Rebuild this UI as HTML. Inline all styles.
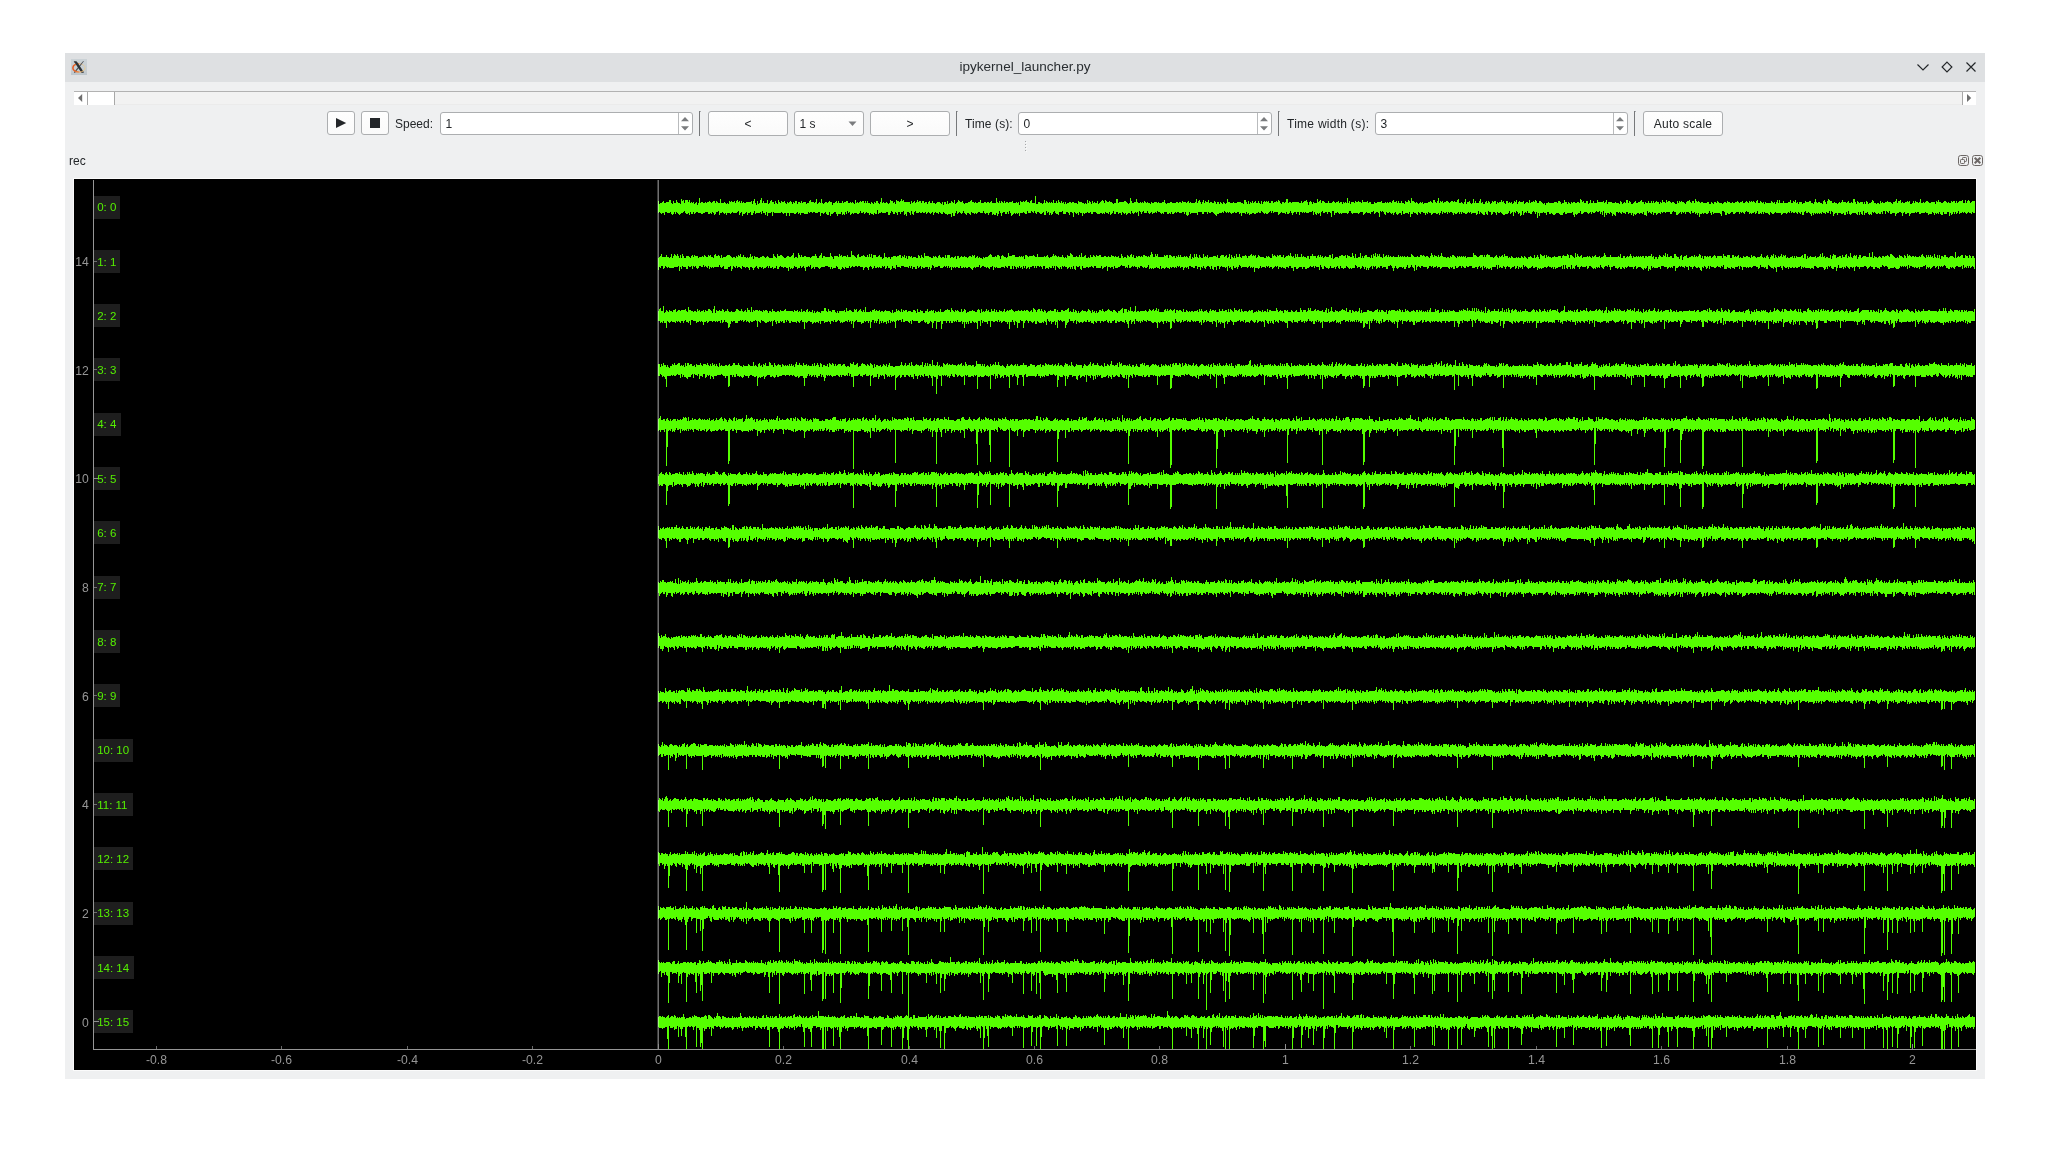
<!DOCTYPE html>
<html lang="en"><head><meta charset="utf-8"><title>ipykernel_launcher.py</title>
<style>
*{box-sizing:border-box;margin:0;padding:0}
html,body{width:2050px;height:1156px;overflow:hidden;background:#fff}
body{position:relative;font-family:"Liberation Sans",sans-serif;font-size:12px;color:#232629}
#root{position:absolute;left:0;top:0;width:2050px;height:1156px;will-change:transform}
.abs{position:absolute}
.win{position:absolute;left:65px;top:53px;width:1920px;height:1026px;background:#eff0f1}
.tbar{position:absolute;left:0;top:0;width:1920px;height:29px;background:#dee0e2}
.title{position:absolute;left:0;top:0;width:1920px;height:28px;line-height:28px;text-align:center;font-size:13.55px;color:#2a2e32;white-space:nowrap}
.sb{position:absolute;left:74px;top:91px;width:1902px;height:14px;background:#f2f2f2;border-top:1px solid #b2b2b2}
.sb .l,.sb .r,.sb .h{position:absolute;top:0;height:13px;background:#fff}
.btn{position:absolute;top:111px;height:25px;border:1px solid #acaeb0;border-radius:3px;background:linear-gradient(#fefefe,#fafafa);text-align:center;line-height:25px;white-space:nowrap}
.spin{position:absolute;top:112px;height:23px;border:1px solid #acaeb0;border-radius:3px;background:#fff;line-height:23px;padding-left:4.5px;white-space:nowrap;overflow:hidden}
.spin i{position:absolute;right:13px;top:0;width:1px;height:21px;background:#b9bbbd}
.lbl{position:absolute;top:112px;height:25px;line-height:25px;white-space:nowrap}
.sep{position:absolute;top:111px;width:1px;height:25px;background:#76787a}
.sep:after{content:"";position:absolute;left:1px;top:0;width:1px;height:1px;background:#a9abad}
svg{position:absolute;display:block;overflow:visible}
.plotwrap{position:absolute;left:73px;top:178px;width:1904px;height:893px;background:#fbfbfb}
.plot{left:1px;top:1px}
</style></head><body><div id="root">
<div class="win"><div class="tbar"></div><div class="title">ipykernel_launcher.py</div></div>
<svg class="abs" style="left:71px;top:59px" width="16" height="16" viewBox="0 0 16 16"><defs><linearGradient id="ibg" x1="0" y1="0" x2="0" y2="1"><stop offset="0" stop-color="#cbd2d6"/><stop offset="0.75" stop-color="#c6cdd2"/><stop offset="1" stop-color="#bcc5cb"/></linearGradient><linearGradient id="iel" gradientUnits="userSpaceOnUse" x1="1.5" y1="0" x2="14.5" y2="0"><stop offset="0" stop-color="#e8521a"/><stop offset="0.45" stop-color="#ea8c48"/><stop offset="0.8" stop-color="#eec580"/><stop offset="1" stop-color="#efcf8c"/></linearGradient></defs><rect width="16" height="16" fill="url(#ibg)"/><g fill="none" stroke="url(#iel)"><path d="M1.9 8.9 A6.2 4.2 0 0 1 8 4.7" stroke-width="1.5"/><path d="M8 4.7 A6.2 4.2 0 0 1 14.1 8.9" stroke-width="0.8" stroke-opacity="0.8"/></g><path d="M12.9 2.3 L12.2 2.1 L3 13.1 L3 13.8 L4.2 13.8 Z" fill="#4b4f53"/><path d="M2.9 2.2 L5.3 2.2 Q5.9 2.6 6.5 3.6 L12.7 13 L12.7 13.7 L10.4 13.7 L4.1 4.2 Q3.5 3.2 2.9 2.9 Z" fill="#2d3135"/><g fill="none" stroke="url(#iel)"><path d="M1.9 8.9 A6.2 4.2 0 0 0 8 13.1" stroke-width="1.5"/><path d="M8 13.1 A6.2 4.2 0 0 0 14.1 8.9" stroke-width="1.0"/></g></svg>
<svg class="abs" style="left:1910px;top:56px" width="72" height="22" viewBox="1910 56 72 22" fill="none" stroke="#232629" stroke-width="1.15"><path d="M1917.5 64.5 L1923 70 L1928.5 64.5"/><path d="M1947 62.1 L1951.9 67 L1947 71.9 L1942.1 67 Z"/><path d="M1966.5 62.5 L1975.5 71.5 M1975.5 62.5 L1966.5 71.5"/></svg>
<div class="sb"><div class="l" style="left:0;width:13px"></div><div class="abs" style="left:13px;top:0;width:1px;height:13px;background:#a8a8a8"></div><div class="h" style="left:14px;width:26px"></div><div class="abs" style="left:40px;top:0;width:1px;height:13px;background:#a8a8a8"></div><div class="abs" style="left:1888px;top:0;width:1px;height:13px;background:#a8a8a8"></div><div class="r" style="left:1889px;width:13px"></div><div class="abs" style="left:41px;top:12px;width:1847px;height:1px;background:#ebebeb"></div></div>
<svg class="abs" style="left:74px;top:92px" width="1902" height="13" viewBox="74 92 1902 13"><path d="M78 98 L82.2 94 L82.2 102 Z" fill="#6f6f6f"/><path d="M1971.2 98 L1967 94 L1967 102 Z" fill="#6f6f6f"/></svg>
<div class="btn" style="left:327px;width:28px;height:24px"></div>
<div class="btn" style="left:361px;width:28px;height:24px"></div>
<svg class="abs" style="left:327px;top:111px" width="62" height="25" viewBox="327 111 62 25"><path d="M336 118 L346.2 123 L336 128 Z" fill="#232629"/><rect x="370" y="118" width="10" height="10" fill="#232629"/></svg>
<div class="lbl" style="left:395px">Speed:</div>
<div class="spin" style="left:440px;width:253px">1<i></i></div><svg class="abs" style="left:680px;top:116px" width="10" height="16" viewBox="0 0 10 16"><path d="M1 5.2 L5 1 L9 5.2 Z M1 10.2 L5 14.4 L9 10.2 Z" fill="#7a7c7e"/></svg>
<div class="sep" style="left:699px"></div>
<div class="btn" style="left:708px;width:80px">&lt;</div>
<div class="btn" style="left:794px;width:70px;text-align:left;padding-left:4.5px">1 s</div>
<svg class="abs" style="left:848px;top:121px" width="10" height="6" viewBox="0 0 10 6"><path d="M0.5 0.6 L8.5 0.6 L4.5 5 Z" fill="#7a7c7e"/></svg>
<div class="btn" style="left:870px;width:80px">&gt;</div>
<div class="sep" style="left:956px"></div>
<div class="lbl" style="left:965px;letter-spacing:0.1px">Time (s):</div>
<div class="spin" style="left:1018px;width:254px">0<i></i></div><svg class="abs" style="left:1259px;top:116px" width="10" height="16" viewBox="0 0 10 16"><path d="M1 5.2 L5 1 L9 5.2 Z M1 10.2 L5 14.4 L9 10.2 Z" fill="#7a7c7e"/></svg>
<div class="sep" style="left:1278px"></div>
<div class="lbl" style="left:1287px;letter-spacing:0.27px">Time width (s):</div>
<div class="spin" style="left:1375px;width:253px">3<i></i></div><svg class="abs" style="left:1615px;top:116px" width="10" height="16" viewBox="0 0 10 16"><path d="M1 5.2 L5 1 L9 5.2 Z M1 10.2 L5 14.4 L9 10.2 Z" fill="#7a7c7e"/></svg>
<div class="sep" style="left:1634px"></div>
<div class="btn" style="left:1643px;width:80px;letter-spacing:0.25px">Auto scale</div>
<div class="abs" style="left:1026px;top:142px;width:1px;height:10px;background:repeating-linear-gradient(#f9fafa 0 1px,transparent 1px 3px)"></div>
<div class="abs" style="left:1025px;top:141px;width:1px;height:10px;background:repeating-linear-gradient(#a4a6a8 0 1px,transparent 1px 3px)"></div>
<div class="abs" style="left:69px;top:153px;height:16px;line-height:16px">rec</div>
<svg class="abs" style="left:1958px;top:155px" width="26" height="11" viewBox="0 0 26 11" fill="none" stroke="#6d6866"><rect x="0.5" y="0.5" width="10" height="10" rx="2.2"/><rect x="4.5" y="2.5" width="4" height="4" rx="0.8" /><rect x="2.5" y="4.5" width="4" height="4" rx="0.8" fill="#eff0f1"/><rect x="14.5" y="0.5" width="10" height="10" rx="2.2"/><path d="M16.7 2.7 L22.3 8.3 M22.3 2.7 L16.7 8.3" stroke-width="2"/></svg>
<div class="plotwrap">
<svg class="plot" width="1902" height="891" viewBox="0 0 1902 891">
<rect width="1902" height="891" fill="#000"/>
<g fill="#55ff00" shape-rendering="crispEdges">
<path d="M584 22h1v3h1v-1h2v-1h1v-1h1v2h2v-1h3v-2h2v3h1v1h1v-3h1v2h2v-3h1v2h1v1h2v1h1v-5h1v2h1v-1h1v3h1v-3h3v2h1v-2h1v3h1v-1h1v1h1v-1h1v2h1v-1h1v-1h1v3h1v-2h1v-5h1v5h1v-1h2v1h2v-1h1v1h1v-1h2v-1h1v1h1v1h1v-1h1v-1h2v2h1v-2h1v1h1v1h2v-4h1v4h3v-1h1v1h1v1h1v-1h1v1h1v-3h1v1h1v-1h1v1h2v-1h1v2h1v-2h1v-1h1v2h1v-1h1v2h1v-2h1v2h1v-1h1v1h2v-1h5v-1h1v3h1v-3h1v-2h1v4h1v2h1v-4h1v3h1v-1h1v-3h1v-2h1v5h1v-2h1v2h3v-3h1v4h1v-1h1v-2h1v-1h1v2h2v2h1v-3h1v2h1v1h1v-4h1v2h1v1h1v-2h1v1h2v-1h1v2h1v1h1v-2h1v1h1v-1h1v-1h1v1h1v2h1v-2h1v1h1v-2h2v3h1v-2h2v1h1v-2h1v2h1v-1h3v2h1v-1h2v-2h1v-1h1v2h3v1h1v-1h1v-3h1v5h1v-1h1v-1h1v1h1v-4h1v4h1v1h1v-1h1v-1h2v1h1v-1h1v-1h1v1h2v3h1v-2h2v-1h1v-1h1v2h1v-2h1v2h3v-2h1v2h1v-1h2v-1h2v2h2v-1h1v1h1v-1h1v1h1v1h1v-4h1v3h1v-1h1v1h1v-1h1v-1h1v1h1v-1h2v2h1v-2h1v2h1v-2h1v2h2v1h1v-2h1v1h1v1h1v-2h1v1h1v-2h2v2h1v1h1v-2h1v-4h1v5h1v-1h1v1h2v-1h1v1h1v1h1v-1h1v-3h1v1h2v2h1v-1h1v2h1v-4h1v1h2v1h1v-1h1v-2h1v2h1v-1h1v2h6v2h1v-3h1v2h1v-1h1v-1h1v2h1v-1h1v-2h1v2h1v-1h2v2h1v-2h2v2h1v-1h2v2h1v-2h1v-1h1v2h2v-2h1v2h2v1h1v-1h1v-1h3v1h1v1h1v-2h1v3h1v-3h2v2h1v-3h1v3h1v-1h2v-2h1v1h1v1h1v-3h1v4h1v-1h1v-1h1v-2h1v1h1v1h2v-1h1v2h1v1h1v-1h3v-1h2v-1h1v-1h1v2h2v1h1v-1h1v1h2v-1h2v-2h1v3h3v-1h2v1h1v-1h2v1h1v-1h1v-1h1v2h4v-5h1v4h1v1h1v-2h1v2h1v-2h1v1h1v1h1v-2h1v2h1v-1h2v1h1v-1h3v-1h1v2h3v-1h1v1h1v-1h1v3h1v-4h1v1h2v-1h1v1h1v-1h1v-1h1v2h2v1h1v-2h1v-1h1v3h3v-7h1v8h2v-2h2v1h2v1h1v-1h1v-3h1v3h1v-2h1v1h1v1h1v-1h1v1h1v-1h1v1h1v-3h1v3h2v-2h1v2h1v-3h1v2h1v1h1v-2h1v2h1v-1h1v2h1v-2h1v2h1v-1h2v-1h2v1h1v-1h2v1h3v1h1v-3h1v1h3v1h2v1h1v-1h1v1h1v-4h1v3h1v-2h1v1h1v2h1v-3h1v2h1v-1h1v1h2v-2h1v3h1v-1h1v-1h1v-1h1v-1h1v1h1v2h1v-3h1v1h1v1h2v-1h1v1h2v1h1v1h1v-1h2v-4h2v4h1v-1h5v-1h2v1h1v1h1v1h1v-1h1v-5h1v3h1v2h2v-1h2v-3h1v3h1v1h2v-1h1v1h1v-1h1v1h1v-2h1v1h1v1h1v-1h1v1h2v1h1v-2h1v1h2v-1h3v1h1v-1h1v1h3v-1h2v-2h1v3h1v1h1v-1h3v-1h2v1h4v-1h2v1h1v-1h2v1h1v-2h1v1h3v1h1v-1h1v-1h1v2h1v-1h1v1h4v-1h1v-3h1v4h1v-2h1v-1h1v2h1v2h1v-2h1v-2h1v3h1v-2h1v1h2v-2h1v3h1v-1h2v1h2v-2h1v1h1v2h1v-2h2v2h1v-2h1v1h1v1h1v-2h1v1h1v1h1v-1h1v-4h1v3h2v1h3v-1h1v1h3v-1h4v1h2v1h1v-4h2v2h1v2h1v-3h1v3h1v-2h1v1h1v-2h1v2h1v-1h1v-1h1v2h2v-2h1v2h1v1h1v-3h1v3h1v-2h1v-1h1v1h1v-1h1v1h1v-1h1v2h2v-2h2v2h1v-1h2v-1h1v1h1v-2h1v1h1v2h1v1h1v-2h2v1h1v-1h1v-3h2v4h1v-1h2v1h1v-1h7v1h2v-2h1v2h1v-1h1v-1h2v-1h1v2h1v3h1v-3h1v-1h1v1h1v2h1v-2h1v1h3v-4h1v3h1v-1h1v-1h1v3h1v-2h2v1h1v1h3v-2h1v2h3v-1h1v-1h1v1h1v1h1v-1h2v-1h1v2h1v-1h2v2h1v-2h1v1h1v-1h1v1h1v-5h1v5h1v-2h1v3h1v-2h3v1h1v-2h1v1h2v-1h1v1h2v1h1v-3h1v2h4v-1h1v2h1v-1h2v2h3v-2h1v1h2v-1h4v-1h1v2h3v-1h1v1h1v-1h1v1h1v-1h2v1h1v-2h1v-1h1v2h2v-1h1v2h1v-2h1v2h2v-2h1v2h2v1h1v-3h1v1h2v-2h1v1h1v2h1v-5h1v3h2v1h1v1h1v-1h1v1h1v1h1v-1h1v-1h1v1h1v-1h1v2h1v-1h4v-1h2v-1h1v1h1v1h1v-3h2v2h1v1h1v-2h1v-3h1v5h1v-2h1v1h1v-1h1v2h1v-1h2v-1h2v1h1v1h1v-1h1v-1h2v1h1v-1h1v1h2v-2h1v-1h1v4h2v-1h1v1h1v1h1v-2h1v-3h1v5h1v-2h2v-1h1v2h1v1h1v-1h1v-4h1v4h1v-2h1v2h3v-2h1v-2h1v4h1v-1h1v2h2v-2h1v-1h1v2h1v-2h1v1h1v2h1v-1h1v-2h1v1h1v-1h2v3h1v-2h1v1h1v-1h2v-2h1v2h1v-1h1v2h1v1h1v-3h2v2h1v-1h1v1h1v-1h1v2h1v-1h1v-2h1v1h1v-2h1v4h1v-2h1v-1h1v1h3v-1h1v3h1v-1h1v-1h2v1h1v-3h1v3h1v-1h2v-1h1v1h1v-2h1v1h1v2h2v-2h2v1h1v1h1v1h1v-1h1v2h1v-2h2v-1h1v1h5v-1h3v1h1v-2h2v1h1v2h1v-1h2v-3h1v2h2v2h1v-2h1v1h1v1h1v-2h1v1h1v-1h2v1h2v-1h2v1h1v-4h1v1h1v2h1v-1h1v2h2v-2h2v3h1v-1h1v-3h1v3h2v-2h1v2h3v-3h1v2h5v-1h1v2h1v-1h1v-2h1v4h1v-2h4v1h3v-1h1v1h3v1h1v-3h1v1h1v2h1v-1h1v-1h1v1h1v-3h2v3h1v-2h1v1h1v2h2v-1h1v-1h1v-1h1v2h2v-1h2v-1h1v-1h1v2h2v2h1v-2h1v1h2v-2h1v2h2v-2h1v2h1v-2h1v2h1v-1h1v-1h1v1h2v2h1v-2h1v1h1v-3h1v2h2v1h1v-3h1v2h1v-1h2v1h1v1h1v-1h2v1h1v1h2v-3h1v2h1v-2h1v1h1v-1h1v1h2v1h1v1h1v-2h1v-1h2v-1h1v2h1v1h1v-2h2v2h1v-4h1v2h1v1h1v-1h1v1h1v1h1v-1h2v1h4v-1h2v2h2v-2h1v1h1v1h1v-2h2v1h1v-2h1v1h1v1h3v1h1v-1h1v-1h2v1h1v-2h1v1h2v1h2v-1h1v1h2v-1h2v-1h1v1h1v1h1v-1h2v-1h1v2h2v-1h1v-1h1v1h1v1h1v-2h1v1h1v-1h1v1h1v-1h1v1h1v1h1v-2h1v-1h1v3h2v-2h1v1h1v1h1v-1h1v2h1v-2h1v1h5v-2h1v1h1v1h1v-1h1v2h1v-2h1v-2h1v3h1v-3h1v3h3v-2h1v2h4v-1h2v-2h1v3h2v-2h1v1h1v-2h1v3h1v-1h1v2h1v-2h3v2h1v-1h2v-2h1v1h3v-1h2v2h2v1h1v-2h1v-3h1v3h1v1h1v-1h2v1h2v1h1v-3h1v-1h1v2h1v2h1v-3h1v-2h1v1h1v1h2v2h2v-1h1v1h2v1h1v-1h1v-1h1v1h1v-1h1v-2h1v2h3v1h1v-1h1v-1h1v2h2v-1h1v1h1v-4h2v3h1v2h1v-3h1v1h1v1h1v-1h3v2h1v-2h1v2h1v-3h1v1h1v2h1v-1h2v-1h1v-2h1v1h1v2h2v1h1v-1h2v1h1v-3h1v2h1v-1h1v1h2v-1h2v-1h1v1h3v1h1v1h1v-2h2v-1h1v-2h1v4h1v-2h2v-1h1v3h1v-1h1v1h2v-1h2v-1h1v1h1v-1h1v3h2v-1h1v-2h1v2h1v-2h1v1h2v1h1v-1h1v-3h1v4h2v-1h1v1h1v-1h1v-1h2v1h1v1h2v-1h4v2h1v-3h1v1h1v-2h1v2h2v1h2v-1h1v-1h2v1h1v1h1v-1h1v1h2v-2h1v1h1v-1h2v2h1v-2h1v2h1v-1h1v-1h3v-1h1v3h2v-3h1v3h1v-2h1v-1h1v1h1v2h1v-1h1v-1h3V34h-2v-1h-1v2h-1v-1h-2v-1h-1v1h-1v1h-1v-1h-1v-1h-1v1h-1v-1h-1v1h-2v1h-1v-3h-1v2h-1v1h-1v-2h-1v2h-1v-2h-1v2h-1v1h-1v-2h-1v3h-1v-4h-2v2h-3v-2h-1v3h-2v-1h-1v-2h-1v2h-1v-1h-1v1h-1v-1h-1v2h-1v-2h-1v-1h-1v2h-3v1h-1v-2h-2v-1h-1v1h-4v1h-2v-2h-2v1h-1v-1h-1v1h-4v1h-1v2h-1v-3h-2v1h-2v-2h-1v1h-1v3h-1v-3h-1v-1h-2v1h-2v1h-1v2h-1v-3h-3v1h-2v-3h-1v2h-1v-1h-1v-1h-1v3h-1v-3h-2v3h-1v-2h-1v2h-2v-1h-1v1h-2v-1h-1v-1h-1v1h-1v-1h-1v3h-1v-1h-1v1h-1v-1h-1v-2h-1v1h-2v2h-1v-4h-1v4h-1v-1h-1v-2h-1v3h-1v-3h-1v3h-1v-1h-1v-1h-4v1h-1v1h-1v-1h-1v-3h-1v3h-1v-2h-1v3h-2v-2h-1v1h-2v-1h-3v2h-1v-2h-2v1h-1v2h-1v-4h-1v-1h-1v3h-1v-3h-1v2h-2v-1h-1v2h-1v-1h-2v-1h-1v2h-1v-1h-1v1h-1v-1h-1v1h-1v-1h-1v1h-1v-1h-1v2h-1v-2h-1v3h-1v-2h-1v-1h-1v-1h-1v1h-2v-2h-1v1h-1v3h-2v-3h-1v2h-1v-1h-1v-1h-1v2h-1v-1h-1v-1h-1v1h-2v-1h-1v1h-1v-2h-1v2h-1v-1h-1v1h-1v1h-1v-1h-3v1h-1v1h-1v-2h-5v-1h-1v1h-1v1h-2v-1h-1v-1h-1v3h-1v-1h-1v-1h-3v-1h-1v2h-1v-2h-1v2h-1v-1h-1v1h-2v-3h-1v2h-1v1h-1v-2h-1v1h-2v1h-1v-1h-1v1h-1v-2h-2v-1h-1v1h-1v2h-1v-1h-1v-1h-1v1h-1v-1h-1v2h-1v-2h-3v1h-1v1h-2v-2h-2v1h-1v1h-2v-1h-1v2h-2v-3h-1v-1h-2v5h-1v-2h-1v-1h-6v1h-1v-2h-1v3h-1v-2h-1v-2h-1v2h-1v1h-2v-1h-2v1h-1v-1h-1v1h-2v3h-1v-4h-1v2h-1v-2h-1v1h-1v-2h-1v1h-2v-2h-1v3h-1v-1h-1v-1h-3v2h-1v-2h-1v1h-1v-1h-1v2h-1v-2h-1v1h-1v1h-1v1h-2v-3h-2v-1h-1v1h-1v2h-2v-2h-4v1h-1v-1h-2v1h-1v-1h-1v2h-1v-1h-2v1h-1v1h-1v-2h-2v2h-1v-3h-1v2h-1v-1h-1v-1h-1v1h-1v-2h-1v5h-1v-1h-2v-3h-1v2h-1v-1h-2v1h-1v-1h-2v1h-1v1h-1v-1h-1v2h-1v-3h-1v2h-1v-2h-2v1h-1v-2h-2v2h-1v-1h-2v-1h-1v2h-1v-1h-1v-1h-1v1h-1v-1h-2v4h-1v-1h-1v-1h-1v2h-1v-3h-1v-1h-1v2h-1v-1h-2v2h-1v-2h-1v4h-1v-6h-1v4h-1v-3h-1v2h-1v-3h-1v1h-2v-1h-1v1h-1v1h-2v-1h-1v2h-1v-2h-1v1h-1v1h-1v-1h-1v-1h-3v1h-1v1h-2v-3h-1v2h-2v1h-1v1h-1v-1h-1v3h-1v-2h-1v-3h-1v1h-5v1h-2v-2h-1v1h-1v2h-3v-1h-1v-1h-3v1h-1v1h-2v-1h-1v-1h-1v1h-2v-2h-2v3h-1v-2h-2v-1h-1v1h-3v3h-1v-3h-1v5h-1v-6h-1v2h-1v-2h-1v-1h-1v1h-1v2h-2v-1h-2v-2h-1v2h-1v-1h-1v1h-1v2h-1v-4h-1v4h-1v1h-1v-3h-1v1h-1v-2h-1v-1h-1v2h-1v-1h-1v4h-1v-4h-1v1h-1v1h-1v-3h-1v2h-1v1h-3v1h-2v-1h-1v-1h-1v-1h-1v1h-2v-1h-1v3h-1v-2h-1v-1h-2v2h-1v1h-1v-3h-2v-1h-1v4h-1v-1h-1v-2h-1v3h-2v-1h-1v-1h-1v-1h-1v2h-1v-3h-1v3h-1v1h-1v-2h-4v1h-1v-2h-1v1h-1v-1h-1v1h-1v1h-2v-1h-2v-1h-1v2h-1v-2h-1v2h-1v-2h-1v1h-1v1h-2v-1h-1v2h-1v-2h-1v-1h-2v1h-1v-1h-1v2h-1v-2h-1v1h-2v-1h-1v2h-1v-3h-1v2h-1v2h-1v-2h-1v1h-2v-1h-3v1h-1v1h-1v-2h-2v-1h-1v2h-1v-1h-1v2h-1v-2h-2v-1h-2v2h-1v-1h-1v-1h-1v3h-1v-1h-1v-1h-2v-1h-1v2h-2v3h-1v-5h-1v2h-1v-1h-3v1h-2v-3h-1v4h-1v-2h-2v1h-1v1h-1v-1h-1v-2h-1v1h-1v2h-1v-2h-1v1h-1v-1h-1v-1h-1v1h-2v-1h-1v3h-1v-1h-1v-2h-1v-1h-1v1h-1v-1h-1v6h-1v-4h-1v-1h-2v1h-1v1h-1v-3h-1v1h-2v2h-1v-1h-3v-1h-1v1h-1v1h-1v1h-1v-3h-3v1h-1v1h-1v-1h-5v1h-1v-1h-1v-2h-2v2h-1v1h-1v-1h-5v1h-1v-1h-1v1h-1v-1h-1v-1h-1v1h-2v2h-1v-4h-2v6h-1v-4h-1v-1h-2v2h-1v-2h-2v1h-2v-2h-1v1h-1v4h-1v-3h-1v1h-1v-1h-1v2h-1v-1h-1v-2h-1v3h-1v-4h-1v1h-3v1h-3v-1h-1v1h-1v-1h-1v1h-1v-1h-2v3h-1v-3h-2v2h-1v-2h-2v1h-1v2h-1v-2h-1v-2h-1v2h-1v1h-2v-2h-1v2h-1v-1h-3v-1h-1v1h-1v1h-1v1h-1v-3h-4v1h-1v-2h-1v2h-1v-2h-1v1h-1v1h-1v1h-2v-1h-1v1h-1v-1h-1v-1h-1v-1h-1v2h-2v-1h-1v1h-2v1h-2v-1h-2v1h-2v1h-1v-2h-1v1h-1v-2h-1v2h-1v-1h-3v3h-1v-3h-1v1h-1v-2h-2v1h-2v-1h-1v1h-2v1h-1v-1h-1v-1h-1v1h-1v-1h-1v1h-1v-1h-1v-1h-1v2h-1v-1h-1v1h-3v1h-2v2h-1v-1h-1v-1h-1v-1h-1v-1h-2v1h-2v-1h-1v2h-1v-2h-3v2h-2v-2h-4v3h-1v-2h-6v1h-1v-2h-1v3h-1v1h-1v-1h-1v-3h-1v2h-1v-2h-2v1h-3v-1h-2v1h-1v-1h-1v1h-1v1h-2v-2h-1v2h-1v-1h-1v1h-2v-2h-3v2h-1v-1h-1v1h-1v-1h-1v-1h-2v-1h-1v2h-1v-1h-1v1h-2v1h-1v-2h-1v1h-1v1h-1v-1h-1v-2h-1v2h-3v-2h-1v1h-1v2h-1v-2h-1v-1h-1v5h-1v-4h-1v1h-1v-1h-1v1h-1v1h-1v-1h-1v-2h-1v3h-1v-1h-2v1h-1v1h-1v-2h-1v1h-1v-1h-1v-1h-1v3h-1v-2h-2v1h-1v-2h-2v2h-2v-3h-1v2h-1v1h-1v1h-1v-3h-1v2h-1v-1h-2v-1h-1v2h-1v-1h-1v1h-1v-1h-2v1h-3v-1h-1v-1h-3v2h-2v-2h-1v1h-2v-1h-1v1h-2v1h-1v-1h-1v3h-1v-3h-2v-1h-1v3h-1v-2h-1v1h-1v-1h-1v-1h-1v5h-1v-4h-1v-1h-2v3h-1v-2h-1v-1h-2v2h-3v-3h-1v1h-3v3h-1v-1h-2v-1h-1v-2h-1v1h-1v2h-1v1h-1v-2h-1v2h-1v-3h-1v1h-1v-2h-1v4h-2v-3h-1v1h-1v1h-2v-1h-1v-1h-2v2h-1v-1h-1v-2h-1v2h-1v-1h-1v-1h-1v2h-3v-2h-1v3h-2v-1h-1v-1h-1v1h-3v3h-1v-3h-1v1h-1v-1h-1v1h-1v-1h-1v1h-1v1h-1v1h-1v-3h-1v-2h-1v3h-1v-2h-1v2h-2v-2h-2v1h-1v3h-1v-3h-1v-2h-1v3h-1v2h-1v-3h-1v2h-2v-1h-1v1h-1v-3h-2v1h-1v2h-1v-2h-2v1h-1v-1h-1v-2h-1v2h-3v-1h-2v1h-1v1h-1v-1h-1v1h-1v-1h-2v-1h-1v3h-1v-1h-1v-1h-2v2h-1v-1h-1v-1h-1v-2h-1v2h-1v1h-1v-1h-1v-1h-1v1h-1v1h-1v-3h-1v2h-1v3h-2v-3h-1v4h-1v-3h-3v1h-1v-1h-2v-1h-1v-1h-1v2h-2v-1h-1v-1h-1v2h-1v-1h-2v-1h-1v1h-1v2h-1v-3h-1v1h-1v1h-1v-1h-1v-1h-1v1h-1v1h-1v-2h-1v1h-2v-1h-1v1h-2v-1h-1v1h-3v-2h-1v1h-1v3h-1v-1h-1v-3h-1v4h-1v-2h-1v-1h-2v4h-1v-2h-1v1h-1v-4h-1v1h-2v2h-1v-2h-2v3h-1v-2h-1v-1h-1v2h-2v-2h-1v-1h-1v2h-1v2h-2v-3h-2v1h-4v-1h-1v1h-2v1h-1v-4h-1v4h-2v-1h-1v2h-1v-1h-2v-1h-1v2h-1v-2h-2v-1h-1v1h-1v1h-1v-2h-1v1h-2v-2h-1v2h-1v1h-2v-1h-3v1h-1v-1h-1v1h-1v1h-1v-3h-1v1h-1v-2h-1v3h-1v-2h-1v3h-1v-1h-1v1h-1v-3h-1v2h-3v2h-1v-2h-1v-2h-2v1h-1v1h-2v2h-1v-4h-1v3h-2v-1h-1v-2h-1v1h-1v1h-1v-1h-2v3h-1v-4h-2v1h-3v-1h-2v1h-1v-1h-2v1h-1v-1h-1v2h-4v-1h-3v2h-1v-2h-1v1h-1v-2h-1v1h-1v1h-2v-1h-4v3h-1v-3h-2v3h-1v-3h-2v1h-1v-1h-1v-1h-1v1h-7v-1h-1v4h-1v-4h-1v1h-3v3h-1v-4h-1v3h-1v-2h-2v-2h-1v3h-1v-2h-1v1h-4v1h-1v-3h-1v2h-1v2h-2v-3h-1v1h-2v2h-1v-3h-1v1h-1v1h-2v2h-1v-4h-1v1h-1v2h-1v-4h-1v1h-1v1h-4v-1h-1v1h-1v1h-1v-1h-3v2h-1v-2h-1v1h-1v-1h-1v-1h-1v1h-2v2h-1v-4h-1v1h-2v2h-1v1h-1v-2h-1v-1h-1v2h-1v-1h-1v1h-2v-2h-3v1h-2v1h-2v-1h-3v-1h-2v1h-1v1h-1v-2h-1v2h-2v-2h-1v3h-1v-2h-1v1h-2v-1h-1v-2h-1v1h-1v1h-2v1h-1v1h-1v-1h-1v-1h-1v-1h-1v2h-1v-2h-1v2h-1v1h-1v-1h-1v-2h-1v1h-3v-1h-2v3h-1v-2h-2v1h-1v-1h-1v-1h-1v1h-1z"/>
<path d="M584 79h1v-1h1v-1h1v-2h1v3h4v-2h1v2h2v1h1v-1h1v-3h1v4h1v-2h1v-2h1v1h1v1h1v-2h1v2h1v2h1v-3h1v3h1v-4h1v2h1v2h2v-2h3v1h1v1h1v-2h1v-1h1v2h1v-2h1v1h3v2h1v-1h3v-1h1v1h1v-2h1v1h1v1h2v-2h1v1h1v-1h1v2h2v1h1v-3h1v-1h1v2h2v-1h1v1h1v2h1v-3h1v3h1v-1h3v-1h1v-1h3v1h1v1h1v1h1v-1h2v1h1v-2h1v1h1v-2h1v1h1v-2h1v3h2v-2h1v2h2v1h1v-1h1v1h1v-1h1v-3h1v3h1v-1h1v3h1v-3h1v1h3v1h2v-1h2v-1h2v1h1v1h1v-1h1v-1h1v1h1v1h4v-4h1v2h1v1h1v1h1v-4h1v2h2v-1h2v1h1v1h1v1h2v-1h1v-1h2v1h2v-1h1v-1h1v-2h1v5h1v-1h2v1h1v-5h1v2h1v2h1v-2h1v2h2v-1h2v1h4v1h1v-1h1v-1h3v-2h1v2h1v2h2v-2h1v-1h1v-2h1v5h1v-2h2v1h5v-4h1v3h1v1h1v2h1v-3h4v1h1v-3h1v2h1v-1h1v2h1v-1h3v1h1v-2h1v2h3v-6h1v4h2v1h1v1h1v1h1v-3h1v-1h1v3h2v-1h2v-1h1v1h1v1h2v-2h1v2h1v-3h1v3h1v-3h1v4h1v-3h3v2h2v-1h1v-1h1v2h2v2h1v-1h1v-5h1v4h2v1h1v-1h2v2h1v-2h2v-1h3v1h1v-1h2v-1h2v3h1v-2h1v1h1v-2h1v3h1v-2h1v3h1v-3h2v1h1v-1h1v2h1v-1h3v1h2v-3h1v1h1v2h1v-3h1v2h1v1h1v-5h1v3h4v1h2v1h2v-2h1v1h1v-1h1v1h1v1h1v-2h1v-1h1v2h1v1h1v-1h2v1h1v-3h1v3h1v-3h3v3h1v-1h2v1h1v-1h1v-1h1v3h1v-3h2v2h1v-1h1v-1h1v1h2v-1h1v1h2v1h1v-1h1v-1h2v1h1v-2h1v1h1v-1h1v3h1v-1h1v-1h1v2h1v-1h1v1h2v1h1v-2h1v1h1v-1h3v-1h1v-1h1v-1h1v1h1v2h3v-1h1v1h1v-2h2v1h1v3h1v-3h1v-1h1v1h1v1h2v1h1v-1h1v-4h1v3h3v-1h3v2h4v-1h1v1h1v-1h1v1h1v-1h1v3h1v-4h2v1h1v1h1v-1h4v-1h1v1h1v1h2v-3h1v3h6v-1h1v1h1v-1h1v-1h1v2h1v1h1v-1h2v-1h1v-2h1v2h1v-1h1v1h1v1h1v-1h1v1h3v-2h1v2h1v1h1v-1h1v1h1v-3h1v1h2v-3h1v1h1v1h1v2h3v-1h1v1h2v-2h1v2h1v-4h1v4h2v-1h1v-1h1v3h2v-1h1v1h1v-3h1v2h2v-2h1v1h1v1h1v-2h1v1h2v-1h2v2h3v-1h2v1h2v-1h1v1h2v-2h1v1h2v1h1v-1h1v1h2v-1h1v2h2v-4h1v2h1v2h1v-1h2v1h1v-3h1v1h1v1h1v-2h1v-1h1v3h1v-2h1v3h2v-2h1v1h1v-1h2v1h1v-1h1v1h1v-2h2v1h2v1h1v-1h1v1h1v-2h1v-3h1v2h1v3h2v-3h1v2h1v-2h1v3h6v-2h1v1h1v-1h2v3h1v-3h2v1h1v1h1v-1h2v2h1v-2h1v1h1v-2h1v2h1v-2h1v2h3v-1h1v1h1v-1h1v1h1v1h1v-2h1v-2h1v5h1v-2h1v1h1v-4h1v3h1v-3h1v3h1v1h1v-3h1v2h1v1h2v-4h1v3h1v-1h1v1h1v-2h1v3h1v-1h4v-1h3v1h1v-2h1v3h2v-2h1v-1h3v2h1v-1h1v-1h1v3h1v-1h1v-3h1v5h1v-4h1v2h1v1h1v-2h1v2h1v-4h1v3h2v-3h1v3h1v1h1v-2h3v-1h1v1h1v2h1v-2h2v-1h1v-1h1v2h1v-1h1v1h1v-1h1v3h1v-1h1v-2h1v1h1v1h4v1h2v-2h1v1h1v-1h1v1h1v1h2v-4h1v2h1v-1h1v1h1v1h1v-2h1v1h1v-1h2v2h2v-2h1v3h1v-1h1v-1h2v-1h1v1h1v-3h1v3h1v1h1v-1h1v2h1v-4h1v3h1v-3h1v3h3v-3h1v3h1v-1h1v1h2v1h1v-2h2v3h1v-3h2v-2h1v2h3v2h1v-2h1v-1h1v2h1v-2h1v2h1v-1h1v2h1v-1h1v-1h1v1h3v-2h2v3h1v-4h1v5h1v-1h1v-1h3v1h1v-2h2v-1h2v1h2v-1h1v3h1v-3h1v1h2v1h2v-4h1v3h1v2h1v-4h1v4h2v-1h2v-4h1v5h1v-2h1v2h1v-2h1v-1h2v2h3v1h1v-3h1v3h1v-4h1v2h1v-3h1v4h1v-3h1v2h1v-2h1v3h2v1h1v-4h1v3h1v-1h1v-1h1v2h1v-2h1v2h1v-1h1v1h2v-1h1v1h4v-2h1v2h1v-1h1v1h1v-1h1v1h1v-1h1v1h2v-1h1v1h3v-3h1v1h1v1h1v1h3v-1h1v1h2v-2h2v1h1v-1h1v1h1v1h1v-1h2v1h1v1h1v-2h1v-3h1v2h1v2h1v-2h1v1h2v1h1v-2h1v2h1v-1h1v-3h1v3h1v1h3v1h1v-1h2v1h1v-2h1v1h1v-2h2v1h1v1h1v1h1v-2h1v1h1v-1h1v1h1v-1h1v1h1v-1h1v1h1v-1h1v2h1v-1h6v-4h1v2h2v1h1v1h2v-1h1v-1h3v2h1v-2h1v2h1v-2h1v-1h1v1h2v2h3v1h1v-1h1v-1h1v-1h1v2h1v1h1v-2h1v1h1v-1h1v-1h1v2h1v-3h1v2h3v2h1v-1h1v1h1v-2h1v1h1v1h3v-1h1v1h1v-1h1v1h2v-2h1v1h1v1h1v-2h1v1h1v1h1v1h1v-2h2v-1h1v1h1v1h2v-3h1v3h1v-1h1v-2h1v2h1v2h1v-5h1v1h1v1h2v-1h1v3h1v-3h1v2h1v-1h1v1h2v1h1v-1h2v-1h1v1h3v-1h3v2h1v-2h1v-1h1v1h3v-2h1v1h1v3h1v-3h2v1h1v1h1v1h1v-5h1v4h1v-3h1v2h1v1h1v-1h1v-1h1v3h1v-1h4v-1h1v1h1v-1h1v1h1v1h1v-2h1v1h1v-1h1v-1h1v2h3v-1h1v2h1v-1h2v-1h1v-3h1v2h1v2h4v-2h1v2h7v-1h1v1h1v-3h1v4h2v-2h2v2h1v-1h1v-1h1v1h1v-1h1v-2h1v2h1v2h1v-2h1v1h2v-1h1v1h1v-1h1v1h1v-1h1v1h1v-1h2v2h1v-2h2v1h1v-1h3v-2h1v3h1v-1h1v3h1v-2h2v2h1v-2h1v-2h1v1h1v1h2v-2h1v1h1v-3h1v4h1v-3h1v3h2v-1h2v2h2v-4h2v2h1v1h2v2h1v-3h1v-1h1v5h1v-3h1v-1h2v-1h1v3h2v-1h2v-1h2v1h1v-2h1v2h1v-1h1v1h1v-1h1v-2h1v1h1v3h1v-2h1v3h1v-3h2v1h1v-1h1v1h1v-1h2v2h1v-1h1v-1h1v-1h1v1h1v2h1v-2h5v2h1v-4h1v2h2v1h1v-2h3v3h2v-3h2v2h1v-1h1v1h1v-1h1v-1h1v3h1v-1h1v1h2v-2h1v1h2v-1h2v1h2v1h1v-3h1v2h1v-1h2v1h1v1h1v-1h3v-1h1v-2h1v3h1v1h1v-1h1v1h1v-2h1v-1h1v2h1v2h1v-2h1v-2h1v1h1v-2h1v4h1v-3h1v2h1v1h1v-2h1v1h1v-1h1v-2h1v3h1v-2h1v1h1v-1h1v3h1v-1h1v1h2v-1h2v-1h1v2h1v-2h1v2h1v-2h1v1h4v-1h1v-1h1v3h1v-4h2v5h1v-3h1v2h1v-1h1v-1h1v1h4v-1h1v2h1v-1h2v-1h1v-2h1v3h1v-4h1v4h1v-1h1v2h1v-1h2v1h2v-3h1v4h1v-3h1v-2h1v1h2v3h1v-1h2v-1h2v2h1v-3h1v2h2v-2h1v-1h1v4h1v-2h1v1h1v-4h1v4h1v1h1v-2h1v-1h1v1h1v-1h1v4h1v-2h1v-2h2v3h1v-1h1v-1h3v1h3v-4h1v4h2v-5h1v6h1v-2h1v1h2v1h1v-1h1v-1h1v1h1v1h1v-2h2v1h1v-1h2v-1h1v1h1v1h1v-3h2v1h1v1h1v1h1v1h2v-1h1v1h1v-3h1v1h2v1h1v1h1v-3h1v1h1v2h1v-4h1v2h1v-1h1v1h1v1h1v-1h2v1h1v-1h1v1h3v-1h1v1h1v-2h1v-1h1v2h1v1h1v1h1v-3h1v2h1v-2h1v2h1v-2h1v2h1v-1h1v2h1v-4h1v3h1v1h1v-3h1v3h1v-3h1v4h1v-3h2v1h1v-2h2v2h2v1h1v-1h1v-1h3v1h1v1h1v-6h1v6h1v-1h1v-1h1v1h1v-1h1v-1h2v3h2v-3h1v1h2v2h1v-3h1v1h1v2h1v-2h2v2h1V90h-1v-2h-1v-1h-1v1h-1v1h-1v-2h-1v2h-1v-2h-1v2h-1v-1h-1v1h-1v-3h-1v4h-1v-3h-1v1h-3v-1h-2v1h-1v2h-1v-1h-1v-1h-1v1h-1v-1h-1v2h-2v-1h-2v-2h-1v-1h-1v1h-1v1h-1v-1h-1v1h-1v-1h-1v3h-1v-3h-1v1h-1v1h-1v-2h-2v1h-1v1h-1v1h-1v-2h-1v1h-1v-1h-1v2h-1v-4h-1v1h-2v1h-3v2h-1v-2h-1v1h-2v-1h-1v1h-1v-1h-2v-1h-2v2h-1v-3h-1v4h-1v-3h-1v1h-1v-1h-1v1h-1v-1h-1v1h-1v-1h-1v2h-1v1h-3v-1h-1v-1h-1v1h-4v1h-2v-2h-1v-1h-2v1h-1v-1h-1v-1h-1v2h-2v2h-1v-1h-2v-1h-2v2h-2v-2h-2v-1h-1v1h-1v1h-1v1h-1v-2h-1v-1h-2v1h-4v2h-1v-2h-2v-1h-1v1h-1v4h-1v-4h-1v1h-1v-1h-2v2h-1v-1h-1v-1h-1v-1h-1v2h-1v-1h-1v2h-1v-2h-1v1h-3v-3h-1v3h-1v3h-1v-4h-2v2h-2v-1h-1v-2h-1v1h-1v-1h-1v3h-1v-2h-1v2h-1v1h-1v-2h-1v-1h-4v1h-2v-1h-1v-1h-2v3h-1v-1h-2v1h-1v-1h-5v-1h-1v1h-1v-1h-1v2h-1v-3h-1v1h-2v1h-2v-1h-1v1h-2v-1h-1v1h-2v-1h-1v2h-1v-2h-1v1h-2v-1h-1v-1h-1v4h-1v-2h-1v-2h-1v1h-3v5h-1v-4h-1v-1h-1v2h-1v-1h-2v-1h-1v-1h-1v-1h-1v4h-2v-2h-1v1h-1v-1h-3v-2h-1v3h-1v1h-1v-2h-2v-1h-3v1h-1v1h-1v-1h-2v1h-1v-1h-1v1h-1v-1h-3v3h-1v-3h-1v-1h-1v3h-1v-3h-1v1h-3v2h-1v-1h-2v-1h-1v2h-1v-1h-2v-1h-1v2h-3v-4h-1v2h-1v-1h-1v2h-1v-1h-2v-1h-1v1h-1v1h-2v-1h-3v-1h-1v3h-1v-3h-1v2h-1v1h-1v-2h-1v-1h-1v2h-1v-1h-1v4h-1v-1h-1v-2h-1v-1h-1v1h-2v-1h-1v-1h-1v1h-1v2h-1v-2h-2v-1h-1v4h-1v-3h-2v-1h-1v2h-1v-1h-2v-1h-1v1h-1v-1h-1v1h-1v1h-2v3h-1v-5h-2v2h-1v-1h-1v1h-1v-1h-1v1h-1v1h-1v-2h-3v-1h-3v3h-1v-2h-2v1h-4v-1h-1v1h-1v-2h-1v4h-1v-1h-1v2h-1v-5h-1v2h-1v1h-1v-1h-1v2h-1v-1h-1v-1h-1v-1h-3v1h-1v1h-1v-3h-1v1h-1v2h-1v-2h-4v-1h-1v1h-1v1h-1v-1h-1v2h-1v-1h-1v-1h-1v2h-2v-2h-1v1h-1v1h-1v-1h-2v-2h-2v1h-2v3h-1v-3h-1v-2h-1v2h-1v-1h-2v1h-1v2h-1v-1h-1v-1h-1v-2h-1v3h-1v-1h-1v1h-1v-1h-1v2h-1v-1h-1v1h-1v-1h-1v-1h-1v-1h-2v2h-1v1h-1v-3h-1v1h-4v-1h-1v1h-1v2h-1v-2h-2v-2h-1v1h-1v3h-1v-1h-1v1h-1v-4h-1v4h-1v-2h-2v2h-1v-1h-1v-3h-1v4h-1v-4h-1v4h-1v-3h-1v1h-3v1h-2v1h-1v-2h-1v2h-1v-2h-1v1h-1v-1h-2v-1h-1v1h-1v1h-1v-1h-2v1h-2v1h-1v-1h-1v1h-1v-1h-1v2h-1v-3h-2v1h-2v-2h-1v1h-1v1h-2v1h-1v-1h-1v-1h-1v-1h-1v1h-1v-2h-1v4h-1v-2h-1v1h-1v-1h-1v2h-1v-3h-1v2h-1v1h-1v-3h-1v1h-2v1h-1v1h-1v-2h-2v-1h-1v1h-1v2h-1v-2h-1v-1h-1v2h-2v-1h-1v1h-1v-3h-1v4h-1v-4h-1v2h-4v3h-1v-2h-1v1h-2v-1h-1v1h-1v-2h-1v1h-1v-2h-1v4h-1v-3h-1v1h-1v-2h-1v1h-1v2h-1v-2h-2v1h-3v-2h-3v1h-2v-1h-1v2h-2v-1h-1v-1h-1v2h-1v-2h-2v1h-1v1h-2v-2h-1v3h-2v-2h-1v1h-1v-1h-1v2h-1v-1h-1v-1h-6v1h-1v1h-1v-2h-2v1h-1v-2h-1v1h-2v1h-1v-2h-1v1h-1v-1h-2v2h-1v1h-1v-2h-4v-1h-2v2h-1v-1h-1v-1h-1v1h-1v3h-1v-5h-1v6h-1v-3h-1v-1h-1v-2h-1v2h-1v1h-2v-3h-1v2h-1v2h-2v-2h-1v1h-1v-1h-3v1h-1v1h-1v-1h-1v-2h-1v2h-1v3h-1v-3h-1v-2h-1v-1h-1v1h-2v3h-2v-2h-3v1h-1v-2h-2v2h-1v-1h-1v1h-1v1h-1v-3h-1v1h-1v-1h-1v3h-1v-3h-1v1h-1v1h-1v2h-1v-2h-1v2h-1v-3h-1v2h-1v-2h-1v-1h-1v2h-1v1h-1v-2h-2v1h-1v-2h-1v-1h-1v3h-3v1h-1v-1h-1v1h-1v-1h-1v-1h-1v-1h-1v2h-2v1h-1v-1h-2v-2h-1v3h-1v-1h-1v-2h-1v1h-1v2h-1v-2h-1v1h-3v-2h-1v2h-1v1h-1v-1h-2v-1h-1v-1h-1v3h-2v-2h-1v-2h-1v5h-1v-3h-3v-1h-1v2h-1v-2h-1v1h-2v-1h-1v1h-1v1h-2v1h-2v-2h-2v2h-1v-2h-3v1h-1v1h-2v-2h-2v4h-1v-3h-2v-2h-2v2h-1v-1h-2v2h-1v-1h-2v-1h-1v1h-1v-1h-2v2h-1v-3h-1v1h-1v-1h-1v1h-1v1h-1v1h-1v-2h-2v1h-1v-2h-1v1h-1v-1h-1v2h-1v-1h-3v1h-1v-2h-1v2h-1v1h-1v-1h-3v4h-1v-5h-1v1h-1v-1h-1v1h-1v-2h-1v1h-1v1h-1v-1h-5v1h-1v-2h-1v-1h-1v2h-1v2h-1v-2h-1v1h-2v-2h-1v4h-1v-1h-1v-2h-1v1h-1v-2h-1v5h-1v-4h-1v1h-1v-1h-3v-1h-1v1h-1v2h-1v-3h-2v4h-1v-3h-2v3h-1v-1h-1v-3h-1v3h-1v-2h-1v-1h-2v1h-1v2h-1v-1h-1v-2h-1v2h-1v-1h-1v3h-1v-3h-2v2h-1v-3h-2v2h-2v-1h-2v-1h-2v3h-1v-2h-1v1h-1v-1h-1v1h-1v2h-1v-3h-2v1h-1v-2h-1v1h-1v-1h-1v2h-1v-1h-1v1h-1v-1h-2v1h-1v-1h-1v2h-1v-1h-2v-1h-1v1h-1v1h-1v-1h-2v1h-1v-3h-1v3h-1v-1h-2v-1h-1v1h-2v1h-1v-1h-1v1h-1v-1h-1v1h-1v-4h-1v2h-1v1h-2v-1h-1v1h-1v-1h-1v-1h-2v2h-1v-1h-1v2h-1v-2h-2v-1h-1v1h-1v-1h-1v1h-1v1h-2v-3h-1v3h-1v-1h-1v1h-1v-2h-3v-1h-1v1h-1v1h-2v1h-3v-2h-1v3h-1v-2h-2v1h-1v-1h-2v4h-1v-5h-1v1h-2v1h-1v1h-1v-3h-1v2h-5v-2h-2v2h-1v-1h-1v-1h-1v1h-2v1h-1v-1h-2v1h-3v-2h-1v4h-1v-1h-1v-3h-1v1h-2v-1h-1v4h-1v-1h-1v-3h-1v3h-1v-2h-1v2h-1v-2h-1v1h-1v1h-1v-2h-2v-1h-1v1h-1v-1h-1v3h-1v-2h-1v2h-1v-1h-1v-1h-1v-1h-1v4h-1v-4h-1v2h-1v-2h-1v2h-2v-1h-1v2h-1v-1h-2v1h-1v-3h-2v3h-1v-2h-1v-1h-1v1h-1v-1h-2v2h-1v-2h-1v2h-1v-2h-2v1h-2v2h-1v-2h-1v1h-1v1h-1v-3h-1v2h-1v-2h-1v3h-1v-2h-1v1h-1v-2h-1v2h-1v-1h-1v2h-1v-2h-1v-1h-1v3h-1v-3h-1v3h-2v-3h-2v2h-1v-1h-1v-1h-1v2h-1v-1h-3v1h-4v-1h-1v1h-1v-1h-1v3h-1v-4h-1v1h-2v2h-1v-1h-1v-1h-1v1h-1v-1h-2v-1h-2v1h-1v1h-1v-3h-1v2h-3v1h-1v-1h-1v1h-1v2h-1v-1h-1v-1h-1v-1h-2v1h-2v-1h-1v1h-1v-1h-1v1h-2v-2h-1v2h-2v-1h-2v1h-1v-1h-1v1h-1v-1h-1v3h-1v-3h-1v1h-1v-2h-1v2h-1v-2h-1v1h-1v-1h-1v1h-1v1h-3v-2h-2v1h-3v1h-1v-2h-1v-1h-1v3h-1v2h-1v-3h-1v2h-1v-2h-3v1h-2v-1h-1v2h-1v-3h-1v1h-1v1h-1v-2h-1v3h-2v-2h-2v2h-1v-3h-1v2h-1v-2h-1v2h-1v-1h-4v-1h-3v2h-1v-1h-3v-2h-1v4h-1v-1h-2v-2h-1v3h-1v1h-1v-2h-2v-2h-1v2h-1v1h-1v-3h-1v1h-1v-1h-1v2h-2v-1h-1v1h-1v-1h-1v1h-2v-2h-1v2h-1v1h-1v-2h-1v-1h-1v1h-1v3h-1v-2h-1v-1h-2v1h-1v2h-1v-3h-3v-1h-2v1h-1v-1h-2v1h-2v-1h-1v1h-1v1h-1v-2h-1v2h-3v-1h-1v2h-1v-1h-1v-1h-1v2h-1v1h-1v-1h-2v-2h-1v-1h-1v2h-3v1h-1v-2h-1v2h-1v-2h-2v-1h-3v1h-4v1h-1v1h-1v-1h-1v-1h-3v2h-1v-2h-1v1h-1v1h-1v-4h-1v2h-1v-1h-1v1h-2v4h-1v-3h-1v-2h-1v1h-1v1h-1v-2h-1v2h-2v1h-1v-2h-2v-1h-1v2h-1v1h-1v-1h-1v1h-1v-2h-1v4h-1v-3h-2v-1h-2v1h-1v-1h-2v-1h-1v1h-1v2h-2v-3h-1v2h-2v1h-1v-2h-1v1h-2v-2h-1v2h-1v-2h-1v1h-1v1h-2v1h-1v-2h-1v1h-1v-1h-2v2h-1v-1h-1v-2h-1v1h-1v1h-1v2h-1v-2h-1v-1h-2v3h-1v-2h-1v-1h-2v1h-1v-1h-2v-1h-1v3h-1v-1h-1v-1h-2v1h-1v-2h-1v2h-1v-1h-1v-1h-1v3h-1v2h-1v-5h-1v1h-2v2h-4v-3h-1v1h-1v1h-1v-1h-1v-2h-1v2h-5v1h-1v-1h-1v1h-1v-1h-1v2h-1v-3h-1v2h-1v-1h-1v-1h-1v1h-1v-2h-1v2h-2v-1h-2v2h-1v1h-1v-1h-1v-2h-1v1h-1v-1h-1v3h-1v-3h-1v1h-2v-1h-1v3h-2v-2h-3v-1h-1v3h-1v-2h-1v4h-1v-5h-1v1h-4v1h-5v-1h-1v1h-1v-1h-1v-1h-1v2h-1v1h-1v-3h-2v2h-1v-1h-1v3h-1z"/>
<path d="M584 132h1v-2h1v-1h1v3h2v-5h1v7h1v-1h1v-2h1v1h1v1h1v-2h1v1h2v1h1v-2h2v-1h1v3h1v-1h1v-1h2v1h1v-1h4v-1h1v2h1v1h1v-5h1v3h2v1h2v1h1v-1h2v1h1v-3h1v2h1v-1h1v2h1v-1h2v-1h1v2h1v-2h1v1h2v-2h2v1h1v1h1v2h1v-4h1v-3h1v7h1v-3h1v1h2v-1h1v1h2v-2h1v1h1v2h1v-1h2v-2h1v2h1v1h2v-1h1v1h3v-1h1v-2h2v1h1v1h2v-2h1v2h1v1h1v-1h1v-1h1v2h1v-4h1v2h2v2h1v-5h1v5h1v-2h1v1h1v-1h3v1h1v-1h1v1h2v1h1v-2h1v1h1v-1h2v1h1v2h1v-2h2v1h1v-3h1v2h2v1h2v-1h2v1h1v-2h1v1h3v-1h1v-1h1v2h7v1h1v-2h1v1h2v-1h1v2h1v-1h1v1h1v-3h1v3h1v-1h2v1h1v-2h1v-1h1v3h1v-1h1v1h2v-2h1v3h1v-2h1v2h1v-1h1v-1h1v1h2v1h1v-2h3v-3h2v3h1v1h1v-3h1v2h2v1h1v-2h3v2h1v1h1v-2h1v2h1v-2h5v-1h1v2h1v-4h1v3h2v-1h2v1h1v1h2v-3h1v1h1v-1h1v3h1v-1h1v-1h1v-1h1v2h1v1h1v-2h1v2h1v-5h1v5h4v-1h1v1h1v-2h2v-1h1v2h1v-1h1v1h2v-1h1v2h1v-1h2v1h1v-1h1v-1h1v1h4v1h1v1h1v-3h1v3h1v-1h2v-3h1v2h1v-1h1v1h1v1h1v-3h1v3h1v-2h1v1h1v-1h2v2h1v-1h3v1h2v-2h2v1h1v2h1v-4h1v3h2v-2h1v1h2v2h2v-2h2v-2h1v3h1v-1h2v-1h1v1h1v-1h1v3h1v-2h1v1h2v-1h1v1h1v-3h1v3h3v-1h1v-1h2v-1h1v1h2v2h1v-4h1v2h1v1h1v1h1v-2h1v1h1v-1h1v1h1v1h2v-3h1v3h1v-1h1v-2h1v1h1v3h1v-1h2v-1h3v-1h1v1h2v1h2v-2h1v-1h1v1h1v3h1v-4h1v3h1v-1h1v1h1v-1h1v-2h1v2h1v-1h1v2h2v-3h1v2h2v-2h1v3h1v-2h1v2h2v-2h1v1h2v1h1v-1h1v-2h1v3h1v-1h1v-1h1v1h1v-1h2v-1h1v1h1v1h1v1h1v-1h3v-1h1v1h2v-1h1v1h2v-1h1v1h1v-1h2v1h1v1h1v-1h1v-1h1v2h1v-4h1v1h1v1h1v2h1v-2h1v-1h2v2h1v-2h1v2h1v1h1v-2h1v1h1v2h1v-1h1v-1h2v-1h1v1h3v-2h2v3h1v-2h1v2h3v-2h2v1h2v-1h2v-1h1v-1h1v4h1v-1h1v1h2v-3h1v3h1v-2h1v1h1v2h1v-2h1v2h1v-1h1v-1h1v-1h1v1h3v1h1v-1h1v-2h1v1h1v1h1v2h1v-3h1v2h1v-1h1v2h1v-2h1v2h1v-1h1v-2h2v1h1v-2h1v2h1v1h1v-1h2v-1h1v-1h1v1h1v1h2v1h1v-2h2v1h1v1h1v1h1v-2h2v-1h1v-1h1v-1h1v5h1v-4h3v3h1v-2h1v1h1v-4h1v4h2v1h1v-1h1v-5h1v6h1v-1h2v1h1v-1h5v-1h1v1h1v1h1v-1h1v-2h1v1h1v1h1v-1h1v-1h1v2h1v-1h1v-2h1v3h1v-2h1v3h5v-2h1v-1h1v2h1v-2h1v2h1v-1h1v-1h1v1h1v1h1v-1h1v-1h1v4h1v-3h2v1h1v-1h2v1h1v1h1v-3h1v3h2v-2h1v1h1v1h1v-1h1v1h1v-1h2v1h1v-1h3v-1h1v2h1v-3h1v2h1v-2h1v2h1v1h1v-1h2v-1h1v2h1v1h1v-2h1v-2h1v2h1v-1h2v1h1v-1h1v2h3v-3h1v2h2v-2h1v2h2v-1h2v2h1v-3h1v3h1v-3h1v1h1v1h1v1h1v-4h1v2h2v1h1v-1h1v-1h1v3h1v-3h1v2h1v1h1v-1h3v1h1v-1h1v-1h1v1h1v-1h2v3h1v-1h2v-1h1v1h1v-2h1v1h2v1h1v-2h1v2h1v-1h2v1h1v-3h1v3h1v-2h2v1h5v-3h1v2h1v2h1v-1h1v-1h1v1h2v2h1v-3h2v1h1v-1h1v2h3v-2h1v1h1v1h2v-1h1v-1h1v2h3v-4h1v2h1v2h1v-2h3v2h1v-1h1v-3h1v2h1v-2h1v3h3v-1h1v-1h1v2h1v-1h2v1h3v-1h1v2h2v-2h1v-2h1v5h1v-4h1v3h1v-1h1v-4h1v4h1v1h2v-2h1v1h2v1h1v-1h2v-1h1v-1h1v1h2v1h1v-3h1v4h2v-2h2v3h1v-3h1v1h1v1h1v-1h2v1h1v-1h1v-3h1v5h1v-3h1v3h1v-1h4v-2h2v1h3v1h2v-1h1v-1h2v-1h1v3h1v-2h1v2h1v-2h2v1h1v1h2v-2h1v4h1v-3h1v-1h1v1h1v-1h4v1h2v-1h1v1h1v-2h1v1h1v2h1v-2h1v2h2v-3h1v2h1v-1h1v1h1v1h2v-1h2v-1h1v1h1v1h1v-2h2v2h1v-2h1v1h1v-1h1v2h1v-1h1v1h1v-1h1v1h1v-2h1v2h1v-2h1v-2h1v4h4v-3h1v2h1v-1h2v3h1v-1h2v-3h1v3h1v-2h1v2h2v-2h1v2h1v-2h1v1h3v-1h1v1h1v1h4v-2h1v1h1v-1h1v1h1v-2h1v1h2v1h1v-3h1v3h1v-1h1v1h2v-3h1v3h1v-3h1v4h1v-4h1v3h1v-2h1v2h1v1h1v-2h1v2h1v-1h1v2h1v-6h1v6h1v-2h1v-2h1v1h1v2h1v-1h3v-2h1v2h3v-2h1v3h1v-1h2v-3h1v4h1v-2h1v2h1v-3h1v3h1v-4h1v2h1v3h1v-3h1v-1h1v2h1v-1h1v-1h1v1h1v2h1v-1h1v1h1v-2h1v2h1v-1h3v-2h1v2h2v1h3v-1h1v-1h1v-1h1v1h1v2h1v-2h1v1h1v1h1v-3h1v1h1v2h1v-1h2v-2h1v2h1v1h1v-2h1v2h1v-2h1v-1h1v2h1v-1h4v1h1v-2h1v3h1v1h1v-1h1v-1h2v-1h1v-4h1v6h3v-2h1v1h1v-1h1v1h2v1h1v-2h1v2h1v-2h1v-1h1v3h2v-2h1v1h2v-1h2v1h1v-3h1v3h1v1h1v-1h1v-1h1v1h4v-1h1v-1h1v2h1v-1h1v-1h1v1h1v1h1v-1h1v3h1v-2h1v-1h1v-3h1v6h1v-3h1v1h1v1h1v-2h1v1h2v-3h1v2h1v1h1v-2h1v2h1v-2h1v1h1v1h3v-1h1v2h1v-1h1v-2h1v1h2v-1h1v2h1v-1h1v1h1v-3h1v4h1v-1h2v-2h1v3h1v-1h1v1h1v1h1v-4h1v3h1v-1h1v-1h1v2h1v-2h1v-1h1v2h3v-1h1v-2h1v3h1v1h1v-1h1v-2h1v3h1v-1h1v-1h1v2h1v-1h2v-1h4v2h1v-3h1v1h1v2h1v-1h2v1h1v-2h1v2h2v-1h3v1h1v-1h6v-1h1v1h4v-1h1v2h1v-1h1v-1h2v2h2v-1h2v-1h3v1h1v-2h1v3h1v-4h1v2h2v2h1v-1h2v1h1v-2h1v-1h1v2h2v1h1v-4h1v2h1v2h1v-1h1v-1h1v1h1v1h1v-3h1v1h1v3h1v-1h1v-1h1v-1h2v2h4v-1h1v1h3v-1h1v2h1v-2h1v-1h2v-1h1v2h1v3h1v-3h1v1h2v-2h1v2h1v-3h1v2h3v1h1v-2h1v1h1v-1h1v1h1v-1h1v2h2v1h1v-1h1v-2h1v2h2v-1h1v-3h1v3h1v-1h1v-1h1v1h1v1h1v1h1v-1h1v-2h1v3h1v-3h2v1h1v1h3v-2h1v1h1v1h2v-1h1v-1h1v2h1v1h1v-3h1v3h1v-3h1v3h1v1h1v-2h3v1h1v-3h1v-1h1v2h2v1h1v1h1v-2h1v2h1v-2h2v1h1v-2h1v3h1v-2h1v-1h1v2h1v-2h1v2h1v-1h1v1h1v-1h2v2h1v-1h1v-1h1v-1h1v3h2v-1h3v-1h1v2h1v-1h1v-1h2v1h1v1h1v-1h1v-2h1v2h1v2h1v-2h1v-1h1v2h3v-1h3v-2h1v-1h1v5h1v-1h1v-1h1v-1h7v2h1v-2h2v2h1v-2h1v1h1v1h1v-1h1v1h1v-3h1v4h1v-3h2v2h1v-1h1v-1h1v-2h1v2h1v1h2v1h2v-1h1v-1h2v1h1v1h1v-3h1v1h1v3h1v-2h1v-1h1v1h1v1h1v-2h2v-1h1v1h1v-1h1v1h1v1h1v1h1v-1h2v1h1v1h1v-4h1v2h1v1h1v-2h1v1h1v1h1v-1h2v-2h1v2h4v-1h2v1h7v1h1v-1h1v-2h1v2h3v-3h1v3h1v-3h1v3h1v2h1v-2h2v-2h1v1h1v1h1v1h1v-2h4v1h1v-1h1v2h1v-2h2v2h1v-2h1v1h1v-1h1v2h1v-1h5v1h1v-3h1V142h-4v2h-2v-1h-1v2h-1v-3h-1v2h-1v-3h-1v2h-1v-1h-2v1h-1v-1h-1v1h-2v1h-1v-3h-1v2h-2v-1h-2v2h-1v-2h-1v2h-1v-1h-2v1h-1v-1h-1v3h-1v-2h-3v-1h-2v-1h-1v1h-2v1h-2v-1h-1v1h-1v-1h-1v-2h-1v2h-1v1h-1v-1h-1v2h-1v-1h-1v-2h-1v2h-1v-3h-1v1h-1v1h-1v2h-1v-2h-1v-2h-1v7h-1v-6h-2v1h-1v-1h-1v1h-3v-1h-1v1h-5v1h-1v-1h-2v-3h-1v2h-1v2h-1v-2h-1v6h-1v1h-1v-5h-1v1h-1v-4h-1v5h-1v-2h-1v-2h-2v3h-2v-3h-1v1h-1v1h-1v-1h-3v-1h-3v2h-1v-2h-1v1h-1v1h-1v-1h-1v-2h-1v1h-1v-1h-3v5h-1v-3h-1v2h-1v-4h-1v1h-1v1h-2v3h-1v-3h-1v-1h-1v1h-1v-1h-8v1h-1v-2h-1v2h-1v-1h-2v7h-1v-7h-1v-1h-1v2h-1v-2h-1v2h-1v-1h-4v1h-1v-1h-2v-1h-1v3h-3v-2h-4v-1h-1v1h-1v7h-1v1h-1v-6h-1v-3h-1v2h-1v3h-1v-3h-1v-1h-1v1h-2v-1h-1v4h-1v-2h-1v-1h-1v-1h-4v4h-1v-4h-1v1h-1v-1h-1v3h-1v-2h-1v3h-1v-5h-1v2h-1v2h-1v-1h-1v-2h-1v1h-3v1h-1v4h-1v-8h-1v3h-1v-1h-2v2h-1v-2h-1v2h-2v-1h-1v2h-1v-4h-1v2h-1v-1h-2v8h-1v-8h-2v2h-2v-2h-1v2h-1v-2h-2v1h-2v-2h-1v1h-1v4h-1v-4h-1v1h-1v-2h-1v1h-1v1h-1v-1h-3v-1h-1v2h-2v-1h-1v6h-1v-6h-3v-1h-1v3h-1v-2h-1v1h-2v1h-1v-2h-3v1h-1v-1h-3v3h-1v-3h-1v4h-1v-7h-1v5h-2v-3h-1v1h-1v3h-1v-3h-1v1h-1v1h-2v-2h-1v1h-1v-1h-2v-1h-1v3h-1v-1h-2v-1h-1v6h-2v-5h-1v-2h-1v1h-1v-1h-1v1h-1v1h-1v-1h-4v2h-1v-3h-1v2h-4v-1h-1v-1h-2v2h-1v2h-1v3h-1v-6h-1v-1h-1v2h-2v-1h-2v1h-3v-1h-1v1h-1v1h-1v-3h-1v2h-1v-1h-1v8h-1v-9h-2v2h-2v-2h-1v1h-2v2h-1v-1h-1v1h-1v-2h-1v3h-1v-1h-2v-1h-1v-1h-1v1h-3v6h-1v-8h-1v3h-1v1h-1v-4h-1v3h-1v-2h-2v-1h-1v3h-2v-1h-2v7h-1v-7h-2v1h-1v1h-1v-3h-1v-1h-1v1h-1v3h-1v-3h-1v1h-1v-2h-1v1h-1v1h-3v1h-1v-1h-1v-1h-1v-1h-1v1h-3v2h-1v-1h-1v1h-1v-2h-3v1h-2v1h-1v-1h-3v-1h-2v6h-1v-7h-1v3h-1v-2h-2v3h-1v-4h-1v2h-1v-1h-2v2h-1v-1h-1v-1h-2v2h-1v-1h-1v-1h-1v2h-1v-2h-1v4h-1v-3h-3v-2h-1v2h-1v-1h-2v-1h-1v2h-1v-1h-3v3h-1v-2h-1v1h-1v-3h-1v2h-1v-2h-3v3h-1v-1h-1v1h-1v-1h-3v1h-1v-2h-1v1h-2v-1h-1v1h-2v1h-2v-2h-1v2h-2v5h-1v-7h-2v1h-1v1h-1v-2h-2v2h-1v-2h-1v2h-1v-2h-1v1h-2v2h-1v-3h-3v1h-1v1h-1v-1h-1v-1h-1v2h-1v-1h-1v-1h-1v3h-1v-1h-1v-1h-2v-1h-4v3h-1v4h-1v-7h-2v5h-1v-6h-1v2h-1v1h-2v-1h-2v-1h-1v3h-2v-3h-1v2h-1v-1h-1v1h-3v-1h-1v-1h-1v1h-1v-1h-1v2h-1v-2h-2v-2h-1v1h-1v3h-1v-2h-1v-1h-1v7h-1v-6h-1v-2h-1v2h-2v1h-1v-1h-3v-1h-1v3h-1v-2h-2v3h-1v3h-1v-4h-1v-2h-2v6h-1v-6h-4v1h-2v-1h-2v2h-1v-2h-3v2h-1v-1h-1v-1h-1v1h-2v-1h-2v1h-1v-1h-1v1h-1v-1h-1v2h-1v-1h-1v-1h-2v1h-2v-2h-1v2h-1v1h-1v-3h-1v1h-1v1h-3v1h-1v-2h-1v4h-2v-3h-1v-1h-1v1h-2v-2h-1v1h-1v1h-1v-1h-3v3h-1v-4h-1v1h-1v-1h-1v2h-1v6h-1v-6h-1v-1h-1v3h-1v-2h-1v1h-1v-1h-1v-1h-1v-1h-1v2h-1v-2h-2v1h-1v1h-2v-3h-1v4h-1v-2h-1v3h-1v-1h-1v-2h-1v2h-1v-3h-1v1h-1v-2h-1v2h-1v2h-1v-2h-1v8h-1v-8h-1v3h-2v-1h-1v4h-1v1h-1v-7h-1v2h-2v-2h-1v1h-1v-2h-1v2h-1v-2h-1v2h-1v-1h-1v1h-1v-1h-1v1h-1v-2h-1v2h-1v-1h-2v1h-1v-2h-2v1h-2v3h-1v-2h-1v1h-1v-1h-1v1h-1v-3h-1v1h-1v1h-1v-1h-1v1h-2v1h-1v-2h-1v1h-4v-1h-1v7h-1v-6h-1v1h-1v-2h-1v1h-1v-2h-1v2h-1v-1h-1v3h-2v-3h-1v1h-1v-1h-2v-2h-1v2h-1v1h-1v-1h-1v2h-1v-2h-1v1h-2v-2h-1v1h-2v2h-1v-1h-3v-2h-1v3h-1v-1h-1v-1h-3v7h-1v-5h-2v-1h-1v-1h-1v1h-1v-1h-2v-1h-1v3h-1v-1h-1v-1h-1v1h-1v-2h-1v4h-1v-1h-1v-2h-1v2h-1v-2h-1v3h-1v-1h-1v-2h-1v-1h-1v7h-1v-5h-1v-1h-1v1h-1v-1h-2v1h-1v1h-1v-3h-1v2h-1v1h-1v-1h-1v-1h-1v-1h-1v1h-1v2h-1v-1h-3v1h-1v-3h-1v2h-1v-1h-2v1h-1v-2h-1v1h-2v1h-3v3h-1v-3h-1v-1h-1v-1h-1v2h-2v2h-1v-3h-1v1h-1v6h-1v-5h-2v-1h-1v2h-1v-2h-1v1h-1v-3h-1v7h-1v-5h-1v-1h-2v3h-1v-2h-3v-1h-2v1h-1v-2h-1v2h-1v1h-1v-3h-1v5h-1v-3h-1v1h-1v-2h-3v1h-1v-1h-1v1h-1v-1h-1v-1h-1v2h-2v-1h-1v1h-1v-2h-1v1h-2v1h-1v-2h-1v2h-1v1h-1v-2h-1v1h-2v-1h-1v-2h-1v4h-1v-1h-1v-1h-1v7h-1v1h-1v-7h-2v-1h-1v2h-1v-2h-2v3h-1v-2h-1v-1h-1v1h-1v1h-1v-1h-1v6h-1v-5h-1v-1h-2v1h-2v-1h-1v-1h-3v-1h-1v2h-1v-1h-2v-1h-1v2h-1v-1h-1v2h-1v-2h-1v1h-1v-1h-2v-2h-1v5h-1v-3h-1v1h-1v2h-1v-4h-1v1h-1v7h-1v-4h-1v-2h-1v-2h-1v3h-1v-1h-2v-1h-2v1h-2v-1h-1v2h-2v-3h-1v1h-2v2h-2v-2h-1v2h-1v-1h-1v-2h-1v1h-2v1h-1v-1h-2v2h-1v-2h-3v2h-1v-1h-1v-1h-1v3h-1v-1h-2v-2h-1v1h-2v-2h-1v2h-2v-1h-1v1h-1v1h-1v-1h-2v1h-1v-1h-1v-1h-1v3h-1v-4h-1v1h-1v2h-1v-2h-3v-2h-1v3h-1v1h-1v2h-1v3h-1v-7h-2v1h-1v-1h-1v-1h-1v1h-1v-1h-1v8h-1v-6h-1v3h-1v-4h-1v1h-2v2h-1v-3h-1v1h-1v-1h-1v-2h-1v6h-1v-3h-1v-1h-1v2h-1v-1h-1v1h-3v-1h-1v-1h-1v3h-2v-3h-1v1h-1v1h-1v-1h-1v-1h-2v2h-1v-2h-1v-1h-1v1h-1v2h-1v5h-1v-7h-2v-1h-1v3h-2v5h-1v-6h-1v-1h-1v4h-1v-3h-1v-2h-1v2h-2v7h-1v-7h-1v2h-1v-2h-2v-1h-2v1h-1v1h-1v-2h-1v1h-1v-2h-1v2h-1v-1h-2v1h-2v-1h-2v6h-1v-6h-2v3h-1v-2h-3v-1h-1v2h-1v-3h-1v6h-1v-5h-2v8h-1v-6h-1v-1h-1v1h-1v-1h-1v-1h-1v2h-2v-2h-1v3h-1v-2h-1v2h-1v-2h-1v6h-1v-6h-1v2h-1v-3h-1v1h-3v-2h-1v2h-1v-1h-1v1h-1v-1h-1v2h-2v-2h-1v2h-1v-2h-2v2h-1v-2h-3v3h-1v5h-1v-8h-1v1h-3v7h-1v-8h-2v2h-1v5h-1v-6h-1v-1h-1v2h-1v1h-2v-2h-1v1h-1v-1h-1v-2h-1v1h-2v1h-1v1h-2v-2h-5v-1h-1v4h-1v-3h-1v2h-1v-1h-1v-1h-3v1h-2v-3h-1v3h-1v-2h-2v1h-1v-1h-1v1h-1v7h-1v-6h-1v-1h-1v1h-1v-1h-1v2h-1v-3h-1v3h-1v-2h-1v3h-1v-2h-2v1h-1v-2h-1v2h-1v-2h-1v3h-1v-5h-1v2h-1v2h-1v-2h-1v2h-1v-3h-2v2h-1v6h-1v-7h-1v2h-1v-2h-2v1h-1v-1h-1v2h-2v1h-1v-2h-4v-2h-1v1h-1v1h-1v6h-1v-7h-1v3h-1v-3h-1v1h-1v-2h-1v2h-1v-1h-2v1h-2v1h-1v-1h-1v1h-1v-2h-1v-1h-1v1h-1v1h-2v-2h-1v2h-1v-1h-2v3h-1v-2h-1v-1h-1v1h-3v1h-1v-2h-3v3h-1v-3h-1v2h-1v-1h-2v1h-1v-1h-1v1h-1v1h-1v-2h-2v-1h-2v1h-1v1h-1v-1h-1v7h-1v-7h-2v-2h-1v1h-1v2h-1v-1h-1v-1h-1v2h-1v-1h-4v-1h-1v2h-2v-2h-1v-1h-1v2h-1v-2h-1v3h-2v-2h-1v1h-1v-1h-1v2h-2v-2h-1v3h-1v-2h-1v-2h-1v1h-1v5h-1v-5h-1v1h-1v-1h-1v1h-2v1h-2v-1h-1v-1h-2v-1h-1v3h-1v-1h-1v-1h-1v6h-1v-6h-1v-1h-1v1h-2v1h-2v-1h-1v2h-1v-1h-1v-1h-1v1h-1v-2h-1v1h-1v1h-1v-2h-1v1h-1v-1h-1v1h-2v2h-3v-2h-2v1h-1v-1h-1v3h-1v3h-1v1h-1v-5h-1v-1h-2v-2h-1v2h-1v1h-1v-3h-1v3h-1v-2h-2v1h-1v-1h-1v1h-1v-1h-2v1h-1v-1h-3v1h-1v1h-1v-2h-1v1h-2v3h-1v-3h-1v-1h-1v1h-1v-1h-1v1h-2v1h-1v-2h-3v-1h-2v5h-1v-4h-1v2h-1v-1h-2v-2h-1v1h-1v2h-1v-2h-2v2h-1v-1h-1v-1h-1v1h-1v-1h-1v2h-1v-1h-3v-1h-1v1h-1v1h-1v-1h-1v-1h-1v7h-1v-5h-2v-2h-1v2h-1v-1h-1v1h-1v-2h-2z"/>
<path d="M584 185h2v3h1v-3h1v2h1v-3h1v2h2v2h1v-2h1v2h1v1h1v-2h2v-2h1v1h1v-2h1v2h2v-1h1v-1h2v3h1v-1h1v1h1v-1h1v2h1v-4h1v3h1v-3h2v2h1v-1h2v2h2v-1h1v2h1v-3h1v1h3v-2h1v2h1v1h1v-2h3v1h1v-2h1v2h1v1h1v-2h1v2h1v-3h1v2h1v-1h1v2h1v-2h1v2h1v1h1v-4h1v3h1v-1h1v1h3v-1h2v1h1v-1h1v-1h1v2h2v-1h1v-2h2v2h3v-2h1v2h1v1h2v1h1v-2h1v1h4v-2h1v1h1v1h3v-4h1v4h1v-1h1v1h1v1h1v-3h1v-1h1v3h1v-1h1v2h1v-3h1v1h1v-2h1v3h3v-4h1v1h1v2h2v2h1v-4h1v2h1v1h1v-1h1v-1h1v1h2v2h1v-3h1v1h1v1h1v-1h1v1h1v-1h1v1h1v-2h1v2h1v-2h1v2h1v-1h1v2h1v-3h1v-2h1v3h2v-2h1v2h2v1h1v-3h1v2h2v-1h1v2h1v-1h1v1h3v-2h1v2h1v-3h1v3h1v-1h1v-2h1v2h1v2h1v-4h1v1h1v3h1v-2h2v1h2v-2h1v3h1v-4h1v1h1v1h1v-2h1v1h1v2h1v-2h1v2h1v-1h1v-1h3v2h1v-1h1v-1h2v2h1v1h1v-1h2v1h1v-4h1v1h2v-2h1v3h2v-1h1v-1h1v4h1v-1h2v-2h1v-1h1v1h2v1h1v1h1v-2h1v1h1v1h1v-3h1v1h1v1h1v3h1v-4h1v3h1v-2h2v1h2v-1h1v2h1v-1h1v-2h1v1h1v1h1v-2h1v3h1v-2h1v-2h1v3h3v1h2v-1h5v-1h1v-3h1v3h1v1h1v-1h1v-2h1v3h1v-1h2v-2h1v3h1v-4h1v3h1v1h2v-1h1v-1h1v1h2v1h1v-1h2v-3h1v5h1v-2h1v-2h1v3h1v-3h1v3h1v-2h2v2h1v-6h1v5h2v1h1v-1h1v-3h1v4h1v-1h1v2h1v-1h1v1h1v-4h1v1h1v1h1v-1h1v-1h1v2h1v-1h1v1h2v-1h1v1h3v1h1v-1h1v-1h1v1h1v-1h1v-1h1v3h1v-1h1v1h1v-4h1v2h1v2h1v-1h3v1h1v-1h2v2h1v-1h1v-5h1v3h4v2h1v-2h1v2h1v-2h1v3h1v-1h1v-1h1v1h1v1h1v-3h1v2h1v-1h1v-1h1v1h1v-3h1v3h2v-3h1v3h1v1h2v-1h1v1h1v1h1v1h1v-2h1v-2h1v2h2v-1h1v-1h1v1h1v1h1v-1h1v-1h1v2h1v-2h1v2h2v-1h3v-2h1v2h3v2h1v-1h2v-2h2v1h3v2h1v-1h1v-1h3v-1h1v3h1v-2h2v1h1v-3h1v1h1v1h1v-1h1v1h3v-1h1v2h1v-1h1v-1h1v2h1v-1h1v-2h1v3h1v-1h2v1h1v1h1v-2h1v-2h1v1h2v2h1v-1h1v1h1v-4h1v3h1v1h1v1h1v-1h1v-2h1v1h5v3h1v-2h1v-2h1v1h1v1h2v-1h1v-1h1v-2h1v4h1v-2h1v-1h1v2h3v-2h1v2h1v1h2v-1h1v1h1v1h1v-4h1v3h2v-2h1v1h1v1h1v-2h1v-3h1v4h2v1h1v-1h2v-2h1v4h1v-5h1v2h1v-1h1v3h1v-1h3v1h1v-1h1v1h1v-2h1v2h1v1h1v-2h2v2h1v-1h1v-2h1v2h1v1h2v-3h2v-1h1v2h1v-2h1v3h1v-1h3v2h1v-1h1v-1h1v-1h2v1h1v-1h1v1h1v1h1v-1h1v2h2v-3h1v2h1v-1h1v1h1v-2h1v1h1v1h1v-1h1v1h1v-2h1v3h1v-3h1v-1h1v2h1v-2h2v2h2v-2h1v1h1v3h1v-4h1v3h1v-1h1v-2h1v1h1v2h1v-2h1v1h2v1h1v-1h1v-2h1v3h1v-1h1v-1h1v2h1v1h1v-1h1v-1h1v-1h2v1h1v1h2v-1h1v1h1v-2h1v3h1v-2h1v-1h1v3h1v-4h1v2h2v1h1v-2h1v2h1v-3h1v2h1v1h2v-1h1v1h1v-1h1v-2h1v2h1v1h1v-2h1v2h1v-3h1v3h2v2h1v-3h1v1h1v-2h3v2h1v-1h1v1h1v-1h1v1h1v-1h3v-1h1v-3h1v-1h1v6h1v-1h1v2h1v-3h1v1h1v1h1v-2h1v3h1v-1h1v-3h1v2h2v2h1v-2h4v-1h1v1h1v-1h1v2h1v-1h1v1h1v-2h1v1h1v1h2v-1h1v1h1v-3h1v3h1v-2h1v2h1v-2h1v2h1v-3h2v2h1v1h1v1h1v-4h1v3h2v-1h1v1h2v-1h1v1h1v-2h1v1h2v1h1v-1h1v1h2v-1h2v-2h1v3h2v-3h1v2h3v1h2v-1h1v-1h1v1h1v1h1v-1h1v-3h1v2h1v1h2v1h1v-1h1v1h1v-2h1v2h1v-2h1v-2h1v5h1v-1h1v-2h1v-2h1v4h1v-2h1v-1h1v2h1v-1h1v2h1v-1h1v-1h1v-1h1v3h1v-1h1v-1h1v1h2v1h5v-2h2v2h2v-1h1v-2h1v3h2v-2h1v3h1v-1h1v-2h1v2h1v-1h2v1h1v-3h1v2h1v1h2v-1h1v-1h1v2h1v-2h2v1h1v1h1v-2h1v1h1v-1h3v2h3v-3h1v1h2v1h1v1h1v-2h1v-2h1v4h4v-3h1v2h2v-2h1v1h1v1h1v-1h1v2h1v1h1v-4h1v2h1v-1h1v1h3v-1h1v4h1v-2h1v-1h1v1h1v-2h1v2h1v-2h1v2h3v-1h3v-2h1v2h1v2h1v-3h2v-2h1v3h1v-1h1v-1h1v3h1v-5h1v5h1v-1h1v-1h1v3h1v-3h1v-1h1v3h1v-1h1v-1h1v1h1v2h1v-2h2v-5h1v6h3v-3h1v3h2v-4h1v2h1v2h2v-2h1v1h1v3h1v-4h1v1h3v1h3v-1h1v1h1v-1h2v2h1v-1h1v1h1v-2h1v-2h1v1h1v-1h1v3h1v-2h1v1h1v1h5v1h1v-2h1v2h1v-1h1v-3h1v1h1v-1h1v3h1v-3h1v3h1v-1h1v-1h2v2h1v1h1v-1h1v1h1v-1h1v-1h1v1h5v-1h1v1h2v-2h1v2h1v-1h1v1h2v-2h1v2h4v1h1v-3h1v1h3v-3h1v2h1v2h1v-2h2v1h2v1h2v-1h1v-1h1v2h2v-3h1v1h1v2h2v-1h1v-1h1v2h1v-1h2v-2h2v3h1v-1h4v-3h2v3h2v-3h1v4h1v1h2v-3h1v1h1v-1h2v2h1v-2h2v-2h1v4h2v-1h3v-1h1v3h1v-1h2v-2h1v-2h1v2h2v-1h1v2h2v3h1v-2h1v1h1v-2h1v2h1v-3h1v2h1v-1h1v-1h1v2h2v-3h1v4h1v-1h2v-1h1v1h1v-2h1v-1h1v2h1v-1h1v2h2v-2h3v-2h1v3h1v-1h1v3h1v-3h1v1h2v2h1v-2h1v1h2v-2h1v2h1v1h1v-2h1v2h1v-3h1v1h3v-1h2v2h1v-3h1v1h1v2h3v-1h1v1h2v-1h1v-2h1v2h1v1h1v-2h1v2h2v-3h1v1h2v2h1v-1h1v-1h3v2h3v-3h1v2h1v-4h1v5h1v-1h1v-1h2v2h1v1h1v-1h3v-2h1v2h2v-2h1v1h4v1h1v-2h1v1h1v-1h1v1h1v3h1v-2h1v-2h1v2h1v-2h1v1h1v-1h2v2h1v-1h1v-1h1v2h3v-1h2v1h3v-3h1v2h1v-2h1v1h1v1h1v-1h1v1h2v1h1v-2h1v-1h1v4h1v-4h1v2h1v1h1v-1h2v1h1v-2h1v3h1v-2h1v1h1v-1h2v-1h1v2h2v-1h2v1h1v-2h1v2h1v-5h1v3h1v2h2v-1h3v2h1v-2h1v1h1v-2h1v1h3v1h1v-1h3v-1h1v1h1v-1h1v-1h1v2h2v1h1v-1h1v-1h1v2h1v-1h1v-1h1v3h1v-3h1v1h1v-1h1v2h1v-2h1v2h1v-1h2v1h1v-4h1v3h1v-1h2v1h1v-1h1v3h1v-4h1v2h4v-2h1v2h1v-2h1v2h1v-1h1v1h1v-1h1v1h3v1h2v-1h4v1h1v-2h1v1h1v1h1v-2h1v1h1v-2h1v2h2v1h1v-1h2v1h1v-2h1v1h2v1h1v-1h1v2h1v-2h2v1h1v-2h1v-1h1v2h1v-1h1v-2h1v3h2v1h2v-1h1v1h2v-1h1v1h1v-2h1v2h2v-2h2v2h2v1h1v-3h1v-1h1v3h1v-2h1v2h1v-1h1v1h1v-1h1v1h3v-1h3v2h1v-4h1v3h2v-1h1v1h3v-2h1v1h1v-1h3v2h1v-2h1v-1h3v3h2v-1h1v1h4v-2h2v2h1v1h2v-3h1v-1h1v2h1v1h1v-3h1v5h1v-3h1v-1h1v2h1v1h1v-3h1v2h1v-1h1v-2h1v2h1v1h2v-1h1v1h2v-1h3v1h1v-3h1v1h3v-1h1v-1h1v2h2v1h1v-1h1v1h1v1h1v-3h1v2h5v1h1v-3h1v3h1v-1h3v1h1v-1h2v-2h1v2h3v-2h1v3h1v-2h1v1h1v-2h1v4h1v-3h1v1h4v-2h1v3h2v-1h1V196h-2v2h-3v-1h-1v1h-1v-1h-1v1h-1v-2h-2v1h-1v-1h-1v5h-1v-5h-1v3h-1v-3h-1v4h-1v-2h-1v1h-1v-3h-1v1h-1v1h-1v-3h-1v2h-1v2h-1v-3h-1v1h-1v1h-1v1h-1v-3h-1v2h-1v-1h-1v-1h-1v-1h-1v-1h-1v3h-1v1h-1v-1h-1v-2h-1v1h-2v2h-2v-1h-1v-1h-1v1h-2v-1h-1v2h-5v-2h-1v1h-4v11h-1v-11h-1v-1h-1v1h-1v-1h-1v1h-1v1h-1v-2h-3v1h-1v3h-1v-1h-1v-3h-1v1h-1v-1h-1v1h-2v1h-1v-2h-2v11h-1v1h-1v-12h-1v-1h-1v3h-1v-3h-1v2h-1v1h-1v-1h-2v3h-1v-4h-1v2h-1v1h-1v-2h-1v-1h-2v1h-1v2h-2v-1h-1v-3h-1v1h-1v1h-2v1h-1v-2h-1v1h-1v-2h-1v4h-1v-3h-1v2h-1v-2h-1v-1h-1v1h-1v1h-1v-1h-1v1h-1v-1h-2v1h-1v-1h-1v1h-1v-1h-2v3h-2v-1h-1v-2h-2v-1h-2v2h-1v2h-1v9h-1v-11h-2v-1h-1v2h-1v-1h-1v1h-1v-2h-1v1h-1v2h-1v-2h-1v1h-4v-2h-1v2h-1v-1h-1v1h-1v-2h-2v2h-1v-3h-1v14h-1v1h-1v-14h-1v-1h-1v1h-1v2h-1v1h-1v-2h-1v1h-2v-2h-1v2h-1v-1h-1v-2h-1v1h-2v2h-1v-1h-1v2h-1v-1h-1v-2h-1v2h-1v-1h-1v-1h-2v2h-1v-2h-1v4h-1v-1h-1v-1h-1v1h-2v-1h-1v-2h-1v9h-1v-8h-2v1h-2v1h-1v-2h-1v1h-1v-1h-1v-2h-1v1h-1v2h-1v-2h-1v2h-1v-2h-1v11h-1v-9h-1v-2h-1v1h-1v1h-1v1h-1v-1h-1v-2h-1v1h-1v-1h-1v1h-2v3h-1v-2h-1v-1h-1v1h-4v1h-1v-3h-1v2h-1v-1h-2v-1h-1v1h-1v12h-1v-13h-1v6h-1v-7h-1v1h-1v1h-1v-1h-1v1h-1v-1h-1v-1h-2v1h-1v1h-1v-1h-1v2h-1v-1h-2v-2h-1v1h-1v1h-1v-1h-2v2h-1v-1h-1v-1h-1v1h-3v-2h-1v3h-1v-1h-1v2h-1v-2h-1v2h-1v-3h-1v2h-1v-1h-2v1h-1v9h-1v1h-1v-9h-1v-4h-1v3h-1v-1h-1v1h-1v-1h-1v-2h-1v1h-1v2h-1v-2h-1v1h-1v2h-1v-3h-2v1h-1v4h-1v-3h-1v-1h-1v-1h-1v1h-2v12h-1v-11h-1v-2h-1v2h-1v-1h-3v1h-3v-3h-1v2h-2v2h-2v1h-1v9h-1v-10h-1v-3h-1v1h-1v2h-1v-2h-1v-1h-1v1h-2v2h-1v-2h-4v-2h-1v1h-1v1h-2v-1h-2v12h-1v-10h-2v-1h-1v-1h-1v2h-1v-2h-1v2h-1v-2h-3v3h-1v-2h-1v9h-1v-9h-1v2h-1v-1h-1v-1h-1v3h-1v-5h-1v3h-2v-1h-1v-1h-2v2h-1v-2h-1v2h-1v-3h-1v3h-2v-2h-2v2h-1v-1h-1v1h-2v-1h-1v1h-1v-3h-1v1h-1v2h-1v-1h-1v2h-1v-1h-2v-1h-4v14h-1v-13h-1v-1h-1v-1h-1v2h-1v-3h-1v2h-1v1h-1v-1h-1v2h-2v1h-1v-2h-1v-3h-1v4h-1v-3h-3v1h-1v-1h-1v3h-1v-1h-2v-3h-1v3h-1v-2h-1v1h-1v1h-1v-3h-1v1h-1v1h-1v-1h-1v1h-1v1h-1v-2h-1v3h-1v-3h-2v2h-1v-2h-1v3h-1v-2h-1v-2h-1v2h-1v-1h-1v1h-1v-1h-1v2h-1v-2h-1v-1h-1v1h-2v2h-2v-1h-1v-1h-3v10h-1v-8h-2v2h-1v-3h-1v1h-1v-1h-1v3h-1v-4h-1v1h-1v1h-1v-2h-1v1h-2v2h-1v-2h-1v2h-1v-2h-1v1h-1v-3h-1v3h-1v-2h-1v2h-1v-2h-1v-1h-1v3h-1v-2h-2v1h-1v-1h-2v2h-1v-2h-1v13h-1v-13h-2v1h-1v1h-2v1h-1v-3h-1v1h-2v-2h-2v2h-1v1h-2v-2h-2v-2h-1v3h-1v-1h-1v1h-1v-1h-1v2h-1v1h-1v-1h-1v-1h-1v1h-2v-1h-1v-2h-1v2h-1v10h-1v-8h-1v-3h-2v4h-1v-2h-1v-2h-1v2h-1v-2h-1v1h-1v1h-2v-1h-1v-1h-1v11h-1v-11h-2v-1h-1v16h-1v-14h-1v1h-1v-2h-3v1h-3v1h-1v-2h-2v1h-3v-2h-1v2h-1v-1h-1v1h-2v-2h-1v2h-1v3h-1v-4h-1v3h-1v-2h-2v-1h-1v-1h-2v4h-1v-2h-1v1h-1v-1h-1v-1h-1v2h-1v-1h-1v-1h-1v1h-1v1h-1v1h-1v-2h-1v1h-2v-3h-1v1h-2v-1h-1v3h-1v1h-1v-3h-3v1h-2v1h-2v9h-1v-9h-1v-2h-1v2h-1v-1h-2v-1h-1v1h-1v-1h-1v4h-1v-3h-1v-1h-1v1h-1v1h-3v-2h-1v2h-1v-2h-2v2h-1v-1h-1v2h-2v-2h-1v2h-1v-2h-1v2h-1v9h-1v-11h-1v-1h-1v1h-2v10h-1v2h-1v-9h-1v-3h-1v2h-1v-2h-2v-1h-2v1h-1v-1h-1v2h-1v-1h-1v3h-1v-2h-1v-2h-1v1h-2v1h-1v2h-1v-3h-3v-2h-2v1h-1v1h-2v2h-1v-3h-1v1h-1v2h-1v-1h-2v-1h-2v-1h-1v3h-1v-2h-1v3h-1v-2h-1v-2h-1v14h-1v-14h-1v4h-1v-4h-2v-1h-1v2h-2v3h-1v-3h-1v-1h-1v3h-1v-3h-2v4h-1v-3h-1v-1h-1v1h-1v-2h-1v1h-2v1h-1v-1h-1v1h-5v1h-1v-1h-1v-2h-1v3h-1v-2h-2v1h-1v13h-1v-11h-1v-3h-1v2h-2v-2h-1v3h-2v-2h-1v-2h-1v5h-1v-2h-1v-2h-2v1h-1v-1h-1v2h-3v-1h-1v1h-1v-2h-1v1h-1v9h-1v-10h-1v-1h-1v2h-1v-1h-1v-1h-1v1h-1v1h-2v1h-2v-1h-1v-1h-1v1h-1v1h-1v-1h-3v1h-1v-2h-1v2h-1v-1h-1v1h-1v-3h-1v1h-1v-1h-1v2h-1v-1h-1v2h-1v-1h-1v1h-2v-1h-3v-1h-1v1h-1v-1h-1v2h-2v7h-1v-6h-1v-3h-1v-1h-1v2h-1v-1h-1v1h-1v-1h-1v13h-1v-14h-1v3h-1v-1h-1v-1h-1v-1h-1v5h-1v-5h-1v2h-2v-1h-1v-1h-1v1h-1v-1h-1v2h-1v-1h-1v1h-2v3h-1v-4h-1v3h-1v-1h-1v-1h-2v1h-1v-1h-2v-1h-1v-1h-1v1h-2v-1h-1v2h-1v-1h-3v2h-1v-1h-1v1h-1v-1h-3v-1h-2v3h-1v10h-1v1h-1v-14h-4v1h-2v-1h-1v1h-1v-1h-1v1h-1v1h-1v-1h-1v9h-1v-9h-2v-1h-1v1h-1v-1h-3v2h-2v-2h-1v1h-1v1h-2v-2h-1v2h-1v-1h-4v-1h-2v2h-1v-2h-1v-1h-1v4h-1v-2h-1v-1h-1v2h-1v11h-1v-13h-1v4h-1v-4h-1v3h-2v-1h-1v-2h-1v-1h-1v3h-2v-1h-1v-1h-1v1h-1v1h-2v-2h-1v4h-1v-2h-1v-1h-1v2h-1v-3h-1v1h-1v1h-3v1h-2v-3h-1v1h-1v-1h-1v2h-1v-2h-1v4h-1v-3h-1v4h-1v-4h-1v-1h-1v3h-1v-2h-2v-1h-1v7h-1v-7h-1v2h-1v-1h-2v1h-1v1h-1v-3h-1v1h-1v4h-1v-1h-1v-3h-3v1h-1v-2h-3v2h-1v2h-1v-3h-1v10h-1v-10h-1v-1h-1v2h-3v-1h-1v4h-1v7h-1v-12h-1v1h-1v-1h-1v-1h-1v1h-3v-1h-1v2h-3v-1h-1v2h-1v-1h-1v1h-1v-1h-1v2h-1v-2h-2v-2h-1v2h-1v1h-1v-1h-7v1h-2v-3h-1v1h-1v11h-1v-9h-1v-2h-3v3h-1v7h-1v-8h-1v-1h-1v-2h-1v2h-1v1h-1v-2h-2v13h-1v-11h-1v-1h-1v1h-1v-2h-2v3h-1v-2h-1v1h-1v1h-1v-3h-1v-1h-1v4h-1v-2h-1v3h-1v-5h-1v2h-1v-1h-2v14h-1v-13h-1v1h-1v-1h-2v-1h-1v1h-1v1h-3v-1h-1v1h-2v12h-1v-14h-1v1h-1v-1h-1v2h-1v-1h-2v1h-3v-2h-1v1h-1v-1h-1v10h-1v-9h-1v1h-2v-1h-1v-1h-1v1h-1v1h-1v-2h-1v-1h-1v3h-2v-1h-1v-2h-1v2h-1v2h-1v-2h-1v1h-1v-2h-1v1h-1v-1h-1v1h-1v-1h-1v11h-1v-10h-2v-1h-1v4h-1v15h-1v-17h-2v-1h-1v10h-1v-8h-1v-2h-1v-1h-1v3h-1v-2h-3v-2h-1v3h-1v-1h-1v-1h-1v2h-1v-2h-1v1h-1v3h-1v-3h-2v-2h-1v5h-1v-2h-2v-2h-1v2h-1v-1h-1v-1h-2v2h-2v-2h-2v2h-1v1h-1v-3h-1v1h-1v1h-1v1h-1v12h-1v-15h-1v1h-2v1h-1v-2h-1v2h-1v-1h-1v1h-1v-2h-1v-1h-1v5h-1v-3h-1v-1h-1v1h-1v-1h-1v2h-1v2h-1v-5h-1v3h-3v1h-1v-3h-1v1h-1v10h-1v-11h-1v1h-3v-2h-1v1h-2v2h-1v-1h-2v-2h-1v1h-1v1h-4v11h-1v-10h-2v-3h-1v2h-1v-3h-1v3h-1v-1h-1v1h-2v-1h-2v2h-1v-2h-1v2h-1v-1h-1v-1h-2v1h-3v1h-1v-1h-1v-1h-1v1h-1v-1h-1v1h-1v-1h-1v3h-1v3h-1v-4h-1v-2h-1v2h-1v-3h-1v2h-2v2h-1v-1h-1v-2h-1v2h-1v-2h-1v1h-1v1h-1v-2h-1v1h-1v-2h-1v2h-1v2h-2v8h-1v-8h-1v-2h-3v1h-1v1h-1v-2h-1v1h-2v-1h-1v-1h-1v1h-1v-1h-2v1h-1v-1h-3v1h-1v-1h-3v1h-3v1h-2v-2h-1v2h-1v1h-1v-1h-1v-1h-1v1h-2v-2h-3v1h-1v1h-1v2h-1v-3h-1v1h-2v1h-1v-1h-1v1h-1v8h-1v-10h-1v1h-2v-1h-2v-1h-2v1h-1v2h-1v-2h-3v-1h-1v2h-1v1h-1v-1h-1v-1h-1v1h-1v-1h-2v-2h-1v3h-2v-2h-1v2h-1v-2h-2v11h-1v1h-1v-11h-2v2h-1v-2h-2v-1h-1v-1h-1v1h-4v1h-3v3h-1v-2h-1v-1h-1v3h-1v-4h-1v1h-1v-1h-1v2h-1v1h-1v-4h-2v3h-1v-1h-2v3h-1v-5h-1v2h-1v-1h-2v-1h-1v4h-1v-4h-1v1h-1v2h-3v2h-1v-1h-1v-1h-2v-2h-1v2h-1v-3h-1v4h-1v-3h-2v-1h-1v1h-1v1h-2v-1h-1v1h-1v-1h-1v1h-4v11h-1v-8h-1v-2h-1v-1h-1v1h-1v-2h-1v-1h-1v2h-2z"/>
<path d="M584 240h1v-1h1v-2h1v4h2v-1h2v2h1v-2h1v-1h1v2h1v1h1v-2h1v2h1v-1h1v-1h3v2h1v-2h1v1h2v-1h1v1h1v-1h1v-2h1v1h1v-1h1v1h1v3h1v-4h1v4h1v-1h2v-2h1v2h1v-1h2v1h2v-1h1v-1h1v1h1v1h1v-1h1v1h1v-1h1v1h2v-1h1v1h1v-2h1v3h1v-1h2v-1h1v2h1v-1h1v-2h1v2h2v-1h1v-1h1v-1h1v2h1v2h1v-3h1v1h1v1h1v2h1v-2h1v-2h1v1h1v1h1v1h1v-3h1v-1h1v4h1v-3h1v2h1v-1h4v-1h1v4h1v-1h1v-2h1v-4h1v4h1v-1h1v1h1v-1h1v-1h1v1h1v2h1v-1h1v3h1v-3h2v2h1v-1h1v-1h1v2h1v-1h2v-2h1v2h1v-1h1v1h1v2h1v-3h1v1h1v-1h1v1h1v-1h1v1h2v-2h1v-2h1v5h1v-3h1v2h2v-1h1v1h3v-1h1v-1h1v1h1v1h1v-2h2v3h1v-3h1v1h1v-2h1v4h1v-3h1v1h1v1h1v1h1v-4h1v1h1v1h2v-1h1v3h1v-2h1v2h1v-1h1v-1h1v1h1v2h1v-4h1v1h1v-1h1v1h3v2h3v-1h1v1h2v-2h3v1h2v-1h1v1h1v-2h1v-1h3v3h3v1h1v-2h1v2h1v-2h3v-1h1v4h1v-1h1v-1h1v-2h1v3h1v-1h2v-2h1v2h1v-1h1v1h1v-2h1v1h3v2h1v-3h1v-1h1v3h1v-1h1v-1h1v2h1v1h1v-2h1v1h2v-2h2v2h1v-5h1v6h1v-1h1v-1h1v-1h1v2h1v2h1v-1h1v-1h1v-1h2v2h1v-2h1v1h1v1h1v-1h1v1h1v-4h1v3h1v-2h1v1h2v1h1v-1h3v1h1v-1h1v1h1v-2h2v1h1v-2h1v1h1v3h1v-3h2v2h1v-3h1v3h1v1h1v-1h6v1h1v-4h1v2h2v-1h1v2h2v-1h1v-1h1v3h2v-1h1v-2h1v3h1v-2h1v-1h2v2h1v-1h3v1h1v-3h1v2h2v1h1v-3h1v3h5v1h2v-1h1v-1h3v2h1v-3h1v-1h2v2h1v1h3v-1h1v-2h1v2h1v1h1v1h1v-2h2v1h2v-1h1v-1h1v-1h1v4h1v-2h1v1h1v-1h1v1h1v-3h1v1h1v1h1v-1h1v2h1v-1h2v1h1v1h1v-3h1v3h1v-1h1v1h1v-3h1v1h2v1h1v-2h1v1h2v-2h1v2h1v1h2v1h1v-2h1v1h1v-1h2v2h1v-2h3v2h1v-1h3v-1h1v1h1v-1h3v1h1v-1h2v1h3v-1h1v2h1v-2h1v-3h2v4h2v-3h1v3h1v1h1v-3h1v2h1v-1h1v-2h1v1h1v2h2v1h3v-1h1v-1h1v-1h1v2h1v-1h1v2h1v-1h2v-1h1v1h2v1h1v-1h2v-2h2v3h2v-2h1v2h1v-1h4v1h1v-2h1v-2h1v3h2v-3h1v2h1v-1h2v-1h1v4h1v-1h1v1h2v-1h1v1h1v-1h1v-2h1v-1h1v3h2v-1h1v-1h1v2h2v-2h1v2h1v2h1v-3h2v2h1v-1h2v1h2v-3h1v2h1v-1h1v1h2v-3h1v3h1v-2h1v3h1v1h1v-7h1v5h1v-2h1v3h1v-2h1v-1h1v2h1v-2h1v3h1v-2h1v2h1v-1h3v-1h1v-1h1v1h1v-2h1v-1h1v4h1v1h1v-2h2v-1h1v1h1v1h3v-3h1v4h1v-1h1v-1h1v-1h2v3h1v-2h2v1h1v-2h1v2h1v1h1v-1h2v-1h3v-1h1v-1h1v4h1v-1h1v-2h2v2h2v-2h1v1h5v1h1v-2h1v2h1v-2h1v2h1v1h4v-2h1v1h1v-1h1v1h1v-1h2v-1h1v2h1v-3h1v3h2v-2h1v2h1v2h1v-4h1v1h1v1h1v-1h2v1h3v-2h1v1h1v-1h2v3h1v-3h1v1h1v1h2v-1h1v1h1v1h1v-2h1v-2h1v4h1v-2h2v1h3v-1h1v2h1v-1h1v-1h3v1h1v-1h2v1h2v1h1v-1h3v-1h2v-1h1v1h1v-3h1v3h2v1h2v-2h2v2h1v1h2v-2h2v-2h1v2h1v1h1v-1h2v1h2v-1h1v-1h1v2h1v2h1v-3h2v1h2v1h1v-2h1v-1h1v2h1v-1h4v1h1v-2h1v1h1v2h2v-1h1v-2h1v2h1v1h1v-5h1v3h2v-1h1v3h1v-4h1v4h1v-1h6v-3h1v3h2v-1h1v-1h1v1h1v1h1v1h1v-2h1v1h1v-1h2v-1h1v2h1v-1h1v2h1v-3h1v1h1v1h2v-2h1v3h1v-2h1v-1h1v1h1v2h1v-2h1v-3h1v4h2v-2h1v2h1v1h1v-1h1v-2h1v2h1v-2h1v-1h3v2h1v3h1v-2h1v-2h2v2h1v-2h4v1h1v-1h2v1h1v1h2v-1h1v1h1v-1h1v1h1v-4h1v3h3v2h1v1h1v-2h2v1h2v-4h1v4h3v-2h1v1h3v-1h2v2h1v-2h2v1h3v-2h1v2h2v-1h1v-2h1v2h1v-1h1v1h1v1h3v-2h1v1h1v-1h2v-3h1v4h2v1h2v-1h1v2h2v-4h1v4h2v1h1v-3h1v1h1v-1h1v-1h1v1h1v-2h1v3h1v-2h1v1h1v1h1v-3h1v4h1v-2h1v-1h1v3h1v-1h2v-1h1v-1h1v1h2v1h2v-3h2v3h1v-2h1v2h1v1h1v-1h1v-1h1v1h2v-1h7v1h1v-3h1v2h1v1h2v-1h1v1h2v1h1v-2h1v-1h1v1h1v2h1v-2h1v2h1v-2h1v1h2v-2h2v3h1v-1h2v-1h2v-1h1v1h1v-1h1v-1h1v3h1v-3h1v4h1v-4h1v3h3v-2h2v-1h1v4h1v-1h1v-3h1v4h1v-2h1v-2h1v4h1v-2h1v1h1v-1h1v-2h1v2h2v1h1v-2h1v1h2v2h1v-1h2v-2h1v2h1v1h1v-2h1v1h2v1h1v-3h1v2h2v-1h2v1h1v-1h2v1h1v1h1v-2h1v-1h1v1h3v2h1v-1h1v-3h1v1h1v3h1v-1h3v-1h3v-1h1v1h1v-1h1v2h1v1h1v-3h1v1h2v1h1v-1h1v2h1v-1h1v-2h1v1h1v-2h1v1h1v1h3v-2h2v3h1v-2h2v4h1v-2h1v-1h1v2h1v-4h1v4h1v-1h4v-3h1v1h1v1h3v2h1v1h1v-1h1v-4h1v4h1v-4h1v2h3v-2h1v3h1v-1h1v-1h2v1h2v1h2v-1h2v1h2v1h1v-1h2v2h1v-3h1v-1h1v2h1v-1h1v1h2v-2h1v3h1v-2h1v1h1v-1h1v1h1v-1h1v1h1v-1h1v1h1v1h1v-1h1v1h2v-1h4v-3h1v3h1v-2h1v-1h1v3h1v-1h2v1h2v-2h1v1h1v1h1v-1h3v1h3v-2h1v1h1v-1h1v2h1v-1h1v1h2v-1h1v1h1v1h1v-3h1v1h1v2h1v-1h1v-2h1v2h1v-1h3v2h1v-2h2v-1h3v-2h1v3h1v1h1v-1h2v1h1v-2h1v2h2v1h1v-2h2v-2h1v1h1v1h1v1h2v-1h2v1h1v-1h1v1h1v-2h1v3h1v-3h2v1h1v-1h1v2h1v-2h2v2h1v-1h7v2h1v-2h1v1h1v1h1v-2h1v1h1v-1h1v-3h1v4h2v-1h2v1h1v1h1v-3h1v1h1v2h1v-4h1v2h2v-1h1v-1h1v2h1v2h1v-2h1v2h2v-1h2v1h1v-3h1v3h1v-2h1v-1h1v2h2v-2h1v2h1v-3h1v1h1v1h1v3h1v-4h1v1h1v1h1v-1h1v-1h1v1h1v1h1v-2h1v1h1v-1h1v2h1v1h2v1h1v-3h1v1h1v1h1v-1h2v-1h1v-3h1v3h1v1h1v-1h1v1h2v-4h1v5h1v-1h1v-1h1v-1h1v3h1v-2h1v1h1v-1h3v1h1v1h1v-2h2v2h2v-2h1v1h4v-2h1v2h2v-1h3v1h1v-1h1v-1h1v1h1v1h1v-1h1v1h1v1h1v-7h1v4h1v4h1v-3h1v2h1v-3h2v2h1v-1h2v-1h1v3h1v-2h1v1h2v2h1v-3h1v1h2v-1h1v2h2v-3h1v2h1v1h1v-2h1v1h1v1h2v-2h1v-1h2v3h2v-2h1v1h1v-2h1v2h3v-3h1v4h1v-2h1v-1h1v2h1v-1h2v1h1v-1h1v2h1v-3h1v1h1v1h1v-3h1v1h1v1h2v2h1v-3h1v2h1v-3h2v1h1v3h1v-2h2v1h2v-1h1v1h2v1h1v-2h4v2h1v-1h1v-1h3v1h2v-1h2v1h2v-1h2v1h1v-4h1v6h1v-1h2v-2h1v2h3v-1h1v-1h1v-1h1v-1h1v3h1v-2h1v2h1v1h1v-4h1v3h1v1h1v-1h1v-1h1v2h1v-2h1v-1h1v4h1v-5h1v1h1v1h1v-2h1v3h1v1h1v-1h2v-1h1v-1h1v2h1v-1h1v1h1v-1h1v3h1v-2h1v-3h1v3h1v1h1v-2h1v2h1v-2h1v2h1v-1h3v1h1v-4h1v2h2v1h1V250h-1v1h-3v1h-1v-1h-1v-2h-1v3h-1v-2h-2v2h-1v1h-1v-4h-1v4h-1v-2h-2v1h-3v3h-1v-4h-1v1h-1v-1h-3v-2h-1v2h-2v2h-2v-3h-1v1h-2v1h-2v-1h-2v-1h-1v1h-1v1h-1v-1h-1v1h-1v1h-1v-2h-2v-2h-1v3h-3v-1h-1v2h-1v-2h-1v1h-1v-3h-1v2h-1v1h-1v2h-1v-1h-1v-2h-1v38h-1v-37h-1v2h-1v-3h-1v1h-1v-1h-1v2h-1v-2h-1v2h-3v-3h-1v1h-1v3h-1v-3h-1v1h-1v-2h-4v2h-1v29h-1v3h-1v-34h-1v3h-1v-2h-1v-1h-1v2h-1v-1h-2v2h-1v-2h-1v1h-2v-1h-4v-1h-1v3h-1v-2h-1v3h-1v-3h-1v2h-1v1h-1v-2h-1v-1h-1v3h-1v-4h-1v2h-1v-1h-1v2h-1v-1h-1v-2h-1v3h-1v-2h-1v1h-1v-1h-1v3h-1v-3h-2v1h-1v3h-1v-3h-2v-2h-1v-1h-1v1h-2v-1h-1v4h-1v-2h-1v1h-1v-2h-1v1h-1v6h-1v-8h-1v3h-1v-1h-1v1h-1v-2h-2v3h-1v-4h-1v1h-1v2h-1v-4h-1v3h-1v-1h-2v3h-1v-2h-1v1h-1v-1h-3v1h-1v-3h-1v33h-1v2h-1v-33h-1v1h-1v-2h-1v1h-1v1h-1v-1h-1v2h-1v-3h-1v3h-1v-1h-1v-2h-1v2h-1v-1h-1v2h-1v-2h-1v1h-1v-2h-1v3h-2v-2h-1v1h-1v-1h-1v1h-2v-2h-1v1h-2v-1h-1v1h-1v1h-1v1h-1v-3h-1v7h-1v-5h-1v-1h-1v1h-2v-2h-1v3h-1v-1h-1v-1h-3v1h-1v-2h-1v3h-1v-1h-1v6h-1v-8h-1v2h-1v-2h-1v1h-1v1h-2v-1h-1v-1h-1v2h-1v-2h-2v2h-1v-1h-2v1h-1v-1h-1v1h-1v-1h-1v1h-2v-1h-1v1h-1v-1h-1v-1h-2v38h-1v-36h-1v-2h-1v2h-1v-1h-1v-1h-1v2h-2v-2h-1v2h-3v-1h-1v1h-1v-1h-1v-1h-2v3h-1v-1h-1v1h-2v-2h-1v2h-1v-3h-2v3h-1v-1h-1v-1h-1v2h-1v-1h-1v-1h-1v-1h-1v1h-1v1h-1v-2h-1v2h-1v-1h-1v1h-1v1h-1v34h-1v3h-1v-39h-1v-1h-1v1h-1v-1h-1v1h-2v-1h-1v1h-1v1h-1v-1h-1v2h-1v-3h-1v2h-1v1h-1v-3h-2v2h-1v-2h-1v2h-1v3h-1v6h-1v23h-1v-33h-2v-1h-3v1h-1v1h-1v-3h-2v1h-2v3h-1v-3h-1v1h-1v18h-1v19h-1v-36h-1v1h-1v-3h-1v3h-1v-3h-2v1h-2v2h-1v-1h-1v-1h-1v-2h-1v1h-2v1h-1v-1h-1v2h-1v-2h-1v4h-1v4h-1v-6h-1v-2h-2v1h-1v-1h-1v1h-1v4h-1v-5h-4v1h-1v6h-1v-5h-2v2h-1v-2h-1v1h-1v-1h-1v-1h-2v1h-1v1h-1v-1h-2v-1h-1v-1h-1v1h-2v-1h-1v1h-1v2h-1v-1h-1v-2h-1v3h-1v-3h-1v1h-1v-1h-2v2h-1v-2h-1v1h-1v1h-2v-1h-1v-1h-1v2h-1v-3h-1v16h-1v21h-1v-37h-1v2h-1v1h-1v-1h-1v-1h-1v1h-1v1h-1v-1h-1v3h-1v-3h-3v1h-1v-1h-1v-2h-1v2h-1v-1h-1v1h-1v1h-1v-1h-1v-1h-2v2h-3v-1h-2v1h-1v-1h-2v2h-1v-1h-1v-1h-1v1h-1v1h-1v-1h-1v-1h-1v1h-1v-1h-1v3h-1v-2h-1v-1h-2v1h-1v-1h-1v1h-1v1h-1v-1h-3v-1h-1v2h-1v-1h-1v-1h-1v-1h-1v2h-1v-2h-1v9h-1v-5h-1v-3h-1v-1h-1v1h-4v1h-1v-1h-2v2h-2v-2h-1v1h-1v-1h-1v-1h-1v4h-1v-3h-1v1h-1v-1h-1v2h-1v-1h-1v-1h-3v-1h-1v2h-1v-1h-1v1h-1v-2h-1v2h-1v-1h-1v37h-1v-19h-1v-18h-3v1h-1v-2h-1v2h-1v-2h-1v1h-1v3h-1v-3h-1v-1h-1v1h-1v-2h-1v2h-1v1h-2v-2h-1v1h-1v1h-1v-1h-1v1h-2v-1h-3v2h-1v-2h-1v-1h-1v1h-1v8h-1v-8h-1v1h-1v-2h-2v2h-1v-2h-1v2h-1v-2h-1v1h-1v-1h-1v2h-1v-1h-1v-1h-1v8h-1v-8h-2v17h-1v19h-1v-36h-1v1h-2v3h-1v-3h-2v2h-1v-2h-2v1h-2v-2h-1v5h-1v-4h-2v2h-1v-2h-3v1h-1v-1h-1v1h-1v-1h-1v1h-1v-2h-1v2h-3v-2h-1v1h-2v2h-1v-1h-1v-1h-1v-2h-1v2h-2v-1h-2v1h-1v1h-2v-2h-1v1h-1v-1h-1v1h-1v1h-1v-1h-4v1h-1v-1h-1v1h-2v-2h-1v7h-1v-7h-1v1h-1v1h-1v1h-1v-2h-1v-1h-2v1h-2v-2h-1v3h-2v2h-1v-3h-1v1h-1v-1h-1v1h-1v-2h-1v2h-1v-1h-1v3h-1v-3h-3v-1h-1v2h-1v2h-1v4h-1v-7h-2v1h-1v1h-1v30h-1v3h-1v-31h-1v-5h-1v1h-1v1h-1v-1h-2v1h-1v-1h-2v-1h-1v1h-1v1h-2v-1h-1v1h-1v-1h-1v-1h-1v1h-1v1h-1v-1h-1v-1h-1v1h-1v3h-1v-2h-2v1h-1v-2h-1v1h-3v-2h-2v1h-2v2h-1v-1h-1v3h-1v-5h-1v1h-1v-1h-1v36h-1v-34h-2v4h-1v-5h-1v1h-3v-1h-1v-2h-1v4h-1v-2h-2v-1h-1v1h-1v-2h-1v2h-1v1h-2v-1h-1v-1h-1v2h-1v-1h-1v1h-1v-3h-1v3h-1v3h-1v-5h-1v1h-1v-1h-1v2h-2v-3h-1v1h-1v6h-1v28h-1v-34h-1v2h-1v-1h-1v1h-2v-2h-1v1h-1v2h-1v-3h-1v2h-1v-3h-1v2h-1v1h-1v-1h-1v1h-2v-2h-2v3h-1v-3h-1v1h-1v1h-1v6h-1v-7h-1v2h-1v-2h-1v1h-1v-2h-2v3h-1v2h-1v-3h-4v-2h-1v1h-1v1h-1v-2h-1v4h-1v-3h-1v-2h-1v2h-1v2h-1v-3h-1v1h-1v-1h-1v1h-1v1h-2v-1h-1v1h-1v-1h-1v-1h-2v3h-1v-2h-4v1h-1v-1h-1v7h-1v-6h-1v-1h-1v-1h-2v1h-1v2h-1v17h-1v19h-1v-37h-1v3h-1v-3h-1v-1h-1v-1h-1v1h-2v-1h-1v2h-1v1h-1v-3h-1v2h-2v1h-1v-1h-1v-2h-1v1h-1v-2h-1v2h-2v1h-2v-1h-3v-1h-2v1h-2v-1h-1v3h-1v-2h-2v1h-1v-3h-1v1h-1v1h-1v1h-1v-1h-1v-1h-1v1h-1v1h-1v-1h-2v35h-1v3h-1v-36h-1v-4h-1v3h-1v-2h-1v1h-2v1h-1v1h-1v-2h-1v2h-1v-1h-1v-2h-1v8h-1v-6h-1v1h-1v-2h-1v1h-2v-1h-1v-2h-1v2h-1v-1h-1v3h-1v-2h-1v1h-2v-2h-1v1h-1v2h-1v-2h-3v2h-1v-3h-1v2h-1v-2h-1v3h-1v-3h-2v2h-1v5h-1v28h-1v-34h-1v3h-1v-2h-2v-2h-1v2h-1v-1h-2v2h-1v-2h-1v1h-1v-2h-1v2h-1v-2h-1v2h-2v1h-2v-1h-1v-1h-1v1h-1v-1h-2v1h-1v-1h-2v1h-1v1h-1v-2h-1v-1h-1v1h-2v-1h-1v2h-1v-2h-1v1h-1v1h-1v1h-1v-3h-1v1h-2v-1h-1v1h-3v1h-1v1h-1v-2h-1v-1h-1v2h-1v-1h-4v2h-1v-2h-1v1h-1v-3h-1v4h-2v-2h-2v8h-1v-8h-2v1h-1v-1h-2v2h-1v7h-1v23h-1v-32h-1v1h-3v-1h-1v-1h-1v2h-1v1h-1v-2h-2v1h-1v2h-1v-4h-1v1h-1v1h-1v-1h-1v1h-1v-2h-1v1h-1v1h-1v-1h-1v3h-1v-3h-2v-1h-3v2h-2v-1h-2v1h-1v1h-1v5h-1v-7h-1v1h-1v-2h-2v1h-1v6h-1v-6h-1v1h-1v1h-1v-1h-2v-1h-1v-2h-1v39h-1v-37h-1v-1h-1v1h-1v1h-3v-1h-1v-1h-1v1h-1v-2h-1v-1h-1v5h-1v-2h-1v-1h-1v2h-1v-1h-3v32h-1v-17h-1v-15h-1v1h-1v-2h-1v2h-1v1h-1v-2h-1v-1h-1v4h-1v-2h-1v-2h-1v3h-1v33h-1v-21h-1v-14h-1v-1h-1v2h-2v1h-1v-1h-1v-2h-1v-1h-1v2h-1v-1h-2v9h-1v-7h-1v-1h-2v3h-1v-3h-1v1h-1v-1h-3v2h-1v-2h-1v1h-1v2h-1v-4h-2v2h-2v-2h-1v4h-1v-4h-2v1h-1v7h-1v-5h-1v-2h-1v-2h-1v4h-1v32h-1v-32h-1v-2h-1v1h-1v6h-1v-7h-1v2h-1v-3h-1v2h-1v-3h-1v1h-2v1h-1v1h-1v-1h-1v3h-1v-2h-4v-1h-3v1h-1v3h-1v-5h-1v1h-1v1h-1v-3h-1v3h-1v-1h-3v1h-1v-1h-1v2h-1v-1h-1v-1h-4v33h-1v-33h-1v-1h-1v1h-2v2h-1v-2h-1v-1h-1v2h-1v-3h-1v1h-1v1h-1v-1h-2v1h-1v1h-1v1h-1v-2h-2v2h-1v-4h-1v4h-1v-1h-2v-3h-1v10h-1v-6h-1v-1h-1v2h-1v-2h-1v1h-2v-2h-2v-1h-1v2h-3v1h-1v-1h-3v38h-1v-39h-2v2h-1v-1h-1v1h-1v-2h-1v1h-2v2h-1v-4h-2v1h-1v-1h-2v2h-1v-2h-1v2h-1v-1h-1v2h-3v-2h-2v2h-1v-3h-1v1h-1v1h-1v-3h-1v2h-1v1h-2v-2h-1v2h-1v-2h-1v2h-1v-1h-1v1h-1v-1h-1v1h-1v1h-1v-3h-1v1h-1v-1h-1v2h-2v-1h-1v1h-1v1h-1v6h-1v-7h-1v-1h-2v1h-1v-1h-2v1h-2v1h-1v-3h-1v3h-1v-1h-2v-1h-3v-1h-1v1h-2v-1h-1v5h-1v-4h-1v-1h-3v1h-2v-1h-2v2h-1v2h-1v-4h-1v1h-1v-1h-1v2h-1v-1h-1v-1h-1v1h-2v3h-1v-3h-2v2h-1v1h-1v-2h-2v5h-1v-6h-2v-1h-2v2h-1v-1h-1v1h-1v-1h-1v2h-1v-1h-5v1h-1v-1h-1v-1h-4v3h-1v-3h-1v-1h-1v2h-2v-2h-1v1h-1v31h-1v3h-1v-33h-3v-2h-1v1h-2v1h-1v-1h-1v-1h-1v1h-1v1h-2v-1h-1v1h-3v1h-1v-1h-1v-2h-1v1h-1v1h-1v1h-1v-3h-1v2h-1v-1h-2v1h-2v-2h-1v2h-1v-1h-2v-1h-2v3h-1v-2h-1v-1h-1v1h-1v-1h-1v2h-1v-2h-1v2h-1v-1h-1v1h-1v-1h-1v1h-1v-2h-1v4h-1v-4h-1v1h-2v-2h-1v2h-1v2h-1v-1h-1v1h-1v-3h-1v2h-1v-1h-1v1h-1v16h-1v19h-1v-37h-1v3h-1v-2h-3v2h-1v-2h-1v1h-1z"/>
<path d="M584 297h1v-2h1v-1h1v-1h1v2h2v1h1v-2h1v-1h1v2h1v1h1v-3h1v1h1v2h1v-1h3v-1h3v1h1v-2h1v2h2v1h1v-3h1v3h1v-1h1v1h1v-3h1v2h1v-2h1v2h2v-3h1v2h1v2h2v-2h1v1h1v-1h1v1h1v-1h3v1h2v2h1v-2h1v-2h1v2h1v-1h1v2h2v-1h3v-3h1v1h2v2h1v1h1v-1h1v1h1v-2h1v-1h2v2h1v1h1v1h1v-3h1v2h1v-2h1v1h5v1h1v-1h1v-1h1v-1h1v2h1v1h2v-1h3v-2h1v2h1v1h1v-2h1v2h2v-2h1v1h2v-1h1v-2h1v3h1v1h2v-1h1v1h2v-3h1v2h3v2h1v-1h1v-1h1v-1h1v1h1v-1h1v1h1v-1h2v1h4v-1h1v1h1v-1h1v-2h1v4h1v-3h1v2h1v1h1v-1h3v1h1v-2h3v1h1v-1h1v3h1v-2h1v-1h1v2h2v-1h1v-1h1v1h2v-1h2v1h3v-1h1v2h1v-1h1v-1h2v2h3v-1h4v-2h1v2h1v-2h1v3h1v-2h1v1h2v1h1v-2h2v-1h1v3h1v-1h1v-1h1v1h2v-3h1v1h1v2h2v-1h1v-3h1v3h1v2h2v-3h1v2h1v-1h3v-1h1v3h1v-1h2v-1h1v1h1v1h1v-2h1v1h1v1h1v-5h1v3h1v2h1v-2h1v1h1v2h1v-4h1v2h2v2h1v-1h1v-1h1v-2h1v2h2v-2h1v1h1v3h1v-1h2v-1h1v1h1v-1h4v-1h1v2h1v-2h1v2h1v-3h1v1h1v1h4v2h1v-1h1v-2h2v2h1v-2h2v2h1v-1h2v1h1v-1h1v1h1v-2h2v-1h2v1h1v-1h1v3h1v-1h2v-1h2v-1h1v3h1v-2h2v2h1v-3h1v3h1v-1h1v-2h4v1h1v-1h1v2h1v-1h1v3h1v-3h1v1h1v1h1v-1h1v-1h1v-1h1v2h1v-1h1v2h2v-2h2v1h2v-1h2v-1h1v2h1v-1h1v1h2v-1h1v1h2v1h1v-1h1v-1h1v1h1v-1h3v-1h1v1h2v2h1v-1h1v-1h2v3h1v-5h1v1h1v1h1v1h1v1h1v-1h1v-2h1v2h1v-2h1v2h1v-3h1v2h1v2h3v-1h1v1h1v-2h2v2h1v-1h1v-2h1v1h2v-1h1v3h1v-2h2v2h1v1h1v-2h2v-4h1v3h1v1h1v1h1v-1h1v-1h1v-1h1v2h1v-1h4v2h2v-4h1v2h1v1h1v-2h1v3h2v1h1v-2h2v1h2v-2h1v2h1v-1h1v-1h2v2h1v-2h1v1h1v-2h1v4h2v-2h2v-1h1v-1h1v2h2v-3h1v1h2v3h1v-2h1v2h1v-1h2v-2h1v2h4v1h1v-1h3v-1h1v-2h1v3h1v-1h2v1h1v-1h1v1h1v1h1v-1h2v1h1v1h1v-5h1v5h1v-6h1v4h1v-3h1v2h1v2h1v-2h2v2h3v-2h1v2h2v-1h3v-2h1v2h1v1h1v-2h2v1h1v1h2v-3h3v2h2v-1h2v2h3v-2h1v2h1v-1h1v-2h2v2h1v-2h1v2h1v2h1v-2h1v-3h1v3h1v-3h1v2h1v-1h1v2h1v-1h1v-1h1v1h1v1h1v1h1v-2h1v3h1v-1h1v-1h4v-1h2v2h1v-3h1v2h6v-1h2v-1h1v3h1v-3h1v3h1v-5h1v4h2v-1h1v1h2v1h4v-2h1v1h1v-2h1v1h1v-2h1v1h1v2h2v1h2v-1h3v-1h1v1h2v-1h2v1h1v1h1v-2h1v2h1v-1h1v-1h1v1h1v-3h1v1h1v2h1v-1h2v2h1v-1h3v-2h1v2h1v1h2v-5h1v3h1v2h1v-3h1v2h1v1h1v-1h2v-1h1v-2h1v2h1v2h2v-1h1v-1h1v1h2v-2h2v2h1v-1h1v-1h1v3h2v-2h1v2h1v-2h1v2h1v-2h1v2h1v-5h1v3h2v-2h1v2h2v-1h1v1h1v1h1v-1h1v2h1v-2h2v2h1v-1h1v-2h1v1h1v1h2v-1h1v1h1v-1h2v2h2v-1h1v-2h1v2h1v1h1v-3h1v2h1v-1h1v1h1v3h1v-6h1v4h1v-2h1v1h1v1h1v-1h1v-1h2v1h1v-1h1v2h1v-4h1v3h1v-1h1v-1h1v1h1v-2h1v3h1v-1h1v1h2v-1h1v1h2v-1h1v2h1v-3h1v1h1v2h1v-1h1v-1h2v-1h1v3h1v-1h1v-1h1v1h2v1h2v-1h1v-1h1v2h1v-2h1v2h3v-1h1v-4h1v3h1v2h3v-1h1v1h3v-2h1v2h2v-3h1v2h1v1h1v-1h2v-3h1v4h1v-3h1v1h1v-1h1v1h1v1h1v-1h1v1h2v-1h1v3h1v-1h1v-1h3v1h1v-1h2v2h1v-2h1v1h1v-2h1v-1h1v-1h1v2h1v2h1v-1h1v-1h1v1h1v1h2v-3h1v3h1v-2h1v-2h1v3h4v-2h1v3h1v-1h3v-2h1v2h4v1h1v-4h1v3h3v-3h1v1h1v2h2v-1h1v1h2v-1h1v-1h1v3h3v-2h1v1h3v-2h1v1h1v2h1v-2h1v-1h1v2h1v-1h1v2h1v-2h1v1h1v1h2v-2h2v1h1v1h1v-1h1v-3h1v3h1v-1h1v-1h1v4h1v-3h2v1h1v-1h1v1h1v-1h1v1h1v-1h1v-1h1v2h1v1h1v1h1v-1h1v-2h1v-1h1v2h1v-1h1v-1h1v1h1v1h1v1h1v-2h1v1h3v1h1v-2h1v2h1v-2h1v-1h1v3h1v-3h1v-1h1v2h3v-1h1v3h1v-4h1v2h1v2h1v-1h2v-1h1v-1h1v1h1v1h1v1h2v-4h1v2h1v3h1v-3h1v1h3v-2h1v3h1v-1h2v1h1v1h1v-2h1v1h2v-1h1v2h1v-3h1v-1h1v2h1v-1h2v1h1v1h1v-1h1v1h1v-1h3v1h1v1h1v-4h1v3h2v-1h1v-1h1v1h1v1h1v-1h1v-4h1v5h1v-3h1v1h2v1h2v-2h1v3h1v-1h1v-1h1v1h1v-1h1v1h1v-1h2v1h1v1h1v-2h1v1h1v-3h1v3h2v2h1v-2h3v-3h1v3h1v1h1v-2h1v1h1v2h1v-2h1v-1h1v1h1v-1h1v2h1v-1h2v-1h1v1h1v1h2v-2h1v1h1v-1h1v1h1v-1h2v1h1v-1h2v1h2v2h1v-2h1v1h1v-1h1v-1h1v-2h1v2h1v2h1v-1h1v-1h2v1h1v-1h1v3h1v-4h1v1h1v-1h1v1h1v-3h1v2h1v1h1v1h1v-1h3v3h1v-2h1v-3h1v4h1v-1h2v1h1v-2h1v1h1v-2h1v2h1v-2h1v2h1v-1h1v2h1v-2h2v2h1v-1h1v1h3v-3h1v3h1v-2h2v2h1v-3h1v1h2v1h1v-1h1v1h3v-2h1v3h2v-3h1v3h1v-2h2v1h1v-2h2v-3h1v4h4v1h1v1h2v-2h3v1h1v-2h2v3h3v-2h1v2h1v-2h1v2h1v-4h1v2h2v-2h1v3h1v-1h5v-2h1v4h1v-4h1v1h2v3h2v-2h1v1h4v1h1v-1h1v-1h1v1h1v-2h1v2h1v-3h1v2h1v2h1v-1h1v-1h1v1h1v1h1v-3h1v3h1v-1h1v-3h1v3h1v1h1v-2h1v2h1v-1h2v1h1v-2h2v2h1v-2h2v2h3v-2h1v2h1v-3h1v1h1v-2h1v4h1v-3h1v3h1v-1h3v-1h1v1h1v-1h1v-1h1v1h1v-1h1v2h1v1h1v-2h1v2h1v-2h2v2h1v-1h1v-1h1v2h1v-2h1v1h2v-1h2v-2h1v3h2v-1h1v1h1v-1h1v1h1v2h1v-1h2v-3h1v4h1v-2h1v1h1v1h1v-2h5v1h1v-2h1v1h4v-1h1v1h1v-1h4v-3h1v4h1v-1h1v2h1v-3h1v2h1v-1h1v2h1v-2h3v1h1v1h1v-1h1v1h1v-3h1v2h2v-1h1v-1h1v3h1v-3h1v2h1v-1h1v1h1v-4h1v4h3v-1h1v2h1v-2h2v2h1v-1h2v1h1v-3h1v2h1v-1h1v1h1v-2h1v1h1v1h2v1h1v-2h2v1h1v1h1v-2h1v-1h1v4h1v-4h1v1h1v2h1v-3h1v2h1v3h1v-4h2v2h1v-2h1v1h1v-1h1v1h1v-1h2v2h1v1h1v-2h1v1h2v-2h2v-2h1v3h1v-1h1v1h2v-2h1v2h1v-2h1v3h1v-1h1v-2h1v3h1v-1h2v-1h1v-3h1v5h1v-1h1v-1h1v-1h1v1h1v1h1v-1h1v-2h1v3h1v2h1v-1h1v-2h1v-1h1v1h1v1h2v1h1v-1h1v-2h1v1h2v1h3v-2h1v1h1v1h3v-2h1v1h1v2h1v-2h1v1h3v-2h1v3h2v-2h1v1h1v1h1v-1h2v-1h1v1h5v1h1v-3h1v2h1v-1h3v2h1v-3h1v3h2v-2h1v1h1v1h1v-1h2v1h1v-1h1v-1h1v2h1v-1h1v-1h1v2h1v-5h1v4h1v-1h1v-1h1v2h2v-1h1v-1h1v4h1v-2h2v-1h1v-1h1v2h3v1h1v-4h1v3h2v-2h3v2h1v1h1v-1h1V306h-1v-1h-1v1h-2v-2h-3v2h-1v1h-1v-2h-6v1h-2v-1h-2v-1h-1v1h-5v1h-3v-1h-1v1h-1v-1h-1v2h-1v-2h-2v1h-1v-1h-1v2h-1v-1h-4v1h-1v-3h-2v1h-1v2h-2v-2h-2v1h-3v-2h-1v4h-1v-2h-1v2h-1v-3h-1v1h-2v22h-1v-21h-1v-1h-2v-2h-1v2h-2v1h-1v-1h-1v-1h-1v1h-2v-2h-1v1h-2v2h-1v-2h-1v1h-1v-1h-2v2h-1v21h-1v2h-1v-25h-1v3h-1v-4h-1v2h-1v-1h-2v1h-1v-1h-1v-1h-1v2h-1v-1h-2v-1h-1v1h-1v1h-1v-2h-1v1h-1v-1h-2v1h-1v-1h-1v2h-1v-3h-2v2h-1v1h-1v-2h-1v1h-2v-1h-2v-1h-1v3h-2v2h-1v-4h-2v1h-1v1h-1v-1h-2v1h-2v-2h-1v2h-1v-2h-1v2h-1v-1h-1v1h-1v2h-1v-3h-2v5h-1v-4h-1v1h-1v1h-1v-2h-1v1h-1v-1h-1v-2h-1v2h-1v-1h-3v1h-1v-1h-2v-1h-1v3h-2v-2h-1v-1h-1v1h-1v2h-1v-3h-1v20h-1v2h-1v-21h-1v1h-2v-1h-1v2h-1v-1h-3v-1h-1v3h-1v-4h-1v-1h-1v2h-1v1h-2v-1h-2v1h-1v-2h-1v2h-2v-1h-1v1h-1v-1h-1v1h-1v1h-1v-1h-1v-2h-1v1h-1v2h-1v1h-1v-3h-1v6h-1v-7h-1v1h-2v-1h-1v1h-1v1h-4v-1h-4v1h-1v3h-1v-4h-1v1h-1v1h-2v-2h-1v3h-1v-4h-1v1h-4v1h-1v-1h-1v1h-1v-1h-1v2h-1v-3h-1v4h-1v-4h-1v2h-1v4h-1v-3h-1v-3h-1v1h-1v10h-1v14h-1v-24h-1v1h-1v1h-1v-2h-1v3h-1v-1h-1v-4h-1v2h-3v1h-2v-1h-2v1h-2v-1h-1v1h-1v-1h-1v2h-1v1h-1v-2h-1v-1h-1v3h-1v-2h-1v-2h-1v1h-1v-1h-1v1h-1v2h-1v-3h-1v3h-1v-1h-1v-1h-1v3h-1v-3h-1v-1h-1v-1h-1v25h-1v2h-1v-25h-2v1h-1v-1h-3v1h-3v-2h-1v4h-1v-3h-1v2h-2v-2h-2v-1h-1v2h-2v-1h-1v4h-1v19h-1v-18h-1v-5h-1v-1h-1v3h-1v-2h-1v-1h-1v2h-1v1h-1v-1h-3v-1h-1v3h-1v-3h-2v21h-1v-20h-3v-2h-1v1h-2v1h-1v-1h-2v1h-2v3h-1v-5h-1v1h-1v1h-2v-1h-1v1h-1v-1h-1v6h-1v-6h-2v-1h-1v1h-1v1h-1v-1h-1v1h-2v-1h-1v2h-1v-1h-1v-2h-1v6h-1v-5h-1v2h-1v-1h-1v-2h-1v2h-1v-2h-1v2h-1v-1h-1v1h-1v-1h-1v2h-1v-1h-1v-1h-1v1h-1v-1h-1v1h-1v-1h-1v-1h-1v2h-1v-2h-1v1h-1v1h-5v-1h-2v3h-1v-4h-1v1h-1v-1h-1v1h-1v1h-1v-2h-1v1h-1v21h-1v-15h-1v-5h-1v1h-1v-3h-1v1h-1v-2h-1v3h-1v-1h-1v2h-1v-1h-1v-1h-1v-1h-1v1h-3v-1h-2v2h-1v-2h-1v1h-1v1h-1v1h-1v-3h-1v3h-1v-1h-1v1h-1v-2h-2v2h-1v-2h-1v1h-1v3h-1v-5h-2v1h-1v-1h-2v1h-2v1h-1v-1h-1v1h-1v-1h-1v-1h-1v1h-3v1h-1v-1h-1v-1h-1v3h-3v-3h-1v4h-1v-2h-1v-1h-1v5h-1v-6h-1v1h-1v3h-1v-3h-1v2h-1v-2h-6v1h-1v2h-1v-3h-2v2h-1v-2h-2v1h-2v2h-1v-3h-1v-1h-1v1h-1v3h-1v-2h-2v-2h-1v3h-1v-2h-2v8h-1v16h-1v-22h-1v-2h-2v2h-1v-3h-2v3h-1v4h-1v-5h-1v1h-1v-2h-1v-2h-1v4h-1v-1h-2v-1h-1v1h-2v1h-2v-2h-1v1h-3v-1h-2v2h-1v-1h-1v-2h-1v1h-1v6h-1v-5h-2v1h-1v-2h-2v2h-1v1h-1v-2h-1v-2h-1v1h-3v2h-1v3h-1v-1h-2v-1h-1v20h-1v-24h-1v1h-5v2h-1v-3h-1v4h-1v-2h-1v3h-1v-3h-1v2h-1v-2h-1v-1h-1v2h-1v-3h-1v3h-1v-2h-1v1h-3v-1h-1v2h-1v-2h-2v2h-1v-2h-2v1h-3v1h-1v-2h-3v1h-1v3h-1v-5h-1v1h-1v4h-1v-3h-2v-2h-1v2h-1v4h-1v-4h-1v3h-1v-4h-1v1h-4v-2h-1v1h-1v3h-1v2h-1v-4h-3v-1h-2v1h-1v1h-1v-3h-1v2h-2v-1h-1v1h-1v-2h-1v1h-2v1h-2v1h-1v-2h-1v2h-1v-1h-1v-2h-1v1h-2v2h-1v-2h-2v6h-1v-5h-1v2h-1v-3h-1v-2h-1v25h-1v2h-1v-25h-1v1h-1v1h-1v-1h-1v-1h-1v2h-1v1h-1v-2h-1v-1h-3v1h-1v-1h-2v2h-1v-2h-2v2h-1v-1h-2v-1h-3v2h-1v-2h-2v1h-1v-2h-1v2h-1v-2h-1v2h-1v-1h-2v2h-2v-2h-1v4h-1v-4h-2v-1h-1v25h-1v-24h-1v1h-1v-1h-1v2h-1v-1h-1v2h-1v-3h-1v-1h-1v2h-1v-1h-2v2h-2v-3h-2v3h-1v-1h-1v-1h-1v2h-1v-2h-1v2h-1v-2h-1v2h-1v-2h-1v2h-1v-3h-1v1h-3v1h-3v-1h-2v24h-1v-12h-1v-11h-1v-1h-1v2h-2v-1h-3v2h-1v-1h-1v-1h-1v1h-1v-1h-1v-1h-1v2h-1v-1h-1v1h-3v-2h-1v4h-1v-4h-1v5h-1v-4h-2v-2h-1v2h-1v-2h-1v1h-2v1h-1v2h-1v-3h-2v-1h-1v1h-2v1h-2v3h-1v-2h-1v-2h-2v1h-1v1h-2v-2h-2v2h-1v-3h-1v1h-1v1h-1v-1h-4v-2h-1v4h-1v-1h-1v-1h-1v2h-1v-2h-1v5h-1v-5h-3v3h-1v-3h-1v1h-1v2h-1v22h-1v-25h-1v1h-1v-1h-1v1h-1v-2h-1v1h-1v1h-1v-2h-1v3h-1v-3h-1v2h-1v1h-1v-2h-2v1h-1v-1h-3v1h-1v-1h-1v1h-2v-1h-1v2h-1v-1h-4v-1h-4v1h-1v-1h-1v-1h-1v1h-1v-1h-1v1h-3v1h-4v22h-1v2h-1v-24h-1v-1h-1v1h-1v2h-1v-3h-3v1h-4v-1h-1v5h-1v-5h-5v2h-1v-1h-1v3h-1v-5h-1v3h-1v-1h-2v1h-1v-1h-1v-1h-2v1h-2v-1h-1v1h-2v-2h-1v4h-1v-4h-1v2h-1v1h-1v3h-2v16h-1v-22h-1v1h-1v1h-2v-1h-3v2h-1v-3h-1v-1h-1v2h-1v-1h-1v3h-1v-2h-1v1h-1v1h-1v-3h-1v3h-1v-2h-1v1h-1v-1h-1v4h-1v-2h-1v-2h-1v-2h-1v1h-1v3h-1v-2h-1v2h-1v-1h-1v1h-1v-3h-1v3h-1v-2h-1v-1h-1v1h-1v1h-3v4h-1v-6h-1v1h-1v1h-1v-1h-1v1h-2v-2h-2v2h-1v-1h-1v1h-1v-2h-1v1h-2v-1h-1v1h-4v-1h-1v1h-1v4h-2v-5h-2v2h-1v1h-1v-1h-1v1h-1v5h-1v16h-1v-24h-2v3h-1v-1h-1v1h-1v-1h-1v-3h-1v2h-1v1h-3v-2h-1v1h-1v-1h-1v3h-1v-3h-2v4h-2v-3h-1v-1h-2v1h-1v1h-1v-1h-2v2h-1v-1h-2v1h-2v-2h-1v-1h-1v7h-1v-3h-1v-2h-2v-1h-1v1h-1v4h-1v-4h-2v1h-2v-3h-1v2h-1v-1h-1v23h-1v-23h-2v-1h-2v2h-1v1h-1v-1h-1v2h-1v-4h-1v1h-1v5h-1v-5h-1v3h-1v-4h-1v2h-1v-1h-3v21h-1v-23h-1v2h-1v1h-1v2h-1v-4h-1v2h-1v-1h-1v2h-1v-3h-2v1h-1v11h-1v13h-1v-24h-4v-1h-2v1h-1v-1h-2v2h-1v-2h-1v2h-1v5h-1v-5h-1v-1h-1v-1h-1v2h-1v2h-1v-4h-1v3h-2v-2h-1v-1h-2v3h-1v-2h-2v-1h-1v2h-3v-1h-1v3h-1v-3h-2v5h-1v-4h-1v1h-1v-2h-1v1h-1v22h-1v-20h-1v-4h-1v2h-1v4h-1v-5h-1v1h-2v-1h-2v1h-1v-1h-1v2h-1v-2h-1v2h-1v-2h-1v1h-1v-1h-3v1h-1v-2h-1v3h-1v-3h-1v1h-1v2h-2v-2h-1v-1h-1v2h-2v-1h-1v-1h-1v4h-1v-3h-2v1h-1v-2h-1v2h-1v-1h-1v7h-1v16h-1v-22h-3v-1h-1v1h-1v2h-1v1h-1v-3h-1v-2h-1v3h-1v-2h-1v-1h-1v1h-1v2h-1v1h-1v-1h-1v1h-1v-1h-1v-2h-1v2h-2v-1h-2v-3h-1v8h-1v-3h-1v-3h-1v2h-1v-1h-2v-1h-3v2h-2v-1h-1v-1h-1v2h-1v-3h-1v2h-1v-1h-1v24h-1v-22h-1v-1h-1v1h-1v-3h-3v2h-1v-1h-1v1h-1v-1h-1v-1h-1v1h-1v4h-1v-5h-1v2h-1v-2h-1v1h-1v1h-2v-2h-1v2h-3v1h-2v-4h-1v3h-1v1h-1v-1h-1v-2h-1v3h-1v-3h-1v3h-1v-2h-1v1h-1v1h-1v-1h-1v-2h-1v1h-1v-1h-1v1h-1v2h-1v-1h-1v-2h-1v3h-1v-1h-1v1h-1v-3h-1v6h-1v-4h-1v1h-1v-1h-1v2h-1v-3h-1v1h-5v1h-1v-2h-1v2h-3v-2h-1v3h-1v-1h-1v1h-1v-2h-2v-1h-1v-1h-1v1h-1v1h-2v2h-1v-4h-1v2h-3v-1h-1v-1h-1v1h-3v2h-1v-3h-1v1h-1v-1h-1v2h-1v-2h-2v1h-1v1h-1v1h-1v4h-1v-7h-1v1h-2v1h-1v-1h-1v-1h-1v2h-1v-1h-1v1h-1v-1h-1v2h-1v-1h-2v-1h-1v2h-1v-2h-4v1h-1v-2h-1v3h-1v-3h-1v1h-1v2h-2v-1h-1v19h-1v2h-1v-21h-1v-2h-1v1h-1v1h-2v-2h-1v1h-1v2h-1v-2h-2v-1h-1v1h-3v2h-1v-3h-1v1h-1v1h-2v-2h-1v2h-1v-2h-2v2h-1v2h-1v-5h-1v4h-1v-3h-1v1h-1v3h-1v-1h-1v-2h-1v3h-1v-3h-1v-1h-1v1h-1v-1h-1v2h-1v1h-2v1h-1v-2h-1v-1h-3v3h-1v-2h-1v-1h-1v1h-1v-1h-2v1h-2v1h-1v-4h-1v5h-1v-2h-3v1h-1v5h-1v14h-1v-20h-1v-1h-2v2h-2v-1h-1v1h-1v-2h-1z"/>
<path d="M584 347h1v4h1v-2h1v1h1v-1h1v-1h1v2h1v-1h2v-1h1v1h1v-1h1v2h1v-2h2v2h1v-2h2v-2h1v3h2v-1h1v2h1v-1h1v-2h1v2h1v1h2v-2h2v2h2v-3h1v2h1v-1h1v2h1v-2h1v2h1v-1h1v-1h1v-1h1v3h1v-1h1v1h1v-2h1v4h1v-2h1v-2h2v1h2v-2h1v3h1v-1h3v2h1v-2h1v-1h1v2h3v1h1v-3h1v1h2v-2h1v1h2v1h2v1h1v-1h1v2h1v-5h2v5h1v-3h1v1h1v1h1v1h1v-2h1v1h2v-2h2v-1h1v3h1v-3h1v1h1v2h1v-2h1v-1h1v2h1v1h1v-2h3v2h1v-2h2v2h1v-1h1v2h1v-6h1v4h3v1h1v-1h1v1h1v-1h2v-1h1v1h2v1h1v-2h1v1h2v1h1v-2h1v1h1v1h1v-2h1v2h2v-1h2v-2h1v3h1v-1h1v1h1v-2h1v2h1v-3h1v1h1v1h1v-2h1v1h1v-1h1v2h1v-2h1v2h2v-1h1v3h1v-4h1v2h1v2h1v-5h1v4h1v-2h1v2h1v-1h1v3h1v-3h4v2h1v-2h1v1h2v-1h1v-1h1v1h1v-1h1v2h1v-5h1v5h1v-1h2v-1h2v2h2v-2h2v3h1v-4h1v3h1v-1h1v-1h1v1h1v-1h1v1h1v-2h1v1h1v1h1v-2h1v4h1v-1h1v-1h1v1h1v-2h1v1h1v2h1v-3h1v1h1v-2h1v2h1v1h1v-4h1v2h1v1h1v1h1v-2h1v-1h1v2h2v-1h1v1h1v-3h1v3h1v-1h1v1h1v-1h1v-1h2v4h1v-2h2v1h1v-1h1v-2h2v3h4v1h1v-2h5v1h2v-3h2v3h1v-2h1v1h2v1h1v1h1v-1h1v-1h2v-1h2v1h4v-2h1v-1h1v3h1v-1h1v1h2v1h1v-4h1v3h1v1h1v-4h1v1h1v2h2v-1h1v-3h1v4h2v1h1v-1h1v-4h1v2h2v2h1v1h1v-1h3v1h1v-1h2v-1h1v2h2v-3h3v2h1v-1h1v2h1v-2h2v2h1v-1h2v-1h1v-2h1v2h1v2h1v-1h3v-1h2v1h1v-1h3v1h1v1h1v-2h1v-2h1v3h3v-1h1v1h1v-1h2v1h1v-2h1v3h1v1h1v-2h2v-1h1v-1h1v2h1v2h1v-1h2v-1h1v-1h1v2h1v-2h1v2h1v1h1v-1h2v-3h1v2h2v-1h1v-2h1v3h1v1h1v-1h1v-3h1v1h1v2h3v-1h1v2h2v-1h1v-1h1v-2h1v3h1v1h1v-1h1v-2h1v2h1v1h2v-1h1v1h2v-4h1v4h1v-4h1v2h1v-1h1v1h1v2h1v-2h1v2h1v-1h1v-2h1v2h1v-2h1v1h1v-2h1v4h1v-4h1v3h2v1h1v-2h2v2h1v-1h2v-2h1v2h1v1h1v-2h1v1h1v1h2v-1h1v1h2v-3h1v1h1v1h1v-1h1v1h2v-1h1v1h1v-2h1v1h1v1h1v1h1v-1h1v-2h1v3h2v-4h1v2h1v2h2v-2h1v1h1v1h1v-3h1v1h2v2h1v-2h2v1h1v-1h1v1h1v-2h1v4h1v-2h2v-1h1v1h2v1h1v-1h3v1h1v-2h1v1h1v-1h1v1h1v-2h2v3h1v-3h1v3h1v-2h1v1h2v1h1v-1h1v1h2v-1h1v1h2v-1h1v2h2v-2h1v1h1v-4h1v3h2v-3h1v5h1v-2h2v-1h2v2h3v-1h1v-2h1v3h1v-2h2v1h3v2h1v-2h1v-1h1v2h1v-1h2v-2h1v1h2v-1h1v2h1v-1h2v2h1v-1h3v1h1v-2h1v-1h1v1h1v1h1v1h1v-1h1v-2h1v1h1v1h1v-3h1v4h1v-2h1v1h1v1h2v-2h2v1h1v-1h1v1h1v-1h1v-3h1v4h1v-2h1v3h2v-1h3v1h1v-2h1v1h1v-4h1v3h1v1h1v-1h1v1h2v1h2v-2h1v2h2v-3h2v3h1v-2h1v2h2v-3h1v3h2v-2h1v1h1v-2h1v2h1v-1h1v-5h1v5h1v2h1v-2h1v2h1v-2h1v1h1v-1h1v2h1v-2h2v2h1v-2h1v-2h1v3h2v1h1v-1h1v-1h1v1h1v1h1v-1h2v-5h1v6h1v-1h1v1h1v-1h1v-2h1v2h1v1h1v-2h2v1h2v1h1v-1h1v1h1v-3h1v2h1v-1h2v2h2v-3h2v2h2v1h2v-1h1v1h1v-1h1v1h1v-2h1v2h1v-3h1v3h1v-1h1v-1h1v2h2v-2h1v3h1v-1h1v-2h1v1h1v1h2v-2h2v1h1v1h1v-2h2v2h1v-2h2v1h1v-2h1v1h1v-1h1v1h1v2h1v-2h1v2h1v-1h2v-2h1v3h2v-1h3v1h1v-2h1v2h2v1h1v-3h2v1h1v2h1v-4h1v3h1v-2h1v2h2v-4h1v3h1v-1h1v1h1v-1h1v2h1v-2h1v-1h2v1h1v1h1v-2h1v3h2v-1h1v1h2v-3h1v3h1v-1h3v2h1v-4h1v1h1v2h3v-1h1v-2h2v2h1v2h1v-1h1v1h1v-3h1v2h2v1h1v-2h1v-1h1v2h1v-1h1v-1h1v2h2v-1h1v-1h3v3h1v-3h1v1h1v1h1v-1h1v-1h1v2h1v-3h1v2h1v1h1v-2h2v2h1v-1h2v1h1v-2h1v2h1v-3h1v2h3v-1h1v2h1v-2h1v2h1v-1h1v-1h1v1h1v1h1v1h1v-1h1v-3h1v3h1v-1h1v-3h1v1h1v2h4v-3h1v2h1v1h3v-1h1v-1h2v2h1v-2h3v2h3v1h1v-1h2v1h1v-2h3v2h1v-1h1v1h1v-1h1v-1h1v2h1v-2h1v2h3v-4h1v1h1v1h1v3h1v-3h1v2h1v-1h1v2h1v-2h1v-3h1v4h2v-3h1v3h1v-1h1v-2h1v3h1v-1h1v-1h1v1h1v-3h1v3h1v-2h1v1h3v2h4v-2h2v2h2v-2h1v1h3v-1h1v2h1v-1h2v-1h1v1h1v-2h1v4h1v-2h1v-1h1v3h1v-2h1v1h1v-1h1v-2h1v2h2v1h1v-1h1v-1h1v2h2v-1h1v-2h1v2h1v-2h1v2h3v2h1v-5h1v5h1v-1h2v-1h1v-1h1v2h1v-1h1v1h2v-2h1v2h1v-2h2v2h1v-4h1v4h1v-1h1v1h1v-2h1v2h1v-3h1v-1h1v3h1v1h1v-1h1v-1h1v1h1v1h1v-1h1v1h2v-1h5v-1h1v1h1v-1h1v2h1v-1h1v-2h1v1h2v1h2v-1h1v1h1v-3h1v4h2v-2h1v2h1v-1h2v-1h1v3h1v-3h1v1h1v-2h1v3h1v-4h1v1h2v2h1v-2h1v2h3v-3h1v3h2v1h3v-1h1v-1h2v1h1v-1h1v1h1v-1h1v1h1v-1h1v2h1v1h1v-4h1v-2h1v3h1v1h1v-1h1v1h1v1h1v1h1v-1h3v-3h2v-2h1v4h1v1h1v-1h2v1h1v-2h1v1h1v-1h1v2h1v-3h1v1h1v3h1v-2h3v-1h1v3h1v-3h1v1h1v-3h1v2h1v1h1v-1h1v1h1v-1h1v1h2v-1h2v1h2v-1h1v2h1v-1h1v-2h1v2h3v-1h1v-1h1v3h1v1h1v-1h1v-3h1v2h1v-1h1v1h1v-3h1v2h2v1h2v1h2v-4h1v4h1v-4h1v5h1v-3h1v2h1v-1h2v-1h1v2h1v-1h2v1h2v-2h3v1h1v-2h1v3h2v-2h1v2h2v-2h1v-1h1v1h2v-3h1v4h1v-2h1v1h2v2h1v-3h1v1h1v1h2v-1h1v-3h1v4h1v-1h1v1h1v-2h1v2h1v2h1v-3h2v1h1v1h1v-1h2v-1h1v1h1v1h1v-2h3v2h1v-2h2v2h1v-1h2v-1h1v1h1v-2h1v2h1v1h1v-2h2v1h1v-1h1v1h1v-2h2v2h1v1h2v-2h1v4h1v-2h1v-2h1v1h1v-2h1v4h1v-2h2v-2h1v4h1v-2h2v-2h1v3h1v-2h1v1h1v1h2v-3h1v2h1v-2h1v2h2v-1h1v-1h1v2h2v2h1v-2h1v-1h1v2h1v-1h3v-1h1v1h1v1h2v-1h2v-1h2v1h1v1h1v-1h1v1h1v-1h1v-1h2v-1h1v1h1v-1h1v2h1v-1h1v1h2v-4h1v6h1v-1h1v-1h2v-2h1v4h1v-4h1v3h1v-3h1v3h2v-2h1v-1h1v2h1v-1h1v2h1v-1h3v-1h1v2h1v-1h1v-1h1v2h2v-2h1v-2h1v4h1v-1h1v-3h1v-1h1v2h1v3h1v-1h1v-1h1v1h1v-2h1v2h1v1h1v-1h1v2h1v-2h1v-1h1v2h1v-2h1v2h1v-1h3v-1h2v1h1v-1h1v1h1v-2h1v2h1v-2h1v2h1v1h1v-3h1v-2h1v4h1v-2h1v2h1v-1h1v1h1v-2h1v3h1v-1h2v-1h2v2h1v-1h1v1h1v-2h1v-1h1v2h1v1h1v-1h1v-1h1v2h1v-6h1v6h1v-2h1v-1h1v2h1v1h2v-3h1v2h2v2h1v-2h1v-2h1v2h1v-1h1v2h1v-2h1v1h1v1h1v-1h2v-2h1v1h1v2h1v-1h1v-1h1v1h1v2h1v-1h1v-3h1v3h2v-1h2v-1h1v1h2v1h1v-1h1v3h1v-3h2v1h1v-1h1v1h1v-1h3v2h1v-2h1v1h1v-2h1v1h1v1h1v-2h2v1h1v-2h1v4h1v-2h3v1h2v-2h1v1h2v2h1v-3h1v2h1v-2h1v1h1V365h-1v-3h-1v1h-1v-3h-1v1h-2v-2h-1v1h-1v-1h-3v2h-1v-2h-1v3h-3v-2h-1v2h-1v-3h-1v1h-1v2h-1v-2h-1v-1h-1v-1h-1v3h-1v-2h-1v2h-1v-2h-1v1h-1v2h-1v-3h-2v1h-1v1h-1v-1h-2v2h-1v-3h-1v1h-2v-2h-1v2h-2v-1h-2v2h-1v-1h-1v-1h-4v1h-1v-1h-1v-1h-2v4h-1v-2h-2v1h-1v8h-1v-9h-1v-1h-2v-2h-1v3h-2v-2h-1v3h-1v-2h-1v-1h-1v2h-2v1h-1v-1h-2v-1h-1v1h-1v-2h-1v2h-1v1h-1v7h-1v1h-1v-10h-1v1h-1v-1h-3v2h-1v-2h-2v2h-1v-2h-1v3h-1v-2h-1v-1h-5v-1h-1v3h-1v-3h-1v2h-1v-1h-1v2h-1v-2h-1v1h-1v1h-1v-2h-3v1h-3v-1h-2v1h-1v-1h-1v2h-1v-2h-1v-1h-1v1h-1v1h-3v1h-1v1h-1v-4h-1v2h-2v-1h-1v2h-1v-1h-2v3h-1v-3h-2v1h-1v-2h-1v1h-3v2h-1v-2h-2v-1h-2v-1h-1v3h-1v-1h-1v1h-1v-2h-3v1h-3v8h-1v1h-1v-10h-1v2h-1v-1h-1v-1h-2v1h-3v1h-1v-2h-4v2h-1v1h-1v-3h-1v2h-2v-2h-1v1h-3v2h-1v-3h-2v2h-1v-1h-1v-1h-1v1h-1v1h-1v-2h-1v1h-1v3h-1v-1h-2v-3h-1v2h-1v-1h-1v4h-1v-4h-1v-1h-1v1h-1v2h-1v-1h-1v-1h-1v1h-1v-2h-1v3h-2v-4h-1v1h-2v1h-3v-1h-1v2h-1v-1h-1v-1h-1v2h-4v-1h-1v1h-1v-2h-2v1h-1v2h-2v-2h-1v-1h-1v2h-1v8h-1v-7h-1v-2h-1v1h-1v1h-1v-3h-1v1h-3v1h-1v-2h-2v2h-1v-1h-2v-1h-2v2h-1v1h-1v-2h-2v1h-1v-3h-1v1h-2v2h-1v-1h-1v2h-1v-2h-2v2h-1v-5h-1v3h-1v-1h-1v1h-1v2h-1v-4h-1v3h-1v-2h-1v9h-1v1h-1v-9h-1v2h-1v-3h-2v2h-1v1h-1v-2h-1v2h-1v-1h-3v-1h-1v1h-1v2h-1v-3h-3v2h-1v-2h-1v-1h-1v3h-1v6h-1v-7h-3v-1h-1v-1h-2v3h-1v-3h-1v2h-2v-1h-1v-1h-1v-1h-1v3h-1v-1h-1v9h-1v-10h-1v1h-1v1h-1v-2h-1v4h-1v-3h-1v-1h-2v1h-2v1h-1v-2h-1v1h-1v1h-1v-3h-1v1h-2v-1h-1v3h-1v2h-1v1h-1v-6h-1v2h-1v1h-1v-1h-2v-1h-2v1h-3v-1h-1v4h-1v-3h-1v1h-1v-1h-1v-1h-1v1h-3v1h-1v-2h-3v1h-1v-1h-1v3h-1v-2h-1v2h-1v-1h-1v1h-1v-4h-1v3h-1v-1h-1v-1h-1v5h-1v-4h-1v-1h-1v2h-1v-3h-1v3h-1v3h-1v-4h-1v-1h-1v-1h-1v2h-1v-1h-1v1h-1v1h-1v6h-1v-6h-1v-2h-2v5h-1v-2h-1v-1h-3v-1h-1v2h-1v-2h-6v1h-1v-1h-6v-1h-4v1h-1v3h-1v-2h-1v1h-2v-1h-1v-2h-1v3h-1v-2h-1v-1h-1v2h-1v-2h-1v1h-1v-1h-1v1h-1v-2h-1v2h-1v1h-1v-2h-1v2h-1v-1h-1v-1h-1v1h-1v-1h-2v2h-1v-3h-1v2h-1v1h-1v-3h-1v5h-2v-2h-1v-1h-2v-1h-2v4h-1v-2h-1v4h-1v-6h-1v1h-3v-1h-2v2h-1v-1h-1v3h-1v-2h-1v-1h-1v-1h-1v-1h-1v3h-1v1h-1v-2h-1v3h-1v-3h-1v3h-1v-4h-2v3h-1v1h-1v4h-1v-5h-1v-2h-1v-1h-1v2h-1v-1h-2v1h-1v-1h-2v1h-1v-2h-3v1h-1v1h-2v-1h-1v-1h-1v1h-2v1h-1v-2h-1v2h-1v-2h-1v3h-1v-1h-1v2h-1v-4h-2v2h-1v1h-1v-2h-2v-1h-2v-1h-1v1h-1v1h-2v-1h-1v2h-1v-1h-1v2h-1v-3h-1v3h-1v-1h-1v3h-1v-4h-1v9h-1v-10h-1v3h-1v-1h-1v-1h-2v-1h-2v1h-1v2h-1v-1h-1v-1h-1v2h-1v-2h-1v1h-1v-1h-2v-2h-1v3h-2v-1h-1v-2h-1v1h-1v3h-1v-2h-1v1h-1v-1h-1v-1h-1v1h-1v1h-1v1h-1v-3h-1v1h-1v4h-1v-2h-2v-2h-2v1h-1v-1h-1v1h-1v-1h-2v-2h-1v3h-1v-2h-2v1h-2v-1h-1v-1h-1v2h-1v1h-1v1h-1v-2h-3v2h-1v-3h-2v-1h-1v3h-1v-2h-1v1h-1v-2h-1v3h-1v-1h-1v2h-1v-2h-1v-2h-1v3h-2v-3h-1v2h-1v-1h-1v1h-2v-1h-2v2h-1v-1h-1v-2h-1v2h-1v1h-1v-2h-1v3h-1v-3h-1v1h-3v8h-1v1h-1v-7h-1v-2h-1v1h-1v-1h-2v-1h-1v1h-1v1h-2v-1h-1v1h-1v1h-1v1h-1v-3h-1v-1h-2v-1h-1v2h-1v1h-1v1h-1v-3h-1v-1h-1v1h-2v3h-1v-2h-1v2h-1v-2h-1v1h-1v-3h-1v2h-2v-1h-1v5h-1v-3h-1v-1h-1v1h-2v-2h-2v9h-1v-9h-1v2h-1v-1h-2v2h-1v-1h-1v-2h-1v2h-1v-1h-1v-2h-2v2h-1v2h-1v-3h-1v1h-1v-1h-1v1h-1v-1h-1v1h-1v-1h-2v2h-1v-1h-1v-1h-1v2h-1v-2h-2v1h-1v1h-1v-1h-1v-1h-1v2h-1v1h-1v-3h-1v10h-1v-10h-1v3h-2v-3h-1v2h-1v-2h-1v2h-1v-1h-2v1h-1v-1h-1v-1h-1v3h-1v-2h-4v2h-1v-2h-1v2h-1v-3h-2v3h-1v-2h-1v-1h-1v1h-1v-1h-1v1h-1v2h-1v-2h-1v-2h-1v3h-1v1h-1v1h-1v-4h-1v2h-1v1h-1v-2h-1v-2h-2v1h-1v1h-1v3h-1v-4h-1v1h-2v1h-1v-2h-1v1h-1v-1h-1v1h-2v-2h-1v4h-1v-2h-1v1h-1v-2h-1v2h-1v-2h-4v4h-1v-2h-1v-1h-1v-1h-2v1h-1v-2h-1v4h-1v5h-1v-7h-3v2h-2v-1h-1v-1h-1v-1h-1v4h-1v-4h-1v2h-2v-1h-1v4h-1v-3h-1v-1h-1v1h-2v-2h-2v3h-1v-4h-1v2h-2v-1h-1v2h-1v-2h-1v1h-1v1h-2v-1h-1v1h-2v-1h-2v2h-1v-1h-1v-1h-1v1h-1v1h-1v-2h-1v1h-1v-1h-2v7h-2v-6h-1v1h-2v-3h-1v6h-1v-7h-1v1h-1v1h-1v-1h-1v2h-1v-2h-1v-1h-1v4h-1v-1h-2v-3h-1v1h-1v1h-1v-1h-1v1h-1v-1h-2v3h-1v-3h-1v2h-1v-1h-1v-1h-1v1h-1v1h-4v-1h-1v-1h-1v2h-1v-2h-1v1h-1v1h-1v-2h-1v2h-2v6h-1v-7h-1v2h-1v-2h-1v1h-1v-2h-1v2h-1v-1h-1v3h-1v-4h-1v2h-2v-1h-1v-1h-2v2h-1v-2h-2v4h-1v-3h-1v1h-3v-1h-2v2h-1v-2h-5v-1h-2v-1h-1v3h-1v-1h-1v1h-1v-1h-1v1h-2v-1h-1v-1h-4v2h-2v1h-1v-1h-1v-1h-2v3h-1v-4h-2v1h-2v-1h-1v1h-1v-1h-1v2h-1v-2h-1v2h-1v-2h-1v3h-1v-1h-1v-1h-1v-2h-1v2h-1v2h-1v-1h-1v-1h-1v9h-1v-9h-2v-1h-1v3h-1v-3h-1v2h-2v-2h-3v1h-1v-1h-2v-1h-2v1h-1v1h-2v1h-1v-3h-1v2h-1v-1h-1v-1h-2v2h-2v1h-1v-1h-2v1h-1v-1h-1v-1h-1v1h-1v3h-1v-3h-1v2h-1v-1h-1v-1h-1v2h-2v-4h-1v2h-1v-1h-1v3h-1v-2h-1v2h-1v-2h-1v9h-1v-7h-1v-2h-1v1h-1v-1h-1v-2h-1v4h-1v-2h-3v1h-3v-1h-2v2h-1v-1h-1v-2h-1v-1h-1v10h-1v-9h-2v1h-1v2h-1v-3h-1v2h-3v1h-1v-3h-1v1h-1v3h-1v5h-1v-8h-3v2h-1v-2h-2v-1h-1v2h-1v-1h-1v-1h-1v1h-1v2h-2v-1h-1v-2h-2v2h-1v-2h-1v1h-2v-1h-2v2h-1v1h-1v-2h-4v1h-1v-1h-1v-1h-1v-2h-1v3h-2v1h-1v1h-1v-1h-1v-3h-1v3h-1v-2h-1v10h-1v-6h-1v-3h-1v-2h-1v5h-1v-4h-1v2h-1v-1h-1v-1h-1v-1h-1v2h-1v1h-1v-1h-1v1h-1v-3h-1v1h-1v1h-1v1h-1v-1h-1v2h-1v-2h-1v-1h-1v-1h-1v2h-1v-1h-2v4h-1v-3h-1v2h-1v1h-1v-4h-1v2h-1v1h-1v-2h-1v-1h-1v1h-1v1h-1v-2h-1v1h-2v4h-1v4h-1v-7h-1v-2h-1v5h-1v-4h-2v-1h-1v2h-2v-2h-1v5h-1v-5h-1v1h-3v-1h-1v2h-1v-1h-2v1h-1v-1h-1v1h-3v-2h-1v4h-1v-3h-1v2h-1v-2h-1v-1h-1v3h-1v-2h-1v-1h-1v1h-2v2h-1v-3h-1v2h-1v-2h-1v-1h-1v2h-1v-1h-1v10h-1v-8h-1v-2h-1v-1h-1v3h-2v3h-1v-1h-1v-1h-1v-1h-1v2h-1v-4h-1v1h-2v-1h-1v1h-1v1h-1v-1h-2v-1h-3v1h-1v-1h-1v1h-1v2h-1v1h-1v-3h-2v-1h-1v4h-1v-3h-2v-1h-1v1h-1v-2h-1v3h-1v-3h-1v3h-1v-3h-1v2h-1v2h-1v-1h-2v-1h-1v1h-1v-2h-3v3h-2v1h-1v-4h-1v1h-1v-1h-1v1h-1v1h-1v-2h-1v2h-2v-1h-2v-1h-2v1h-1v-1h-1v2h-1v-3h-1v4h-1v1h-1v-1h-1v-2h-2v1h-1v-1h-1v1h-1v-2h-1v2h-1v1h-1v-2h-2v1h-1v-2h-2v2h-1v-2h-1v2h-1v-3h-1v2h-1v2h-1v-2h-1v1h-1v-1h-2v-1h-1v1h-1v3h-1v-5h-1v3h-1v-2h-1v1h-1v2h-1v-1h-2v-4h-1v4h-1v2h-1v-1h-1v-3h-1v2h-1v1h-1v-3h-1v3h-1v-3h-1v1h-1v2h-1v1h-1v-1h-2v-2h-1v3h-1v-2h-1v-2h-1v2h-1v7h-1v1h-1v-10h-2v4h-1v-1h-2v-2h-1v-1h-1v1h-1v-1h-1v4h-1v-3h-1v1h-1v-1h-1v2h-1v-2h-3v2h-1v-1h-1v-2h-1v1h-1v-1h-2v1h-1v1h-2v-2h-2v2h-2v-2h-1v1h-3v4h-1v-5h-2v1h-1v-1h-1v2h-1v4h-1v-4h-1v-1h-1v-1h-2v1h-2v3h-2v-3h-1v1h-1v-1h-1v-1h-1v1h-2v-1h-1v2h-1v-1h-1v2h-1v-3h-2v10h-1v-7h-1v-2h-1v-1h-2v2h-1v-1h-2v-1h-1z"/>
<path d="M584 403h1v1h1v-2h1v1h1v-2h2v2h2v1h1v-1h3v-1h1v1h1v-1h1v2h2v-4h1v4h1v1h1v-6h1v6h1v-4h1v3h1v-2h1v1h2v-1h1v2h1v-1h1v-2h1v4h1v-2h1v1h1v-1h1v1h1v-1h2v-4h1v3h1v2h2v-1h1v-1h1v2h1v-1h1v-1h2v1h4v-2h1v2h1v-1h1v2h1v-1h2v2h1v-4h1v2h2v-1h1v1h4v2h1v-2h2v-3h1v3h1v-3h1v4h2v-2h1v2h1v-1h1v-1h1v2h1v1h1v-2h1v1h1v-4h1v4h2v-1h4v-1h1v-2h1v5h1v-3h1v-1h1v1h2v3h1v-3h1v2h1v-2h1v1h1v-1h1v2h1v-2h1v1h2v-2h1v3h1v-1h1v-2h2v3h1v-2h1v1h1v-1h1v1h1v-2h1v-1h1v2h1v1h1v1h1v-1h1v1h1v-1h2v-1h1v1h1v1h1v-2h1v3h1v-2h1v1h1v1h1v-3h1v1h3v-3h1v5h1v-2h1v-1h1v1h1v-1h1v1h1v-1h1v1h1v1h1v-2h1v3h1v-1h1v-1h1v-1h1v2h1v-2h1v1h3v-1h1v1h2v2h1v-2h3v-3h1v3h1v1h1v2h1v-2h1v-1h2v1h1v-2h1v2h1v1h1v-6h1v2h1v2h1v-3h1v3h2v-1h3v2h2v1h1v-1h1v-2h1v1h1v-5h1v3h1v3h3v1h1v-4h1v3h1v-3h1v3h1v-1h3v-3h1v3h1v-1h3v3h1v-3h2v1h2v1h1v-1h1v1h1v-2h1v1h1v-1h1v-1h1v2h3v2h1v-2h1v-1h1v-2h1v3h1v-1h1v2h1v-1h1v-1h1v2h1v-1h1v-1h1v2h1v-2h1v1h1v1h1v1h1v-2h1v-1h1v1h1v1h1v-3h1v1h1v1h1v1h1v-1h2v1h1v-1h1v-2h1v2h3v1h1v-1h1v-1h2v-1h1v2h1v-2h1v-1h1v2h1v2h1v-2h2v1h2v-1h1v2h1v-3h3v-3h1v3h1v3h1v-1h1v-1h1v2h1v-2h1v1h1v-1h1v1h2v1h4v1h1v-3h1v1h2v1h1v-2h1v2h1v-1h1v1h2v-4h1v2h1v-1h1v1h1v2h1v-1h1v-1h1v1h1v1h1v-1h1v-1h1v-2h1v3h1v2h2v-1h1v-1h1v-1h1v1h3v-6h1v7h3v-3h2v3h1v-3h1v1h1v2h1v-2h1v-2h1v6h1v-3h3v-1h1v1h2v-1h1v1h1v2h1v-5h1v5h1v-3h1v1h1v-1h2v2h1v-3h2v1h1v1h2v1h2v-1h1v-3h1v4h1v-2h3v3h1v-2h1v-2h1v4h3v-4h1v1h1v2h1v-1h2v2h1v-2h2v-1h1v3h1v-2h2v1h1v1h1v-2h1v1h1v-1h1v-1h1v1h1v-1h1v1h2v1h1v-2h2v1h1v3h1v-3h2v2h1v-2h1v-2h1v-1h1v3h1v1h1v-1h1v-2h2v1h1v3h1v-3h1v-1h1v3h1v-2h1v2h1v2h1v-2h1v-1h1v-1h2v2h1v1h1v-4h1v2h1v1h1v-3h1v-1h1v4h3v-2h2v1h1v1h1v-1h1v1h1v-2h1v2h2v-5h1v3h1v-1h1v1h1v1h4v2h1v-1h1v-1h1v-1h1v1h1v-1h1v2h2v-4h1v4h1v-1h1v-1h2v4h1v-7h1v4h1v-1h1v2h1v-1h1v-1h1v1h1v1h2v-3h1v4h1v-1h2v-1h1v1h1v-1h1v-1h1v-1h1v1h2v-2h1v2h1v1h1v-1h1v-3h1v4h2v-1h1v2h1v-2h1v1h1v1h1v-1h1v-3h1v1h1v2h1v-3h1v5h1v-1h1v-1h1v-1h1v3h1v-1h1v-1h1v2h3v-3h1v2h1v-2h1v1h1v-1h1v-4h1v3h1v2h1v2h1v-4h1v3h3v-1h1v2h1v-4h1v1h1v-1h1v1h1v2h1v-3h1v2h1v-1h1v1h2v-1h1v2h2v-2h1v1h1v1h1v-2h2v2h3v1h1v-1h1v1h1v-2h1v-2h1v2h2v2h1v-2h4v-1h1v2h2v-1h1v-2h1v1h1v2h1v-2h1v1h1v-1h1v2h1v-4h1v1h1v3h2v-3h1v3h1v-3h1v4h1v-1h1v-1h1v1h2v1h1v-3h1v2h2v-2h2v-1h1v3h1v-1h1v1h1v-1h2v-1h1v1h1v-3h1v4h2v1h1v-2h2v1h1v1h1v-4h1v2h1v1h1v1h1v-1h1v-1h1v-1h1v1h1v-1h1v1h1v-1h1v1h1v1h1v-1h1v2h1v-3h1v1h1v-4h1v5h2v-1h1v1h2v-1h2v-1h1v2h1v-1h3v1h1v-1h1v-1h1v-3h1v4h2v-3h1v3h1v-2h1v4h1v-3h1v2h2v-1h1v2h1v-4h1v1h1v1h3v-1h3v-1h2v3h1v-4h1v3h1v-1h1v1h1v-1h1v-1h1v3h1v-1h2v-1h1v1h1v-1h3v1h1v-2h1v2h2v-1h1v3h1v-2h3v2h1v-3h1v1h1v-2h2v1h1v1h1v1h1v-2h2v2h1v-1h1v-1h1v2h2v-1h2v2h1v-4h1v1h2v-1h1v3h1v1h1v-2h9v-1h2v2h1v-1h1v2h1v-5h1v4h1v-2h1v2h1v1h1v-5h1v5h1v-1h1v-1h1v-2h1v2h2v-3h1v3h1v2h1v-2h2v1h1v-1h1v-1h1v2h1v-1h1v1h1v-1h1v1h1v-2h1v1h2v-1h1v3h1v-3h1v1h1v-3h1v3h1v2h1v-2h1v1h2v-1h2v1h1v1h1v-1h3v1h1v-2h1v1h1v-1h1v-1h1v1h1v-2h1v1h1v2h1v-2h2v-1h2v3h4v-1h4v1h2v-1h1v-1h2v2h1v-1h1v1h1v-1h1v-1h1v1h1v-1h1v1h3v-1h1v1h1v1h2v-2h2v1h1v-2h1v3h1v-1h1v-2h1v2h4v-1h1v2h2v-1h1v1h1v-1h2v-3h1v2h1v2h1v-2h2v1h1v1h1v-1h2v-1h2v2h2v-1h1v-3h1v5h1v-1h1v-2h1v1h1v1h1v-1h1v1h2v-2h1v1h1v-2h1v3h1v-1h2v-3h1v3h5v-1h1v3h1v-1h1v-3h2v3h1v-4h1v4h1v-1h1v2h2v-2h3v-3h1v2h1v2h1v-2h1v2h1v-1h1v1h2v-1h2v2h1v-3h1v1h2v-1h1v1h2v1h2v-2h1v1h3v-2h1v3h1v-1h1v-1h1v2h1v-1h2v-2h1v2h1v1h2v-2h2v2h2v-2h1v2h1v-1h1v2h1v-3h2v-1h1v2h3v-1h2v-1h1v2h1v-1h1v1h2v1h3v-1h1v2h1v-3h1v1h1v-1h1v2h1v-3h1v3h1v-2h1v3h1v-2h1v-2h1v1h1v2h1v-1h1v1h1v-2h1v-1h1v2h2v1h1v-3h2v4h1v-2h1v1h1v-2h1v1h2v2h1v-2h1v-3h1v2h1v-1h1v1h1v1h1v-1h1v2h1v-2h2v1h1v-2h1v-1h1v1h2v1h1v2h1v-1h1v2h1v-2h1v-1h2v2h2v-1h1v-2h1v2h1v-1h1v3h1v-4h1v2h2v1h1v1h1v-2h1v1h1v-2h1v1h3v-2h3v3h1v-5h1v5h3v-2h2v-1h1v2h2v-3h1v4h1v-2h1v2h1v-3h2v2h1v-3h1v2h1v2h2v-1h1v1h1v-1h1v-4h1v3h1v-2h1v5h1v-2h1v1h1v-2h1v-1h1v2h1v1h1v1h1v-2h1v1h1v-2h1v2h1v-1h3v-3h1v2h3v2h2v-1h1v1h1v1h1v-3h1v-1h1v3h2v-1h2v-1h1v-2h1v2h1v1h1v1h1v-1h2v1h1v-1h1v-1h2v3h1v-3h1v2h2v1h1v-2h3v3h1v-5h1v3h2v-1h1v-1h1v1h1v-1h1v1h1v1h1v-1h5v1h2v-1h1v-3h2v2h1v-1h1v4h1v-2h2v-1h3v-1h2v4h1v-2h1v-1h1v3h1v-4h1v2h2v-1h1v3h1v-1h1v-1h2v1h1v1h1v-2h1v1h3v-3h1v3h1v-4h1v2h1v2h1v1h2v-2h1v-2h1v3h1v-1h1v-3h1v3h1v-1h2v1h1v-3h1v3h1v2h1v-1h2v-1h1v1h2v-1h1v1h1v-1h2v-1h1v1h2v-1h1v1h1v1h1v-3h1v2h1v1h1v-1h2v-1h1v2h1v-1h1v-1h1v3h1v-1h1v-1h2v-1h2v2h1v-1h1v1h1v-3h1v3h1v-2h1v1h1v1h1v1h1v-2h1v1h2v-4h1v-2h1v2h1v2h1v2h1v-1h1v-1h1v2h1v-2h1v-1h1v1h1v-1h2v2h1v1h2v-1h1v-1h1v2h2v-2h1v1h1v3h1v-6h1v3h1v-2h1v2h1v-2h1v3h1v1h1v-2h1v-1h1v-3h1v2h2v2h1v-1h1v-1h1v2h1v1h1v-2h1v2h1v-1h1v1h1v-1h1v-2h1v3h3v-1h1v-2h1v3h1v-1h1v-3h1v4h1v-2h1v1h3v1h1v-1h2v2h1v-3h4v2h1v2h1v-3h1v1h2v-2h1v2h1v-3h2v2h1v-2h1v3h1v-3h1v2h2v-1h1v1h7v-2h1v1h1v2h2v-2h2v1h1v-1h2v2h1v-1h2v1h1v-1h2v-2h1v2h1v-2h1v2h2v-3h1v2h2v2h2v-4h1v4h2v-1h1v1h1v-1h1v1h4v-2h1v2h1v-1h1v1h1v-3h1v2h1V416h-1v-3h-1v3h-1v-2h-1v1h-2v-2h-2v1h-1v2h-1v-2h-1v2h-1v-2h-3v1h-2v1h-2v-2h-2v1h-1v2h-1v-2h-1v-1h-1v-1h-3v2h-2v-2h-1v1h-1v1h-3v-1h-2v1h-1v-3h-1v2h-3v-1h-1v1h-3v1h-1v-2h-1v2h-1v-1h-1v1h-1v1h-1v-1h-3v-1h-4v4h-1v-5h-1v3h-1v-3h-1v4h-1v-1h-1v1h-1v-1h-1v-3h-2v2h-1v2h-1v-2h-2v-1h-1v-1h-2v1h-2v1h-1v-2h-1v4h-1v1h-1v-5h-1v2h-5v3h-2v-3h-1v-1h-1v1h-2v-1h-1v-1h-2v4h-1v-2h-1v-1h-1v1h-1v-3h-1v5h-1v-3h-1v3h-1v-3h-3v1h-1v-1h-1v-1h-1v3h-1v-3h-1v4h-1v-4h-1v1h-2v-1h-2v4h-1v-3h-1v2h-1v-2h-2v1h-1v1h-1v-3h-2v2h-1v-1h-1v1h-1v2h-1v-1h-2v1h-1v-2h-1v-1h-1v-1h-1v2h-2v1h-1v-3h-1v4h-1v-4h-2v3h-1v-2h-1v1h-1v-1h-1v1h-1v-2h-1v3h-1v-2h-1v3h-1v-2h-3v2h-1v1h-1v-6h-1v1h-1v3h-1v1h-1v-3h-3v1h-2v2h-1v-2h-1v-1h-1v2h-1v1h-1v-2h-1v-1h-3v2h-1v-1h-1v1h-2v-1h-1v-1h-1v1h-1v1h-1v-2h-2v2h-1v-1h-1v1h-1v-3h-1v3h-1v-3h-1v1h-1v1h-3v-2h-1v3h-1v-3h-1v-1h-1v2h-1v1h-1v2h-1v-2h-1v2h-1v-3h-1v2h-1v-1h-1v-1h-1v1h-1v-1h-3v-1h-1v2h-1v-1h-2v2h-1v-2h-2v1h-1v-1h-3v1h-1v1h-1v-2h-2v2h-1v1h-2v1h-1v-4h-1v1h-1v-1h-1v2h-2v-3h-1v1h-2v-1h-1v3h-1v-1h-1v-2h-1v3h-2v-1h-1v-1h-1v4h-1v-5h-1v1h-2v2h-1v1h-1v-1h-1v-1h-2v-1h-1v-1h-1v2h-2v-1h-1v1h-1v-1h-1v2h-1v1h-1v-4h-1v1h-1v3h-1v-3h-1v3h-1v1h-1v-3h-1v-2h-2v1h-1v1h-1v1h-1v2h-1v-4h-1v1h-1v-1h-1v1h-1v-2h-1v2h-1v-2h-1v3h-1v-3h-1v1h-2v-1h-1v5h-1v-3h-1v3h-1v-5h-1v2h-1v1h-1v-3h-1v3h-1v1h-1v-3h-1v1h-2v2h-1v1h-1v-2h-1v-3h-1v3h-1v-1h-1v3h-1v-3h-1v1h-1v-2h-1v3h-1v-1h-1v1h-1v-2h-1v1h-1v-1h-1v2h-1v-3h-1v-1h-2v1h-2v1h-1v-1h-1v-2h-1v3h-2v-1h-1v1h-1v1h-1v-1h-1v3h-1v-5h-1v2h-1v1h-1v-2h-1v-1h-1v3h-1v-2h-2v-1h-1v1h-1v-1h-1v3h-1v-1h-1v-2h-1v3h-1v-3h-1v3h-1v-1h-2v3h-1v-2h-1v-2h-2v3h-1v-2h-1v-2h-1v3h-1v-1h-2v-1h-1v2h-1v-2h-1v1h-1v3h-1v-4h-1v-1h-1v1h-1v-1h-1v2h-1v-1h-1v-1h-1v3h-3v2h-1v-4h-3v1h-1v-1h-1v3h-1v-2h-1v-2h-2v2h-1v-2h-1v1h-1v-1h-1v1h-1v2h-1v-2h-1v2h-1v-3h-1v3h-1v1h-1v-2h-4v1h-1v-2h-2v2h-1v-1h-1v3h-1v-3h-1v1h-1v-1h-1v1h-1v-2h-2v-1h-1v3h-1v-4h-1v4h-1v-1h-1v1h-1v1h-1v-3h-1v2h-1v-1h-1v-2h-2v1h-1v1h-1v1h-1v-2h-5v2h-1v-2h-1v2h-1v-1h-2v2h-1v-2h-1v-1h-1v-1h-1v1h-3v1h-1v-1h-1v4h-1v-3h-2v-2h-1v1h-1v-1h-1v2h-1v-1h-1v2h-1v-3h-1v2h-1v1h-1v-2h-1v-1h-1v1h-1v1h-1v1h-1v2h-1v-5h-1v1h-1v4h-1v-5h-2v4h-1v-3h-1v1h-1v-1h-2v-1h-1v1h-1v1h-2v-1h-1v5h-1v-5h-2v2h-1v-1h-1v-1h-1v-1h-1v2h-1v2h-1v-2h-1v-1h-2v-2h-1v3h-1v-2h-1v2h-1v1h-2v-1h-1v-1h-1v2h-1v-1h-2v2h-1v-3h-1v3h-1v-4h-3v3h-1v-1h-1v2h-1v-2h-2v-1h-1v1h-1v3h-1v-1h-1v-3h-2v1h-1v1h-1v-3h-1v1h-1v2h-1v-3h-1v3h-1v-2h-1v2h-1v-1h-1v-2h-1v1h-1v1h-2v-1h-2v-1h-1v3h-1v-3h-2v1h-1v1h-1v-1h-1v2h-2v-2h-1v-1h-2v2h-1v1h-1v-1h-1v-1h-2v2h-1v-3h-2v2h-4v2h-1v-3h-1v3h-1v-3h-2v-1h-1v1h-1v-1h-1v1h-1v1h-1v-2h-1v4h-1v-2h-1v1h-1v2h-1v-3h-1v-2h-1v3h-1v-1h-2v2h-2v-2h-2v-2h-1v5h-1v-4h-1v-1h-1v3h-1v-1h-1v-1h-1v1h-1v-1h-2v4h-1v-2h-1v-2h-1v2h-1v-1h-1v-2h-1v1h-1v2h-1v-2h-2v2h-2v2h-2v-6h-1v2h-1v1h-1v-3h-1v4h-1v-2h-1v1h-1v1h-1v-2h-1v-2h-1v2h-1v-1h-1v2h-1v-2h-1v2h-1v-1h-2v-1h-1v1h-1v4h-1v-6h-1v5h-1v-2h-3v-1h-1v-1h-2v4h-1v-3h-1v1h-1v1h-1v-3h-1v2h-1v-1h-3v1h-1v-1h-1v1h-1v2h-1v-4h-1v2h-1v1h-1v-1h-1v3h-1v-2h-1v-2h-1v1h-1v-2h-1v2h-1v2h-1v-1h-1v-3h-1v5h-1v-3h-1v-2h-1v2h-2v3h-1v-4h-2v2h-1v-2h-2v1h-1v-2h-1v2h-1v1h-2v-1h-2v-1h-1v1h-2v2h-1v-2h-1v-1h-1v1h-1v-2h-1v-1h-1v2h-6v2h-2v-1h-1v4h-1v-2h-1v-3h-1v-1h-1v3h-1v-2h-2v1h-1v-1h-1v2h-1v-1h-3v2h-1v-2h-1v1h-2v-1h-2v-2h-1v1h-3v-2h-1v3h-3v-1h-1v3h-1v-4h-1v2h-2v-1h-2v1h-1v-2h-3v1h-1v1h-1v-2h-1v-1h-1v6h-1v-4h-1v-1h-1v2h-1v-1h-2v2h-1v-1h-1v-2h-1v1h-1v-1h-1v2h-1v-1h-2v4h-1v-3h-1v-1h-1v2h-1v-1h-1v-1h-3v2h-1v-3h-2v2h-1v-1h-2v2h-2v-2h-1v1h-1v1h-2v-3h-1v2h-1v-1h-1v1h-1v-1h-2v2h-2v-2h-1v3h-2v-3h-2v1h-1v2h-1v-2h-1v-1h-1v3h-1v-2h-2v-2h-1v3h-1v-4h-1v3h-1v-1h-1v3h-1v1h-1v-4h-1v1h-1v2h-1v-2h-1v-1h-1v1h-1v-1h-1v-2h-1v2h-1v-1h-1v3h-1v-1h-2v-1h-1v1h-2v-2h-1v2h-1v-3h-1v2h-2v1h-1v-1h-1v1h-2v-1h-1v-1h-1v2h-1v2h-1v-2h-1v-2h-1v3h-1v-3h-1v2h-1v-2h-1v2h-1v-1h-1v2h-1v-2h-2v2h-1v1h-1v-3h-2v1h-2v-1h-3v1h-1v-2h-1v4h-1v-3h-2v3h-1v-4h-2v3h-1v-1h-1v-2h-2v3h-1v-1h-1v-2h-1v2h-1v-1h-1v-1h-2v2h-2v3h-1v-1h-1v-4h-1v1h-3v1h-1v-3h-1v5h-1v-1h-1v-1h-1v1h-1v-1h-1v-1h-2v3h-1v1h-1v-3h-1v-1h-1v-1h-1v4h-1v-2h-2v-1h-1v1h-2v1h-1v-3h-1v1h-1v6h-1v-6h-1v1h-1v1h-2v-3h-2v2h-1v-1h-2v-1h-1v2h-2v3h-1v-3h-1v-2h-1v2h-1v-1h-1v-1h-1v1h-1v1h-4v1h-1v-1h-1v-2h-1v3h-1v-2h-1v1h-1v1h-1v-2h-1v2h-1v-2h-2v1h-1v-1h-1v1h-1v1h-1v-2h-1v3h-1v-2h-1v-2h-2v1h-1v3h-2v-1h-2v-1h-1v-2h-2v3h-1v1h-1v-3h-2v3h-1v-4h-1v3h-1v1h-3v-4h-1v2h-1v-1h-1v-1h-2v2h-1v-1h-1v2h-1v-3h-1v1h-2v-1h-2v1h-1v1h-4v2h-1v-2h-1v-2h-1v3h-2v-1h-1v-1h-1v1h-1v1h-1v-1h-1v1h-1v-1h-1v1h-1v1h-2v-2h-2v2h-1v-2h-1v2h-1v-2h-1v1h-1v-4h-1v1h-1v1h-1v1h-1v3h-1v-3h-1v1h-1v-1h-1v-2h-1v2h-3v-2h-1v-1h-1v2h-1v1h-1v-2h-1v2h-4v2h-1v-2h-1v-1h-1v4h-1v-4h-1v2h-1v-3h-1v1h-4v3h-1v-1h-2v-2h-1v2h-1v-1h-3v-1h-1v-1h-2v1h-2v1h-1v1h-1v-3h-1v3h-2v-1h-1v4h-1v-2h-1v-1h-2v-1h-2v-1h-1v2h-1v-3h-1v2h-1v2h-1v-3h-1v1h-1v-2h-1v3h-1v-1h-1v1h-1v-3h-1v1h-3v1h-1v2h-1v-3h-1v-1h-2v3h-3v-1h-1v-1h-5v-1h-1v1h-1v3h-1v-4h-2v1h-2v2h-1v-3h-1v3h-1v-1h-2v-1h-1v-1h-1v1h-2v-1h-1v2h-3v2h-1v-2h-1v2h-1v-3h-3v1h-2v-1h-1v4h-1v-5h-1v2h-1v1h-1v-1h-1v-1h-2v2h-1v-2h-1v2h-1v-2h-2v-1h-1v1h-1v1h-1v1h-1v-3h-1v1h-1v-2h-1v2h-1v2h-1v-3h-1v1h-3v3h-1v-3h-1v1h-1v-1h-3v1h-2v-1h-2v1h-1v-1h-2v2h-1v-2h-1v3h-1v-2h-1v-2h-1v2h-1v1h-1v-4h-1v2h-1v3h-2v-2h-1v-3h-1v3h-1v-2h-1v1h-1v1h-1v-1h-2v2h-1v-2h-1v2h-1v-2h-1v2h-1v-1h-1v1h-1v1h-1v-2h-1v-2h-1v1h-2v-2h-1v3h-1v-1h-1v3h-1v-4h-3v4h-1v-2h-1v-1h-2v4h-1v-1h-1v-2h-2v-1h-1v2h-1v-1h-4v-2h-1v1h-1v-1h-1v1h-1v2h-1v-1h-1v-1h-1v1h-1v-1h-1v3h-1v-2h-1v-1h-1v1h-2v-1h-1v4h-1v-4h-2v1h-1v-3h-1v1h-1v2h-1v3h-1v-5h-1v1h-1v1h-4v-2h-2v4h-1v-3h-2v3h-1v1h-1v-5h-1v3h-1v-1h-2v3h-1v-4h-1v3h-1v-3h-4v1h-1v-1h-2v1h-1v-1h-2v1h-2v-2h-1v3h-1v-1h-1v1h-1v-1h-3v-2h-1v1h-1v1h-1v1h-1v-2h-2v-2h-1v3h-1v1h-1v-1h-1v-2h-1v1h-2v2h-1v-1h-1v-2h-2v2h-1v1h-1v-2h-1v1h-1v1h-1v-3h-1v1h-2v1h-1v-2h-1v2h-1v-1h-1v4h-1v-1h-1v-3h-3v2h-1v2h-1v-5h-1v2h-2v-2h-1v1h-1v1h-1v2h-1v-3h-1z"/>
<path d="M584 454h1v3h1v2h1v-3h1v2h1v-1h2v-2h1v3h1v1h1v-1h1v1h1v1h1v-2h1v1h1v-1h3v-1h1v1h1v-1h2v2h1v-3h1v2h1v-1h2v1h1v-1h1v2h1v-2h2v1h1v-2h1v1h1v-1h1v1h1v-1h1v2h1v-1h1v1h2v-3h2v3h2v-1h1v2h1v-1h2v-2h1v2h1v-1h1v1h1v1h2v-2h2v-1h2v1h1v-1h2v-1h1v3h1v1h1v-1h1v-2h1v1h1v2h1v-2h2v-1h1v2h1v-1h1v1h3v1h1v-3h1v1h1v-2h1v3h1v-3h1v4h1v-3h2v1h1v1h1v-1h1v2h1v-2h1v2h1v-1h1v-1h1v1h2v-1h1v-1h1v3h2v-1h1v1h1v-3h1v2h1v-1h1v1h2v-1h1v1h1v1h1v-1h1v-1h1v1h1v-2h1v2h1v1h1v-1h2v-2h1v3h1v-2h1v1h2v-1h1v1h2v-4h1v2h1v1h2v-1h1v3h1v-3h1v1h2v1h1v-3h1v2h3v1h1v-3h1v3h1v-1h1v2h1v1h1v-2h1v-2h1v-1h1v2h1v1h1v-1h1v1h2v-1h2v2h1v-1h1v1h2v-3h1v3h1v-2h1v2h1v-1h1v-2h1v2h1v-2h2v3h1v-1h1v1h1v-3h1v-1h1v1h1v-1h1v5h1v-2h2v-1h3v-4h1v4h2v2h1v-1h1v1h1v-1h2v-1h1v2h1v-4h1v3h5v-2h1v2h2v-2h2v3h1v-4h1v1h1v1h1v2h2v-2h2v2h1v1h1v-2h1v-3h1v4h1v-1h4v-2h2v3h1v-1h1v-1h1v1h1v-1h1v-1h2v2h1v-1h2v-3h1v4h2v-1h1v2h2v-1h2v-1h1v1h1v-1h2v2h1v-2h1v-2h1v3h1v-3h1v2h2v-1h1v3h1v-3h2v1h3v2h1v-1h1v1h2v-1h1v-1h1v1h1v-1h1v-1h2v2h2v1h1v-1h1v1h1v-4h1v5h1v-3h4v1h2v-2h1v1h1v1h2v-2h1v4h1v-3h1v2h1v-1h2v-1h1v1h2v-2h1v2h1v-1h4v-1h1v2h1v-1h1v1h1v-4h1v4h1v-1h3v1h2v-2h1v2h1v-1h1v1h1v1h1v-1h1v-2h1v1h3v1h1v1h1v-2h2v2h1v-3h1v1h1v1h2v-1h2v1h3v-1h1v2h2v-1h1v-1h1v2h1v-2h1v1h1v-2h1v1h1v1h1v-2h1v1h1v2h2v-2h5v1h1v1h2v-1h2v-2h1v1h1v1h6v-2h1v1h1v2h2v-3h1v1h1v1h2v-1h1v1h3v1h1v-1h1v-3h1v3h1v-3h2v2h1v2h1v-3h1v1h3v1h1v-2h1v2h1v-1h2v1h1v1h1v-4h1v3h1v-2h1v2h2v1h1v-1h1v1h1v-1h2v-2h1v-3h1v5h1v-2h1v1h1v1h1v-1h1v1h1v-3h1v1h1v2h1v-1h1v2h1v-3h2v3h1v-1h3v-1h1v1h1v-2h1v1h1v-1h1v1h2v2h1v-2h3v1h2v-1h1v2h2v-2h1v-2h1v1h1v-2h1v4h1v1h1v-3h1v2h2v-2h1v1h2v-1h2v1h1v1h1v-3h1v1h1v2h1v-1h1v1h1v-1h3v1h2v-1h1v2h1v-2h1v2h1v-5h1v3h1v1h4v-1h1v1h1v-2h1v1h1v2h1v-4h1v3h1v1h1v-2h3v2h1v-3h1v1h1v1h1v-1h1v1h3v-1h1v-2h1v4h1v-1h1v-1h1v-1h1v1h2v1h1v2h1v-2h2v-1h1v1h2v-2h2v1h1v1h1v-1h1v-2h1v3h1v-2h2v1h1v-1h1v1h2v1h1v-1h1v1h1v-1h1v-1h1v2h2v-1h1v3h1v-4h3v2h1v-3h1v2h1v-1h1v3h1v1h1v-2h4v-1h3v-1h1v2h1v-1h1v2h1v-4h1v3h1v-1h1v2h1v-1h1v-1h1v1h1v-1h1v1h2v1h1v-1h2v-2h1v2h1v1h1v-2h1v1h4v1h1v-1h2v2h1v-2h1v1h1v-1h1v-1h1v-1h1v2h1v-1h1v2h1v-2h1v2h1v-2h1v2h1v-2h1v-2h1v2h1v2h2v-5h1v5h2v-1h1v-1h1v1h1v-2h1v3h3v-2h2v1h1v-2h2v2h1v-2h1v2h1v-1h1v-1h1v3h3v-2h1v-1h1v1h2v2h2v-1h1v-1h1v2h1v-1h2v-1h1v1h1v-1h1v-1h1v3h1v-4h1v3h1v-1h1v2h2v-1h1v-2h1v1h2v1h1v-2h1v2h1v2h1v-4h1v1h1v-1h1v1h1v2h1v-1h3v1h1v-2h1v1h1v-1h1v1h1v-1h1v1h1v1h1v-2h1v1h2v1h1v-2h1v-1h1v3h1v-1h1v-2h1v-2h1v4h1v1h1v-2h2v-1h1v-1h1v-1h1v5h1v-2h1v-1h1v2h1v-1h1v1h3v1h1v-2h1v1h3v-1h2v2h1v-1h2v1h1v-1h2v-1h3v1h1v-2h2v3h1v-1h1v-1h1v2h1v-3h1v3h1v-3h1v-1h1v1h1v3h2v-2h1v1h1v1h1v-2h2v3h1v-1h3v-1h1v1h1v-1h2v-1h1v1h2v-3h1v4h1v-5h1v4h1v-1h1v1h2v-1h1v-1h1v1h1v-1h1v1h1v-1h1v2h1v-1h1v2h2v-2h1v2h4v-2h1v1h2v1h1v-1h1v-2h1v1h1v1h1v-4h1v4h1v-2h1v2h1v-1h1v-1h1v3h1v-3h1v3h1v-1h2v1h1v-2h1v2h1v-2h1v-1h1v1h1v-1h1v3h2v-2h1v-1h2v1h1v1h1v-2h2v1h1v2h1v-1h1v1h1v-4h1v3h1v-1h1v1h3v-3h1v2h1v-2h1v3h2v-2h1v2h2v-2h1v2h1v2h1v-2h1v1h1v-1h1v-1h1v2h1v-1h1v-1h1v2h1v-1h1v1h1v-5h1v4h1v-2h1v3h3v-1h3v1h1v-6h1v5h1v-2h1v2h1v-3h1v3h3v-1h1v1h1v-1h1v-1h1v2h1v-1h1v1h1v1h1v-2h1v3h1v-4h1v2h1v-1h2v2h1v-2h2v-1h2v2h2v-1h1v2h1v-1h1v-1h3v1h1v1h1v-1h2v1h1v-1h1v-1h1v-1h1v1h4v2h1v-2h1v2h1v-3h1v2h1v1h1v-3h1v2h1v-1h1v-1h1v3h1v-2h1v3h2v-4h1v2h1v1h1v-2h2v1h1v1h1v-1h3v1h1v-1h1v-2h1v1h2v-1h1v1h1v1h1v-1h3v-2h1v3h1v-1h1v2h1v-2h1v-3h1v3h3v2h1v-3h2v2h1v-3h1v2h2v-1h1v-1h1v3h2v-1h1v2h2v-1h1v1h1v-2h1v1h1v1h2v-3h1v2h1v-2h1v1h1v-1h1v2h2v-1h1v2h1v-2h2v1h3v-1h1v-1h1v1h1v-1h1v2h2v-1h1v2h1v-2h1v1h1v-1h1v2h1v-2h2v1h1v-2h1v3h2v-1h1v-2h1v1h1v-2h1v3h2v-2h1v1h1v1h1v1h1v-4h1v4h1v-3h1v1h1v1h1v-2h1v1h2v1h1v-1h1v1h2v-3h1v2h1v2h1v-4h1v2h1v-3h1v5h1v-1h1v-1h1v1h4v-3h1v4h3v-5h1v5h2v-1h3v-2h1v3h1v-2h1v-1h2v2h2v-2h1v1h1v3h1v-2h2v-1h1v-2h1v2h1v-4h1v5h1v-2h1v2h2v-2h1v2h4v-2h1v1h3v-1h1v1h1v2h1v-1h1v1h1v-1h2v1h1v-1h1v-1h1v1h2v1h1v-2h1v1h2v-1h1v2h1v-3h1v2h1v1h1v-1h1v-1h1v-1h3v1h1v-2h1v1h1v-3h1v5h1v-2h1v4h1v-3h2v2h1v-2h3v1h1v-1h2v-1h1v2h1v1h1v-1h1v-3h1v4h1v-1h1v-1h1v-4h1v5h1v1h1v-1h1v-1h2v1h1v-2h1v1h1v-1h1v2h1v1h1v-3h2v2h1v-1h2v1h1v-3h1v2h1v1h1v-1h1v-2h1v3h1v-1h1v-3h1v5h1v-1h1v-2h1v3h1v-1h1v1h1v-2h2v3h1v-4h1v2h1v-1h1v2h1v-1h1v-1h1v3h1v-4h1v2h1v-1h3v1h2v-1h1v2h1v-2h1v-1h1v1h1v2h1v-2h1v-1h1v1h1v1h4v-1h2v-2h1v2h1v-2h1v1h2v3h1v-1h1v1h1v-3h1v2h1v-2h1v4h1v-2h1v-1h1v-1h1v1h1v1h1v-1h1v1h1v-1h2v1h1v-1h1v-1h1v3h2v-4h1v2h1v1h1v-1h1v1h1v2h1v-4h1v3h1v-2h3v2h2v-1h1v-2h2v2h1v-1h1v1h2v-3h1v3h1v-2h1v2h1v-1h2v-1h1v1h1v2h1v-1h1v-1h1v1h1v1h1v-1h3v-1h2v1h1v1h2v-1h1v-2h1v1h1v2h1v-1h2v1h1v-2h1v1h2v1h1v-2h1v-4h1v4h1v1h1v-3h1v2h1v-2h1v4h3v-3h1v3h1v-1h1v-3h1v3h1v-3h1v3h2v-3h1v2h1v1h1v-1h1v1h1v-2h1v2h1v-1h1v-1h1v1h1v1h1v-1h4v2h1v-2h2v-1h1v2h1v2h1v-3h1v2h1v-3h1v2h1v1h1v-2h1v2h1v1h1v-3h1v2h1v-3h1v1h2v1h1v-2h1v2h2v-3h1v3h1v-2h1v3h1v-2h3v1h1v-1h1v2h2v-3h1v2h1v-1h1v2h1v-1h1V468h-1v1h-1v-1h-1v2h-1v-2h-1v1h-1v-1h-2v1h-1v1h-1v2h-1v-2h-1v-3h-1v1h-1v1h-1v1h-1v-3h-1v1h-1v2h-1v-2h-1v-1h-1v1h-2v5h-1v-6h-1v4h-1v-3h-1v1h-1v-2h-2v5h-1v-2h-1v2h-1v1h-1v-5h-2v1h-1v1h-1v-2h-1v1h-1v-3h-1v4h-1v-2h-1v1h-2v-1h-1v2h-1v-1h-2v1h-1v-1h-1v1h-2v-1h-1v2h-1v-1h-1v-2h-1v2h-1v-3h-1v3h-1v-2h-2v2h-1v-2h-1v-1h-1v3h-1v-2h-1v2h-1v-1h-1v-2h-1v3h-1v-1h-1v2h-1v-3h-2v-1h-2v2h-1v2h-1v-4h-1v3h-1v-1h-1v-1h-1v2h-2v-3h-1v3h-1v2h-1v-3h-1v-1h-2v1h-3v2h-1v-3h-2v2h-1v-1h-1v2h-1v-2h-5v-2h-1v3h-1v-2h-1v1h-1v-2h-1v5h-1v-3h-1v-2h-1v1h-3v4h-1v-4h-2v2h-1v-3h-1v1h-1v-1h-1v2h-1v3h-1v-5h-1v3h-1v-2h-1v2h-1v-1h-1v-1h-4v1h-1v1h-1v1h-1v-3h-1v1h-1v-3h-1v3h-1v1h-1v-3h-1v2h-1v1h-2v-3h-1v1h-1v2h-1v-3h-1v1h-3v3h-1v-1h-3v-1h-4v-1h-1v4h-1v-3h-1v-1h-1v2h-2v-2h-2v-1h-1v3h-1v-2h-1v1h-1v2h-1v-5h-1v3h-1v4h-1v-5h-2v1h-1v-1h-1v4h-1v-4h-2v2h-1v-2h-1v1h-2v-1h-1v2h-1v-2h-1v3h-1v-4h-1v1h-2v-1h-1v1h-1v-1h-2v3h-1v-1h-1v-1h-1v1h-1v1h-1v-2h-2v2h-1v2h-1v-3h-1v-2h-2v2h-1v1h-1v-1h-2v-1h-1v1h-1v-2h-1v3h-2v-1h-1v-2h-2v1h-1v-1h-2v3h-2v-3h-2v2h-1v-2h-1v1h-1v3h-1v-3h-2v-1h-1v1h-1v1h-2v-1h-1v3h-1v-2h-1v-1h-1v-1h-2v1h-1v-1h-1v2h-1v-1h-3v4h-1v-1h-1v-3h-1v-1h-1v3h-1v-1h-1v-1h-1v2h-1v-4h-1v1h-1v4h-1v1h-1v-4h-1v1h-2v1h-1v-2h-3v1h-1v-1h-1v4h-1v-4h-2v-1h-1v2h-1v-1h-3v6h-1v-5h-1v1h-1v-2h-2v-1h-1v2h-2v-1h-2v1h-1v-2h-1v2h-1v-3h-1v2h-1v-1h-1v6h-1v-6h-1v1h-1v2h-1v-1h-1v-2h-1v2h-1v-1h-1v3h-1v-1h-1v-1h-1v-1h-3v-1h-1v1h-2v2h-1v-1h-1v-2h-1v1h-2v-1h-4v1h-3v1h-1v1h-1v-2h-1v1h-1v-2h-1v1h-3v2h-1v-2h-1v2h-1v-3h-1v2h-1v1h-1v-1h-4v-2h-1v1h-2v-2h-1v3h-1v1h-1v-2h-3v1h-1v1h-1v-2h-1v2h-2v-1h-1v1h-1v-2h-2v2h-1v-2h-1v2h-1v-2h-1v-1h-1v1h-1v3h-1v-4h-1v2h-1v-1h-2v1h-3v-2h-1v4h-1v-2h-2v2h-1v-5h-1v3h-1v1h-1v-3h-1v1h-1v1h-1v-1h-2v-1h-1v2h-1v-1h-1v-2h-1v5h-1v-2h-2v1h-1v-2h-1v3h-1v-3h-1v1h-1v-1h-1v1h-1v2h-1v-3h-2v-1h-1v-1h-1v2h-2v2h-2v-1h-1v1h-1v-3h-2v3h-1v-2h-1v1h-3v4h-1v-5h-1v-1h-1v2h-1v1h-1v-2h-2v-2h-1v4h-1v-2h-1v-1h-2v3h-1v1h-1v-3h-6v2h-1v-2h-1v-1h-3v1h-1v1h-1v-2h-2v3h-1v-2h-1v3h-1v-3h-1v2h-1v-2h-1v-1h-2v2h-1v1h-1v-1h-1v-1h-2v-1h-1v2h-1v-1h-3v-1h-1v-1h-1v5h-1v-2h-1v-1h-3v1h-3v-2h-1v3h-1v-2h-1v2h-1v3h-1v-5h-3v1h-1v-1h-1v1h-1v-1h-2v1h-1v-1h-1v2h-1v-1h-1v-2h-1v3h-1v-2h-1v3h-1v-3h-1v2h-1v-1h-1v1h-1v-1h-1v-2h-1v1h-2v-1h-1v1h-1v1h-1v2h-1v-3h-2v1h-1v-1h-1v1h-1v1h-1v3h-1v-4h-2v-1h-1v2h-1v-1h-1v1h-1v1h-1v-3h-1v1h-1v-1h-1v1h-1v1h-1v-2h-1v1h-1v1h-1v-1h-2v-1h-1v1h-1v-1h-2v2h-1v-1h-1v-1h-1v1h-1v-1h-2v1h-4v-1h-1v2h-1v-2h-2v1h-2v-2h-1v3h-1v-1h-1v1h-1v-1h-1v-1h-1v2h-1v-2h-3v-1h-1v3h-1v-3h-1v3h-3v-2h-1v3h-1v-2h-1v-1h-1v-1h-1v3h-1v-2h-3v2h-1v3h-1v-3h-1v-3h-1v2h-1v1h-1v-3h-1v3h-1v-1h-1v-1h-1v1h-1v1h-1v-1h-1v2h-1v-1h-1v-2h-1v1h-1v-3h-1v2h-1v1h-1v-2h-1v2h-2v-1h-1v-1h-2v1h-1v-1h-1v3h-2v-1h-1v-2h-1v1h-1v1h-3v-1h-1v1h-1v-1h-1v1h-1v-1h-2v5h-1v-3h-1v-2h-1v1h-1v-1h-1v-1h-1v1h-1v-1h-1v3h-2v-1h-1v-2h-1v1h-5v2h-1v-1h-1v-1h-1v1h-1v1h-1v-1h-4v-1h-1v1h-2v3h-1v-2h-1v-1h-2v-1h-2v1h-1v-2h-1v5h-1v-4h-1v1h-1v-2h-1v1h-5v2h-2v-3h-2v2h-1v-2h-1v1h-1v1h-1v-1h-1v-1h-1v1h-2v2h-1v-2h-1v5h-1v-5h-1v2h-1v-2h-1v1h-1v-1h-1v2h-1v-2h-1v3h-1v-2h-1v-1h-2v1h-1v-3h-1v4h-1v-2h-1v-1h-1v4h-1v-2h-1v1h-1v-2h-1v2h-1v-3h-1v3h-1v-1h-1v-2h-1v3h-1v-2h-2v4h-1v-6h-1v4h-1v-1h-1v1h-1v-3h-1v3h-1v-2h-1v1h-4v2h-1v-2h-1v-1h-1v1h-2v1h-1v-1h-1v-1h-1v2h-1v-1h-1v-1h-3v1h-2v1h-1v-3h-2v2h-1v-1h-2v-1h-1v6h-1v-5h-1v1h-1v2h-1v2h-1v-6h-1v2h-1v3h-1v-2h-1v-2h-1v-1h-2v2h-1v1h-1v-1h-1v-1h-1v-1h-1v1h-1v5h-1v-2h-1v-3h-1v2h-1v-2h-1v1h-1v-1h-1v2h-2v1h-1v-1h-1v-1h-2v4h-1v-5h-2v2h-1v-2h-2v1h-1v-1h-1v1h-1v-2h-2v3h-1v-1h-3v2h-1v-3h-1v-1h-2v2h-1v-1h-1v1h-1v1h-1v-1h-1v-2h-2v7h-1v-5h-1v-1h-1v1h-1v-2h-1v3h-1v-3h-1v3h-1v-2h-1v2h-1v-2h-1v-1h-2v1h-1v1h-1v-1h-1v1h-1v-2h-2v3h-1v-1h-1v-1h-1v-1h-2v2h-1v-2h-1v3h-1v-1h-1v-1h-1v-1h-1v2h-2v1h-1v-3h-1v2h-1v-2h-1v2h-1v1h-1v-2h-1v1h-1v-2h-1v4h-1v-4h-1v2h-1v5h-1v-6h-1v3h-1v-2h-2v1h-2v-1h-1v-1h-3v1h-1v-1h-2v-1h-1v2h-1v-1h-1v3h-2v-3h-1v2h-1v-2h-1v1h-1v-1h-1v-1h-2v1h-1v2h-2v-2h-2v2h-1v1h-1v-3h-1v-1h-1v1h-3v1h-1v-1h-1v-1h-1v1h-3v2h-1v-1h-2v1h-2v-2h-2v2h-1v-1h-1v-1h-1v3h-1v-4h-1v1h-2v2h-1v-2h-1v1h-1v-1h-1v1h-1v-1h-2v1h-1v2h-1v-2h-1v-1h-1v1h-2v-1h-1v-1h-1v2h-5v-1h-2v-1h-1v2h-1v-2h-1v2h-2v-3h-1v3h-1v-1h-1v4h-1v-2h-1v-3h-1v2h-1v-1h-1v1h-3v-1h-2v3h-2v-3h-1v1h-1v-1h-2v1h-1v-1h-2v1h-3v-2h-4v1h-2v1h-2v-1h-3v1h-2v-1h-1v1h-3v1h-1v-2h-3v1h-1v1h-1v-1h-4v-1h-1v1h-3v-1h-3v2h-1v3h-1v-4h-1v-2h-1v1h-1v1h-2v-2h-2v1h-4v2h-1v-1h-1v1h-1v-1h-1v-1h-2v1h-6v-1h-3v1h-2v-1h-2v2h-1v-2h-1v2h-1v-1h-1v2h-1v-2h-2v-2h-1v1h-1v-1h-1v1h-2v1h-3v-2h-1v1h-2v-1h-1v2h-1v2h-1v-4h-1v2h-1v-2h-1v1h-1v1h-1v-2h-1v1h-1v2h-2v-1h-2v-1h-1v1h-1v-2h-1v1h-1v3h-1v-1h-1v-2h-1v-1h-1v2h-1v1h-1v-2h-2v4h-1v-6h-1v1h-1v4h-1v-1h-1v-2h-1v-1h-1v4h-1v-4h-1v2h-1v-1h-1v-1h-1v2h-1v-3h-1v1h-1v1h-1v3h-1v-3h-1v1h-2v-2h-1v1h-1v-1h-1v3h-1v-2h-7v2h-1v-3h-1v1h-1v1h-1v-1h-1v1h-1v-2h-2v3h-1v2h-1v-4h-3v1h-3v1h-2v-3h-1v2h-1v-2h-1v2h-1v-2h-1v2h-1v-3h-1v3h-2v1h-1v-3h-1v3h-1v-3h-1v3h-3v-2h-1v1h-1v-1h-1v6h-1v-5h-2v-1h-1v-1h-1v1h-1v1h-2v-1h-1v2h-1v1h-1v-2h-1v-2h-1v5h-1v-3h-1v3h-1v-4h-1v4h-2v-5h-1v1h-1v-1h-1v3h-1v-3h-1v2h-1v-1h-3v1h-2v-1h-1v1h-2v-1h-1v1h-1v-1h-1v2h-1v-1h-1v1h-1v-1h-1v1h-1v-2h-1v-1h-2v3h-1v-1h-8v-1h-1v1h-1v1h-1v1h-1v-1h-1v-3h-1v1h-1v1h-1v5h-1v-6h-1v2h-1v-1h-1v2h-1v-4h-1v1h-1v1h-1v-2h-1v3h-1v2h-1v-3h-1v1h-1v-2h-1v1h-3v-1h-1v1h-1v-1h-1v1h-1v2h-1v-2h-1v1h-1v-2h-2v1h-1v2h-1v-3h-1v1h-1v-1h-1v2h-1v-2h-1v3h-2v-3h-1v1h-1v-1h-5v2h-1v-1h-3v-2h-2v2h-2v-2h-1v2h-1v1h-1v-1h-1v-1h-3v2h-2v-3h-1v2h-1v3h-1v-6h-1v4h-1v1h-1v-1h-1v-2h-2v2h-2v-2h-1v-1h-1v3h-1v-3h-2v2h-1v-1h-1v5h-1v-4h-1v-1h-3v-1h-1v2h-1v1h-1v-1h-1v-1h-1v1h-2v-1h-1v1h-1v-1h-2v5h-1v-4h-2v-2h-1v2h-1v-1h-2v-1h-1v2h-1v1h-1v-2h-1v-1h-1v4h-1v-2h-1v-1h-2v1h-1v-1h-1v5h-1v-4h-1v-1h-2v-1h-1v3h-1v2h-1v-2h-2v-3h-1v2h-1z"/>
<path d="M584 512h1v2h1v-2h1v1h3v1h1v-5h1v3h1v1h1v-1h1v-1h2v2h2v-1h2v2h1v-3h1v3h1v-2h1v-1h1v1h1v-1h3v1h1v1h2v-4h1v2h1v-2h1v3h1v1h1v-2h2v1h2v-2h2v2h1v-2h1v1h1v1h1v1h1v-5h1v3h1v2h3v-1h1v1h1v-1h2v1h1v-1h3v-1h2v-1h1v3h1v-2h1v2h2v-2h1v1h1v1h1v-3h1v3h4v-3h2v2h2v-2h1v3h1v-1h2v1h1v-2h2v1h3v2h1v-3h1v-4h1v5h1v1h1v-1h1v-1h1v2h1v-1h2v-2h1v4h1v-2h2v-2h1v3h1v-2h2v3h1v-2h2v-1h2v2h2v-3h1v2h1v-1h3v2h1v-2h2v2h1v-3h1v1h1v2h2v-4h1v4h1v1h1v-3h1v-2h1v5h1v-2h1v1h1v-1h1v-1h1v1h1v-3h1v1h1v1h4v2h1v-3h1v3h1v-1h2v-3h1v2h1v-1h1v3h1v-1h4v-1h1v2h1v-1h2v1h1v-2h3v1h1v-1h1v2h2v2h1v-2h1v-1h1v-1h1v2h1v-1h1v1h1v-2h2v2h2v-1h1v1h1v1h1v-3h2v-4h1v7h1v-1h2v-1h3v1h1v-2h1v-1h2v3h1v-1h1v-1h1v1h1v-1h1v2h1v-1h1v-2h1v3h1v-1h1v1h1v-1h1v-1h1v2h1v-2h1v2h1v-2h2v1h1v1h2v-2h1v-2h1v3h3v-1h1v1h1v-1h1v3h1v-2h1v-1h1v1h2v1h1v-1h2v-6h1v6h2v-2h2v2h1v-1h3v1h1v1h1v-1h2v-1h1v1h2v1h1v-1h2v-2h1v3h5v-2h2v2h2v-3h1v3h1v-1h5v1h1v-1h1v1h1v-1h1v-1h1v-2h1v5h1v-4h1v1h2v1h1v-1h1v-2h1v4h1v-1h2v1h1v-2h2v2h2v-1h1v-1h1v2h1v-1h1v-1h3v2h1v-1h1v1h1v-1h2v-1h1v-1h1v3h1v-1h2v1h2v-2h1v2h2v-1h1v-2h2v2h2v1h1v-2h1v2h1v-1h1v3h1v-1h1v-3h1v2h3v1h1v-3h2v3h1v-1h1v-1h2v-3h1v3h1v-1h1v1h2v-2h1v3h1v1h1v-3h1v2h1v-1h1v-1h1v2h1v-1h1v-1h1v-1h1v3h1v-3h2v1h2v1h1v2h1v-1h1v-1h1v-1h1v1h1v1h1v-2h1v2h2v-1h1v-1h2v-1h1v1h1v1h5v1h1v-4h1v4h1v-1h1v-1h2v2h2v-3h1v-2h1v3h1v2h1v-2h1v1h3v-2h1v1h1v2h1v-1h1v-1h1v-2h1v3h2v-1h2v-1h1v2h1v-2h1v2h1v-3h1v2h1v-1h1v3h2v-2h1v1h2v2h1v-2h1v1h1v-1h1v1h1v-1h1v1h2v-2h1v-1h1v2h1v1h1v-1h1v1h1v-2h1v1h1v1h1v-1h2v-3h1v3h1v-1h1v2h1v1h1v-3h2v-2h1v4h1v-1h1v1h2v-3h1v2h2v1h1v-1h1v-2h1v1h2v1h1v-1h1v2h1v-3h1v1h3v-2h1v3h1v1h1v-3h1v4h1v-2h3v-1h1v1h1v1h1v-1h1v1h1v-2h1v2h1v-1h5v1h1v-1h1v2h1v-2h1v1h1v-4h1v-1h1v4h2v1h1v1h1v-2h1v2h1v-6h1v4h1v2h1v-2h2v2h1v-5h1v4h1v-2h2v3h1v-2h2v-1h1v1h2v1h1v-2h1v1h2v-4h1v5h1v-1h1v-2h1v1h1v3h1v-2h1v1h1v-1h1v2h1v-1h3v-3h1v1h1v1h1v2h2v-1h1v-2h1v2h1v-1h1v-2h2v-3h1v5h1v-1h1v4h1v-4h1v3h1v-3h1v2h1v-4h1v3h1v-2h1v1h1v1h1v1h1v-2h2v1h1v2h1v-2h1v1h1v-1h1v1h1v1h1v-3h1v1h1v1h1v-1h1v1h1v-2h1v2h1v-3h1v3h1v-1h1v-1h1v2h1v-3h1v2h1v-1h1v1h1v-1h1v2h1v-2h1v2h1v-2h1v2h1v-1h1v-1h2v2h2v-1h1v1h1v-2h1v1h1v1h1v-1h1v1h1v-3h1v2h2v1h1v1h1v-3h1v3h1v-5h1v4h1v1h1v-2h1v-2h1v1h1v2h1v-2h1v1h4v1h1v-2h1v-1h3v2h1v-1h1v1h1v1h1v-3h1v2h1v-3h1v3h1v-1h2v-1h1v1h1v1h1v-1h1v2h1v-1h2v-1h1v2h2v-4h1v3h1v1h1v-2h1v1h1v1h2v-1h3v1h1v-1h2v-1h1v1h4v2h1v-2h1v-2h1v2h2v-1h1v1h1v-1h1v-1h1v1h1v2h2v-2h1v2h1v-1h3v1h1v-1h1v-1h1v1h2v1h1v-2h2v-1h1v2h1v-4h1v4h1v-2h1v2h2v-1h2v-1h1v4h1v-4h1v2h1v-1h1v1h1v1h1v-1h1v-2h1v2h1v2h1v-3h1v1h2v1h1v-2h1v3h1v-2h2v1h2v-2h2v2h1v-1h6v-1h1v-3h1v5h1v-2h1v-1h1v1h1v-2h1v3h1v-1h1v2h1v-3h1v2h1v1h1v-1h1v1h1v-2h2v1h1v1h1v-1h1v-2h1v2h2v1h1v-1h1v-1h2v1h2v2h1v-2h2v1h1v-1h2v-2h1v2h1v2h1v-3h1v1h1v1h1v-3h1v3h1v-1h4v-1h1v1h1v-1h1v1h2v1h1v-1h1v-1h3v2h1v-3h1v4h1v-3h2v-1h1v2h1v2h1v-3h1v-1h1v1h1v2h2v-2h1v2h1v-1h1v-1h1v1h1v-1h1v1h1v-2h1v1h1v2h1v-1h1v1h1v-1h2v1h1v-2h1v1h2v-1h1v2h2v1h1v-2h1v1h1v-1h2v2h1v-1h1v-2h1v2h1v-1h2v1h1v-1h1v-1h1v-1h1v2h1v-2h1v2h1v-2h1v1h1v2h1v-3h1v1h4v1h1v1h1v-1h1v2h1v-1h2v-1h1v2h1v-2h1v2h1v-4h1v2h1v1h1v-3h1v2h1v1h1v-3h2v2h2v-2h1v2h2v2h1v-4h1v5h1v-4h1v-1h1v1h1v1h1v1h2v-1h1v-1h1v1h5v-1h1v2h1v-2h2v1h1v1h1v-2h3v1h2v1h1v-3h1v2h1v-1h1v2h1v1h1v-2h1v1h1v-1h1v-1h1v1h1v1h1v-2h2v1h2v1h1v-2h1v1h1v1h2v-2h3v1h1v-1h1v3h1v-4h1v3h1v-1h1v1h2v1h1v-3h1v3h1v-3h3v1h1v1h1v-1h1v-1h1v2h2v-1h1v-2h2v3h1v-1h1v-1h1v2h1v-1h2v-1h2v1h1v1h1v-4h1v3h2v-2h1v2h1v1h1v-1h1v-1h1v1h1v1h1v-1h2v-1h1v2h1v-2h3v3h1v-1h5v-3h1v2h1v-1h2v2h1v-2h2v-2h1v4h1v-1h1v-1h1v2h1v-3h1v1h2v3h1v-3h1v1h4v2h1v-1h1v-2h1v2h1v-1h1v1h2v1h1v-1h1v-3h1v2h1v1h1v-3h1v-1h1v4h4v-2h2v2h1v-1h5v-2h1v1h1v1h2v-1h2v2h1v-3h1v2h4v-3h1v2h1v1h1v-2h1v2h5v-1h2v2h2v-1h1v1h2v-1h1v2h1v-2h1v1h1v-2h2v2h1v1h1v-2h1v-1h2v2h1v-1h1v1h1v-4h1v2h1v2h3v-1h5v-1h3v1h1v1h1v-1h2v-1h1v1h1v2h1v-2h1v-2h1v2h1v-1h2v1h1v-1h1v3h1v-2h1v1h2v-1h1v1h1v-3h1v1h2v2h1v-3h1v2h1v1h1v-3h1v3h1v-1h4v-1h1v-1h1v1h1v1h2v1h1v-1h2v-2h1v2h1v2h1v-1h1v-2h1v1h1v1h1v-1h2v-2h1v3h2v-2h1v-2h1v3h1v1h1v1h1v-2h2v-2h1v1h1v1h2v1h1v-4h1v3h2v1h1v-1h1v1h1v-2h2v2h1v-1h1v-1h1v1h1v-2h1v2h1v-1h1v-1h2v3h2v-2h3v2h1v-2h2v1h1v-1h3v-3h1v4h2v1h1v-1h2v1h1v-1h2v1h1v-2h1v2h1v-3h1v3h1v-2h1v1h2v2h1v-2h1v1h1v-2h1v1h1v1h1v-1h1v-2h1v1h2v1h1v1h1v-2h1v1h1v-1h1v1h1v-3h1v2h1v2h2v1h1v-2h1v-1h1v2h1v1h2v-1h1v-3h1v1h1v1h1v-2h2v3h1v-1h3v-1h1v2h1v1h1v-3h2v1h2v1h1v-2h1v-2h1v2h1v-1h1v3h1v-1h3v-2h1v2h2v2h1v-1h1v1h1v-2h1v1h1v-1h1v-1h1v2h1v-3h1v1h1v2h1v-2h2v3h1v-2h2v1h1v1h1v-2h3v2h1v-1h1v-2h1v-1h2v2h2v2h1v-3h1v-1h1v4h2v-3h1v2h1v-1h1v1h1v-1h1v-1h1v-1h1v2h1v-2h1v2h1v2h1v-3h1v-1h1v1h1v1h1v-1h1v1h1v-2h1v1h1v2h1v-1h1v-1h1v1h2v1h2v-1h2v1h1v-2h1v2h1v-1h1v2h1v-1h1v-1h3v-1h3v2h1v-2h1v-2h1v4h1v-1h1v1h1v-2h1v1h1v1h1v-2h1v2h1v-1h1V521h-1v1h-1v2h-1v-3h-1v2h-1v-1h-2v4h-1v-2h-1v-2h-1v1h-2v-1h-1v1h-1v-1h-4v1h-2v1h-1v1h-1v-2h-1v8h-1v-8h-3v-1h-2v1h-1v7h-1v-8h-1v8h-1v1h-1v-9h-1v2h-1v-1h-1v-1h-2v2h-1v-2h-2v1h-2v-2h-1v2h-1v2h-1v-1h-1v-3h-1v2h-5v-1h-1v2h-1v-1h-1v-1h-1v3h-1v-2h-1v1h-1v-1h-1v-1h-1v2h-2v1h-1v-2h-1v2h-1v-4h-1v2h-2v-1h-2v1h-1v-1h-1v2h-2v1h-1v-2h-2v-2h-1v3h-1v-2h-1v1h-1v-1h-2v3h-1v5h-1v-8h-1v-1h-1v2h-1v-1h-1v1h-1v-2h-1v2h-1v1h-1v1h-1v-1h-1v-3h-1v2h-1v-1h-3v-1h-1v1h-1v3h-1v-3h-2v1h-1v2h-1v5h-1v-6h-1v-2h-1v1h-1v-1h-2v1h-1v-2h-1v3h-1v-2h-1v-1h-1v1h-1v3h-1v-1h-2v-2h-2v1h-1v-1h-1v1h-1v-2h-1v1h-1v1h-2v-1h-1v-1h-1v2h-1v-1h-1v2h-2v-2h-1v2h-1v-2h-1v1h-1v-1h-1v1h-1v-1h-1v-1h-2v1h-1v1h-2v-1h-1v3h-1v-3h-1v1h-1v1h-1v-2h-1v2h-1v-2h-1v2h-1v1h-1v-2h-4v1h-1v-2h-1v1h-2v-1h-3v1h-1v1h-1v-3h-1v10h-1v-9h-2v1h-1v1h-1v-1h-1v-2h-1v4h-1v-2h-2v2h-1v1h-1v-5h-1v4h-1v-1h-1v-2h-2v2h-1v2h-1v-4h-1v1h-1v-1h-2v1h-1v-1h-2v2h-2v-1h-1v-1h-2v-1h-1v3h-1v1h-1v-2h-2v-1h-2v3h-1v-4h-1v2h-3v-1h-1v1h-1v-1h-1v-1h-1v2h-1v-1h-1v-1h-1v1h-2v-1h-1v2h-1v1h-1v-2h-2v1h-1v-1h-1v1h-1v1h-1v-1h-1v-1h-1v-1h-1v1h-1v-1h-1v2h-1v1h-1v1h-1v-4h-1v1h-1v1h-2v1h-1v3h-1v-5h-1v1h-1v-1h-2v1h-1v-3h-1v3h-1v-1h-1v1h-1v1h-1v-2h-2v9h-1v-9h-1v1h-1v-1h-2v1h-2v-1h-1v2h-3v-3h-1v2h-4v-2h-1v1h-1v7h-1v-8h-1v3h-1v-2h-2v1h-1v1h-1v-1h-1v-1h-3v1h-1v2h-1v-3h-1v1h-1v1h-1v-1h-3v-1h-1v2h-1v-1h-1v2h-2v-3h-1v5h-1v-4h-1v-1h-1v1h-2v-1h-2v1h-1v3h-1v-2h-1v-1h-1v2h-1v-3h-1v-1h-1v3h-1v-2h-1v1h-1v1h-1v-1h-1v-2h-1v4h-1v-3h-1v1h-1v-2h-1v1h-2v3h-1v-2h-2v-1h-2v-1h-1v2h-2v2h-1v-3h-1v2h-1v2h-1v-4h-1v1h-1v-1h-1v-1h-2v3h-1v2h-1v-4h-1v1h-2v-2h-1v3h-1v-1h-1v-1h-1v1h-1v-1h-1v3h-1v-2h-1v-1h-1v3h-1v-4h-1v2h-1v3h-1v-4h-1v-1h-2v1h-1v3h-1v-1h-1v-2h-1v2h-2v-3h-1v2h-1v-1h-3v2h-1v1h-1v-2h-2v1h-1v-2h-1v6h-1v-5h-1v-1h-2v1h-1v1h-1v-2h-2v2h-1v-1h-1v-1h-1v1h-1v3h-1v-4h-1v1h-1v-1h-1v1h-1v-1h-1v6h-1v-6h-1v1h-1v-1h-1v1h-1v1h-2v-1h-1v1h-1v-2h-1v3h-1v-2h-1v-1h-1v-1h-1v3h-1v-3h-1v5h-1v-4h-1v2h-1v-1h-1v1h-1v-1h-1v2h-1v-3h-1v-1h-1v3h-1v-2h-1v-1h-1v1h-1v1h-2v1h-1v-2h-2v1h-1v-1h-1v3h-1v-3h-1v3h-1v-2h-2v-1h-2v1h-1v-1h-1v1h-2v1h-1v-2h-1v1h-1v-1h-1v2h-1v-1h-2v1h-1v-3h-2v2h-2v4h-1v-6h-2v2h-1v1h-2v-2h-1v1h-2v-1h-2v1h-1v-1h-1v2h-2v-1h-1v1h-1v-1h-1v6h-1v-6h-1v-2h-1v1h-1v1h-3v1h-1v-2h-4v1h-1v-2h-1v1h-1v1h-2v2h-1v-2h-1v-1h-1v1h-1v-2h-1v1h-1v1h-1v1h-1v-2h-1v1h-1v-1h-1v-1h-2v2h-1v-1h-2v1h-1v-1h-1v7h-1v-7h-2v2h-1v-2h-2v1h-1v-2h-1v1h-1v-1h-1v2h-1v-2h-1v2h-2v1h-1v-2h-1v1h-1v-1h-1v2h-1v-1h-1v2h-1v-2h-1v1h-1v-2h-3v1h-3v-1h-1v2h-1v-2h-1v2h-1v-1h-1v1h-1v-3h-1v1h-2v-1h-1v1h-3v1h-1v-1h-1v1h-1v-2h-1v3h-1v-2h-3v3h-1v-1h-1v-2h-2v-1h-1v4h-1v-4h-1v2h-1v1h-1v-1h-2v1h-1v-2h-2v9h-1v-7h-2v-1h-1v-1h-1v2h-1v-1h-1v-1h-1v2h-1v-2h-2v1h-1v-2h-1v1h-1v-1h-1v1h-2v2h-1v-2h-1v3h-1v-2h-1v-2h-1v2h-1v-1h-1v2h-1v-2h-1v2h-1v-1h-1v-1h-1v1h-1v-1h-1v2h-1v-2h-1v1h-1v-2h-1v3h-1v-2h-1v3h-2v-2h-1v-1h-1v9h-1v-8h-2v-1h-1v1h-1v1h-1v-3h-1v2h-1v1h-2v-1h-1v1h-1v-1h-1v-1h-2v1h-1v-1h-1v1h-1v1h-1v-2h-1v1h-1v-1h-1v1h-2v-1h-1v2h-1v-1h-1v-1h-1v-1h-1v9h-1v-9h-1v3h-1v-2h-2v1h-1v-1h-1v1h-1v1h-1v-1h-1v-1h-3v1h-1v1h-2v-2h-3v1h-1v-1h-2v4h-1v-4h-1v1h-1v-1h-1v3h-1v-4h-1v1h-1v1h-2v6h-1v-6h-1v-1h-3v1h-1v1h-1v-2h-1v3h-1v-1h-1v-2h-1v2h-1v-1h-1v-1h-1v1h-3v1h-1v-1h-1v1h-1v-2h-1v-1h-1v4h-1v-2h-1v2h-1v-3h-1v1h-1v-2h-1v1h-1v8h-1v-6h-1v-1h-1v1h-1v-2h-1v1h-1v-1h-1v-1h-1v2h-1v-1h-2v-1h-1v3h-1v-2h-1v-1h-1v2h-1v3h-1v-5h-1v5h-1v-2h-1v-1h-1v-1h-1v1h-1v-2h-1v2h-3v2h-1v-3h-1v2h-1v-2h-1v3h-1v-1h-1v-1h-1v8h-1v-10h-1v3h-2v6h-1v-8h-1v1h-1v1h-1v-3h-1v1h-2v1h-1v-2h-1v1h-1v3h-1v-3h-1v-1h-1v1h-1v1h-1v2h-1v-1h-1v-1h-1v-1h-1v-1h-1v2h-1v1h-1v-1h-2v-1h-2v1h-1v8h-1v-6h-1v-3h-4v1h-2v1h-1v-1h-1v3h-1v-4h-1v2h-1v-2h-1v-1h-1v1h-1v1h-3v1h-1v1h-1v-1h-1v-3h-2v2h-2v8h-1v-9h-3v-1h-1v3h-1v-2h-3v2h-1v-4h-1v2h-1v1h-1v1h-1v-1h-1v1h-1v-3h-1v2h-1v1h-1v-2h-1v1h-1v3h-1v-3h-2v-1h-2v2h-1v-1h-2v-1h-2v1h-2v-1h-1v-1h-1v2h-2v-1h-1v4h-1v-4h-1v2h-1v-3h-1v4h-1v-4h-1v9h-1v-7h-2v1h-1v-1h-1v2h-1v-4h-1v1h-1v1h-1v3h-1v-2h-2v-3h-1v4h-1v-1h-1v-1h-3v1h-1v-2h-1v-1h-1v-1h-1v3h-1v-1h-1v2h-1v-2h-2v1h-3v1h-1v-1h-1v-1h-2v1h-2v-1h-1v1h-2v1h-2v-2h-1v4h-1v-4h-1v2h-1v-1h-1v1h-1v-1h-3v-1h-2v-1h-1v2h-4v-1h-1v2h-2v-1h-2v-1h-1v2h-2v-2h-2v2h-1v-2h-2v2h-1v-1h-1v-1h-1v2h-1v-2h-2v1h-1v-2h-1v3h-2v-3h-1v5h-1v-3h-1v2h-1v-1h-1v-1h-1v-1h-2v9h-1v-7h-1v-1h-2v-2h-1v1h-1v1h-1v2h-1v-3h-1v1h-2v1h-1v-1h-2v-1h-8v1h-1v-1h-1v1h-1v1h-1v-1h-1v1h-1v-1h-2v-1h-1v2h-2v-2h-1v2h-1v-1h-1v-1h-1v1h-3v-1h-1v1h-3v-2h-1v2h-1v2h-1v1h-1v-5h-1v3h-1v-1h-2v1h-1v-2h-1v1h-2v-1h-1v9h-1v-7h-1v-1h-4v1h-1v-2h-1v2h-1v-2h-2v1h-3v1h-1v-2h-1v1h-1v2h-1v-3h-1v2h-2v-2h-1v2h-1v1h-1v-2h-1v-2h-1v3h-1v-1h-1v-1h-1v-2h-1v4h-1v-1h-3v-1h-1v1h-3v1h-1v-2h-1v1h-1v1h-1v1h-1v-3h-1v1h-1v1h-1v-1h-1v-1h-1v1h-1v1h-1v-2h-1v2h-1v-1h-1v1h-1v-1h-1v-1h-1v3h-1v-3h-1v1h-1v-2h-1v1h-1v1h-1v-1h-1v2h-1v-2h-1v3h-1v-3h-1v1h-1v-1h-1v1h-2v-1h-1v-1h-1v2h-1v2h-1v6h-1v-7h-1v-2h-1v4h-1v-1h-1v-2h-1v-2h-2v2h-1v-2h-1v2h-1v2h-1v-3h-1v2h-1v-1h-2v-1h-1v2h-1v-1h-1v-1h-1v1h-1v2h-1v-1h-2v-1h-2v-1h-1v2h-1v-1h-1v-2h-1v3h-1v-1h-1v-2h-1v2h-1v1h-1v-1h-1v1h-1v-2h-1v2h-1v-3h-1v9h-1v-6h-1v1h-1v-2h-1v-1h-1v1h-1v-1h-2v1h-1v-1h-1v1h-1v-1h-1v1h-2v-1h-1v1h-1v-3h-1v3h-1v-1h-1v1h-2v1h-2v-3h-1v2h-1v-2h-1v2h-1v-2h-1v10h-1v-9h-1v4h-1v-4h-1v1h-3v-1h-1v1h-1v-1h-1v2h-1v-3h-1v1h-1v1h-1v-1h-1v8h-1v-5h-1v4h-2v-7h-3v-1h-1v1h-1v1h-1v-1h-2v4h-1v-4h-1v1h-2v-1h-1v2h-2v-1h-2v-1h-1v2h-1v-1h-1v-1h-3v1h-3v-1h-1v1h-1v-1h-2v-1h-1v2h-2v2h-1v-3h-3v1h-1v-1h-1v1h-3v6h-1v-6h-1v1h-1v-1h-1v-1h-2v1h-1v1h-1v2h-1v-4h-1v2h-1v-1h-3v-1h-5v1h-1v-1h-2v-1h-2v1h-2v-1h-1v1h-1v1h-2v-1h-1v5h-1v-5h-1v1h-1v-2h-2v1h-1v-1h-1v2h-1v-1h-3v3h-1v-2h-1v-1h-2v1h-2v1h-1v-2h-1v1h-1v-1h-1v-1h-1v1h-2v2h-1v-1h-1v2h-1v-3h-2v-1h-1v1h-1v2h-1v-1h-1v-1h-1v1h-2v-1h-2v2h-1v-3h-1v3h-1v2h-1v-3h-1v-1h-3v8h-1v-5h-1v-2h-1v1h-1v-1h-1v2h-1v-2h-1v-1h-2v1h-1v1h-1v-2h-1v1h-1v-1h-3v7h-1v-7h-1v1h-1v-1h-1v-1h-1v-1h-1v5h-2v-2h-1v1h-1v-1h-1v-1h-1v3h-1v-2h-1v1h-1v-1h-1v-1h-1v1h-1v7h-1v-7h-1v2h-1v-2h-1v-1h-1v1h-1v1h-1v-2h-2v1h-2z"/>
<path d="M584 565h1v2h1v1h1v-2h1v-3h1v4h1v-2h1v1h2v1h1v1h1v-2h1v-1h2v1h1v1h1v-1h3v1h1v1h1v-2h1v2h1v-1h1v-2h2v-1h1v4h1v-2h1v-1h1v3h1v-1h1v-1h1v-1h2v-1h2v1h1v2h2v-2h1v3h1v-3h1v1h3v-1h3v2h2v-1h4v1h2v-1h1v1h1v-1h1v1h2v-1h1v1h1v-1h1v1h1v-2h1v3h1v-2h1v1h3v-3h1v1h1v1h2v2h1v-3h1v2h1v-2h1v1h1v-1h1v1h1v-1h1v1h2v-4h1v4h1v-1h1v3h1v-2h1v1h1v1h1v-2h1v-2h1v1h1v2h2v-3h1v4h1v-4h1v1h2v1h1v2h1v-1h1v-2h1v1h4v1h2v-1h3v2h1v-3h2v2h2v-2h1v2h1v-1h1v1h1v-1h2v1h1v2h1v-3h1v1h2v1h1v-2h2v2h2v-1h1v-1h1v1h1v-1h3v-3h1v4h2v1h1v-1h1v-1h1v1h1v-2h1v2h1v-1h2v-2h1v1h1v2h2v-2h2v3h1v-3h1v-2h1v3h1v1h1v-3h1v1h2v1h1v1h1v-1h1v2h2v-2h1v-1h1v3h1v-2h3v-1h1v2h1v-1h1v-1h1v-1h1v2h2v-2h1v1h1v2h2v-2h1v2h3v1h1v-2h2v-1h1v2h1v-2h1v2h3v-2h2v1h1v-1h1v1h1v-1h2v-2h1v4h2v-3h1v3h1v-1h1v1h1v-1h3v1h1v-1h1v-1h1v3h1v-2h1v2h1v-3h1v3h2v-1h2v-1h3v1h3v-2h2v2h1v-2h1v2h1v-1h1v1h1v1h1v-1h2v1h1v-5h1v3h1v-2h2v1h1v3h1v-1h1v-3h1v4h1v-4h1v1h1v2h1v-2h1v2h3v-2h1v3h1v-3h1v-1h1v2h2v-1h1v2h1v-1h1v-1h2v1h1v-2h1v-1h1v4h1v-1h1v2h1v-5h1v3h1v-1h2v2h1v-1h1v1h1v1h1v-2h2v2h1v-2h1v2h1v-1h1v-1h2v1h1v-1h2v-2h1v1h1v-1h1v2h1v1h3v-2h1v-1h2v3h2v-1h2v-2h1v2h1v1h3v-1h1v1h2v-1h1v1h2v-1h1v1h1v-1h1v1h2v-2h1v2h2v-2h1v1h1v-1h2v2h1v-2h1v3h1v-2h1v1h1v-3h1v2h1v1h1v-1h1v2h1v-3h2v2h1v-1h1v1h4v-2h1v2h1v1h1v-1h1v-3h1v4h1v-5h1v1h1v3h2v-1h1v-1h1v1h1v-3h1v3h1v1h1v-1h3v2h2v1h1v-3h2v-1h1v3h1v-5h1v3h3v-1h1v3h1v-5h1v2h1v2h3v1h1v-1h3v-1h1v1h1v1h1v1h1v-6h1v3h2v-3h1v4h2v-1h3v-1h1v-2h1v4h1v-1h1v1h1v1h1v-2h2v1h2v-1h2v-1h1v1h1v1h1v-1h2v2h1v-1h1v-2h1v2h1v-1h1v1h1v-1h1v1h1v1h1v-3h1v1h1v1h1v-1h1v-1h1v1h1v1h1v1h1v-2h2v-2h1v2h1v-2h1v3h1v1h1v-2h1v-1h1v2h1v-1h3v1h2v-2h1v1h2v-1h1v1h1v1h2v-3h1v3h2v-2h1v1h1v1h1v-1h1v1h1v-3h1v2h1v1h1v-1h2v-1h1v1h1v-2h1v3h3v-1h1v2h2v-2h2v1h1v1h1v-1h1v1h1v-2h1v1h1v-1h2v1h1v1h1v-1h1v-1h1v-1h1v1h1v1h2v-1h1v-1h1v1h3v2h1v-1h1v-2h1v-1h1v4h1v-3h1v2h1v1h1v-3h1v2h3v-1h1v1h1v-1h1v-1h1v1h1v1h1v-3h1v3h1v-1h1v-1h1v2h3v2h1v-3h1v1h1v-2h1v3h1v-3h1v2h1v-2h1v2h2v1h2v-3h1v1h2v2h1v-1h1v-2h1v3h1v-2h2v-1h1v-2h1v2h1v1h1v1h1v-1h1v1h3v-2h1v-1h1v2h2v1h1v-2h1v1h1v-1h1v1h1v1h1v1h1v-2h2v1h6v-2h1v1h2v-1h1v1h2v1h2v1h1v-1h1v1h1v-1h1v-1h1v-1h1v2h1v-2h1v3h1v-2h2v1h1v1h1v-2h2v1h1v-1h1v-1h1v1h1v1h2v-1h1v-1h1v1h3v1h2v1h1v-1h1v-1h1v-2h1v1h1v3h1v-3h2v2h1v1h1v-2h1v-1h2v2h2v-1h1v-1h2v2h1v-2h1v1h2v-2h1v1h1v-1h1v2h2v-4h1v5h1v-2h1v-1h1v2h2v1h2v-3h1v2h1v2h1v-1h1v-1h2v-3h1v4h1v-1h1v1h3v1h1v-1h2v-1h1v-1h1v-1h1v2h1v-2h1v2h2v1h1v-1h1v1h1v-1h1v2h1v-1h1v-1h2v-1h1v1h2v1h1v-2h1v-2h1v4h2v-2h1v1h1v-1h1v1h1v-1h1v1h1v2h1v-1h1v-4h1v2h1v2h1v1h1v-2h1v-2h1v1h1v2h1v-1h1v1h1v-1h2v-1h1v2h1v-1h2v-1h1v1h2v-3h1v4h1v-1h1v-2h1v3h3v-1h3v-4h1v4h1v1h1v-1h2v-1h3v2h1v-1h3v1h1v1h1v-2h1v-4h1v4h1v1h2v-2h3v1h1v1h1v-1h1v1h1v-2h1v1h1v-1h1v2h1v-4h1v3h2v-2h1v1h1v1h1v1h1v-2h1v1h1v-1h1v2h1v-1h1v-2h1v3h4v-1h2v1h2v-2h1v2h1v-1h1v2h1v-3h4v1h1v-1h1v3h1v-2h2v-1h1v1h2v-1h1v2h1v1h1v-3h1v2h1v-2h1v2h1v-1h2v1h2v2h1v-1h2v-4h1v2h2v1h1v-2h2v2h1v-4h1v3h1v-1h1v1h1v1h3v-2h1v1h1v1h1v-2h1v2h1v-2h1v2h4v-2h3v2h2v-1h1v-1h1v1h1v1h1v-2h1v1h1v-1h2v1h1v1h1v1h1v-2h1v1h1v-1h1v2h1v-2h2v-1h1v3h1v-1h1v1h1v-2h1v-1h2v2h1v-2h2v1h1v1h1v-1h1v1h1v1h1v-3h1v1h1v-1h1v1h1v-2h1v2h1v-3h1v4h1v1h1v-2h1v-1h1v-1h1v2h1v-2h1v1h1v1h2v-2h1v3h1v-1h1v1h1v-1h1v-1h1v1h2v1h2v-1h5v-1h1v2h1v-2h1v2h4v-3h1v3h1v-1h1v1h2v-2h1v2h1v-1h2v2h1v-3h1v2h2v-3h1v4h1v-1h1v-2h1v1h1v-2h1v3h2v-2h2v1h3v-1h1v3h1v-1h3v-1h1v-2h1v3h3v-3h1v3h1v-2h1v2h1v-2h1v1h1v1h1v-2h1v2h1v-2h3v1h2v-1h1v1h3v-1h1v1h1v-1h3v1h1v1h1v-2h1v3h1v-1h2v1h1v-3h1v-2h1v2h1v2h1v-1h1v-2h1v1h2v-1h1v4h1v-2h1v1h3v-1h1v3h1v-4h1v1h1v1h1v1h1v-1h1v-3h1v2h1v2h1v-2h1v-3h1v4h1v-3h1v2h1v-1h1v-1h1v2h1v1h2v1h2v-2h1v-1h1v2h2v-1h1v-1h1v2h2v-2h1v1h1v2h1v-2h3v1h1v-2h1v2h1v-2h1v2h2v-1h1v-2h1v2h1v1h1v-2h1v-1h1v2h1v-1h1v2h1v-1h1v1h1v1h1v-1h1v-1h1v-1h1v3h3v-7h1v4h1v2h1v-3h1v2h1v1h1v-1h1v1h1v2h1v-4h1v1h1v-1h2v2h2v1h1v-1h1v-1h3v1h1v-4h1v4h1v-1h2v-1h1v1h3v2h2v-1h1v-2h1v-1h1v4h1v-3h1v2h2v1h1v-4h1v3h1v-1h2v1h1v-2h1v3h1v-3h1v3h1v-2h1v-1h1v1h1v1h1v1h1v-2h2v2h1v-2h1v-1h2v1h1v-1h1v3h1v-1h1v-1h2v1h1v-1h1v-1h1v2h2v1h1v-1h2v-1h1v1h1v-1h1v1h1v-1h1v-1h1v-1h1v1h1v1h1v1h1v1h1v-2h1v-2h1v3h1v-1h1v-1h1v2h2v-2h1v1h2v1h1v-2h1v2h4v-3h1v1h1v2h2v-1h1v1h1v-1h2v2h1v-1h1v-2h2v2h1v-3h1v1h1v2h1v-2h1v2h1v1h1v-3h1v2h1v-2h1v3h2v-1h1v-1h1v-2h1v3h2v1h1v-1h3v-4h1v4h1v-2h1v2h1v1h1v-1h1v-4h1v2h1v-1h1v3h1v1h1v-3h1v3h1v-3h1v1h1v-1h2v1h1v1h2v-2h1v1h3v2h1v-2h1v-1h1v1h3v-1h2v1h1v1h2v-1h2v2h1v-1h1v-1h3v-1h1v2h2v-1h1v-1h1v2h1v-1h1v1h3v-2h1v3h2v-2h1v1h1v-3h1v2h2v1h2v-1h1v1h2v-1h2v-1h1v2h2v-3h1v3h1v-1h1v1h1v-1h1v1h3v1h1v-2h1v2h1v-1h1v-1h2v-2h1v1h1v1h1v-1h2v2h1v-2h1v-2h2v3h1v-3h1v3h1v-1h1v1h1v1h1v-2h1v2h1v-2h1v2h2v-1h1v1h1v-2h2v1h1v-2h1v2h1v1h1v1h1v-3h1v3h1v-1h1v-1h1v2h1v-2h1v-1h1v1h1v1h3v-1h1v1h1v-1h1v1h1v-1h3v1h1v-2h1V578h-1v-2h-1v-1h-1v1h-1v2h-1v-2h-1v2h-1v-2h-1v4h-1v-2h-1v-1h-1v2h-1v-2h-1v-2h-1v1h-1v2h-1v-3h-1v3h-1v-2h-2v2h-3v12h-1v-12h-1v-1h-1v-1h-1v2h-1v-3h-1v1h-1v15h-1v-14h-1v10h-1v1h-1v-12h-1v1h-2v-1h-1v1h-1v-1h-3v-1h-1v1h-1v1h-1v-2h-2v2h-1v2h-1v-3h-1v3h-1v-2h-1v-1h-1v2h-1v-1h-1v2h-1v-2h-2v-1h-1v-1h-1v3h-1v1h-1v-3h-1v2h-2v-1h-1v-1h-1v2h-1v1h-1v-2h-1v1h-1v-2h-2v1h-1v2h-1v-1h-1v-1h-2v1h-1v-2h-1v3h-1v-2h-1v-1h-1v3h-1v-1h-2v-1h-1v11h-1v-11h-1v1h-1v-2h-1v-1h-1v2h-1v-1h-1v1h-2v1h-1v1h-1v-1h-1v-2h-2v1h-1v3h-1v-2h-1v-1h-2v1h-1v-2h-1v1h-2v12h-1v-10h-1v-3h-1v1h-1v1h-2v-1h-1v1h-1v2h-1v-2h-1v-1h-1v1h-1v-1h-1v2h-1v-3h-2v2h-1v-3h-1v2h-1v1h-1v-1h-1v-1h-1v1h-1v3h-1v-4h-1v3h-1v-3h-1v2h-1v-2h-1v2h-1v1h-1v-2h-1v1h-1v-1h-3v2h-1v-1h-2v-2h-1v1h-1v-1h-1v1h-2v2h-1v-3h-1v-1h-1v1h-1v3h-1v-1h-2v-1h-1v1h-2v-2h-1v3h-1v-1h-1v-1h-1v1h-1v-2h-1v3h-1v-3h-1v2h-1v-2h-2v3h-1v9h-1v-10h-1v-2h-2v2h-1v-1h-1v2h-1v-1h-2v-2h-1v2h-1v-1h-1v1h-1v-2h-1v2h-1v-2h-1v1h-1v-1h-3v2h-2v-2h-1v1h-5v2h-1v-2h-1v3h-1v-2h-1v-2h-3v2h-2v-3h-1v1h-1v1h-3v1h-1v-2h-1v1h-2v1h-1v1h-1v-1h-3v-1h-1v2h-1v-1h-1v-1h-1v-1h-1v-1h-1v4h-1v-2h-4v2h-1v-3h-1v1h-1v1h-2v2h-1v-3h-1v-2h-1v2h-1v1h-1v-2h-1v1h-1v1h-2v2h-1v-1h-1v-1h-1v-3h-1v1h-1v2h-1v-2h-1v2h-2v-1h-1v5h-1v8h-1v-12h-1v-1h-1v-1h-2v3h-1v-1h-1v-1h-1v1h-1v2h-1v-3h-1v1h-1v-1h-2v1h-1v-2h-2v1h-1v11h-1v-11h-2v1h-1v-1h-1v-2h-1v2h-1v1h-1v-2h-1v1h-1v1h-1v-2h-1v4h-1v-1h-1v-1h-1v-2h-1v4h-1v-2h-1v-1h-5v2h-1v-1h-2v-2h-1v2h-1v-1h-1v2h-1v-1h-1v-2h-1v1h-1v3h-1v-4h-1v3h-1v-1h-1v-1h-1v1h-1v1h-1v-1h-1v-4h-1v7h-1v-4h-1v1h-1v-1h-1v-1h-2v2h-1v-2h-1v3h-1v1h-1v-3h-2v-1h-3v1h-2v1h-1v-1h-2v-2h-1v3h-1v-1h-1v1h-1v-1h-1v1h-1v-2h-1v1h-4v-1h-2v2h-1v-2h-2v-1h-1v3h-1v1h-1v1h-1v-1h-1v-3h-1v2h-1v1h-1v-2h-2v-1h-2v2h-2v2h-1v-3h-1v-1h-2v1h-1v-1h-1v1h-1v5h-1v-3h-1v-3h-1v3h-1v-3h-1v1h-2v1h-2v-1h-1v-1h-2v1h-1v-2h-1v5h-1v1h-1v-4h-1v-1h-1v1h-1v1h-1v-2h-1v3h-1v-2h-2v-1h-2v1h-1v-1h-1v-1h-1v2h-1v-1h-1v-1h-1v1h-2v2h-3v-2h-2v2h-1v-1h-2v3h-1v-3h-1v1h-3v-2h-1v-1h-2v2h-2v-1h-1v2h-1v-2h-2v4h-1v-4h-1v4h-1v-3h-1v1h-1v-1h-1v1h-1v-2h-1v1h-1v-1h-1v2h-2v-2h-1v2h-1v-4h-1v2h-1v2h-1v2h-1v-4h-1v4h-1v-2h-1v-1h-1v1h-1v-1h-1v-1h-2v1h-2v-1h-1v-1h-1v1h-2v1h-1v-1h-2v3h-1v-2h-1v-1h-1v3h-1v-2h-1v1h-1v-1h-1v1h-1v-1h-1v1h-1v-1h-1v14h-1v-15h-1v2h-1v-1h-4v-1h-1v-1h-1v2h-1v1h-2v-2h-1v2h-1v-3h-1v2h-1v-1h-1v1h-1v-2h-1v1h-2v-1h-1v2h-1v1h-1v1h-1v-3h-2v1h-1v1h-2v-2h-1v4h-1v-2h-2v-3h-1v14h-1v-11h-1v-1h-2v-1h-1v-1h-1v3h-2v-1h-2v-2h-1v3h-1v-1h-4v-1h-1v1h-1v1h-1v-3h-1v3h-2v-1h-1v-1h-1v1h-1v-1h-1v-1h-1v1h-2v2h-1v-1h-2v1h-1v-1h-1v1h-1v-2h-1v2h-1v-1h-2v-1h-2v1h-1v-1h-1v2h-2v-1h-1v2h-1v-1h-1v-1h-1v1h-1v-1h-1v1h-3v-1h-1v-1h-1v3h-1v-1h-1v-1h-1v1h-1v1h-1v-4h-1v1h-1v2h-1v11h-1v-13h-1v1h-1v-1h-2v1h-1v-1h-1v2h-2v1h-1v-2h-1v1h-1v-1h-2v-1h-1v-1h-1v1h-1v3h-1v-2h-1v3h-1v-4h-1v-1h-1v3h-1v-1h-1v1h-3v-1h-1v-2h-1v4h-1v-3h-1v1h-1v-1h-2v2h-1v-1h-1v-1h-1v2h-1v-2h-1v3h-1v-2h-1v11h-1v-13h-1v4h-1v-2h-1v-1h-1v1h-2v3h-1v-4h-1v3h-1v-3h-1v2h-1v-1h-1v-2h-1v2h-1v2h-1v1h-1v-3h-1v-2h-1v5h-1v-3h-2v3h-1v-3h-2v1h-1v-1h-3v12h-1v-13h-1v1h-1v2h-1v-2h-1v-1h-1v2h-1v-1h-1v1h-1v-3h-3v1h-1v1h-2v-1h-1v2h-1v2h-2v-4h-1v-1h-1v3h-1v2h-1v-3h-2v1h-1v-2h-1v2h-1v-2h-1v2h-1v-1h-1v13h-1v-13h-1v2h-1v-2h-2v1h-1v-2h-2v4h-1v-3h-1v1h-1v-2h-1v1h-1v1h-2v-1h-2v2h-1v-3h-2v1h-3v-2h-1v6h-1v-5h-1v4h-1v-4h-1v2h-1v11h-1v-13h-2v4h-1v-4h-1v3h-1v-3h-2v2h-1v-1h-1v1h-2v1h-1v-3h-2v1h-1v-1h-1v1h-1v2h-1v-3h-1v2h-1v-1h-1v1h-1v1h-1v-2h-1v-1h-1v1h-1v-2h-1v2h-1v1h-1v-1h-2v-1h-2v13h-1v-12h-2v-1h-1v14h-1v-11h-1v-3h-1v1h-2v1h-1v-1h-3v-1h-1v3h-1v-2h-1v2h-2v-1h-1v-1h-3v-1h-1v1h-1v-1h-1v1h-3v2h-1v-3h-1v2h-1v13h-1v-12h-2v-2h-1v1h-1v-1h-1v1h-2v-1h-2v1h-4v-2h-1v3h-1v-3h-3v4h-1v-3h-2v1h-1v-1h-1v-1h-1v1h-1v11h-1v-9h-1v-1h-1v-2h-1v1h-1v1h-1v-2h-1v2h-3v-1h-2v2h-1v-4h-1v1h-1v2h-1v-1h-1v-3h-1v2h-1v2h-2v-1h-2v1h-1v-1h-2v1h-2v-2h-1v1h-1v1h-1v-2h-1v-1h-1v1h-3v3h-1v-2h-1v-1h-1v3h-1v-2h-1v1h-1v-1h-1v-2h-1v13h-1v-12h-1v1h-2v-1h-1v2h-1v-2h-1v-2h-1v2h-1v1h-3v2h-1v-1h-1v-1h-2v3h-1v-3h-1v-2h-1v2h-1v-1h-2v1h-1v3h-1v-3h-1v1h-1v-2h-1v2h-1v-2h-2v-1h-1v2h-1v-1h-1v1h-2v-1h-1v1h-4v-1h-2v-1h-1v3h-1v1h-1v-1h-1v-1h-2v1h-1v-1h-1v-2h-1v4h-2v-2h-1v1h-1v-1h-2v3h-1v-3h-2v-1h-1v1h-2v1h-2v-2h-1v1h-1v-1h-1v1h-1v2h-1v-2h-1v-1h-1v1h-1v1h-1v-1h-3v4h-1v-4h-1v1h-2v2h-1v-2h-1v1h-1v-2h-1v1h-1v1h-1v-4h-1v16h-1v-13h-1v-1h-1v-1h-1v1h-1v2h-1v-2h-1v1h-2v-2h-2v1h-1v1h-1v1h-1v-1h-2v-2h-1v1h-1v1h-1v-2h-1v4h-1v-3h-1v-1h-1v3h-1v-4h-1v2h-1v-1h-1v2h-1v-3h-1v3h-1v-2h-1v3h-1v-1h-1v-1h-1v-1h-1v2h-1v-1h-3v1h-1v-1h-1v2h-1v1h-1v-2h-1v1h-1v-1h-3v-2h-1v1h-1v2h-1v-1h-1v-1h-2v1h-1v-2h-1v-1h-1v13h-1v-11h-1v-1h-1v3h-1v-2h-1v1h-1v-2h-1v2h-1v-1h-2v-2h-1v2h-1v2h-1v-3h-3v2h-1v-2h-2v1h-1v-1h-1v1h-2v-1h-2v4h-1v-3h-2v1h-2v-2h-1v3h-1v-1h-1v-2h-1v4h-1v-3h-1v-1h-1v1h-1v1h-1v-1h-1v1h-1v-1h-1v-1h-2v5h-1v-4h-2v1h-2v-2h-1v2h-1v-1h-1v1h-1v-2h-1v1h-1v3h-2v-4h-1v1h-1v1h-2v-2h-1v3h-1v-1h-1v-2h-1v1h-1v1h-1v-2h-1v2h-2v-1h-1v2h-1v-1h-1v-2h-1v1h-1v12h-1v-11h-2v-1h-1v-2h-1v2h-1v-2h-1v1h-1v2h-2v1h-1v-1h-1v-1h-1v-2h-1v1h-1v1h-1v-1h-1v-1h-1v1h-1v1h-1v1h-2v2h-1v-3h-1v1h-1v-3h-1v3h-2v1h-1v-2h-1v-1h-2v2h-2v-2h-1v3h-1v-1h-1v-2h-1v3h-1v-4h-1v15h-1v-13h-1v2h-1v-3h-1v1h-3v-1h-1v1h-1v-2h-1v3h-1v-1h-1v1h-1v2h-1v-3h-1v1h-2v-2h-3v4h-1v-3h-3v-1h-1v2h-1v-1h-2v13h-1v-14h-1v1h-1v-2h-1v2h-1v2h-1v-3h-1v1h-1v1h-1v-2h-1v2h-1v-1h-2v-1h-1v1h-1v12h-1v-12h-1v10h-1v1h-1v-9h-1v1h-1v-4h-1v3h-1v-3h-1v3h-1v-3h-5v2h-2v-1h-1v1h-1v-1h-4v-1h-1v3h-1v-3h-4v-1h-1v2h-1v-1h-4v-1h-1v2h-1v-1h-1v4h-1v-2h-1v1h-1v-2h-2v1h-1v-1h-1v-1h-1v14h-1v-14h-2v2h-1v-1h-2v3h-1v-4h-1v2h-1v-3h-1v3h-1v-1h-1v1h-1v1h-1v-3h-1v2h-3v-2h-1v2h-1v-1h-2v-1h-1v2h-2v-2h-2v2h-1v-2h-3v2h-1v-1h-1v1h-1v-1h-2v-1h-1v3h-1v-2h-4v1h-1v2h-1v-2h-1v-2h-1v3h-1v-2h-1v1h-1v-1h-1v2h-1v-2h-1v1h-1v-1h-1v1h-1v-1h-1v1h-1v-3h-1v4h-1v-3h-1v2h-1v-2h-1v2h-1v-1h-1v1h-1v-2h-1v1h-2v2h-1v-3h-2v1h-2v1h-3v-2h-1v15h-1v-14h-6v-1h-1v2h-1v-1h-2v2h-1v-2h-1v1h-1v-1h-1v-2h-1v15h-1v-14h-2v1h-2v-1h-1v1h-1v-1h-1v2h-1v-4h-1v5h-1v3h-1v-6h-1v-1h-1v3h-1v-1h-1v2h-1v-3h-1v15h-1v-15h-2v1h-2v-2h-1v3h-2v-3h-1v1h-1v1h-1z"/>
<path d="M584 621h1v-2h1v1h1v1h1v-2h1v3h1v-2h1v-2h1v-1h1v2h1v3h1v-1h1v-1h1v2h1v-1h1v-1h1v-1h2v1h3v2h1v-1h1v-1h1v1h2v-1h1v-2h1v2h1v2h1v-1h2v-1h2v2h1v-2h1v-1h1v1h3v1h4v1h1v-3h2v2h1v-1h1v-1h1v2h3v-1h1v2h1v-2h1v1h2v1h2v-3h2v2h1v-1h1v2h1v-1h1v1h1v-3h1v1h1v1h1v-1h2v2h1v-1h2v-1h2v2h1v-2h2v-1h1v3h1v-2h1v2h1v-2h1v1h1v-1h1v1h1v-1h1v-1h1v1h1v-1h1v-1h1v3h1v-3h1v2h1v3h1v-2h1v1h1v-2h1v-1h1v1h1v1h3v2h2v-2h3v1h1v-1h1v-1h1v-1h1v2h2v1h2v1h1v-1h1v-2h1v1h5v2h1v-2h1v-1h1v-1h1v2h2v-2h1v1h1v1h2v1h1v1h1v-2h4v-2h1v1h2v2h1v-1h1v-1h1v2h2v-1h1v-1h1v-2h1v3h1v-4h1v4h1v-1h1v-1h1v1h1v2h1v-2h2v1h1v-1h1v3h1v-3h1v3h1v-1h1v-2h2v1h3v1h2v-1h1v-1h2v2h1v-2h1v-1h1v1h1v-1h1v3h1v-1h1v-1h2v1h1v-2h1v1h1v-1h1v2h1v-1h3v2h2v-2h1v-1h1v1h1v1h3v-1h1v2h3v-1h1v-2h1v1h2v-1h2v3h1v-3h1v1h1v1h1v-2h2v-1h1v3h1v1h1v-1h1v1h1v-2h1v1h1v1h1v-1h4v1h1v-1h1v-1h1v-1h1v2h2v1h1v-1h2v-1h1v-2h1v4h1v-1h2v-1h1v1h4v-2h1v2h2v-2h1v3h1v-1h1v-3h1v4h1v-2h1v1h2v1h1v-2h1v1h1v-1h3v1h4v-1h1v2h1v1h1v-3h1v-2h1v4h1v-3h2v3h1v-3h1v1h1v1h1v-2h4v3h1v-2h1v1h2v-2h1v1h2v1h2v-2h2v-2h1v5h1v-3h1v1h2v2h2v-2h2v2h2v-3h1v2h4v-1h1v-1h1v2h1v1h1v-1h4v1h2v-1h1v-3h1v3h1v-1h1v1h1v-1h1v2h1v-3h1v2h2v-1h1v1h1v1h1v-1h1v-1h1v1h1v-2h1v4h1v-3h1v2h1v-2h1v1h1v-1h1v2h1v-4h1v1h1v-2h1v3h1v1h2v-3h1v4h1v-1h1v-1h1v1h1v-1h2v2h1v-5h1v5h1v-4h1v2h1v2h1v-1h1v-1h1v2h1v-1h1v1h1v-3h1v2h2v-5h1v6h2v-2h3v3h1v-4h1v1h1v1h1v-1h1v1h2v1h1v-3h1v2h2v-2h1v3h2v-1h1v1h2v-2h1v1h2v1h1v-2h1v1h1v-1h1v1h1v-1h1v-1h2v1h1v2h2v-2h1v1h1v-4h1v4h1v-1h1v-1h1v3h1v-1h1v-1h1v1h1v-1h1v1h2v-1h1v2h1v-3h1v1h1v1h1v-3h1v5h1v-2h3v-2h1v3h1v-1h1v-1h2v1h2v-2h1v1h1v1h1v-3h1v1h1v2h5v-2h1v2h1v-2h1v3h1v-2h1v-1h1v-1h1v2h2v-3h1v3h1v1h1v-4h1v4h1v1h1v-2h1v1h1v-1h1v-1h1v2h1v-3h1v5h1v-3h1v1h1v-1h1v-1h1v1h1v1h2v1h1v-1h1v-1h2v1h1v-1h1v-2h2v3h1v-2h1v2h1v-2h1v1h1v2h1v-1h1v1h1v-2h1v-1h1v2h1v-1h2v2h2v-2h1v2h1v-2h1v1h1v-1h1v1h1v-2h1v-1h1v4h2v-2h2v-2h1v2h1v1h1v1h1v-1h1v-1h1v-1h1v-1h1v4h1v-2h1v-1h1v-1h1v4h1v-4h1v2h1v-2h1v3h1v1h1v-2h1v-1h1v1h1v1h1v-1h1v2h1v-2h1v2h1v-3h1v2h1v-1h1v-1h1v2h2v2h1v-3h4v2h2v-3h1v1h2v2h1v-1h1v-1h1v1h2v-1h1v1h2v-1h1v1h1v-1h1v2h1v-1h1v-2h3v2h1v-1h3v1h1v-1h3v-2h1v3h2v-2h1v2h2v1h1v-3h1v3h1v-4h1v3h2v1h1v-1h1v-1h1v2h3v-4h1v2h1v2h1v-3h2v2h3v-2h1v2h1v-1h1v2h1v-2h1v1h1v1h3v-2h1v2h1v-2h1v1h2v-2h1v2h1v-2h1v1h1v2h1v-1h1v-2h2v2h1v-4h1v4h1v-1h1v-1h2v3h2v-1h3v-1h1v1h1v-2h1v2h1v-1h1v-4h1v5h1v-1h2v2h1v-3h1v1h1v-2h1v4h1v-1h1v1h2v1h1v-4h1v2h2v-2h1v1h2v2h1v-1h2v1h1v-1h1v-2h1v2h1v-2h1v3h1v-2h1v1h1v-1h1v1h1v-1h1v1h1v-3h2v4h2v-2h3v1h2v1h1v-1h1v-1h1v2h1v-2h1v1h1v-1h1v1h3v-1h1v2h3v-1h3v2h1v-1h1v-1h1v-2h1v2h1v-3h1v4h1v-4h1v2h1v2h1v-1h1v-2h1v3h1v-1h3v-1h2v1h1v-1h1v-1h1v4h1v-3h1v1h1v1h1v-2h1v1h1v1h3v-2h1v2h1v-3h1v2h3v-2h1v3h1v-1h1v-1h1v-1h1v2h1v1h2v-1h2v1h1v-3h1v2h1v-1h2v1h4v-2h3v1h2v1h2v-1h1v1h1v-1h1v-1h1v2h1v1h1v-3h1v2h1v1h1v-2h2v-1h1v2h1v-3h1v2h1v1h1v-2h1v2h2v1h1v-5h1v4h2v1h1v-1h1v-1h1v-2h1v1h1v2h2v1h1v-1h1v2h1v-3h1v-3h1v1h1v3h1v-1h1v1h1v-2h1v1h1v2h1v-3h1v2h1v-1h1v-1h2v2h1v1h1v-1h1v1h1v1h1v-2h1v1h1v-1h1v1h1v-1h1v-3h1v2h3v1h1v-2h1v3h2v-3h2v2h1v-1h3v2h1v-1h2v-3h1v3h2v-4h1v2h3v2h2v-1h1v-3h1v2h1v1h1v2h2v-3h1v2h1v-1h1v-1h1v1h1v-1h1v2h2v-1h1v2h1v-1h1v-5h1v4h1v1h1v1h2v-3h1v1h1v1h1v-1h1v1h2v-1h2v2h1v-3h1v2h1v1h1v-1h1v-2h1v2h1v-1h1v3h1v-3h1v1h1v-2h1v2h1v-2h1v1h1v1h1v-2h1v1h1v-2h2v4h1v-2h1v2h1v-2h1v2h1v-1h2v1h1v-1h1v-3h1v3h2v-1h3v-2h1v3h1v-1h1v2h1v-3h1v2h3v-2h1v2h1v1h1v-1h1v1h1v-2h3v-3h1v4h1v-2h1v2h1v-2h1v2h1v-1h1v1h1v1h1v-2h1v2h1v-2h2v1h1v-4h1v3h2v2h1v-2h4v2h1v-2h4v2h2v-1h3v-1h2v1h1v-2h1v1h1v1h1v-1h1v1h2v-1h1v2h1v-2h2v-2h1v4h2v-1h1v-1h1v-1h1v3h1v-1h1v-2h2v2h4v-1h1v-1h2v-1h1v2h1v3h1v-5h1v4h1v-1h1v-2h1v2h1v1h1v-1h2v1h3v-5h1v3h3v2h1v-2h1v1h1v-1h1v1h6v-1h1v-1h1v2h5v-1h1v-2h1v2h1v1h1v-1h2v2h1v-3h1v2h1v-1h2v1h1v-1h1v-2h1v1h1v2h1v-1h1v-1h1v2h1v1h1v-1h1v-1h1v1h1v-1h1v1h1v-1h1v1h1v-1h1v-2h1v3h2v1h1v-1h3v-3h1v3h1v1h1v-1h1v-2h1v1h1v1h1v1h1v-1h2v-2h2v2h1v-1h2v1h3v-1h1v2h1v-2h1v1h1v-2h1v2h4v-2h2v4h1v-4h1v2h1v-1h3v1h2v-3h1v2h1v1h1v-2h2v1h1v-1h1v1h1v2h1v-1h1v1h1v-4h1v3h3v-3h1v2h1v1h3v1h1v-4h1v2h1v-1h1v1h2v-1h1v2h1v-1h1v2h1v-2h1v2h2v-1h4v1h1v1h1v-3h1v2h1v-2h2v2h1v-6h1v6h1v-1h6v-2h1v1h1v1h2v-1h1v-1h1v2h2v-1h1v1h1v-1h2v1h4v1h1v-2h2v1h1v-2h2v2h2v-2h1v2h1v-1h1v1h1v-1h1v1h1v-2h1v2h1v1h2v-1h1v-1h1v-1h1v1h1v1h1v-1h2v-1h1v-1h1v2h1v1h2v-2h1v1h1v1h1v2h1v-2h1v1h1v-3h1v2h2v1h1v-2h1v1h3v-1h1v1h1v1h1v-1h1v1h1v-1h1v-1h1v2h2v-1h2v-1h1v1h1v-1h1v1h1v1h1v-2h1v1h1v1h2v-1h1v-1h1v1h3v-1h1v1h3v-2h1v1h1v-1h2v3h1v-2h1v2h1v-3h1v2h1v1h1v-1h1v-1h2v1h1v-1h2v1h1v1h1v-2h1v1h1v-1h2v-2h1v1h1v4h1v-3h1v1h2v-2h1v3h1v-1h1v-2h1v3h2v-5h1v5h1v-4h1v3h1v-2h1v1h2v-1h1v-3h1v4h3v1h1v1h1v-2h1v2h1v-3h1v2h1v1h2v1h1v-5h1v2h2v-1h1v3h2v-2h3v-1h1v2h1v-2h1v3h1v-2h1v-2h1v3h3v1h1v-2h1V630h-2v1h-2v2h-1v-1h-1v-1h-1v1h-1v-1h-1v-1h-1v1h-2v-1h-2v1h-1v1h-1v3h-1v-3h-2v2h-1v-3h-2v3h-1v15h-1v-18h-5v8h-1v10h-1v-16h-1v14h-1v2h-1v-16h-1v-3h-1v2h-1v-1h-1v1h-1v-1h-2v1h-1v1h-1v-3h-2v1h-1v3h-1v-3h-2v2h-1v-1h-1v-2h-1v5h-1v-5h-1v1h-1v-1h-1v1h-4v4h-1v-5h-1v1h-2v4h-1v-4h-1v2h-1v-1h-1v-2h-1v1h-1v2h-1v-3h-1v1h-1v-1h-1v1h-2v1h-1v2h-1v-3h-1v-1h-1v1h-1v-1h-1v6h-1v-5h-1v1h-1v2h-1v-3h-1v17h-1v-16h-1v-2h-1v5h-1v-1h-2v-2h-2v-2h-1v1h-2v-1h-1v1h-2v5h-1v-4h-1v-2h-1v1h-1v1h-1v-1h-4v19h-1v-18h-4v-1h-2v1h-1v-1h-1v1h-2v-1h-1v2h-3v-2h-4v-1h-3v2h-1v-1h-1v-1h-1v2h-1v-2h-1v5h-1v-5h-2v2h-2v1h-1v-3h-1v3h-1v-2h-2v1h-1v-1h-1v-1h-1v-1h-1v7h-1v-5h-1v1h-1v-2h-1v1h-1v4h-1v-5h-1v3h-1v-2h-1v1h-1v-1h-1v2h-1v-1h-1v2h-1v-4h-1v1h-3v-1h-1v2h-1v-1h-1v1h-1v-1h-1v-1h-1v2h-1v17h-1v-18h-2v1h-2v-1h-1v-1h-1v1h-1v1h-1v-1h-1v1h-1v-3h-1v1h-1v2h-2v1h-1v-1h-1v-2h-3v3h-1v-1h-1v-1h-2v4h-1v-5h-2v1h-2v1h-1v-1h-1v4h-1v-3h-1v-2h-1v1h-1v2h-1v-3h-1v4h-1v-3h-2v1h-2v-2h-1v4h-1v-3h-1v3h-1v-3h-1v3h-1v-3h-1v2h-1v-1h-1v-2h-1v1h-1v-2h-1v4h-1v-2h-1v1h-4v-2h-1v2h-1v-1h-2v1h-4v-1h-1v2h-1v-2h-2v-1h-1v1h-1v2h-1v-1h-2v-1h-2v2h-2v-3h-3v2h-1v-1h-1v2h-1v14h-1v-16h-1v1h-1v3h-1v-3h-2v-1h-1v1h-1v-1h-1v3h-1v-1h-1v-1h-1v3h-1v-3h-1v-2h-1v1h-1v-1h-1v6h-1v12h-1v-15h-1v-3h-1v3h-1v-2h-5v-1h-1v2h-1v1h-1v-1h-1v-1h-1v-1h-1v1h-1v4h-1v-4h-1v2h-1v-3h-1v1h-2v-1h-3v6h-1v-4h-1v-1h-1v1h-1v-1h-2v1h-1v-2h-1v2h-1v-1h-1v4h-1v-3h-2v-1h-1v1h-1v1h-1v3h-1v-5h-3v3h-1v-4h-1v1h-1v1h-1v2h-1v-3h-2v-1h-3v2h-1v-2h-1v2h-1v-3h-1v2h-3v1h-1v3h-1v-4h-6v-2h-1v2h-2v3h-1v-2h-1v-1h-5v3h-1v-4h-1v1h-1v1h-3v-1h-1v3h-1v-2h-1v-1h-1v1h-1v-1h-1v4h-1v-4h-2v1h-1v-2h-1v4h-1v-2h-2v1h-1v-3h-1v3h-1v-1h-1v-1h-1v-1h-1v1h-1v1h-1v-1h-1v2h-2v-3h-1v2h-2v-1h-1v1h-1v-3h-1v3h-1v-1h-1v-1h-1v5h-1v-3h-1v-1h-2v1h-1v-2h-1v2h-3v-1h-1v1h-1v-1h-1v2h-1v1h-1v1h-2v-5h-1v4h-1v-1h-1v-2h-3v1h-2v1h-2v-1h-2v-1h-1v1h-1v-1h-1v2h-1v-1h-1v-2h-1v3h-1v-2h-2v2h-1v-2h-1v2h-1v-2h-2v1h-1v-1h-1v1h-1v-2h-1v3h-1v-1h-1v-2h-1v2h-1v-2h-1v1h-1v4h-1v-4h-1v-1h-1v2h-2v1h-1v-2h-1v-1h-1v4h-1v-3h-2v1h-1v-2h-1v5h-1v-3h-1v-1h-1v1h-2v1h-1v-2h-1v1h-1v-2h-1v2h-1v2h-1v-2h-1v-1h-2v3h-2v15h-1v-19h-1v3h-1v-3h-1v5h-1v-3h-1v-1h-1v1h-1v-2h-2v1h-1v1h-2v-2h-1v1h-1v-1h-1v4h-1v-4h-2v1h-1v1h-2v1h-1v-2h-2v1h-1v-2h-1v1h-2v1h-1v-2h-1v4h-1v-2h-1v1h-1v-2h-1v17h-1v-16h-1v-1h-1v2h-1v-3h-1v3h-1v-1h-1v-1h-2v4h-1v-4h-1v-1h-2v2h-2v-2h-1v2h-1v2h-1v-3h-1v2h-2v-2h-2v4h-1v-3h-1v3h-1v-2h-1v-2h-2v1h-2v-1h-1v2h-2v-2h-1v2h-1v-2h-3v2h-1v-2h-2v1h-1v3h-1v-5h-1v1h-5v-1h-1v1h-1v-1h-1v2h-2v-1h-1v3h-1v-2h-3v1h-1v-4h-1v4h-1v-1h-1v15h-1v-16h-4v-1h-3v1h-1v2h-1v-2h-1v-1h-1v1h-1v1h-1v-2h-1v1h-1v1h-2v1h-1v1h-1v-2h-2v-2h-1v2h-1v1h-1v-2h-1v-1h-1v2h-1v-1h-1v-1h-1v2h-1v-1h-3v-1h-2v2h-2v1h-1v-3h-2v18h-1v-17h-2v1h-1v2h-1v-3h-2v2h-1v-1h-1v-2h-1v1h-3v-1h-1v1h-1v-1h-2v-1h-1v5h-1v-3h-2v4h-1v-4h-1v-1h-1v5h-1v-5h-1v2h-1v-1h-2v17h-1v-16h-1v-1h-1v1h-2v-2h-1v2h-1v-2h-1v1h-1v1h-1v2h-1v-2h-1v-2h-1v3h-1v-1h-2v-3h-1v2h-1v1h-1v2h-1v-4h-2v5h-1v-4h-1v-1h-2v3h-3v-3h-1v3h-1v14h-1v-18h-1v3h-1v-1h-2v1h-2v-3h-1v2h-3v1h-1v2h-1v-2h-1v-2h-2v1h-1v-2h-1v3h-2v-2h-2v-1h-1v1h-1v1h-3v3h-1v-4h-1v16h-1v-15h-1v4h-1v-3h-1v-1h-1v-2h-1v1h-1v4h-1v-3h-2v5h-1v-5h-1v3h-1v-2h-2v-1h-2v-1h-1v3h-1v-2h-1v2h-1v-3h-1v2h-1v-2h-1v2h-2v-1h-1v3h-1v-4h-1v1h-1v1h-2v-1h-1v2h-1v17h-1v-12h-1v-7h-1v1h-1v15h-1v-14h-1v1h-1v-1h-1v-1h-1v-1h-1v1h-1v-2h-1v1h-1v2h-1v-1h-1v-2h-1v2h-1v-1h-1v-1h-1v5h-1v-4h-2v1h-1v3h-1v-3h-2v-2h-1v1h-2v1h-1v1h-1v14h-1v-17h-1v1h-1v2h-3v-2h-2v2h-1v-1h-1v-2h-1v2h-1v-2h-1v-1h-1v2h-3v-1h-1v1h-1v1h-1v-1h-2v-1h-1v2h-1v-2h-1v1h-1v18h-1v-16h-1v1h-1v-3h-1v1h-1v-1h-3v-3h-1v4h-2v1h-1v-2h-1v-2h-1v2h-3v2h-1v-3h-1v1h-2v1h-1v-1h-1v1h-2v-1h-1v-1h-1v2h-1v-1h-3v-1h-1v1h-1v1h-1v-2h-1v5h-1v-4h-2v2h-1v-2h-1v-1h-1v1h-1v-1h-1v1h-1v16h-1v-15h-3v-2h-1v1h-2v-1h-2v2h-1v1h-1v-3h-1v3h-1v-3h-1v2h-1v-2h-1v1h-1v1h-1v-2h-1v1h-1v1h-1v3h-1v-5h-2v4h-1v-1h-1v-3h-1v2h-4v-2h-1v-1h-1v2h-1v-1h-1v1h-1v-1h-1v2h-1v-1h-1v-1h-1v2h-1v1h-1v-2h-2v1h-2v-2h-1v1h-3v1h-1v-1h-1v-2h-1v2h-1v-1h-1v1h-1v-1h-1v2h-1v2h-1v-2h-1v-2h-1v1h-1v4h-1v-3h-1v-2h-2v3h-1v-1h-1v-1h-1v1h-1v-2h-1v4h-1v-3h-1v2h-1v-1h-1v-1h-2v3h-1v-2h-1v-1h-2v-1h-1v1h-3v-1h-1v2h-1v1h-1v15h-1v-17h-2v1h-1v3h-1v-5h-1v2h-2v-2h-1v5h-1v-2h-1v-2h-1v1h-2v1h-1v-2h-1v1h-1v3h-1v-5h-1v3h-1v-2h-1v1h-1v-1h-3v1h-3v-1h-2v3h-1v-2h-2v-1h-1v-2h-2v3h-2v-2h-1v1h-3v-2h-1v3h-2v-1h-1v2h-1v-2h-1v-1h-1v1h-2v3h-2v-3h-1v1h-1v-2h-1v1h-1v15h-1v-17h-1v1h-1v1h-2v2h-1v-3h-1v2h-1v-1h-2v1h-2v-1h-2v2h-1v-1h-2v-1h-1v1h-1v-2h-3v2h-1v-1h-3v-1h-1v5h-1v-4h-1v4h-1v-4h-2v3h-1v-5h-1v2h-1v1h-1v1h-1v-2h-1v1h-1v3h-1v-1h-1v-3h-2v3h-1v-4h-1v1h-2v-1h-2v1h-1v1h-2v-2h-1v1h-1v3h-1v-5h-1v1h-1v2h-1v-1h-2v-1h-1v1h-1v-1h-2v3h-1v1h-1v-3h-3v1h-3v-2h-1v4h-2v15h-1v-19h-2v3h-1v-3h-1v2h-1v2h-1v-3h-1v-1h-1v1h-2v1h-1v1h-1v1h-1v-4h-1v1h-1v2h-1v2h-1v-5h-2v2h-1v-1h-1v2h-1v-2h-1v2h-1v-1h-1v1h-1v2h-1v-5h-1v2h-1v-1h-1v1h-1v-1h-1v3h-1v-1h-1v-1h-2v-1h-1v2h-2v14h-1v-14h-1v-2h-1v-1h-1v1h-3v1h-1v-1h-3v-1h-1v1h-2v3h-1v-3h-1v2h-1v-1h-2v-3h-1v1h-2v1h-3v1h-1v1h-1v-1h-1v14h-1v-16h-1v3h-1v-2h-3v2h-1v2h-1v-2h-1v-1h-1v1h-1v-1h-4v18h-1v-14h-1v9h-1v2h-1v-15h-1v1h-1v-4h-1v3h-1v1h-1v-3h-3v2h-1v-3h-1v5h-1v-3h-2v1h-3v2h-1v1h-1v-4h-1v1h-1v-1h-2v-1h-1v1h-1v-2h-1v2h-1v1h-1v1h-1v-4h-1v6h-1v-3h-1v2h-2v-3h-1v1h-3v1h-1v-2h-1v2h-1v-2h-2v17h-1v-14h-2v-4h-1v3h-1v-1h-1v-1h-1v2h-1v-1h-1v1h-1v2h-1v-4h-1v2h-1v-1h-1v-1h-1v2h-1v-1h-2v-3h-1v3h-1v-2h-2v3h-1v-2h-3v1h-1v1h-1v-4h-1v4h-1v-2h-3v1h-1v2h-1v-3h-1v1h-1v1h-1v-3h-1v1h-1v2h-1v-1h-1v-2h-1v2h-1v-1h-1v1h-1v1h-1v-1h-5v-1h-1v-1h-1v2h-2v-2h-1v1h-3v-2h-1v2h-1v-2h-1v1h-1v2h-1v1h-2v-1h-2v-1h-1v2h-1v-3h-1v1h-1v1h-1v-2h-1v3h-1v-3h-1v17h-1v-15h-1v3h-1v-4h-3v4h-1v-3h-1v1h-1v-2h-2v-1h-2v2h-1v-2h-1v5h-1v13h-1v-18h-1v1h-1v-2h-1v4h-1v-1h-1v-2h-1v1h-1v-1h-2v1h-1v-1h-1v1h-2v-1h-1v4h-1v-3h-1v1h-1v16h-1v-16h-1v-1h-1v-1h-1v1h-3v-1h-1v1h-1v2h-1v-1h-1z"/>
<path d="M584 673h1v1h1v2h1v-2h2v1h2v-1h1v1h2v2h1v-2h1v-2h1v3h1v-1h2v-1h1v1h2v-1h1v2h1v-2h1v2h1v-1h4v-3h1v3h1v-2h1v2h4v-2h1v2h1v-3h1v4h1v-2h1v3h1v-2h1v1h1v-2h1v2h1v-1h1v-1h1v-1h1v4h2v-1h1v-2h1v2h1v-3h1v2h2v2h1v-2h1v1h1v-2h1v2h3v-1h1v1h2v-1h1v-1h1v1h3v1h1v-1h1v-1h1v1h1v-1h1v3h1v-3h1v2h3v1h2v-3h1v-1h1v4h1v-5h1v1h1v3h1v-3h1v3h1v-1h2v-2h1v3h1v-2h1v-2h1v4h2v-1h1v1h1v-1h2v-1h1v-1h1v1h2v2h2v-2h1v-3h1v4h2v-1h1v2h1v-2h1v-1h1v3h2v-2h3v-1h1v2h1v-2h1v2h3v1h3v-1h3v-1h1v-1h2v1h1v2h1v-2h2v3h1v-2h1v-1h2v1h2v1h1v-3h1v3h1v-2h1v1h1v2h1v-2h1v-1h1v2h1v1h1v-2h1v1h1v-2h1v2h1v-1h2v1h1v-3h1v2h1v2h1v-3h3v1h1v2h1v-2h1v1h1v-1h2v-1h1v1h1v1h4v-1h2v-1h1v1h1v-1h1v3h1v-2h3v-3h1v1h2v3h1v-1h1v-1h1v1h2v1h1v-2h2v1h1v1h1v-2h1v-1h1v1h1v1h1v1h1v-1h1v1h1v-1h1v1h1v-4h1v2h1v1h1v-2h1v3h1v-1h2v-2h1v2h1v-1h1v1h1v-3h1v3h2v-1h2v1h1v1h1v-1h2v1h2v-1h1v1h1v-3h1v2h4v1h1v-1h2v-1h1v2h1v-2h1v1h1v-1h1v2h1v-2h1v1h4v1h1v-3h1v1h3v2h1v-1h2v-4h1v4h1v-3h1v3h1v-3h1v3h3v1h1v-1h1v1h1v-2h1v2h1v-2h1v1h2v-1h1v2h1v-1h2v1h2v-1h2v-2h1v-3h1v5h3v-3h1v3h2v-1h2v2h1v-2h1v2h1v-1h1v1h1v-1h3v1h1v-2h1v4h1v-5h1v-1h1v1h2v3h3v-2h1v1h2v-2h1v3h2v-1h2v1h1v-8h1v7h2v-2h1v2h1v-2h1v3h2v-1h1v1h1v-2h1v-1h2v1h1v-1h2v2h1v1h1v1h1v-1h1v-1h2v-3h1v2h1v1h1v-1h1v3h1v-3h3v2h1v-2h2v1h1v1h1v-2h1v1h1v1h1v-2h1v1h3v-2h2v1h1v2h1v-4h1v1h1v2h1v-1h1v2h1v-1h1v-1h1v1h3v-2h1v-1h1v2h1v-1h1v1h1v-1h1v2h1v1h2v-1h2v1h1v-3h2v1h1v1h2v-2h1v3h1v-4h1v3h1v-2h1v1h1v1h3v1h1v-2h1v1h1v-3h1v3h4v1h1v-3h1v3h1v-1h1v1h2v-2h1v-1h1v2h1v-2h1v3h3v-2h2v1h2v1h1v-2h1v3h1v-1h1v-3h1v-2h1v4h2v1h1v-2h1v1h2v-3h1v3h2v-1h1v2h1v-2h1v1h1v-1h2v2h3v-1h2v-1h1v1h1v-1h2v2h1v-2h1v2h1v-2h1v2h2v1h1v-3h1v1h2v-5h1v4h1v-1h1v2h1v-2h2v1h2v-1h1v3h1v-1h1v-1h1v1h1v-2h2v-2h1v3h1v2h1v-2h1v-1h1v-1h1v4h2v-1h1v-1h1v1h1v-1h2v2h3v-2h1v3h1v-1h1v-1h1v-1h2v1h1v1h2v-1h1v1h2v-1h2v-1h1v1h2v1h1v-1h1v1h1v-1h1v2h1v-3h1v-2h1v4h1v-4h1v3h1v1h1v-3h1v3h1v-1h1v1h1v-1h1v1h1v-1h1v-2h1v2h2v1h1v-2h1v2h2v-3h2v2h3v-1h2v-1h1v2h1v1h1v-1h1v-2h2v3h1v-1h1v1h3v-4h1v1h1v-1h1v3h3v-1h1v-1h1v2h1v-2h1v3h1v-3h1v2h2v-1h1v1h1v1h1v-2h1v1h1v1h1v1h1v-2h4v-2h1v2h1v-2h1v2h1v1h1v-2h1v-1h1v3h1v-1h2v1h1v-1h1v-2h1v3h3v-4h1v3h1v-2h2v2h1v-1h1v2h1v-1h1v-2h1v2h1v1h1v-2h2v-1h1v2h3v-1h2v1h3v-3h1v3h1v-2h1v1h2v2h1v-2h1v-1h1v1h2v1h1v-2h1v2h1v-1h2v2h2v-4h1v3h3v-1h2v1h2v1h2v-1h1v-1h1v1h1v1h1v-4h1v4h1v-2h1v1h1v-1h1v1h2v-1h3v1h1v2h1v-3h1v1h1v3h1v-4h1v2h1v-3h1v3h1v-2h1v2h2v-2h1v2h1v-1h2v-1h3v1h1v-2h1v3h1v-1h1v-2h1v1h1v-1h1v-2h1v2h1v3h1v-1h1v-3h1v3h1v1h2v-2h1v1h1v-1h1v1h1v2h1v-4h1v2h2v1h1v-2h1v1h3v1h2v-1h3v-1h1v2h1v-2h1v2h1v-2h1v2h1v-1h1v-2h2v2h1v1h2v-1h1v-4h1v4h1v1h1v-2h1v3h1v-2h3v1h2v-2h2v1h1v1h1v1h1v-1h1v-1h1v-1h1v-2h1v4h1v1h1v-2h1v-1h2v2h1v-3h2v3h1v-3h1v2h1v-1h1v3h1v-1h2v1h1v-1h1v1h1v-2h1v-1h1v-1h1v3h1v1h1v-1h1v-3h1v3h1v1h1v-3h1v3h1v-1h2v-1h4v-1h1v-1h1v2h1v-1h1v2h1v-3h1v1h3v1h1v-1h2v1h5v2h1v-2h1v-2h1v3h1v-1h1v-1h3v2h1v-2h2v1h1v1h1v-1h1v1h1v-1h1v-1h1v2h1v-1h1v1h1v-2h1v2h1v-2h1v3h1v-2h2v-1h2v1h2v-1h1v1h1v1h1v-2h2v1h1v1h1v-1h1v1h1v-1h1v2h1v-3h1v2h2v-3h2v1h1v2h1v-1h1v-1h1v1h1v-1h3v3h1v-1h1v-1h1v1h1v-1h2v2h1v-2h1v1h1v-1h1v1h1v-1h1v-1h1v-2h1v5h1v-3h1v1h1v-2h1v2h1v-1h1v1h1v-3h1v1h1v3h1v-4h1v3h1v1h1v-3h1v1h1v1h2v-1h1v1h1v1h1v-2h1v1h2v-1h1v2h1v-1h2v-1h1v2h2v-2h1v2h2v1h1v-3h1v1h1v1h1v-1h1v-2h2v3h1v-1h4v-1h1v2h1v-2h2v2h1v-2h2v1h1v-1h1v1h4v-3h1v4h2v-2h1v1h3v-3h1v5h1v-1h1v-2h1v2h3v-1h2v1h2v-2h4v1h1v-1h3v3h1v-2h2v1h1v-1h1v3h1v-3h1v1h1v-2h1v1h1v1h1v-4h1v4h2v-3h1v2h1v-4h1v5h2v-4h1v2h2v1h1v1h2v-2h1v-2h1v2h2v2h1v-5h1v2h1v3h1v-1h1v-1h4v3h1v-3h1v1h2v-2h1v2h1v-2h1v2h1v-1h1v2h1v-2h1v1h1v1h1v-1h1v-3h1v4h1v-3h1v2h2v-4h1v4h1v2h1v-4h1v3h2v-1h1v-1h1v-1h1v1h1v2h2v-2h1v2h2v-3h1v2h3v1h1v-3h1v2h4v1h2v-1h1v2h1v-2h1v-1h2v-1h1v3h1v-2h1v2h1v1h1v-3h1v2h1v-1h1v-2h1v-1h1v2h2v1h1v-1h2v1h1v-2h1v3h1v-2h1v1h1v1h2v-1h1v2h1v-2h1v-1h1v2h1v-3h1v3h1v-3h3v-1h1v5h2v-2h1v-2h1v2h1v1h1v-1h1v1h2v-2h1v-3h1v3h1v1h1v-1h2v2h1v-2h2v2h1v-1h1v1h1v-2h1v2h1v-2h1v-2h1v2h1v1h2v2h1v-2h1v2h1v-2h1v1h1v-2h1v-1h1v1h1v-1h1v2h1v-2h1v3h1v-2h2v3h1v-5h1v2h1v1h1v-1h1v1h4v-1h2v2h1v-3h1v4h1v-3h2v1h1v-4h1v4h4v-1h2v1h2v1h1v-1h3v1h1v-2h1v1h1v-2h1v3h1v-1h2v2h1v-3h1v1h1v-1h1v3h2v-3h1v2h2v-1h1v1h1v-2h2v1h2v-1h1v1h2v-2h1v1h1v2h2v-2h1v1h2v-4h1v3h1v-1h1v2h1v-1h2v1h3v-1h1v1h1v1h2v-1h2v-1h1v1h1v-2h2v3h1v-2h2v2h1v-1h1v-2h1v3h1v-3h1v1h1v-1h1v2h2v1h1v-3h1v3h1v-2h3v1h2v-1h1v2h2v-2h1v-1h1v1h1v1h1v-1h1v2h1v1h1v-1h1v-1h2v-1h2v2h1v-1h1v-1h1v-1h1v2h1v-1h2v1h2v1h1v2h1v-3h2v1h1v-1h1v-1h1v1h2v-4h1v4h3v-1h1v1h1v-5h1v5h3v-1h1v1h1v2h1v-5h1v3h1v1h1v-2h1v3h1v-1h2v1h1v-2h1v-1h1v3h1v-4h1v2h1v-3h1v3h1v1h2v-1h1v1h1v1h1v-1h1v-3h1v2h1v-1h1v1h2v1h1v-2h1v1h6v-2h2v3h2v-1h1v1h1v-2h3v-1h1v1h1v2h1v-3h1v3h2v-1h2v-2h1V688h-1v-2h-1v-1h-2v1h-1v-1h-2v1h-1v1h-1v-2h-1v2h-1v-1h-2v1h-1v-3h-1v1h-1v10h-1v-8h-1v-3h-1v3h-1v-1h-2v1h-1v24h-1v-25h-1v1h-3v-2h-1v2h-1v25h-1v-17h-1v17h-1v2h-1v-27h-2v-1h-1v2h-1v-2h-2v-1h-1v1h-1v-1h-1v1h-1v-3h-1v4h-1v-1h-1v-2h-1v1h-1v4h-1v-4h-1v1h-1v8h-1v-9h-1v2h-1v-2h-1v1h-1v1h-1v1h-1v-2h-1v8h-1v-10h-1v2h-1v1h-1v8h-1v-9h-3v-1h-4v-1h-1v4h-1v-4h-1v1h-1v1h-1v7h-1v-8h-2v2h-1v-3h-1v11h-1v-9h-1v-1h-1v1h-1v-1h-1v27h-1v-27h-1v3h-1v-2h-1v8h-1v-8h-1v2h-1v-3h-2v2h-1v-1h-1v1h-1v-1h-1v-1h-1v-1h-1v2h-1v-1h-2v1h-1v-2h-1v2h-1v-2h-1v2h-1v26h-1v-25h-1v-2h-1v2h-1v-2h-1v-1h-2v3h-2v1h-1v-2h-1v-1h-1v-1h-1v2h-1v1h-1v-1h-2v3h-1v-4h-3v1h-1v1h-1v-2h-1v2h-2v-2h-1v3h-1v-4h-1v1h-1v-1h-1v3h-2v-3h-2v2h-1v-1h-1v2h-1v-1h-2v1h-1v7h-1v-9h-3v-1h-1v10h-1v-8h-2v-2h-1v2h-1v-1h-4v2h-1v-2h-1v1h-1v-1h-1v4h-1v-2h-2v-2h-1v-1h-1v1h-1v5h-1v25h-1v-28h-1v1h-1v-1h-1v-2h-1v1h-1v1h-1v-2h-1v2h-1v-1h-2v-1h-1v2h-1v1h-1v-2h-1v1h-1v-1h-1v1h-1v-2h-1v2h-1v-1h-2v1h-1v-3h-1v4h-1v-5h-1v3h-2v-1h-2v1h-1v8h-1v-6h-1v-3h-1v4h-1v-6h-1v3h-1v-1h-1v1h-1v-1h-1v1h-1v-1h-1v3h-1v-1h-1v-3h-2v4h-1v-1h-1v-3h-1v4h-1v-1h-2v-2h-1v1h-1v-1h-1v1h-1v1h-1v-1h-2v-1h-1v1h-2v1h-1v-3h-2v3h-1v-1h-1v-1h-2v1h-2v-1h-1v3h-1v-2h-1v1h-1v-1h-2v-2h-1v1h-2v1h-1v-2h-1v2h-3v-1h-1v7h-1v18h-1v-24h-1v-1h-1v10h-1v-9h-1v2h-1v-3h-5v1h-1v-1h-1v1h-2v1h-1v-3h-1v2h-1v26h-1v-25h-1v-1h-1v-1h-1v2h-2v-1h-1v-1h-1v2h-1v-2h-3v1h-1v-1h-1v1h-1v-1h-1v9h-1v-10h-1v1h-1v2h-1v-1h-1v-2h-1v1h-1v-1h-1v2h-1v8h-1v-9h-1v3h-1v-2h-1v-1h-2v1h-1v1h-2v-1h-1v7h-1v-7h-1v-1h-1v1h-1v-2h-1v2h-1v9h-1v-9h-3v-2h-2v2h-1v4h-1v-5h-1v1h-1v1h-1v-1h-1v-1h-1v-1h-1v1h-1v1h-2v3h-1v-1h-1v-2h-1v-1h-2v8h-1v-6h-1v-2h-1v2h-1v-1h-1v-1h-1v-1h-1v1h-1v1h-1v-1h-1v1h-1v1h-1v-2h-4v1h-1v2h-1v-3h-3v1h-1v-1h-1v1h-1v7h-1v-5h-1v-2h-1v-2h-1v2h-1v8h-1v-9h-1v3h-1v-3h-2v2h-1v-1h-1v-2h-1v1h-1v1h-1v-1h-1v-1h-1v3h-2v-1h-1v1h-1v-1h-1v-1h-1v1h-1v-2h-1v2h-1v1h-1v-1h-1v-1h-1v2h-1v1h-1v-2h-1v1h-1v6h-1v-9h-1v2h-1v-1h-1v1h-1v-1h-1v2h-1v-1h-2v-1h-4v3h-1v-2h-1v-3h-1v3h-1v7h-1v-8h-1v2h-1v1h-2v-2h-3v3h-1v-3h-2v-1h-5v-1h-1v1h-1v-1h-1v1h-1v2h-1v-2h-2v1h-2v-1h-1v3h-1v-3h-1v2h-1v-3h-1v3h-1v-2h-2v1h-1v-2h-1v11h-1v-7h-2v-2h-1v-1h-2v1h-1v-2h-1v6h-1v-4h-1v1h-3v7h-1v-8h-1v-2h-1v2h-2v-2h-1v3h-1v1h-1v-2h-1v-2h-1v3h-1v-2h-2v1h-1v7h-1v-6h-1v26h-1v-27h-1v1h-2v8h-1v-9h-1v1h-1v-3h-1v2h-1v-2h-1v2h-1v1h-1v-2h-1v1h-1v2h-1v-1h-2v-2h-1v2h-2v-1h-1v-1h-1v1h-1v2h-2v-4h-1v1h-1v2h-1v-2h-1v1h-2v7h-1v-6h-1v-3h-1v15h-1v13h-1v-26h-3v-2h-1v1h-1v1h-2v-1h-1v8h-1v-9h-1v3h-1v-1h-2v1h-1v-2h-1v1h-2v-1h-1v2h-1v-3h-1v2h-1v-2h-1v9h-1v-3h-1v4h-1v-9h-2v2h-1v-1h-1v-2h-1v3h-1v-3h-1v2h-1v1h-1v-1h-1v-2h-1v2h-5v2h-1v6h-1v-8h-1v1h-1v-1h-1v-1h-2v1h-1v1h-1v-1h-1v-2h-1v3h-1v-3h-3v2h-1v-1h-1v2h-1v-1h-1v2h-1v-4h-1v2h-1v26h-1v-21h-1v-7h-2v1h-2v1h-1v2h-1v-2h-1v1h-1v-1h-2v-1h-1v1h-1v-1h-1v1h-1v-1h-1v1h-4v1h-2v-1h-1v1h-1v-3h-1v2h-3v1h-2v-1h-3v-1h-1v1h-1v-2h-1v5h-1v-2h-1v-2h-1v5h-1v24h-1v-25h-1v-3h-1v2h-1v-3h-1v2h-2v-2h-1v1h-1v1h-1v-2h-1v-1h-1v2h-1v1h-1v-2h-1v1h-3v7h-1v-7h-1v-1h-1v-1h-2v2h-1v3h-1v-4h-1v-1h-1v4h-1v1h-1v23h-1v-25h-1v-1h-1v1h-1v-2h-5v2h-1v7h-1v-9h-1v2h-1v-1h-1v-1h-1v-1h-2v1h-1v1h-1v-1h-1v-1h-1v3h-1v7h-1v-9h-4v-1h-1v2h-2v-2h-1v28h-1v-24h-2v-4h-1v2h-3v-1h-1v-1h-1v2h-3v-2h-3v1h-1v2h-1v-2h-4v-1h-1v2h-2v-2h-2v2h-1v9h-1v-7h-1v24h-1v-28h-2v2h-2v-1h-1v2h-1v-4h-1v4h-1v-3h-1v10h-1v-10h-2v1h-1v2h-4v-3h-1v2h-1v-1h-1v1h-1v-1h-2v1h-4v-1h-1v1h-1v1h-2v-1h-1v7h-1v20h-1v-27h-2v-1h-1v26h-1v-25h-1v9h-1v-10h-1v2h-1v-2h-1v2h-2v-1h-1v-1h-1v1h-2v3h-1v-3h-1v-1h-1v9h-1v-10h-1v1h-1v-1h-1v11h-1v-8h-1v-2h-1v-1h-1v3h-2v-2h-1v1h-1v25h-1v-25h-4v-1h-1v1h-1v2h-1v1h-1v-3h-1v2h-1v-3h-1v-1h-1v2h-1v-2h-1v-1h-1v2h-1v-1h-1v4h-1v-4h-3v3h-1v-3h-2v6h-1v22h-1v-28h-1v1h-3v1h-1v-1h-1v2h-1v-2h-2v1h-1v-1h-1v1h-1v-2h-1v1h-1v3h-1v-1h-2v-2h-1v2h-1v-3h-1v1h-1v1h-1v-1h-1v1h-1v-2h-1v3h-1v1h-1v-2h-1v-1h-1v2h-1v-3h-1v3h-2v-1h-2v-1h-1v1h-4v1h-1v1h-1v5h-1v19h-1v-27h-2v1h-2v-2h-1v1h-1v3h-1v-3h-1v2h-1v-3h-1v1h-1v2h-1v-1h-1v-1h-1v-1h-1v1h-1v2h-1v-2h-1v1h-1v-1h-1v1h-1v1h-1v-2h-1v8h-1v-7h-3v-1h-2v-1h-1v2h-1v-2h-1v3h-1v-1h-3v1h-1v-1h-1v2h-2v-3h-1v1h-2v-1h-1v1h-1v-1h-1v-1h-2v5h-1v-4h-1v2h-1v-1h-1v1h-1v-2h-1v4h-1v-4h-1v1h-1v-1h-1v2h-1v-2h-2v10h-1v-9h-3v-1h-1v2h-1v-3h-1v1h-1v-1h-1v9h-1v-7h-1v-2h-1v2h-2v-1h-1v2h-1v-1h-1v-1h-1v3h-2v-1h-1v-1h-1v-1h-1v-1h-1v2h-1v5h-1v21h-1v-28h-1v1h-2v8h-1v-4h-1v-4h-3v9h-1v-10h-1v3h-1v-2h-1v4h-1v-5h-1v1h-1v1h-1v9h-1v-8h-1v-1h-1v1h-1v-1h-1v-1h-2v2h-1v2h-1v-5h-1v3h-1v-1h-1v-1h-2v1h-1v-3h-1v4h-1v-3h-2v2h-1v-1h-1v-1h-1v2h-1v-1h-1v1h-1v-2h-1v2h-2v-3h-1v1h-1v1h-3v2h-1v-2h-1v8h-1v-7h-3v-1h-1v30h-1v-30h-1v1h-1v1h-1v4h-1v-4h-1v-2h-1v1h-2v-1h-1v3h-1v-3h-1v-1h-1v1h-1v3h-1v-1h-1v-2h-1v2h-1v-2h-1v-1h-1v2h-1v1h-1v-1h-2v-2h-1v2h-1v-1h-1v1h-2v-2h-1v2h-2v1h-1v-2h-1v1h-1v-2h-1v1h-2v2h-1v8h-1v-9h-3v8h-1v-8h-2v1h-1v-3h-1v2h-2v-1h-1v2h-1v-1h-1v1h-1v-2h-4v1h-1v-2h-1v1h-1v3h-1v-2h-3v1h-1v-3h-1v1h-2v-1h-1v3h-1v-1h-1v-2h-1v1h-1v1h-1v28h-1v-28h-2v-3h-1v3h-1v-1h-1v9h-1v-8h-5v-2h-1v1h-2v2h-1v-2h-1v9h-1v-10h-1v1h-1v-1h-1v4h-2v-3h-1v2h-1v-3h-1v1h-1v10h-1v-9h-1v2h-1v-3h-2v1h-1v2h-1v-3h-1v1h-1v-1h-1v1h-1v-1h-1v2h-1v24h-1v-14h-1v-11h-2v2h-1v-4h-1v1h-1v1h-3v1h-1v-1h-1v-1h-1v1h-3v-1h-1v4h-1v-3h-1v3h-1v-2h-2v1h-1v-2h-1v1h-1v-1h-2v3h-1v25h-1v-24h-1v-4h-1v-2h-1v5h-1v-2h-1v-2h-1v8h-1v-3h-1v-6h-1v3h-1v-3h-1v1h-3v26h-1v-26h-1v26h-1v2h-1v-27h-2v1h-1v-2h-5v2h-1v-4h-1v11h-1v-9h-1v1h-2v-1h-1v1h-1v-1h-1v9h-1v-7h-2v-3h-1v2h-1v-1h-3v1h-3v-2h-1v2h-1v-1h-1v1h-1v1h-1v3h-1v-4h-1v1h-1v-1h-1v-1h-1v2h-1v-1h-2v1h-1v26h-1v-17h-1v-11h-1v1h-2v3h-1v-1h-1v-3h-1v1h-1v-2h-1v11h-1v-7h-1v-2h-1v-2h-1v2h-1v1h-1v-1h-1v-1h-1v1h-1v-1h-2v2h-1v-3h-1v3h-1v-1h-2v2h-2v-1h-1v-1h-1v-1h-1v-1h-1v1h-2v-1h-1v3h-1v-2h-1v2h-1v-1h-1v1h-1v-2h-1v2h-1v-2h-1v-1h-1v1h-1v2h-1v-1h-3v-2h-1v1h-3v1h-3v-1h-1v1h-1v-1h-3v3h-1v-2h-1v1h-1v-1h-1v1h-1v-2h-1v1h-1v-2h-2v2h-3v1h-1v-1h-2v1h-1v25h-1v-23h-1v6h-1v-8h-2v1h-1v6h-1v-8h-1v4h-1v-5h-1v1h-1v-2h-1v1h-1v2h-1v-1h-1v5h-1v21h-1v-22h-1v-4h-1v-1h-1v3h-1v-4h-1v2h-2v-1h-1v-1h-1v4h-1v-1h-1v-2h-1v-1h-1v2h-1v1h-1v-1h-1v11h-1v12h-1v-22h-1v-2h-1v2h-1v3h-1v-5h-1v1h-1v-2h-2v3h-1v-2h-1z"/>
<path d="M584 727h1v4h1v-3h1v1h2v-1h1v1h1v1h1v-2h4v-1h1v2h2v-1h1v3h1v-4h1v3h3v-1h1v-1h1v2h1v-1h2v-3h1v4h1v-3h1v2h1v1h1v-1h3v-2h1v3h1v-1h1v2h1v-3h1v1h1v1h1v1h1v-3h2v-1h1v2h1v-2h1v2h3v1h2v-1h1v1h1v-3h1v-1h1v3h2v2h2v-2h1v-1h1v2h1v1h1v-4h1v1h2v-1h1v3h2v-2h2v2h2v-2h1v1h2v-1h2v2h1v1h1v-2h3v2h1v-3h1v2h1v-1h1v-6h1v8h1v-2h1v1h2v1h2v-2h1v-1h1v1h1v1h1v-1h1v1h1v-1h3v-1h1v2h1v-1h1v1h1v-3h1v2h2v2h1v-3h1v3h1v-3h1v2h1v-1h2v1h2v-1h1v-2h1v4h1v-3h1v1h1v-1h1v3h1v-1h1v-2h1v2h1v-1h1v1h1v-3h1v3h3v-1h1v-2h1v1h1v2h2v-2h1v2h1v-2h1v3h1v-3h1v1h3v1h1v-2h1v1h3v1h3v-1h1v1h4v-1h2v1h1v-1h1v-1h1v1h2v2h1v-1h1v-1h1v1h3v-3h1v2h2v-2h1v3h1v-1h1v-1h2v3h1v-2h3v-1h1v2h2v-1h4v1h1v-3h1v3h3v1h1v-2h2v-2h1v3h1v-1h1v1h1v-1h2v1h1v-1h1v-2h1v4h1v-1h1v-2h1v1h2v2h1v-2h2v1h1v-3h1v2h1v2h1v-1h1v-4h1v3h1v-1h1v1h1v-1h1v2h2v-3h1v2h2v1h1v-3h1v2h1v-2h1v-2h1v5h1v1h1v-3h1v3h1v-4h1v3h1v-1h1v1h1v-1h2v-1h1v2h1v-1h1v1h3v-1h1v2h1v-3h1v-1h1v1h1v4h1v-4h1v3h1v-1h1v-1h3v1h1v-1h2v-2h1v2h1v-1h2v2h1v-2h1v1h1v-1h1v2h3v-2h1v1h1v1h1v-1h2v-2h1v1h6v2h1v1h1v-2h1v1h1v-4h1v2h1v3h1v-2h4v-1h1v2h1v-1h1v1h1v-2h1v1h1v1h1v-3h1v3h2v-2h1v2h1v-1h1v-1h1v1h2v-3h1v2h1v-1h1v1h1v2h1v-2h1v1h1v-1h1v-2h1v4h1v-1h1v-2h1v2h1v-1h1v1h1v1h2v-2h1v2h1v1h1v-1h1v1h1v-2h1v-1h1v3h1v-1h1v-1h2v1h4v-3h1v2h1v1h1v-1h1v-1h1v1h3v-2h1v2h1v-2h2v4h1v-4h1v1h1v3h1v-2h1v-1h1v2h1v-2h1v2h1v-1h3v1h1v-3h1v2h2v1h1v-2h1v1h1v1h1v-2h1v-2h1v4h1v-1h1v1h1v-2h3v1h1v1h1v1h1v-1h1v-1h1v2h1v-2h1v1h2v-1h1v-1h1v1h2v-1h1v1h1v1h1v-2h2v1h1v1h2v-1h2v-1h1v1h1v-1h2v1h1v1h1v-2h2v-1h1v1h2v-1h1v1h1v1h1v-1h1v1h2v1h1v-1h2v-2h1v2h8v1h4v-3h1v3h1v-1h1v1h2v-2h1v1h1v-1h1v1h1v1h3v-1h1v-1h1v1h1v-3h1v3h1v1h1v-2h1v1h1v1h1v-1h1v-1h1v2h2v1h1v-1h1v-2h3v2h1v-2h1v2h1v-2h1v3h2v-3h1v2h1v-1h2v-1h1v1h2v-1h1v2h2v-1h1v2h1v-2h2v-2h1v1h1v1h2v1h1v-1h2v1h1v-1h1v2h1v-1h1v-1h2v-1h1v1h2v1h3v-2h1v1h1v-1h1v2h1v-2h1v-1h1v2h1v1h1v-2h1v2h1v-1h1v1h1v-3h1v1h1v2h1v-3h1v1h1v2h1v-2h1v2h1v-1h1v1h2v1h2v-2h2v1h1v-1h1v1h1v-1h1v-2h1v2h2v1h1v-1h1v1h2v-2h2v2h3v1h1v-3h1v1h3v1h2v-1h1v1h1v-2h3v1h2v2h1v-1h1v-1h1v-1h2v3h1v-3h1v3h1v-2h1v1h1v1h1v-3h1v-1h1v2h1v-2h1v3h1v-2h1v1h2v1h1v-1h1v2h1v-3h1v1h1v2h1v-1h1v-1h2v1h1v-1h1v1h2v-1h1v2h1v-2h1v1h1v-3h1v1h1v-1h1v2h2v-1h1v2h1v-2h1v2h2v1h1v-5h1v1h1v2h1v2h1v-3h1v3h1v-1h1v1h1v-3h1v1h1v-1h1v2h1v-2h1v2h1v-2h1v1h2v1h2v-3h1v2h3v-1h1v2h1v-1h1v-1h1v1h1v1h2v1h1v-2h1v2h1v-2h1v1h3v1h1v-1h1v-2h1v1h1v-2h1v3h1v1h1v-2h2v1h1v-2h2v1h1v-2h2v4h1v-1h2v-2h1v1h1v-1h1v1h2v-1h1v2h2v-1h1v2h1v-3h4v-1h1v3h1v1h1v-2h2v1h1v-1h1v1h1v1h1v-1h1v-2h1v2h2v-1h1v1h4v1h2v-5h1v2h1v2h1v1h1v-4h1v2h2v-1h1v2h2v-1h3v1h2v-2h1v2h1v-2h3v3h1v-3h1v-4h1v4h1v1h2v1h1v-1h5v1h1v-1h2v-1h1v2h2v-3h1v4h1v-2h1v-1h1v1h1v-1h1v3h1v-1h2v-2h1v1h1v-1h1v3h1v-3h1v-1h1v1h2v1h2v-3h1v5h1v-2h1v1h1v-1h3v-2h1v2h2v1h1v-3h1v3h1v-2h1v3h1v-2h2v1h1v1h1v-4h1v3h1v-2h1v2h1v-2h1v2h1v-1h1v-1h1v1h1v1h1v-1h1v1h3v-3h1v1h1v4h1v-3h2v-1h1v2h1v-2h2v1h2v-3h1v4h1v-1h1v2h1v-1h1v-1h2v-2h1v4h1v-3h2v2h1v-2h2v2h1v-2h1v2h1v-1h1v-2h1v3h1v-3h1v3h2v-1h1v-1h1v-1h1v-1h1v3h1v-1h2v2h4v-1h2v1h4v1h1v-1h1v-4h1v2h1v-1h1v2h2v-2h1v2h1v-2h1v2h1v1h1v-3h1v2h1v1h2v-1h2v2h1v-1h1v-1h2v-1h1v1h2v-1h3v1h2v-1h1v1h1v1h1v-3h1v3h4v-4h1v3h2v-1h2v2h1v-2h1v1h1v2h1v-1h1v-1h2v1h1v-1h1v2h1v-2h1v-1h1v2h1v1h1v-2h2v-3h1v5h1v-1h1v-1h3v-1h1v1h2v-1h2v1h1v-1h1v-1h1v1h1v1h1v-2h2v2h1v1h1v-2h2v1h1v1h4v1h1v-4h1v3h1v-2h1v1h1v-1h1v2h1v-2h2v1h2v1h1v1h1v-2h1v2h1v-2h1v1h1v-2h1v-1h1v3h1v-3h1v2h5v2h1v-3h1v-1h1v3h1v-1h1v1h1v-3h1v-2h1v3h1v-1h1v1h1v2h1v-3h1v2h3v-1h2v1h2v1h2v-1h1v1h3v-1h1v1h2v-2h3v3h1v-1h1v-1h1v1h1v-2h1v1h1v1h1v-1h1v-2h1v2h1v2h1v-2h1v2h1v-4h1v1h1v2h1v-2h1v1h1v-1h1v2h1v-1h1v1h2v-1h1v1h2v-3h1v2h1v1h2v-2h1v1h1v-1h1v1h1v-2h1v3h1v-4h1v4h1v-1h1v-1h3v-2h1v3h3v-1h2v-1h1v1h2v2h1v-1h1v1h1v-1h3v-2h2v2h4v2h1v-2h1v-3h1v3h2v2h1v-3h1v1h2v-1h1v-2h1v3h2v-3h1v1h1v3h1v-1h1v1h1v-3h2v1h1v3h1v-2h1v1h1v-2h1v2h2v-2h1v3h2v-1h1v1h1v-3h1v2h2v-1h1v2h1v-2h1v-2h1v2h2v1h1v-1h1v2h1v-1h2v-1h1v-2h1v3h2v1h1v-3h1v2h1v-1h1v1h2v1h1v-3h1v1h1v1h1v-1h1v1h1v-1h1v-3h1v4h1v-1h1v-3h1v4h1v1h1v-2h1v2h1v-3h1v2h2v-2h1v2h1v1h1v-3h1v2h1v-2h1v1h1v-2h1v2h3v-1h1v-1h1v2h2v1h1v-1h2v1h3v-3h1v2h2v1h1v-3h1v4h1v-3h1v-2h1v4h2v-4h1v4h1v-1h1v2h1v-3h1v2h2v-1h1v1h1v-3h1v2h1v1h2v-2h1v3h1v-2h3v-1h1v1h3v-2h1v1h2v1h1v1h1v-1h2v1h2v1h1v-2h1v2h1v-1h2v-2h1v-2h1v3h2v2h1v-1h2v-1h2v1h2v-3h1v2h2v-2h1v3h2v1h1v-3h2v2h1v-1h2v2h2v-3h1v1h2v-2h1v2h1v-1h1v1h2v1h1v-1h1v1h1v-2h2v3h1v-2h1v1h1v-1h1v-2h1v4h1v-3h2v3h1v-1h1v-1h1v-1h2v1h1v2h1v-2h2v-2h1v3h1v1h1v-3h2v1h2v1h1v-2h2v-2h1v2h1v1h1v1h3v-3h1v2h1v1h1v-1h1v1h1v-3h1v2h1v2h1v-1h3v-1h1v1h1v-1h2v-3h1v3h2v-1h1v2h1v-3h1v2h1v1h2v-1h1v1h1v-4h1v3h2v-2h1v2h2v-1h1v1h2v-1h1v2h1v-2h2v2h1v-1h2v-1h1v2h1v1h1v-1h1v-1h1V738h-1v1h-1v1h-1v2h-1v-3h-1v1h-1v-1h-1v2h-1v-1h-1v-2h-1v1h-1v-1h-1v1h-2v2h-1v-2h-1v16h-1v-17h-1v2h-1v2h-1v-1h-1v-2h-1v16h-1v20h-1v-34h-2v2h-1v-4h-2v3h-1v34h-1v-35h-1v33h-1v3h-1v-34h-1v-3h-2v-1h-1v1h-2v2h-1v-2h-1v-2h-1v2h-1v1h-1v-1h-3v-2h-1v1h-1v1h-1v-1h-1v14h-1v-13h-2v2h-1v-1h-2v1h-1v-2h-1v13h-1v-11h-1v-2h-2v14h-1v-14h-1v1h-1v-3h-1v5h-1v-3h-1v-1h-1v-1h-1v4h-1v-3h-1v2h-1v-1h-1v2h-1v12h-1v-13h-1v-2h-2v1h-1v14h-1v-13h-2v-2h-1v14h-1v18h-1v-32h-1v2h-2v13h-1v-15h-1v2h-1v-3h-1v2h-1v1h-1v-1h-1v-2h-1v1h-3v2h-1v-1h-1v-1h-1v1h-1v-1h-1v2h-1v-3h-1v11h-1v26h-1v-37h-1v2h-2v-1h-1v-1h-1v4h-1v-3h-1v1h-1v-1h-1v2h-1v-2h-1v3h-1v-3h-1v1h-2v-2h-1v2h-1v2h-1v-3h-2v2h-2v-2h-1v3h-1v-2h-1v-1h-1v1h-1v2h-1v-1h-1v3h-1v-5h-2v2h-1v2h-1v-3h-1v-1h-1v1h-1v-1h-1v1h-2v13h-1v-14h-1v1h-1v-1h-2v13h-1v-12h-1v2h-1v-1h-1v1h-1v-4h-1v1h-4v2h-1v-1h-1v1h-1v1h-1v-3h-1v1h-1v-1h-1v1h-2v-1h-1v36h-1v-29h-1v-6h-1v1h-1v-3h-1v3h-2v1h-1v1h-1v-3h-2v-1h-2v-1h-1v6h-1v-1h-1v-4h-1v2h-1v-1h-1v-2h-1v1h-1v1h-1v1h-1v-2h-1v-1h-1v1h-1v3h-1v-4h-1v2h-3v13h-1v-13h-1v-2h-1v4h-1v-2h-2v2h-1v-2h-2v-1h-1v1h-3v-2h-1v1h-1v1h-1v-1h-1v1h-3v1h-2v2h-1v-4h-1v1h-1v-1h-2v2h-1v-2h-2v1h-1v-2h-1v1h-1v1h-2v1h-1v1h-1v-2h-1v-1h-1v1h-2v3h-2v-2h-1v-2h-1v2h-1v-1h-2v1h-1v-2h-1v2h-1v-1h-1v1h-1v-1h-1v-2h-1v1h-1v37h-1v-18h-1v-19h-1v13h-1v-10h-2v-1h-2v-1h-1v-1h-1v2h-1v-1h-1v2h-1v-2h-1v-1h-2v-1h-1v1h-1v37h-1v-37h-1v1h-1v1h-1v-1h-3v-1h-1v1h-2v-1h-1v3h-1v-3h-2v2h-1v-2h-1v13h-1v-13h-1v2h-1v-1h-1v2h-1v-4h-1v1h-2v3h-1v13h-1v-15h-2v1h-1v-1h-6v14h-1v-15h-1v2h-1v-2h-1v2h-1v-1h-1v13h-1v-14h-1v4h-1v-2h-1v-1h-2v-1h-1v3h-1v-1h-1v-2h-1v1h-1v1h-2v-2h-1v-1h-1v3h-1v-2h-1v-1h-2v2h-1v-1h-2v15h-1v-15h-1v3h-1v-3h-1v1h-1v2h-1v-2h-1v-1h-1v1h-4v1h-3v-2h-2v3h-1v-3h-1v1h-1v1h-1v-2h-1v1h-1v2h-1v11h-1v-12h-1v-2h-1v3h-1v-2h-1v15h-1v-14h-1v1h-1v-4h-1v3h-2v-1h-3v1h-1v1h-1v-2h-1v-1h-1v1h-2v1h-3v1h-1v-2h-3v2h-1v-4h-1v2h-1v1h-1v-1h-1v-2h-1v16h-1v-15h-2v1h-1v-1h-1v1h-1v-1h-1v1h-2v2h-1v-2h-2v3h-1v-3h-1v2h-1v-1h-1v3h-1v11h-1v-16h-2v1h-1v-1h-2v3h-1v-4h-1v2h-1v1h-1v-1h-1v2h-1v-2h-2v-1h-2v2h-1v-3h-1v1h-1v1h-1v-1h-1v4h-1v-1h-1v-4h-1v3h-2v-1h-1v2h-1v-1h-1v-2h-1v1h-1v1h-1v-2h-1v1h-1v-1h-1v15h-1v-14h-1v-1h-1v1h-1v2h-1v-1h-1v-2h-3v2h-1v-1h-1v-1h-1v1h-1v15h-1v-15h-1v3h-1v-2h-1v-1h-1v1h-2v-2h-1v2h-1v-2h-1v1h-1v2h-1v-3h-1v3h-1v11h-1v-14h-1v38h-1v-37h-1v-2h-1v1h-1v15h-1v-16h-1v2h-1v-2h-1v3h-1v-2h-2v4h-1v-4h-1v1h-1v3h-1v-4h-1v1h-2v2h-1v-2h-1v-1h-1v1h-1v1h-1v2h-1v-3h-3v-1h-1v3h-1v-2h-2v12h-1v-12h-1v1h-1v6h-1v28h-1v-36h-2v1h-1v4h-1v-3h-2v-3h-1v2h-1v13h-1v-14h-1v3h-1v-3h-1v-1h-1v3h-1v-1h-1v-1h-1v1h-1v-1h-1v2h-1v-2h-1v1h-1v-2h-1v15h-1v-14h-1v15h-1v-16h-1v1h-1v2h-2v-1h-1v-2h-2v2h-1v1h-1v-2h-1v2h-1v-2h-1v4h-1v-3h-1v-1h-1v4h-1v-1h-1v12h-1v-11h-1v-3h-1v2h-1v-1h-1v-3h-1v2h-2v1h-1v-1h-1v2h-1v-2h-1v2h-1v-1h-1v-1h-2v1h-1v-2h-2v1h-2v37h-1v-24h-1v-13h-1v-1h-1v2h-1v-2h-2v3h-1v-3h-3v-1h-1v2h-3v1h-1v2h-1v-1h-2v-2h-1v1h-1v-1h-1v-1h-3v1h-2v3h-1v-1h-1v-3h-1v2h-2v1h-2v-1h-1v-1h-1v1h-2v1h-1v-4h-1v10h-1v29h-1v-37h-1v-1h-2v1h-1v1h-1v-1h-2v-1h-2v2h-1v-1h-1v-1h-2v1h-1v-2h-1v1h-2v15h-1v-15h-1v3h-1v-2h-1v-2h-2v5h-1v-6h-1v3h-1v-2h-1v3h-1v34h-1v-35h-1v1h-1v1h-1v-3h-3v2h-1v-1h-1v-1h-1v15h-1v-13h-1v-2h-1v4h-1v-4h-1v3h-1v-4h-1v3h-1v-2h-1v2h-1v-2h-1v1h-1v13h-1v-13h-1v3h-1v-3h-3v-1h-1v1h-1v1h-1v35h-1v-36h-1v1h-1v-2h-1v1h-1v-2h-1v2h-1v-1h-1v3h-1v-4h-1v2h-1v-2h-1v1h-1v-1h-1v2h-2v-1h-2v1h-2v1h-1v-1h-1v2h-1v-2h-2v4h-1v-6h-1v15h-1v-15h-1v37h-1v-20h-1v-14h-1v-2h-1v2h-1v-1h-1v-1h-1v1h-2v-1h-1v15h-1v-14h-1v-2h-1v3h-1v2h-1v-1h-1v-1h-1v-1h-1v1h-1v-1h-1v1h-1v-2h-1v1h-1v-1h-2v1h-1v-1h-1v1h-2v1h-1v-1h-2v-1h-1v17h-1v21h-1v-36h-1v-2h-1v5h-1v28h-1v-31h-1v12h-1v-14h-2v1h-1v-1h-1v1h-1v-1h-1v1h-3v4h-1v-3h-1v-1h-1v15h-1v-14h-1v-1h-2v13h-1v-13h-1v2h-1v1h-1v-3h-1v1h-2v-1h-1v33h-1v-32h-3v-1h-1v-2h-1v3h-1v1h-2v-1h-1v-2h-2v3h-1v-2h-1v-2h-1v1h-2v1h-1v1h-1v-1h-1v-1h-1v2h-1v-3h-1v3h-1v-1h-1v-2h-1v37h-1v-27h-1v-9h-1v1h-1v1h-2v-2h-1v1h-1v2h-1v-3h-4v1h-1v3h-1v-4h-1v-1h-1v3h-1v-1h-1v2h-1v-2h-1v-1h-2v2h-1v-2h-1v2h-2v-2h-2v4h-1v-5h-1v3h-1v3h-1v-4h-1v1h-1v-1h-1v-1h-1v2h-2v-2h-1v1h-1v1h-1v-2h-1v18h-1v17h-1v-35h-1v2h-1v-2h-1v3h-3v-1h-1v-1h-1v1h-1v-1h-1v-1h-1v-1h-1v2h-1v-1h-2v-1h-2v3h-2v2h-1v-4h-2v2h-1v14h-1v-16h-2v3h-1v-2h-1v-1h-1v2h-1v-2h-1v4h-1v-3h-1v-1h-2v2h-3v-1h-1v1h-1v-2h-2v2h-1v-2h-1v3h-1v-1h-1v-1h-2v1h-1v-1h-1v-1h-1v1h-2v-2h-1v3h-2v-1h-2v-1h-1v3h-1v-1h-1v12h-1v-12h-2v-2h-1v1h-5v13h-1v-12h-1v-1h-1v-1h-2v2h-1v-1h-1v-1h-1v1h-1v2h-1v-2h-1v1h-1v-2h-1v2h-1v-2h-2v1h-1v33h-1v-33h-1v1h-1v-3h-1v14h-1v-12h-1v-1h-1v1h-1v-2h-1v16h-1v-13h-2v1h-1v-4h-1v1h-2v3h-1v10h-1v-12h-1v-1h-1v1h-1v-1h-2v2h-1v-1h-2v3h-1v-5h-1v5h-1v-2h-1v-2h-2v2h-1v2h-1v-1h-1v-1h-1v-2h-2v2h-1v-2h-4v4h-1v-3h-2v-1h-1v2h-1v-3h-1v3h-1v1h-2v11h-1v-13h-1v1h-1v-2h-1v9h-1v28h-1v-34h-1v-2h-1v2h-1v-2h-1v1h-1v-1h-2v1h-1v-2h-1v2h-1v-1h-2v2h-1v-1h-1v-1h-1v-1h-1v1h-1v-1h-1v5h-1v-5h-1v1h-1v2h-1v-4h-1v6h-1v-5h-1v-1h-1v2h-1v-1h-1v1h-1v-1h-1v2h-2v1h-1v-4h-1v3h-1v-2h-1v1h-2v13h-1v-13h-1v-2h-1v4h-1v11h-1v-13h-3v3h-1v-3h-1v2h-1v-2h-2v-1h-1v2h-1v-1h-1v1h-1v-2h-1v4h-1v-4h-1v1h-1v-2h-1v1h-1v4h-1v-4h-1v2h-1v-2h-3v4h-1v-2h-1v-1h-1v-1h-3v2h-1v35h-1v-28h-1v-9h-2v1h-2v12h-1v-14h-1v1h-1v2h-1v-1h-2v2h-1v-2h-1v1h-1v-2h-1v2h-1v11h-1v-13h-1v1h-1v-1h-1v2h-1v-3h-1v3h-1v-2h-1v2h-1v-1h-1v13h-1v-13h-1v-1h-1v2h-1v-1h-1v-2h-1v2h-1v-1h-2v1h-2v-1h-2v34h-1v-27h-1v-6h-1v1h-2v-1h-1v2h-2v-1h-1v-1h-3v2h-1v-2h-1v1h-1v-1h-3v1h-1v-1h-2v3h-1v-3h-1v-2h-1v2h-1v-1h-1v-1h-1v2h-1v35h-1v-32h-1v-4h-1v2h-1v-2h-1v2h-2v13h-1v-14h-2v-1h-1v1h-1v2h-1v-1h-1v1h-1v33h-1v-34h-1v30h-1v3h-1v-32h-1v-4h-2v1h-1v-1h-1v2h-1v-2h-1v1h-1v3h-1v-1h-1v13h-1v-13h-1v-2h-1v2h-1v-2h-1v1h-2v14h-1v-13h-2v-3h-1v1h-2v1h-1v-1h-1v1h-1v2h-1v-2h-1v-2h-1v4h-1v-3h-1v5h-1v-2h-1v-2h-4v-1h-2v1h-1v-1h-1v1h-1v33h-1v-31h-1v-1h-2v-1h-2v-1h-2v1h-1v2h-1v11h-1v-11h-1v-1h-1v-2h-1v1h-1v-1h-2v2h-1v-2h-1v3h-2v-1h-1v-1h-3v2h-1v-2h-1v-2h-1v1h-1v1h-2v2h-1v-3h-1v6h-1v-5h-1v-1h-1v4h-1v-3h-1v2h-1v-2h-2v-2h-1v1h-1v-1h-1v2h-1v1h-1v2h-1v-5h-1v3h-1v-3h-1v5h-1v-1h-1v-2h-1v1h-2v-3h-1v2h-1v-1h-1v2h-1v-1h-1v-1h-1v2h-5v-1h-1v-2h-1v5h-1v-1h-1v-3h-1v-2h-1v2h-2v1h-2v10h-1v22h-1v-31h-1v11h-1v-12h-3v14h-1v-15h-3v1h-1v2h-1v-4h-2v2h-1v3h-1v28h-1v-25h-1v-5h-1v-3h-1v2h-1v3h-1v-2h-2v1h-1v-2h-1v-2h-1v3h-1v-1h-1v-1h-1v1h-2v-1h-1v1h-1v31h-1v-31h-1v1h-2v-2h-1v-1h-1v1h-1v1h-1v1h-1v-2h-1v1h-1z"/>
<path d="M584 781h1v2h1v1h1v-1h1v1h1v-1h1v1h2v-1h4v1h1v1h1v-2h1v-1h2v3h2v-1h1v-2h1v3h1v-1h3v-1h3v1h1v-1h2v1h1v-1h2v1h2v-1h2v3h1v-2h2v-3h1v1h1v3h1v-1h1v-2h1v2h2v-1h2v-2h1v2h1v-1h1v1h1v1h3v1h1v-2h3v-2h1v2h1v-1h1v1h1v2h1v-3h1v2h1v1h1v-2h1v2h1v-5h1v3h1v3h1v-2h4v-3h1v3h2v-1h2v1h4v-3h1v1h1v1h1v1h1v-1h1v1h1v-1h1v1h1v-2h1v2h1v-1h1v1h1v-1h1v1h3v-3h1v3h2v1h1v-2h1v3h1v-3h1v-1h1v1h1v-2h1v3h2v-3h1v2h1v-1h2v2h1v-2h1v-1h1v2h1v-2h1v1h1v2h1v-1h1v1h1v-3h1v2h1v-1h1v2h1v-1h1v1h1v-2h1v3h1v-5h1v2h3v1h1v-2h1v2h1v1h1v-1h1v2h1v-1h1v1h1v-2h1v1h3v-3h1v3h1v-1h1v2h1v-5h1v4h1v-2h1v1h1v1h1v-1h1v1h1v-1h1v1h2v-1h1v1h1v-1h1v1h1v-4h1v4h1v-1h1v2h1v-3h1v2h1v-1h2v1h2v-1h1v1h1v-2h1v2h4v-2h1v3h1v-3h2v1h1v2h1v-1h1v-2h1v3h1v-3h1v1h1v2h1v-2h1v1h1v-1h1v1h1v1h3v-2h1v1h1v-2h1v2h3v-1h1v2h1v-1h1v-2h2v1h1v-1h1v2h1v-1h1v1h1v2h1v-3h1v-1h1v1h1v1h1v-1h1v-1h1v1h1v2h3v-1h2v-1h1v1h2v1h1v-1h1v1h1v-2h1v-1h2v2h2v1h2v-2h1v1h2v1h2v-3h3v1h1v2h1v-2h2v-1h1v3h1v-2h1v1h2v1h1v-2h1v2h2v-3h1v3h1v-2h1v1h1v-4h1v3h1v1h1v1h4v-1h1v-2h2v1h3v1h1v-1h1v1h1v-1h1v1h2v-6h1v5h4v2h1v-2h2v-1h1v1h1v2h1v-1h2v-1h1v1h1v-2h2v3h1v-2h2v1h1v-1h2v1h1v-2h1v2h1v-1h1v-1h1v2h1v-5h1v5h1v1h3v-2h1v2h1v-3h1v2h1v1h1v-2h1v2h1v-1h1v-3h1v4h1v-1h1v-1h1v1h1v-3h1v2h1v1h2v-1h3v-2h1v4h1v-1h1v-1h1v1h1v1h1v-1h5v-2h1v2h4v-2h2v3h1v-1h1v1h2v-2h1v2h1v-1h2v1h1v-1h3v-1h1v1h1v1h1v-1h1v-2h2v2h1v-3h1v2h1v1h1v-1h1v-1h1v2h1v-1h2v1h2v-2h1v2h1v-1h1v2h1v-1h1v-1h2v1h2v1h1v-3h2v1h2v1h1v-2h1v1h2v1h1v-2h3v1h1v-3h1v2h2v-2h1v2h1v2h3v-3h1v1h1v2h1v-1h1v1h4v-1h3v-1h2v3h1v-1h2v-1h1v2h1v-2h1v-2h1v3h1v-1h1v-1h1v2h2v1h1v-1h1v-1h2v-1h1v3h1v-3h2v4h1v-5h1v3h1v-1h2v1h2v-1h4v1h4v-5h1v4h1v1h3v-2h1v1h1v-1h1v2h1v-1h1v-1h1v1h1v2h1v-3h1v1h1v1h1v-2h1v-1h1v3h2v-2h1v-2h1v4h1v-4h1v4h1v-1h1v1h1v-1h2v1h1v-1h1v2h1v-1h1v-3h1v2h1v1h1v-2h2v1h3v-4h1v5h2v-1h1v1h2v-2h1v2h1v-1h2v1h1v1h1v-3h1v2h1v-1h1v-1h1v1h1v-1h1v3h2v-1h1v-1h1v3h1v-3h1v-1h1v1h2v1h2v1h1v-3h1v-2h1v4h1v-2h1v3h1v-1h3v-2h1v3h1v-4h1v1h1v1h1v1h3v-1h1v2h1v-1h1v1h1v-1h2v-1h1v1h1v-2h1v2h4v-1h1v-2h1v4h1v-2h1v-1h1v2h1v-1h3v2h1v-3h1v2h2v-2h1v1h7v1h2v-2h1v2h1v-1h1v1h2v1h1v-1h1v-2h1v1h4v-3h1v4h1v-1h1v2h1v-1h1v1h1v1h1v-2h6v1h1v-2h1v1h1v2h1v-4h1v2h1v-1h1v-1h1v2h2v-2h1v2h1v-2h1v2h1v1h1v-1h1v-2h1v3h1v-1h1v-1h1v-1h2v2h2v-1h2v2h1v-3h1v2h1v1h1v-2h1v1h1v1h1v-3h1v2h2v1h1v-2h2v-1h1v1h1v1h3v1h1v-3h1v1h2v1h1v1h1v-4h1v2h1v1h1v1h1v-2h2v1h2v-1h1v-1h1v3h2v-2h2v1h2v-1h5v2h1v-1h1v1h1v-1h2v-1h2v-1h2v2h1v-1h1v-1h1v1h2v1h1v1h1v-1h1v-1h1v-3h1v2h1v2h1v-2h2v-1h1v3h2v-1h1v1h2v-1h1v1h1v1h2v-1h1v-1h1v1h4v-1h3v1h1v-1h1v1h2v-1h1v-2h1v3h1v-2h1v1h1v-1h3v2h1v-2h1v2h1v-2h2v3h1v-1h1v1h1v-1h1v1h2v-2h1v1h1v-3h1v3h1v-4h1v5h1v-1h1v-2h2v1h1v3h1v-3h1v1h1v-2h1v2h1v2h1v-5h1v2h1v2h1v-5h1v4h1v-3h1v2h1v2h1v-3h1v1h5v1h1v-2h1v1h2v2h2v-2h2v1h1v1h1v-1h1v-1h1v2h1v-1h1v1h1v-1h4v-1h3v1h1v-1h1v1h1v-1h1v2h1v-4h1v3h2v-2h1v1h2v2h1v-2h1v2h1v-4h1v3h1v-1h1v-2h1v4h1v-1h1v-2h1v-2h1v4h1v-1h2v3h1v-6h1v5h1v-4h1v1h2v1h1v3h1v-3h1v2h1v-2h1v-1h2v3h1v-1h1v-1h1v2h1v-2h1v-1h1v1h1v3h1v-1h1v-1h2v1h1v-1h2v1h1v-3h1v1h1v2h1v-2h4v1h2v2h1v-1h1v-1h1v-2h1v3h1v-6h1v5h1v-1h3v-1h1v3h1v-2h1v-1h1v2h1v1h1v-2h2v1h1v-2h1v2h2v-2h1v2h1v-1h2v1h1v-1h1v-2h2v4h1v-2h1v1h1v-1h1v-1h1v1h2v-2h1v3h1v-1h1v2h1v-1h1v-2h1v-1h2v2h2v1h1v-1h1v1h1v-1h2v2h1v-1h1v1h1v-2h1v2h1v-1h1v-2h1v1h1v2h1v-1h1v-1h1v1h1v-1h1v1h2v-2h2v1h1v2h1v-1h1v-1h1v1h2v-2h1v-2h1v3h3v1h2v-5h1v4h1v1h1v-1h1v1h2v-1h1v-1h1v1h1v1h3v2h1v-3h1v-1h1v2h1v-1h2v1h1v-2h3v3h1v-3h1v1h2v1h1v-2h1v1h1v-1h1v2h1v-2h1v2h1v-2h1v2h1v-1h1v2h1v-3h1v2h1v1h1v-2h1v-2h1v2h1v-1h2v2h2v-2h1v1h3v-1h1v1h1v1h1v-1h1v2h1v-1h1v-1h1v1h2v-1h2v1h1v2h1v-3h1v1h2v-1h2v2h1v-1h1v1h1v-3h1v4h1v-3h1v1h1v-1h1v-1h1v2h1v-1h1v1h1v-1h1v2h1v-2h1v-1h1v1h1v2h1v-2h1v2h1v-5h1v4h1v-1h1v-2h1v3h2v1h2v-1h1v1h1v-2h2v1h1v-3h1v3h1v-1h2v1h1v-2h1v2h2v-2h1v2h2v1h1v-4h1v1h1v3h1v-3h1v3h1v-2h1v1h3v-1h2v2h1v-1h2v-1h2v1h2v1h1v-2h1v2h1v-2h1v1h1v-2h1v2h1v1h1v-1h1v2h1v-2h2v2h1v-2h1v-1h2v1h1v-1h1v-1h2v2h2v-2h2v2h1v-2h2v1h1v1h1v-1h1v1h1v2h1v-3h2v1h1v-1h2v1h1v-1h1v2h1v-2h1v-2h1v3h1v-1h1v1h1v-2h2v3h1v-2h1v2h1v-2h1v1h2v-1h1v1h1v1h1v-2h1v1h1v-1h1v1h1v1h1v-1h1v-2h1v1h1v-1h1v2h1v-2h1v4h2v-3h2v1h2v-1h1v2h1v-1h1v-1h1v1h2v-4h1v4h2v-1h1v1h4v1h1v-1h1v-1h1v3h1v-2h1v1h1v-1h1v-1h2v-2h1v4h1v-4h1v3h2v-1h2v2h2v-3h1v2h3v-2h1v2h1v-2h1v2h2v-2h1v2h1v1h1v-1h1v-1h1v2h1v-2h5v1h1v-1h1v-2h1v4h1v-2h2v1h1v-1h3v-1h2v2h3v-1h4v2h1v-1h2v-1h1v1h1v-4h1v2h1v1h1v1h1v-3h2v2h2v-2h1v3h2v-1h2v2h1v-1h2v2h1v-1h1v-1h2v-2h1v2h2v1h3v-2h1v-1h1v2h1v-1h1v-2h1v3h1v-1h1v-2h1v3h1v-1h2v1h1v-3h1v3h1v-1h4v-1h1v1h2v1h1v2h1v-1h1v-1h2v-1h1v1h1v-1h1v-3h1v3h1v-1h1v1h1v2h1v-2h1v1h2v-2h2v1h1v1h2v-1h1v1h1v1h1v-1h2v1h1v-1h4v-2h1v1h1v1h1v-1h1v-1h1v1h1V794h-1v2h-1v-1h-1v-1h-4v1h-1v-1h-1v-1h-1v2h-1v-1h-1v-1h-1v1h-1v1h-1v1h-1v18h-1v-17h-1v-2h-3v-1h-1v-1h-1v30h-1v-27h-1v-2h-3v-1h-1v1h-1v29h-1v-15h-1v13h-1v2h-1v-27h-1v-1h-2v-1h-1v-1h-3v2h-1v-2h-1v1h-1v-1h-1v4h-1v-3h-1v1h-1v-2h-3v6h-1v14h-1v-19h-1v-1h-1v1h-1v1h-1v1h-1v-1h-1v1h-1v16h-1v-17h-1v-1h-2v20h-1v-23h-1v3h-1v1h-1v-3h-1v2h-1v1h-1v-1h-5v5h-1v16h-1v-22h-1v1h-2v1h-1v19h-1v-20h-2v1h-1v8h-1v18h-1v-26h-2v2h-1v15h-1v-19h-1v1h-1v3h-1v-3h-1v-1h-1v1h-1v1h-1v-1h-1v-1h-1v1h-1v1h-1v-1h-2v-1h-2v1h-3v31h-1v-15h-1v-16h-1v-1h-1v3h-1v-2h-1v1h-1v-1h-1v4h-1v-2h-1v-3h-1v2h-1v10h-1v-9h-1v-2h-2v-1h-1v1h-1v2h-1v-1h-1v-2h-1v1h-1v1h-1v-1h-1v11h-1v-9h-1v1h-1v-2h-2v-1h-4v-1h-1v3h-1v-2h-2v1h-1v-1h-1v1h-1v1h-1v18h-1v-21h-1v2h-1v2h-1v-3h-1v18h-1v-17h-2v-1h-3v2h-1v1h-1v-2h-1v-1h-1v1h-1v-1h-2v11h-1v-10h-2v-1h-1v2h-2v-2h-1v28h-1v-16h-1v-11h-1v-1h-1v1h-1v-1h-1v1h-1v-1h-1v11h-1v-11h-2v-2h-1v2h-2v1h-1v10h-1v-11h-1v1h-2v-1h-3v1h-1v-1h-1v1h-1v-1h-1v1h-1v1h-1v-3h-2v2h-1v18h-1v-14h-1v-4h-1v-1h-1v2h-1v-3h-1v1h-1v-2h-1v1h-1v2h-1v-1h-1v1h-1v-2h-2v4h-1v-4h-1v3h-1v-2h-1v2h-1v-1h-1v-3h-1v4h-1v-3h-1v2h-1v-2h-2v1h-2v-1h-2v1h-2v-1h-2v1h-1v-1h-1v2h-2v-1h-1v2h-1v-2h-1v9h-1v-8h-1v-1h-3v1h-1v-1h-1v-2h-1v2h-4v-1h-1v3h-1v-2h-1v29h-1v-27h-1v4h-1v15h-1v-19h-1v9h-1v-8h-1v-1h-1v-2h-1v-1h-1v2h-1v-2h-1v1h-1v1h-1v-1h-1v1h-1v-1h-1v8h-1v21h-1v-28h-1v-3h-1v1h-1v1h-2v1h-2v-1h-1v-1h-2v1h-3v-2h-1v2h-1v18h-1v-18h-2v1h-1v-1h-1v1h-1v-1h-1v-1h-1v8h-1v11h-1v-18h-1v-1h-1v2h-2v1h-1v-1h-1v-1h-1v2h-1v-2h-1v19h-1v-18h-1v1h-2v-2h-1v-1h-1v22h-1v-17h-1v-3h-1v-3h-1v1h-1v1h-1v1h-2v-2h-1v1h-1v1h-1v1h-2v-1h-2v-1h-1v-2h-1v4h-1v-2h-1v2h-1v-3h-1v1h-1v21h-1v-23h-1v1h-1v3h-1v-2h-2v-1h-1v3h-2v-2h-2v3h-1v-3h-2v1h-1v-2h-1v1h-1v-1h-1v1h-1v-1h-1v4h-1v-4h-2v8h-1v12h-1v-19h-1v-1h-1v3h-1v3h-1v13h-1v-19h-1v3h-2v-3h-2v1h-1v-1h-1v1h-1v1h-1v-1h-1v2h-1v-3h-1v1h-2v2h-1v1h-1v-1h-1v-1h-1v-2h-1v-1h-1v2h-3v1h-1v-1h-2v6h-1v14h-1v-13h-1v-6h-2v-1h-2v1h-1v-1h-1v-1h-1v13h-1v-11h-1v2h-1v-2h-3v-1h-1v-1h-1v21h-1v-20h-2v-1h-1v2h-1v-1h-1v-1h-2v2h-2v-2h-2v1h-1v-1h-1v2h-1v-1h-1v-1h-2v1h-1v1h-4v-1h-1v1h-1v-3h-1v3h-1v-1h-1v4h-1v-5h-1v2h-2v-3h-2v7h-1v16h-1v-20h-1v-1h-1v-1h-1v3h-1v-2h-3v3h-1v-5h-1v1h-2v1h-1v19h-1v-18h-1v-2h-1v1h-1v1h-1v-1h-1v1h-1v-2h-1v1h-1v-1h-2v2h-1v-1h-1v1h-1v17h-1v-11h-1v19h-1v-25h-2v-1h-1v19h-1v-20h-1v4h-1v-2h-1v-3h-1v2h-2v-2h-1v1h-1v2h-1v-1h-1v-1h-2v1h-1v11h-1v-10h-1v-1h-2v3h-1v-2h-1v-2h-1v1h-1v1h-1v-1h-2v2h-2v17h-1v-21h-1v4h-1v-2h-1v29h-1v-28h-2v-1h-1v2h-1v-2h-1v1h-1v-2h-1v1h-1v19h-1v-18h-1v-1h-1v1h-1v-1h-1v1h-1v-1h-1v1h-1v-2h-1v2h-3v-1h-1v2h-1v16h-1v-16h-1v19h-1v-20h-3v4h-1v-5h-1v1h-1v-2h-1v1h-1v4h-1v-3h-1v-2h-1v2h-1v-2h-1v1h-1v2h-2v-1h-1v20h-1v-16h-1v-5h-1v-1h-1v2h-2v-1h-2v-1h-1v2h-1v-1h-1v-1h-1v2h-1v-2h-1v1h-4v-1h-1v2h-1v10h-1v15h-1v-24h-1v-2h-5v11h-1v-12h-1v2h-1v-1h-1v-2h-1v1h-1v2h-3v-1h-1v2h-1v-2h-1v1h-1v-1h-1v1h-1v1h-1v-2h-1v-1h-1v3h-1v-2h-2v-1h-1v2h-2v1h-2v-3h-1v3h-1v-1h-2v-1h-1v2h-1v-2h-1v10h-1v17h-1v-25h-1v-2h-1v2h-1v-2h-1v1h-2v-1h-1v-1h-1v1h-1v1h-1v-1h-1v-1h-1v2h-1v-2h-1v2h-1v-1h-1v-2h-1v22h-1v-17h-1v-1h-1v-2h-1v-1h-1v3h-1v-2h-1v-1h-1v3h-1v-4h-1v2h-1v36h-1v-36h-1v-1h-1v1h-2v1h-1v-2h-1v2h-2v1h-1v16h-1v-17h-4v9h-1v-10h-2v-1h-1v1h-1v2h-1v-1h-1v18h-1v-12h-1v-6h-1v-1h-1v3h-1v-4h-1v1h-1v1h-1v-2h-1v28h-1v-28h-1v1h-1v1h-1v-1h-1v1h-2v-1h-1v-1h-1v1h-1v1h-1v-2h-1v1h-1v-2h-1v1h-3v2h-1v-3h-1v4h-1v-1h-1v-1h-2v3h-1v-3h-1v1h-1v3h-1v17h-1v-19h-1v28h-1v-30h-1v-1h-1v1h-1v1h-1v-1h-1v-1h-1v3h-1v-3h-1v2h-1v16h-1v-16h-1v-1h-1v1h-1v-2h-1v2h-1v-2h-1v1h-3v1h-2v-1h-1v1h-1v-2h-2v3h-1v-1h-1v-2h-1v1h-2v-1h-1v1h-1v3h-1v23h-1v-17h-1v-9h-1v8h-1v21h-1v-29h-1v18h-1v-15h-1v-4h-1v3h-1v-3h-2v-1h-1v2h-1v1h-3v-2h-1v8h-1v13h-1v-21h-1v1h-1v1h-1v36h-1v-37h-1v2h-1v9h-1v-11h-1v-1h-1v2h-1v3h-1v22h-1v-26h-1v-1h-1v1h-2v1h-1v-1h-1v10h-1v-9h-1v-1h-1v2h-1v-2h-1v11h-1v-11h-1v-1h-1v3h-1v-1h-1v-1h-2v1h-1v2h-1v-3h-1v-1h-2v2h-2v25h-1v-25h-2v-2h-1v3h-1v-1h-2v-2h-1v1h-1v1h-1v-2h-1v1h-1v1h-1v-2h-2v3h-1v-4h-1v2h-1v1h-1v-1h-1v-1h-1v4h-1v-2h-1v2h-1v-3h-1v1h-1v-3h-1v3h-2v-2h-1v3h-1v-2h-1v2h-2v-2h-1v1h-1v-2h-2v2h-1v-3h-1v3h-1v-1h-2v11h-1v17h-1v-29h-1v1h-1v3h-1v-2h-1v11h-1v-10h-1v-3h-1v1h-1v-1h-1v3h-1v-2h-2v1h-1v2h-1v-4h-1v2h-3v-2h-1v3h-1v-1h-1v-1h-1v6h-1v13h-1v-19h-2v-2h-1v3h-1v-2h-1v3h-1v-2h-1v-1h-2v1h-1v2h-1v-3h-1v2h-1v1h-2v-3h-1v2h-2v1h-1v-3h-1v2h-1v-1h-3v-1h-1v2h-1v-1h-1v-1h-1v1h-2v2h-1v-2h-1v2h-2v-2h-1v2h-1v-2h-1v19h-1v-14h-1v-5h-1v2h-1v-1h-3v-1h-2v20h-1v-13h-1v-5h-2v-1h-1v3h-1v-3h-4v1h-2v1h-1v-1h-1v-2h-1v-2h-2v28h-1v-16h-1v-10h-2v21h-1v-22h-1v3h-1v1h-1v-2h-1v17h-1v-19h-1v1h-1v1h-2v-1h-1v-2h-1v2h-1v21h-1v-21h-1v2h-1v-1h-1v-2h-1v2h-2v-1h-1v1h-1v-1h-1v-1h-1v11h-1v-8h-1v-1h-2v3h-1v-4h-1v-1h-2v2h-1v-1h-1v2h-1v-2h-2v1h-1v-1h-4v-1h-2v1h-1v1h-1v-1h-1v6h-1v13h-1v-18h-1v-1h-1v-1h-1v2h-1v26h-1v-24h-1v-3h-1v10h-1v-10h-1v-1h-1v2h-2v-1h-3v-1h-1v1h-1v2h-1v-1h-1v3h-1v-4h-1v1h-1v-1h-1v2h-1v-2h-1v1h-1v1h-1v-3h-1v1h-2v2h-1v-1h-2v2h-1v-3h-2v2h-1v-3h-1v4h-1v-3h-1v2h-1v-1h-1v5h-1v12h-1v-17h-2v4h-1v15h-1v-20h-1v1h-1v-1h-1v11h-1v-10h-1v-2h-1v3h-1v-3h-1v4h-1v-3h-1v2h-1v-2h-2v10h-1v-9h-1v-1h-4v2h-1v-1h-1v2h-1v-2h-1v-1h-2v-1h-1v1h-2v1h-1v-2h-1v1h-1v48h-1v-48h-1v2h-1v-3h-3v22h-1v-22h-1v-1h-1v1h-1v1h-1v3h-1v-3h-1v-1h-1v2h-1v-1h-1v-1h-1v21h-1v-13h-1v-5h-2v-1h-2v-1h-3v1h-1v17h-1v-16h-1v-2h-1v1h-2v-1h-1v-1h-1v1h-1v-1h-1v2h-1v-1h-1v1h-1v12h-1v13h-1v-26h-1v1h-1v-1h-3v-1h-1v1h-1v-1h-1v1h-1v2h-1v-1h-2v1h-1v-1h-1v-1h-1v-1h-1v2h-1v1h-1v-3h-1v1h-1v-2h-1v1h-1v1h-1v2h-1v-2h-2v15h-1v15h-1v-30h-1v1h-3v-1h-2v20h-1v-18h-1v1h-1v-2h-1v2h-1v-2h-2v2h-1v23h-1v-27h-1v27h-1v2h-1v-27h-2v1h-2v-4h-1v5h-1v-2h-1v1h-1v-1h-1v1h-1v16h-1v-11h-1v-8h-1v2h-1v-1h-2v1h-1v20h-1v-20h-1v-2h-1v2h-1v-2h-1v1h-2v2h-1v-2h-1v1h-1v-1h-1v1h-1v1h-1v-1h-1v-1h-2v-1h-1v1h-2v-1h-1v2h-1v2h-1v-1h-1v-2h-2v31h-1v-31h-2v2h-1v-4h-1v4h-1v-2h-1v4h-1v-5h-1v1h-1v20h-1v-16h-1v-5h-2v3h-1v2h-1v-5h-1v1h-3v1h-3v-1h-1v-1h-1v2h-1v1h-1v-2h-2v-1h-1v1h-3v-1h-1v-1h-1v1h-2v1h-2v2h-1v-3h-1v2h-1v-1h-2v4h-1v-2h-1v-2h-1v3h-1v-3h-1v1h-2v-1h-4v2h-1v-1h-1v-1h-1v-1h-1v1h-1v1h-1v1h-1v-2h-4v3h-1v-3h-1v10h-1v-11h-1v2h-1v-1h-2v1h-3v-2h-1v29h-1v-16h-1v6h-1v-17h-1v2h-1v-3h-1v20h-1v-11h-1v-9h-1v2h-1v-1h-2v-1h-1v2h-1v-1h-1v3h-1v25h-1v-29h-2v-1h-1v1h-1v11h-1v-10h-1v2h-1v7h-1v-11h-1v2h-1v-1h-3v1h-1v-2h-2v11h-1v20h-1v-27h-1v-1h-1v-3h-1v3h-1v-2h-2v4h-1v-6h-1v1h-1v2h-1z"/>
<path d="M584 838h1v-1h2v1h1v-1h1v1h2v1h1v-1h1v-1h1v-1h1v3h1v-1h1v-1h2v1h1v-2h1v1h1v2h1v-1h1v1h1v-1h1v1h1v-1h2v-3h1v3h1v2h1v-1h3v-1h2v1h1v-2h1v1h1v-2h1v1h2v1h3v1h1v-1h3v-1h1v-1h1v1h1v3h1v-4h2v1h1v1h1v1h1v1h1v-2h1v1h1v-2h1v-3h1v3h2v1h1v2h1v-3h2v1h2v1h2v-1h1v1h3v-2h1v2h1v-1h1v1h1v-1h1v1h1v-1h2v-4h1v3h1v2h2v-1h2v1h1v-1h1v1h1v-2h1v1h1v1h1v-1h1v-1h1v2h2v-2h1v3h1v-2h1v1h3v-2h1v-1h1v3h2v-3h1v2h2v1h1v-2h1v2h1v-2h1v2h1v-1h1v-1h2v2h2v-4h1v3h1v-1h1v2h1v-1h2v-1h1v2h1v-1h1v-1h1v1h1v-1h2v2h1v-3h1v-1h1v3h2v-1h1v1h1v-2h1v1h1v1h1v1h1v-2h1v2h1v-1h1v-1h1v2h2v-1h1v-1h1v2h1v-3h1v2h2v-1h2v2h1v-7h1v5h5v1h1v-1h1v1h2v-2h1v2h3v-1h1v1h1v-1h1v1h1v1h1v-1h1v1h2v-1h1v-1h1v1h1v-1h1v-1h1v3h2v-1h2v1h1v-2h2v2h1v-2h2v1h1v-4h1v4h3v1h1v-1h2v1h1v-3h1v1h4v2h3v1h1v-2h1v-1h1v2h1v-1h1v1h1v-1h1v-1h2v1h3v2h1v-1h2v-3h1v1h1v2h3v1h1v-2h1v1h1v-2h1v1h1v-2h1v1h1v1h1v-1h2v2h2v-1h1v-1h1v-1h1v1h1v-1h1v3h1v-1h2v2h1v-4h2v3h3v-2h1v1h7v-1h1v3h1v-5h1v3h1v-1h1v-1h1v1h1v2h1v-1h1v-1h1v-1h1v3h1v-3h1v3h1v-2h1v2h2v-1h2v-1h1v2h2v-2h3v1h3v-2h1v1h1v1h3v-2h1v-1h1v3h1v-1h1v1h2v-1h2v2h1v-2h1v1h6v1h1v-2h1v1h2v-2h1v2h1v-1h2v2h1v-2h3v2h1v-3h1v3h1v-2h1v1h2v1h2v-2h1v1h1v-2h1v1h2v2h1v1h1v-3h2v1h1v-3h1v3h1v-2h1v1h2v-1h1v1h1v1h2v-1h1v1h1v-3h1v3h4v-1h1v1h1v-2h1v2h1v1h3v-3h1v1h3v-1h1v3h2v-1h1v1h1v-2h1v1h1v-2h2v4h1v-1h2v-3h1v1h2v1h1v1h1v1h1v-3h1v2h2v-1h2v1h1v-4h1v4h1v-2h1v3h2v-2h2v1h1v-1h2v-1h1v2h2v-1h1v1h1v1h2v-2h2v-2h1v1h1v2h1v-1h2v1h1v1h1v-1h1v-2h1v2h2v-2h1v2h1v-2h1v1h1v-1h1v1h1v1h1v-1h1v-1h1v1h1v-2h1v-1h1v2h1v1h1v-1h1v1h1v1h1v-2h1v2h1v-2h1v2h1v-1h1v-2h1v1h1v2h2v-1h1v-1h2v2h1v-1h2v1h1v-1h1v-4h1v4h5v-3h1v5h1v-2h1v1h1v-3h1v2h1v-2h1v1h1v3h1v-4h1v2h1v-1h1v-1h1v2h1v-1h3v-1h1v1h1v-1h1v1h1v2h1v-1h2v1h1v-4h1v4h1v-2h1v-2h1v3h2v-1h3v1h3v1h1v-1h1v1h1v-1h1v-6h1v4h1v1h1v2h1v-1h1v-1h1v2h1v-1h1v-1h2v1h1v1h1v1h1v-1h1v-1h2v1h1v-3h2v1h1v-1h1v2h2v1h1v-2h1v-1h2v1h1v1h1v-1h1v2h3v-1h1v-1h1v1h2v-1h1v2h2v-1h1v-1h2v2h2v-3h1v-1h1v3h1v1h1v-2h1v-1h1v2h1v-4h1v5h2v-2h1v2h1v-1h1v-1h1v-1h1v3h1v-2h2v2h1v-2h3v1h1v-2h1v3h3v-2h1v1h1v-1h1v2h1v-2h1v1h2v1h1v-1h2v1h1v-3h1v3h1v-1h1v-4h1v3h2v-1h1v3h1v-5h1v4h1v-2h1v3h1v-3h1v3h1v-2h1v1h2v-1h5v1h1v-1h1v1h1v-1h3v1h3v-2h1v2h1v1h2v-2h1v2h1v-2h1v2h1v-1h1v-1h2v2h2v-1h2v-1h1v3h1v-2h1v-3h1v2h1v1h1v2h1v-3h1v1h1v-1h1v-2h1v2h1v2h1v-2h1v1h2v-1h1v2h1v-1h1v-2h1v1h1v3h1v-2h1v1h1v-1h1v1h1v-1h2v-1h1v2h1v-1h1v-1h2v1h2v-1h2v2h1v-2h1v2h1v-3h1v3h1v-1h1v-1h2v-3h1v5h1v-2h1v1h1v1h1v-1h1v-2h1v1h2v2h2v-1h1v-1h1v-1h1v2h1v-2h3v3h1v-3h1v-1h1v4h1v-3h1v3h2v-1h1v-1h1v1h2v1h3v-3h1v2h3v1h1v-2h1v2h1v-1h2v1h1v-2h1v1h1v-1h1v1h1v2h1v-1h1v1h1v-2h1v-2h1v3h1v-1h1v1h1v-1h3v2h1v-1h2v-1h1v-2h1v2h1v-1h2v1h1v-1h1v2h1v-1h1v-1h1v2h2v-2h1v1h1v1h1v-3h1v2h1v1h1v-2h1v1h3v-2h3v2h2v-2h2v3h1v-3h1v2h1v1h1v-1h1v-1h1v2h1v-2h1v1h1v1h1v-4h1v3h2v-3h1v4h1v-1h1v1h1v-1h1v1h2v-1h2v1h3v-1h2v1h1v-2h2v1h2v1h1v-1h1v-1h1v1h1v1h1v-2h1v3h2v-1h1v-1h7v1h2v-1h1v1h1v-3h1v2h1v-1h1v-1h1v2h1v-2h1v1h1v1h1v1h4v-1h1v1h1v-2h1v-1h1v2h1v-1h1v2h1v-1h2v1h1v-1h1v-1h1v-1h1v3h4v-2h1v2h1v-1h1v1h2v-3h2v2h2v1h2v-2h1v1h1v-2h1v2h1v-1h1v-1h1v2h1v-2h1v2h2v-3h1v3h1v2h1v-1h1v-1h2v-1h1v1h1v-2h1v1h2v1h3v-3h1v1h1v2h1v-1h1v2h1v-1h2v1h1v-1h1v1h1v-3h1v3h1v-3h2v3h1v-1h1v-1h1v1h4v2h1v-4h1v3h2v-2h1v2h1v-1h2v1h1v-1h1v-2h1v1h1v2h1v-1h2v-1h1v-1h1v2h3v1h1v-2h1v-1h1v2h1v1h1v-2h1v1h2v-1h2v-2h1v5h1v-1h1v1h1v-2h1v2h1v-2h3v1h1v-3h1v1h1v2h1v-1h2v2h1v-2h1v-1h1v-1h1v3h1v-2h1v-2h1v3h1v-1h1v2h1v2h1v-3h1v2h1v-2h2v-2h1v1h2v2h1v-2h2v1h3v1h1v-1h1v1h1v-2h1v4h1v-2h1v-3h1v2h1v-2h1v2h1v-2h1v3h1v-2h1v1h1v1h1v-1h1v1h1v-2h1v3h1v-5h1v2h1v2h1v-2h2v2h1v-1h1v-4h1v4h2v1h1v-2h1v1h6v2h2v-3h1v1h1v-1h1v-1h1v3h1v-1h3v1h1v-1h1v-2h1v2h2v-2h1v3h1v-1h2v-1h1v3h1v-3h1v1h1v1h2v-1h1v1h2v-2h1v2h1v-3h1v1h1v1h1v-1h2v-1h2v1h1v1h2v-1h1v1h1v-2h1v3h1v-3h1v2h2v-2h1v2h2v1h2v-2h1v1h1v-1h2v1h3v-2h1v2h1v-1h1v1h2v-1h1v2h1v-3h1v2h2v1h2v-2h2v2h1v-1h2v1h1v-1h1v1h1v-2h1v2h2v-1h1v-1h1v-2h1v4h1v-2h1v-1h1v3h1v-2h1v2h1v-2h1v-1h1v2h1v-1h2v1h1v1h1v-3h3v2h1v2h1v-3h3v-1h1v-3h1v4h1v2h1v1h1v-2h3v1h1v-2h3v-1h1v2h1v-1h1v-1h1v3h1v-2h3v1h1v-1h1v-1h1v2h1v1h1v-2h2v1h1v-1h1v2h1v-1h1v-2h1v-1h1v1h1v3h1v-1h2v-3h1v4h1v-1h1v1h1v1h1v-3h2v3h1v-2h1v-2h2v4h1v-3h1v1h1v-1h1v1h1v-1h1v2h1v-1h1v1h1v-3h2v2h1v-1h1v2h1v-2h2v1h1v-1h2v2h1v-1h1v1h1v-3h3v1h1v2h2v-2h2v1h1v-1h1v1h1v1h1v-2h1v2h1v-2h1v2h1v-1h1v1h1v-2h1v1h1v1h1v-2h2v2h2v-2h1v1h1v1h1v-3h1v3h1v-1h1v1h2v-4h1v4h1v-1h2v-1h1v1h3v-2h1v3h1v1h1v-3h1v2h1v-1h2v1h1v-1h1v-1h1v2h1v-2h3v2h1v-2h1v1h1v2h1v-1h1v-2h1v2h1v1h1v-2h1v-1h3v2h1v-1h2v-2h1v2h4v-1h1v1h1v1h2v-2h1v2h1v-2h1v-2h1v3h2v1h1v-4h2v3h1v-1h1v1h1v1h1v-2h1v1h1v1h2v-1h1v-3h1v2h2v2h3v-2h1v2h1v1h1v-3h1v2h1v-4h1v3h1v1h1v-1h1v1h1v-2h1v1h1v1h1v-1h2v-1h1v-1h1v-1h1v3h2v-1h1v1h2V848h-1v2h-1v-2h-2v1h-1v-1h-1v1h-1v-1h-1v2h-1v-2h-1v-2h-1v1h-1v1h-1v4h-1v-3h-1v-1h-1v20h-1v-18h-1v-2h-1v4h-1v-4h-1v-1h-1v2h-1v21h-1v-22h-2v-3h-1v4h-1v-3h-1v5h-1v19h-1v-18h-1v18h-2v-20h-1v-3h-1v2h-1v-1h-2v1h-1v-2h-1v1h-2v-1h-1v2h-2v-1h-3v1h-1v1h-1v-1h-1v18h-1v-20h-1v2h-1v-1h-1v-1h-1v2h-2v4h-1v16h-1v-21h-1v-1h-1v11h-1v11h-1v-21h-2v-1h-1v5h-1v-6h-1v2h-1v1h-1v-2h-1v1h-1v1h-2v6h-1v14h-1v-20h-2v-2h-1v1h-1v20h-1v-20h-1v-1h-1v2h-1v-1h-1v22h-1v-19h-1v-2h-1v-1h-1v21h-1v-19h-1v-2h-2v1h-2v-3h-1v5h-1v-4h-2v2h-1v-1h-1v1h-1v-1h-1v2h-2v-2h-1v2h-1v-2h-1v22h-1v-21h-3v-1h-2v3h-1v-2h-1v-1h-1v1h-2v-1h-1v11h-1v-11h-1v1h-1v-2h-1v2h-1v-2h-1v1h-1v2h-1v-2h-1v1h-2v-1h-1v11h-1v-11h-2v1h-3v-2h-1v1h-1v-1h-1v4h-1v-3h-1v3h-1v-1h-1v-2h-1v1h-1v-3h-1v2h-1v18h-1v-19h-1v2h-1v1h-1v-1h-1v19h-1v-20h-1v-1h-1v2h-1v-1h-3v-1h-4v1h-1v2h-1v9h-1v-11h-1v3h-1v-1h-1v-2h-2v1h-1v21h-1v-17h-1v-5h-2v2h-1v-3h-2v2h-1v9h-1v-10h-1v1h-1v-1h-1v-2h-1v2h-2v10h-1v-9h-1v-2h-2v3h-1v-3h-1v2h-1v-1h-2v3h-1v-2h-1v-1h-1v2h-1v-2h-1v2h-2v19h-1v-21h-2v1h-1v-1h-1v2h-2v-2h-1v1h-2v-1h-2v2h-2v2h-1v-5h-2v2h-3v-2h-1v1h-1v1h-1v1h-1v-2h-1v-1h-1v2h-1v-1h-1v1h-2v3h-1v-3h-1v-1h-1v3h-1v-3h-2v1h-2v1h-1v-1h-1v-2h-1v11h-1v-10h-1v1h-3v-3h-1v5h-1v-4h-1v2h-1v-1h-1v1h-1v-1h-1v3h-1v-4h-1v12h-1v11h-1v-22h-1v1h-1v19h-1v-20h-1v9h-1v-8h-1v1h-1v-4h-1v4h-1v-3h-1v1h-2v2h-1v-2h-2v1h-1v9h-1v12h-1v-18h-1v-3h-5v-1h-1v1h-1v-1h-2v1h-2v-1h-2v1h-1v19h-1v-18h-1v-2h-2v-1h-1v3h-1v2h-1v-4h-2v20h-1v-15h-1v-5h-2v1h-1v-1h-1v-1h-1v1h-1v1h-1v7h-1v13h-1v-20h-1v-1h-1v-1h-1v2h-1v-2h-1v22h-1v-19h-1v-1h-1v1h-1v-3h-2v2h-1v-1h-1v1h-1v-2h-1v2h-2v1h-1v-2h-1v2h-1v-2h-1v2h-1v-2h-2v2h-1v-2h-1v1h-1v18h-1v-11h-1v-7h-3v-1h-2v1h-1v1h-1v-2h-2v1h-1v-2h-1v1h-1v1h-1v-1h-1v4h-1v-4h-1v1h-1v1h-1v-1h-1v2h-1v-3h-1v3h-1v16h-1v-19h-1v1h-1v-1h-2v21h-1v-17h-1v-4h-1v1h-1v1h-1v-2h-1v3h-1v-3h-1v1h-2v-1h-2v3h-1v-3h-1v1h-3v-1h-3v2h-1v-2h-1v1h-2v-2h-1v4h-1v-3h-1v1h-1v17h-1v-20h-1v2h-1v-1h-1v1h-1v-1h-1v1h-3v11h-1v-10h-2v-1h-1v1h-1v1h-1v-2h-1v2h-1v18h-1v-21h-1v1h-1v3h-1v-2h-1v-2h-1v1h-1v3h-1v-3h-1v-1h-1v1h-3v2h-1v-1h-1v2h-1v-2h-1v-3h-1v4h-1v-1h-5v-1h-1v5h-1v-5h-1v1h-1v-1h-1v-1h-1v3h-1v-2h-1v-1h-1v2h-1v6h-1v11h-1v-16h-1v-1h-2v-1h-1v1h-1v-2h-1v2h-1v1h-1v-2h-3v-1h-1v23h-1v-21h-3v-1h-2v2h-1v-1h-1v-2h-1v3h-1v-1h-1v-2h-2v3h-1v19h-1v-20h-1v21h-1v-13h-1v-10h-1v1h-1v20h-1v-15h-1v-4h-1v-1h-1v-1h-1v1h-2v2h-1v-2h-1v2h-1v-1h-3v3h-1v6h-1v-10h-1v2h-2v-2h-1v3h-1v-1h-1v-1h-1v-4h-1v2h-1v2h-1v-1h-1v2h-1v16h-1v-18h-1v1h-1v1h-1v20h-1v-22h-1v-1h-1v3h-1v-2h-1v-1h-1v2h-1v-1h-1v3h-1v19h-1v-20h-1v1h-1v-2h-2v1h-1v-2h-1v3h-1v-2h-1v-2h-2v2h-2v-3h-1v21h-1v-19h-1v18h-1v-18h-1v-1h-1v1h-2v-1h-2v3h-1v-2h-2v1h-1v-1h-1v2h-2v-1h-2v2h-1v-3h-1v20h-1v-19h-1v1h-1v-2h-1v-1h-2v2h-1v-2h-1v1h-1v2h-1v-2h-1v1h-1v1h-1v-3h-2v1h-5v3h-1v19h-1v-23h-1v2h-1v-2h-1v1h-1v1h-1v-2h-1v12h-1v-10h-1v4h-1v-5h-2v-1h-1v2h-1v1h-1v-2h-1v-1h-1v1h-2v1h-1v2h-1v-2h-1v-1h-1v3h-1v-3h-1v1h-2v-1h-1v1h-2v-2h-1v2h-1v2h-1v-2h-1v-1h-1v2h-1v-2h-1v1h-1v1h-1v-3h-1v6h-1v17h-1v-22h-1v1h-1v-2h-1v1h-1v2h-1v-2h-6v-1h-1v1h-1v1h-1v-3h-2v8h-1v16h-1v-21h-1v-1h-2v-1h-1v1h-1v-2h-1v4h-1v-3h-1v3h-1v9h-1v11h-1v-23h-1v1h-1v1h-1v-2h-1v1h-2v4h-1v-5h-1v3h-1v16h-1v-17h-1v-2h-1v3h-2v9h-1v-11h-2v3h-1v-4h-1v1h-1v8h-1v13h-1v-22h-1v1h-1v-2h-1v2h-1v1h-2v-1h-1v11h-1v11h-1v-23h-1v2h-1v-1h-1v2h-1v-3h-2v2h-1v-2h-1v1h-2v-1h-2v2h-1v1h-1v-3h-2v2h-1v-1h-1v1h-5v-1h-1v-1h-2v21h-1v-6h-1v8h-1v-22h-2v-1h-3v2h-1v-1h-1v1h-1v8h-1v12h-1v-20h-1v-1h-1v1h-1v-1h-1v1h-1v-1h-2v-1h-1v2h-3v-1h-2v2h-1v-3h-1v1h-1v3h-1v-2h-1v-1h-1v1h-1v1h-1v-1h-1v1h-1v20h-1v-23h-1v4h-1v-2h-1v21h-1v-22h-1v20h-1v-16h-1v-3h-2v-1h-1v1h-1v-2h-1v2h-1v-2h-1v1h-2v1h-1v4h-1v13h-1v-17h-1v-1h-1v2h-1v20h-1v-22h-1v2h-1v9h-1v-12h-1v2h-1v-2h-1v2h-1v21h-1v-15h-1v-6h-2v-1h-1v2h-1v-2h-1v11h-1v-9h-2v-1h-1v-1h-1v9h-1v-9h-1v1h-2v-1h-1v2h-1v-2h-2v1h-1v-1h-1v1h-2v-1h-1v1h-1v21h-1v-20h-1v-1h-1v-1h-1v-1h-1v2h-1v-1h-3v1h-1v-2h-2v3h-2v-3h-2v1h-2v1h-2v1h-1v-3h-1v2h-2v-1h-1v1h-1v-2h-1v2h-1v-1h-1v-1h-1v2h-1v-1h-2v2h-1v-2h-1v3h-1v-3h-1v-1h-1v1h-1v1h-2v-1h-1v-1h-1v2h-1v21h-1v-22h-1v2h-1v-3h-1v1h-1v11h-1v-10h-1v1h-1v-1h-1v-1h-1v-1h-1v2h-1v-1h-1v-1h-1v1h-1v1h-1v-1h-1v2h-2v-2h-1v3h-2v-2h-2v17h-1v-17h-1v-1h-1v1h-1v-3h-1v2h-1v-1h-1v6h-1v-5h-3v2h-1v-3h-1v1h-1v1h-2v-2h-2v2h-1v-2h-2v2h-1v1h-1v-2h-1v4h-1v-4h-1v1h-2v-1h-3v2h-1v-1h-3v2h-1v-4h-1v3h-1v17h-1v-18h-1v-1h-2v3h-1v-3h-1v2h-1v-3h-1v-1h-1v21h-1v-17h-1v-3h-1v1h-3v1h-1v-2h-1v2h-1v2h-1v-3h-3v-1h-2v1h-1v10h-1v12h-1v-22h-2v1h-1v18h-1v-19h-3v5h-1v14h-1v-20h-1v1h-2v1h-1v-1h-1v1h-2v20h-1v-21h-2v-1h-1v2h-1v-2h-1v2h-1v-2h-2v2h-1v-1h-1v9h-1v-8h-2v-1h-1v-1h-1v1h-1v1h-1v-1h-1v1h-1v-1h-2v1h-1v1h-1v-1h-1v1h-1v-1h-1v-1h-3v1h-1v-1h-2v2h-1v-3h-1v21h-1v-11h-1v-7h-1v-3h-1v12h-1v11h-1v-22h-1v-1h-1v12h-1v-9h-1v-1h-1v3h-1v-2h-1v-3h-1v2h-1v-1h-1v1h-2v2h-1v-2h-1v-1h-1v3h-1v-1h-1v-3h-1v2h-1v1h-2v-1h-3v-2h-1v1h-1v1h-1v3h-1v-2h-1v-1h-1v-1h-1v1h-1v-2h-1v1h-1v1h-3v5h-1v16h-1v-23h-2v5h-1v17h-1v-17h-1v-4h-2v11h-1v-10h-1v2h-1v-3h-3v1h-1v-1h-2v2h-1v8h-1v-7h-1v-3h-3v2h-1v-1h-1v-1h-1v3h-1v-2h-1v-2h-1v1h-2v-1h-1v2h-1v-1h-1v-1h-1v3h-1v20h-1v-9h-1v-13h-1v-1h-1v2h-1v10h-1v11h-1v-22h-1v2h-1v-2h-2v-1h-1v1h-1v2h-1v-2h-1v3h-1v-2h-1v19h-1v-19h-1v-1h-1v1h-1v-1h-1v-1h-1v1h-2v2h-1v1h-1v15h-1v-18h-4v2h-1v-1h-2v-1h-2v1h-3v21h-1v-13h-1v-9h-1v1h-2v1h-1v-2h-1v1h-2v-2h-1v1h-2v1h-1v-1h-1v2h-1v-2h-5v1h-1v3h-1v-3h-1v1h-1v-3h-1v2h-1v-1h-1v5h-1v17h-1v-12h-1v-10h-1v3h-1v-3h-1v1h-1v-1h-1v19h-1v-18h-1v1h-1v-1h-1v-1h-2v4h-1v-4h-1v22h-1v-22h-1v22h-2v-21h-1v2h-1v-3h-3v1h-1v-2h-3v2h-1v19h-1v-15h-1v-3h-2v-2h-1v1h-2v19h-1v-15h-1v-5h-1v-3h-1v3h-2v-1h-1v1h-1v1h-1v-2h-1v4h-1v-3h-1v1h-2v-1h-1v2h-1v-3h-1v2h-2v-1h-1v-1h-1v2h-1v1h-1v-1h-1v1h-1v20h-1v-17h-1v-3h-1v-2h-3v1h-1v1h-1v-2h-2v20h-1v-17h-2v-4h-1v1h-1v2h-1v-2h-2v2h-1v-1h-1v-1h-1v-1h-1v2h-2v2h-1v-4h-2v2h-1v-1h-2v-1h-1v2h-1v-1h-1v1h-2v-1h-1v1h-1v3h-1v-3h-1v-2h-1v2h-1v-1h-1v2h-1v-2h-3v2h-1v1h-1v-2h-1v-1h-2v1h-1v-1h-1v1h-2v-2h-1v1h-1v1h-1v-1h-1v2h-1v-2h-1v-1h-1v1h-2v-1h-2v3h-1v-1h-1v8h-1v-9h-1v2h-1v-2h-2v2h-2v2h-1v-3h-1v21h-1v-6h-1v4h-1v-17h-1v-2h-2v19h-1v-21h-1v1h-1v3h-1v-3h-1v-1h-1v1h-2v-1h-1v1h-1v22h-1v-12h-1v-10h-2v2h-1v7h-1v-7h-1v-2h-1v10h-1v-11h-1v3h-2v1h-1v-3h-1v1h-3v-2h-1v23h-1v-10h-1v-12h-2v1h-2v1h-1v-1h-3v-1h-1z"/>
</g>
<g shape-rendering="crispEdges">
<rect x="583" y="1" width="1" height="869" fill="#fff" fill-opacity="0.23"/>
<rect x="584" y="1" width="1" height="869" fill="#fff" fill-opacity="0.44"/>
<rect x="19" y="1" width="1" height="870" fill="#969696"/>
<rect x="19" y="870" width="1883" height="1" fill="#969696"/>
<rect x="20" y="842" width="5" height="1" fill="#8e8e8e"/>
<rect x="20" y="733" width="3" height="1" fill="#6e6e6e"/>
<rect x="20" y="625" width="3" height="1" fill="#6e6e6e"/>
<rect x="20" y="516" width="3" height="1" fill="#6e6e6e"/>
<rect x="20" y="408" width="3" height="1" fill="#6e6e6e"/>
<rect x="20" y="299" width="5" height="1" fill="#8e8e8e"/>
<rect x="20" y="190" width="3" height="1" fill="#6e6e6e"/>
<rect x="20" y="82" width="3" height="1" fill="#6e6e6e"/>
<rect x="82" y="867" width="1" height="3" fill="#6a6a6a"/>
<rect x="207" y="867" width="1" height="3" fill="#6a6a6a"/>
<rect x="333" y="867" width="1" height="3" fill="#6a6a6a"/>
<rect x="458" y="867" width="1" height="3" fill="#6a6a6a"/>
<rect x="584" y="865" width="1" height="5" fill="#8e8e8e"/>
<rect x="709" y="867" width="1" height="3" fill="#6a6a6a"/>
<rect x="835" y="867" width="1" height="3" fill="#6a6a6a"/>
<rect x="960" y="867" width="1" height="3" fill="#6a6a6a"/>
<rect x="1085" y="867" width="1" height="3" fill="#6a6a6a"/>
<rect x="1211" y="865" width="1" height="5" fill="#8e8e8e"/>
<rect x="1336" y="867" width="1" height="3" fill="#6a6a6a"/>
<rect x="1462" y="867" width="1" height="3" fill="#6a6a6a"/>
<rect x="1587" y="867" width="1" height="3" fill="#6a6a6a"/>
<rect x="1713" y="867" width="1" height="3" fill="#6a6a6a"/>
<rect x="1838" y="865" width="1" height="5" fill="#8e8e8e"/>
</g>
<g shape-rendering="crispEdges" fill="#1e1e1e">
<rect x="20" y="17" width="26" height="23"/>
<rect x="20" y="71" width="26" height="23"/>
<rect x="20" y="125" width="26" height="23"/>
<rect x="20" y="179" width="26" height="23"/>
<rect x="20" y="234" width="27" height="23"/>
<rect x="20" y="288" width="26" height="23"/>
<rect x="20" y="342" width="26" height="23"/>
<rect x="20" y="397" width="26" height="23"/>
<rect x="20" y="451" width="26" height="23"/>
<rect x="20" y="505" width="26" height="23"/>
<rect x="20" y="560" width="39" height="23"/>
<rect x="20" y="614" width="39" height="23"/>
<rect x="20" y="668" width="39" height="23"/>
<rect x="20" y="723" width="39" height="23"/>
<rect x="20" y="777" width="40" height="23"/>
<rect x="20" y="831" width="39" height="23"/>
</g>
<g shape-rendering="crispEdges">
<rect x="20" y="842" width="5" height="1" fill="#8e8e8e"/>
<rect x="20" y="733" width="3" height="1" fill="#6e6e6e"/>
<rect x="20" y="625" width="3" height="1" fill="#6e6e6e"/>
<rect x="20" y="516" width="3" height="1" fill="#6e6e6e"/>
<rect x="20" y="408" width="3" height="1" fill="#6e6e6e"/>
<rect x="20" y="299" width="5" height="1" fill="#8e8e8e"/>
<rect x="20" y="190" width="3" height="1" fill="#6e6e6e"/>
<rect x="20" y="82" width="3" height="1" fill="#6e6e6e"/>
</g>
<g font-family="'Liberation Sans', sans-serif" font-size="11.5" fill="#55f000">
<text x="23.2" y="32">0: 0</text>
<text x="23.2" y="87">1: 1</text>
<text x="23.2" y="141">2: 2</text>
<text x="23.2" y="195">3: 3</text>
<text x="23.2" y="249">4: 4</text>
<text x="23.2" y="304">5: 5</text>
<text x="23.2" y="358">6: 6</text>
<text x="23.2" y="412">7: 7</text>
<text x="23.2" y="467">8: 8</text>
<text x="23.2" y="521">9: 9</text>
<text x="23.2" y="575">10: 10</text>
<text x="23.2" y="630">11: 11</text>
<text x="23.2" y="684">12: 12</text>
<text x="23.2" y="738">13: 13</text>
<text x="23.2" y="793">14: 14</text>
<text x="23.2" y="847">15: 15</text>
</g>
<g font-family="'Liberation Sans', sans-serif" font-size="12.2" fill="#969696">
<text x="14.8" y="847.5" text-anchor="end">0</text>
<text x="14.8" y="738.8" text-anchor="end">2</text>
<text x="14.8" y="630.2" text-anchor="end">4</text>
<text x="14.8" y="521.6" text-anchor="end">6</text>
<text x="14.8" y="413.0" text-anchor="end">8</text>
<text x="14.8" y="304.4" text-anchor="end">10</text>
<text x="14.8" y="195.8" text-anchor="end">12</text>
<text x="14.8" y="87.2" text-anchor="end">14</text>
<text x="82.5" y="885.0" text-anchor="middle">-0.8</text>
<text x="207.5" y="885.0" text-anchor="middle">-0.6</text>
<text x="333.5" y="885.0" text-anchor="middle">-0.4</text>
<text x="458.5" y="885.0" text-anchor="middle">-0.2</text>
<text x="584.5" y="885.0" text-anchor="middle">0</text>
<text x="709.5" y="885.0" text-anchor="middle">0.2</text>
<text x="835.5" y="885.0" text-anchor="middle">0.4</text>
<text x="960.5" y="885.0" text-anchor="middle">0.6</text>
<text x="1085.5" y="885.0" text-anchor="middle">0.8</text>
<text x="1211.5" y="885.0" text-anchor="middle">1</text>
<text x="1336.5" y="885.0" text-anchor="middle">1.2</text>
<text x="1462.5" y="885.0" text-anchor="middle">1.4</text>
<text x="1587.5" y="885.0" text-anchor="middle">1.6</text>
<text x="1713.5" y="885.0" text-anchor="middle">1.8</text>
<text x="1838.5" y="885.0" text-anchor="middle">2</text>
</g>
</svg>
</div>
</div></body></html>
